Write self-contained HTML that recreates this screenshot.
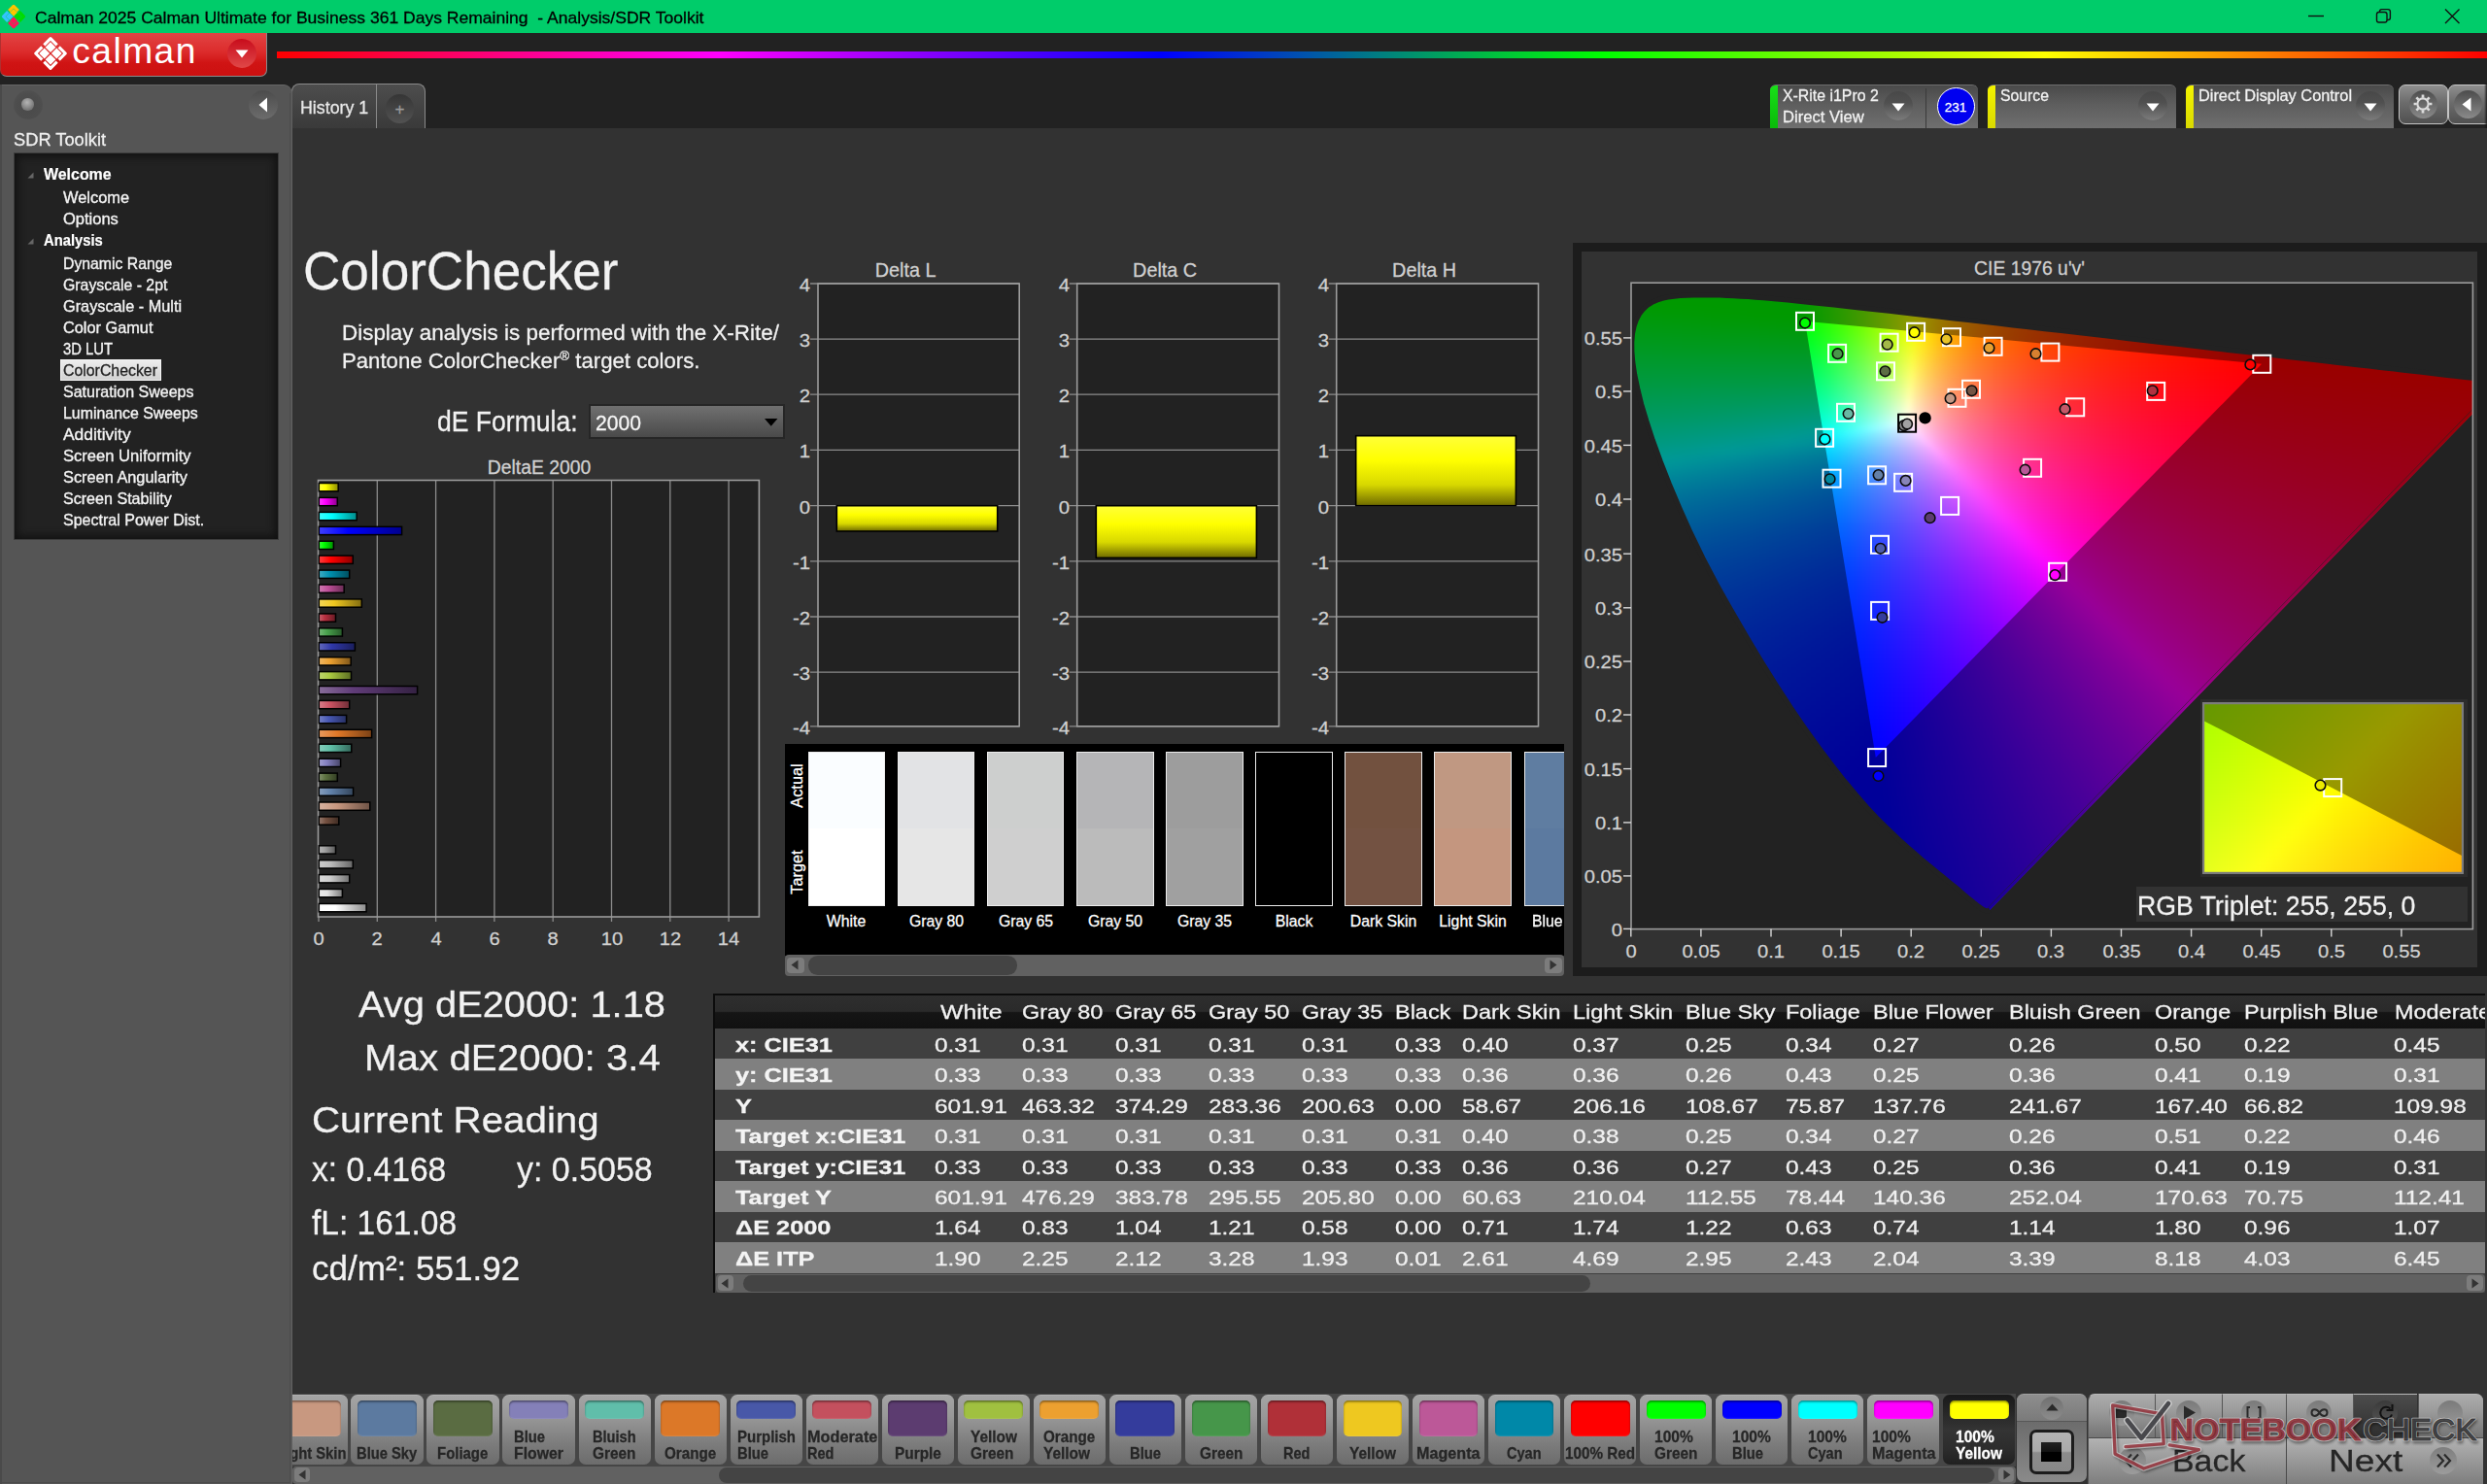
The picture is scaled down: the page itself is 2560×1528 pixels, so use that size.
<!DOCTYPE html>
<html lang="en"><head><meta charset="utf-8"><title>Calman 2025 - Analysis/SDR Toolkit</title>
<style>
html,body{margin:0;padding:0;background:#323232;}
body{width:2560px;height:1528px;position:relative;overflow:hidden;font-family:"Liberation Sans",sans-serif;}
div{position:absolute;box-sizing:border-box;}
.t{white-space:nowrap;-webkit-text-stroke:0.28px;}
.t sup{font-size:0.6em;vertical-align:0.62em;line-height:0;}
svg{position:absolute;overflow:visible;}
</style></head>
<body>
<!-- title bar -->
<div style="left:0.0px;top:0.0px;width:2560.0px;height:34.0px;background:#00cc6a;"></div>
<svg style="left:0px;top:2.95px" width="28" height="28" viewBox="-20.3 -20.3 40.6 40.6">
<g fill="none" stroke-width="4.6" stroke-linejoin="round" stroke-linecap="butt">
<path d="M-6.9 -8.4 L0 -15.3 L6.9 -8.4" stroke="#ffc400"/>
<path d="M-6.9 8.4 L0 15.3 L6.9 8.4" stroke="#ff1458"/>
<path d="M-8.4 -6.9 L-15.3 0 L-8.4 6.9" stroke="#33c4ff"/>
<path d="M8.4 -6.9 L15.3 0 L8.4 6.9" stroke="#00dc00"/>
</g>
<path d="M0 -11.7 L5.6 -6.1 L0 -0.5 L-5.6 -6.1 Z" fill="#ffc400"/>
<path d="M0 11.7 L5.6 6.1 L0 0.5 L-5.6 6.1 Z" fill="#ff1458"/>
<path d="M-11.7 0 L-6.1 -5.6 L-0.5 0 L-6.1 5.6 Z" fill="#33c4ff"/>
<path d="M11.7 0 L6.1 -5.6 L0.5 0 L6.1 5.6 Z" fill="#00dc00"/>
</svg>
<div class="t" style="left:35.5px;top:10.0px;font-size:17.0px;line-height:17.0px;color:#000;transform:scaleX(1.0311);transform-origin:left center;white-space:pre;">Calman 2025 Calman Ultimate for Business 361 Days Remaining  - Analysis/SDR Toolkit</div>
<svg style="left:2360px;top:0" width="200" height="34" viewBox="0 0 200 34">
<g fill="none" stroke="#111" stroke-width="1.4">
<path d="M16 16.5 H32"/>
<rect x="86.5" y="12.5" width="10.5" height="10.5" rx="2.2"/>
<path d="M89.5 12.3 V11.8 a2.2 2.2 0 0 1 2.2-2.2 h6.3 a2.4 2.4 0 0 1 2.4 2.4 v6.3 a2.2 2.2 0 0 1 -2.2 2.2 h-1"/>
<path d="M157 9.5 L171.5 24 M171.5 9.5 L157 24"/>
</g></svg>
<!-- top bar -->
<div style="left:0.0px;top:34.0px;width:2560.0px;height:97.7px;background:#222;"></div>
<div style="left:0.0px;top:34.0px;width:274.5px;height:44.8px;background:linear-gradient(#e24444 0%,#dc2b2b 45%,#d01414 70%,#cc1010 100%);border:1.5px solid #8a8a8a;border-top:none;border-left:1px solid #b03030;border-radius:0 0 7px 7px;"></div>
<svg style="left:31.5px;top:35.4px" width="40" height="40" viewBox="-20 -20 40 40">
<path d="M0 -15.3 L15.3 0 L0 15.3 L-15.3 0 Z" fill="none" stroke="#fff" stroke-width="3.1" stroke-linejoin="round" stroke-dasharray="9.4 2.84 9.4 0" />
<g fill="#fff">
<path d="M0 -11.7 L5.4 -6.3 L0 -0.9 L-5.4 -6.3 Z"/>
<path d="M0 11.7 L5.4 6.3 L0 0.9 L-5.4 6.3 Z"/>
<path d="M-11.7 0 L-6.3 -5.4 L-0.9 0 L-6.3 5.4 Z"/>
<path d="M11.7 0 L6.3 -5.4 L0.9 0 L6.3 5.4 Z"/>
</g></svg>
<div class="t" style="left:74.3px;top:34.3px;font-size:37.2px;line-height:37.2px;color:#fff;letter-spacing:1.45px;-webkit-text-stroke:0;">calman</div>
<div style="left:234.0px;top:40.0px;width:30.0px;height:30.0px;border-radius:50%;background:linear-gradient(#c80c1c,#e04848);"></div>
<svg style="left:242px;top:51px" width="14" height="9"><path d="M0.5 0.5 H13.5 L7 8.5 Z" fill="#fff"/></svg>
<div style="left:285.0px;top:52.5px;width:2275.0px;height:7.5px;background:linear-gradient(90deg,#ff0000 0%,#ff00ff 20%,#0000ff 40%,#00ff00 60%,#ffff00 80%,#ff0000 100%);"></div>
<!-- tabs -->
<div style="left:299.8px;top:86.3px;width:138.2px;height:45.4px;background:linear-gradient(#4d4d4d,#3a3a3a);border:1.2px solid #8a8a8a;border-bottom:none;border-radius:8px 8px 0 0;"></div>
<div style="left:387.2px;top:87.0px;width:1.2px;height:45.0px;background:#8a8a8a;"></div>
<div class="t" style="left:309.0px;top:102.3px;font-size:18.6px;line-height:18.6px;color:#e8e8e8;transform:scaleX(0.958);transform-origin:left center;">History 1</div>
<div style="left:396.5px;top:97.0px;width:29.5px;height:29.5px;border-radius:50%;background:linear-gradient(#353535,#525252);"></div>
<div class="t" style="left:411.5px;top:103.6px;font-size:17px;line-height:17px;color:#9a9a9a;transform:translateX(-50%) scaleX(1.0);transform-origin:center;">+</div>
<!-- device buttons -->
<div style="left:1821.5px;top:86.5px;width:214.5px;height:45.2px;background:linear-gradient(#4a4a4a 0%,#5e5e5e 45%,#6f6f6f 100%);border-radius:6px 6px 0 0;border-top:1px solid #6e6e6e;overflow:hidden;"><div style="left:0.0px;top:0.0px;width:8.5px;height:46.0px;background:linear-gradient(#18e018,#08b808);"></div></div>
<div class="t" style="left:1835.0px;top:90.1px;font-size:16.4px;line-height:16.4px;color:#f2f2f2;transform:scaleX(0.9678);transform-origin:left center;">X-Rite i1Pro 2</div>
<div class="t" style="left:1835.0px;top:112.4px;font-size:16.4px;line-height:16.4px;color:#f2f2f2;transform:scaleX(1.0141);transform-origin:left center;">Direct View</div>
<div style="left:1938.5px;top:94.0px;width:30.0px;height:30.0px;border-radius:50%;background:linear-gradient(#484848 0%,#505050 40%,#7c7c7c 100%);"></div>
<svg style="left:1946.5px;top:106px" width="14" height="9"><path d="M0.5 0.5 H13.5 L7 8.5 Z" fill="#fff"/></svg>
<div style="left:1982.0px;top:91.0px;width:1.2px;height:41.0px;background:#3a3a3a;"></div>
<div style="left:1993.5px;top:89.5px;width:39.0px;height:39.0px;border-radius:50%;background:#0000f0;border:1.5px solid #fff;"></div>
<div class="t" style="left:2013.0px;top:103.6px;font-size:13.5px;line-height:13.5px;color:#fff;transform:translateX(-50%) scaleX(1.0);transform-origin:center;">231</div>
<div style="left:2045.5px;top:86.5px;width:194.5px;height:45.2px;background:linear-gradient(#4a4a4a 0%,#5e5e5e 45%,#6f6f6f 100%);border-radius:6px 6px 0 0;border-top:1px solid #6e6e6e;overflow:hidden;"><div style="left:0.0px;top:0.0px;width:8.5px;height:46.0px;background:linear-gradient(#f4f400,#d8d800);"></div></div>
<div class="t" style="left:2059.0px;top:90.1px;font-size:16.4px;line-height:16.4px;color:#f2f2f2;transform:scaleX(0.9622);transform-origin:left center;">Source</div>
<div style="left:2200.5px;top:94.0px;width:30.0px;height:30.0px;border-radius:50%;background:linear-gradient(#484848 0%,#505050 40%,#7c7c7c 100%);"></div>
<svg style="left:2208.5px;top:106px" width="14" height="9"><path d="M0.5 0.5 H13.5 L7 8.5 Z" fill="#fff"/></svg>
<div style="left:2249.5px;top:86.5px;width:214.5px;height:45.2px;background:linear-gradient(#4a4a4a 0%,#5e5e5e 45%,#6f6f6f 100%);border-radius:6px 6px 0 0;border-top:1px solid #6e6e6e;overflow:hidden;"><div style="left:0.0px;top:0.0px;width:8.5px;height:46.0px;background:linear-gradient(#f4f400,#d8d800);"></div></div>
<div class="t" style="left:2263.0px;top:90.1px;font-size:16.4px;line-height:16.4px;color:#f2f2f2;transform:scaleX(0.997);transform-origin:left center;">Direct Display Control</div>
<div style="left:2425.0px;top:94.0px;width:30.0px;height:30.0px;border-radius:50%;background:linear-gradient(#484848 0%,#505050 40%,#7c7c7c 100%);"></div>
<svg style="left:2433px;top:106px" width="14" height="9"><path d="M0.5 0.5 H13.5 L7 8.5 Z" fill="#fff"/></svg>
<div style="left:2468.5px;top:86.5px;width:51.0px;height:41.5px;background:linear-gradient(#8e8e8e 0%,#6c6c6c 45%,#505050 100%);border:1.5px solid #c4c4c4;border-radius:7px;"></div>
<div style="left:2479.5px;top:92.5px;width:29.0px;height:29.0px;border-radius:50%;background:linear-gradient(#4c4c4c,#8a8a8a);"></div>
<svg style="left:2483px;top:96px" width="22" height="22" viewBox="-11 -11 22 22">
<g fill="none" stroke="#dcdcdc">
<circle r="5.6" stroke-width="2.1"/>
<g stroke-width="2.7" stroke-linecap="butt">
<path d="M0 -9.4 V-6.2 M0 9.4 V6.2 M-9.4 0 H-6.2 M9.4 0 H6.2"/>
<path d="M-6.65 -6.65 L-4.4 -4.4 M6.65 6.65 L4.4 4.4 M-6.65 6.65 L-4.4 4.4 M6.65 -6.65 L4.4 -4.4"/>
</g></g></svg>
<div style="left:2520.0px;top:86.5px;width:46.0px;height:41.5px;background:linear-gradient(#8e8e8e 0%,#6c6c6c 45%,#505050 100%);border:1.5px solid #c4c4c4;border-radius:7px;"></div>
<div style="left:2525.5px;top:92.5px;width:29.0px;height:29.0px;border-radius:50%;background:linear-gradient(#4c4c4c,#8a8a8a);"></div>
<svg style="left:2534px;top:100px" width="10" height="15"><path d="M9.5 0.5 V14.5 L0.5 7.5 Z" fill="#fff"/></svg>
<div style="left:2556.5px;top:86.0px;width:3.5px;height:46.0px;background:linear-gradient(90deg,rgba(20,20,20,0),rgba(20,20,20,0.85));"></div>
<!-- sidebar -->
<div style="left:0.0px;top:87.0px;width:301.0px;height:1445.0px;background:#555;border-top:1px solid #666;border-right:1.5px solid #5f5f5f;border-radius:0 9px 0 0;"></div>
<div style="left:0.0px;top:87.0px;width:1.5px;height:1445.0px;background:#4a4a4a;"></div>
<div style="left:298.2px;top:96.0px;width:1.0px;height:1430.0px;background:#4c4c4c;"></div>
<div style="left:1.5px;top:1525.5px;width:297.5px;height:1.0px;background:#4c4c4c;"></div>
<div style="left:13.5px;top:92.5px;width:30.0px;height:30.0px;border-radius:50%;background:radial-gradient(circle at 50% 55%,#4a4a4a 0%,#4d4d4d 55%,#555 100%);"></div>
<div style="left:22.0px;top:101.0px;width:12.5px;height:12.5px;border-radius:50%;background:radial-gradient(circle at 45% 35%,#b4b4b4 0%,#8c8c8c 45%,#5c5c5c 100%);"></div>
<div style="left:255.5px;top:92.5px;width:30.0px;height:30.0px;border-radius:50%;background:linear-gradient(#4c4c4c,#6c6c6c);"></div>
<svg style="left:265.5px;top:99.5px" width="10" height="16"><path d="M9 0.5 V15.5 L0.5 8 Z" fill="#fff"/></svg>
<div class="t" style="left:13.5px;top:134.6px;font-size:18.8px;line-height:18.8px;color:#f0f0f0;transform:scaleX(0.9727);transform-origin:left center;-webkit-text-stroke:0.3px #f0f0f0;">SDR Toolkit</div>
<div style="left:14.0px;top:157.0px;width:272.5px;height:399.0px;background:#222;box-shadow:inset 0 0 9px 3px #111;border:1px solid #3c3c3c;"></div>
<div class="t" style="left:45.0px;top:171.3px;font-size:16.2px;line-height:16.2px;color:#fff;font-weight:bold;transform:scaleX(0.9841);transform-origin:left center;-webkit-text-stroke:0.2px #fff;">Welcome</div>
<svg style="left:28px;top:177.1px" width="7" height="7"><path d="M6.5 0.5 V6.5 H0.5 Z" fill="#666"/></svg>
<div class="t" style="left:64.5px;top:195.2px;font-size:16.4px;line-height:16.4px;color:#f4f4f4;transform:scaleX(1.0022);transform-origin:left center;-webkit-text-stroke:0.35px #f4f4f4;">Welcome</div>
<div class="t" style="left:64.5px;top:217.3px;font-size:16.4px;line-height:16.4px;color:#f4f4f4;transform:scaleX(1.0067);transform-origin:left center;-webkit-text-stroke:0.35px #f4f4f4;">Options</div>
<div class="t" style="left:45.0px;top:239.4px;font-size:16.2px;line-height:16.2px;color:#fff;font-weight:bold;transform:scaleX(0.9124);transform-origin:left center;-webkit-text-stroke:0.2px #fff;">Analysis</div>
<svg style="left:28px;top:245.2px" width="7" height="7"><path d="M6.5 0.5 V6.5 H0.5 Z" fill="#666"/></svg>
<div class="t" style="left:64.5px;top:263.3px;font-size:16.4px;line-height:16.4px;color:#f4f4f4;transform:scaleX(0.9633);transform-origin:left center;-webkit-text-stroke:0.35px #f4f4f4;">Dynamic Range</div>
<div class="t" style="left:64.5px;top:285.3px;font-size:16.4px;line-height:16.4px;color:#f4f4f4;transform:scaleX(0.9658);transform-origin:left center;-webkit-text-stroke:0.35px #f4f4f4;">Grayscale - 2pt</div>
<div class="t" style="left:64.5px;top:307.3px;font-size:16.4px;line-height:16.4px;color:#f4f4f4;transform:scaleX(0.9933);transform-origin:left center;-webkit-text-stroke:0.35px #f4f4f4;">Grayscale - Multi</div>
<div class="t" style="left:64.5px;top:329.3px;font-size:16.4px;line-height:16.4px;color:#f4f4f4;transform:scaleX(0.995);transform-origin:left center;-webkit-text-stroke:0.35px #f4f4f4;">Color Gamut</div>
<div class="t" style="left:64.5px;top:351.2px;font-size:16.4px;line-height:16.4px;color:#f4f4f4;transform:scaleX(0.9026);transform-origin:left center;-webkit-text-stroke:0.35px #f4f4f4;">3D LUT</div>
<div style="left:61.5px;top:369.5px;width:104.0px;height:22.0px;background:linear-gradient(#ededed,#d2d2d2);border:1px solid #f4f4f4;"></div>
<div class="t" style="left:64.5px;top:373.2px;font-size:16.4px;line-height:16.4px;color:#222;transform:scaleX(0.9675);transform-origin:left center;-webkit-text-stroke:0.3px #222;">ColorChecker</div>
<div class="t" style="left:64.5px;top:395.2px;font-size:16.4px;line-height:16.4px;color:#f4f4f4;transform:scaleX(0.9777);transform-origin:left center;-webkit-text-stroke:0.35px #f4f4f4;">Saturation Sweeps</div>
<div class="t" style="left:64.5px;top:417.2px;font-size:16.4px;line-height:16.4px;color:#f4f4f4;transform:scaleX(0.9697);transform-origin:left center;-webkit-text-stroke:0.35px #f4f4f4;">Luminance Sweeps</div>
<div class="t" style="left:64.5px;top:439.1px;font-size:16.4px;line-height:16.4px;color:#f4f4f4;transform:scaleX(1.0621);transform-origin:left center;-webkit-text-stroke:0.35px #f4f4f4;">Additivity</div>
<div class="t" style="left:64.5px;top:461.1px;font-size:16.4px;line-height:16.4px;color:#f4f4f4;transform:scaleX(1.0105);transform-origin:left center;-webkit-text-stroke:0.35px #f4f4f4;">Screen Uniformity</div>
<div class="t" style="left:64.5px;top:482.8px;font-size:16.4px;line-height:16.4px;color:#f4f4f4;transform:scaleX(0.9965);transform-origin:left center;-webkit-text-stroke:0.35px #f4f4f4;">Screen Angularity</div>
<div class="t" style="left:64.5px;top:504.7px;font-size:16.4px;line-height:16.4px;color:#f4f4f4;transform:scaleX(0.9812);transform-origin:left center;-webkit-text-stroke:0.35px #f4f4f4;">Screen Stability</div>
<div class="t" style="left:64.5px;top:526.7px;font-size:16.4px;line-height:16.4px;color:#f4f4f4;transform:scaleX(0.978);transform-origin:left center;-webkit-text-stroke:0.35px #f4f4f4;">Spectral Power Dist.</div>
<!-- heading -->
<div class="t" style="left:311.5px;top:250.6px;font-size:56px;line-height:56px;color:#f2f2f2;transform:scaleX(0.9478);transform-origin:left center;">ColorChecker</div>
<div class="t" style="left:351.5px;top:330.9px;font-size:22.8px;line-height:22.8px;color:#f2f2f2;transform:scaleX(0.9837);transform-origin:left center;">Display analysis is performed with the X-Rite/</div>
<div class="t" style="left:351.5px;top:360.2px;font-size:22.8px;line-height:22.8px;color:#f2f2f2;transform:scaleX(0.9726);transform-origin:left center;">Pantone ColorChecker<sup>®</sup> target colors.</div>
<div class="t" style="left:450.0px;top:419.8px;font-size:28.9px;line-height:28.9px;color:#f2f2f2;transform:scaleX(0.9193);transform-origin:left center;">dE Formula:</div>
<div style="left:605.5px;top:416.0px;width:202.5px;height:35.5px;background:linear-gradient(#707070,#4a4a4a);border:2px solid #262626;"></div>
<div class="t" style="left:613.0px;top:425.2px;font-size:22.6px;line-height:22.6px;color:#f6f6f6;transform:scaleX(0.9348);transform-origin:left center;">2000</div>
<svg style="left:787px;top:431px" width="14" height="8"><path d="M0 0 H13.4 L6.7 7.8 Z" fill="#000"/></svg>
<!-- DeltaE 2000 chart -->
<div class="t" style="left:555.0px;top:471.7px;font-size:19.5px;line-height:19.5px;color:#d0d0d0;transform:translateX(-50%) scaleX(0.9932);transform-origin:center;">DeltaE 2000</div>
<svg style="left:0;top:0" width="2560" height="1528" viewBox="0 0 2560 1528">
<defs>
<linearGradient id="bg0" x1="0" x2="1" y1="0" y2="0"><stop offset="0" stop-color="#ffff3f"/><stop offset="0.35" stop-color="#ffff00"/><stop offset="1" stop-color="#8c8c00"/></linearGradient>
<linearGradient id="bg1" x1="0" x2="1" y1="0" y2="0"><stop offset="0" stop-color="#ff3fff"/><stop offset="0.35" stop-color="#ff00ff"/><stop offset="1" stop-color="#8c008c"/></linearGradient>
<linearGradient id="bg2" x1="0" x2="1" y1="0" y2="0"><stop offset="0" stop-color="#3fffff"/><stop offset="0.35" stop-color="#00ffff"/><stop offset="1" stop-color="#008c8c"/></linearGradient>
<linearGradient id="bg3" x1="0" x2="1" y1="0" y2="0"><stop offset="0" stop-color="#3f3fff"/><stop offset="0.35" stop-color="#0000ff"/><stop offset="1" stop-color="#00008c"/></linearGradient>
<linearGradient id="bg4" x1="0" x2="1" y1="0" y2="0"><stop offset="0" stop-color="#3fff3f"/><stop offset="0.35" stop-color="#00ff00"/><stop offset="1" stop-color="#008c00"/></linearGradient>
<linearGradient id="bg5" x1="0" x2="1" y1="0" y2="0"><stop offset="0" stop-color="#ff3f3f"/><stop offset="0.35" stop-color="#ff0000"/><stop offset="1" stop-color="#8c0000"/></linearGradient>
<linearGradient id="bg6" x1="0" x2="1" y1="0" y2="0"><stop offset="0" stop-color="#3fabc3"/><stop offset="0.35" stop-color="#0090b0"/><stop offset="1" stop-color="#004f60"/></linearGradient>
<linearGradient id="bg7" x1="0" x2="1" y1="0" y2="0"><stop offset="0" stop-color="#cf7bb3"/><stop offset="0.35" stop-color="#c0509a"/><stop offset="1" stop-color="#692c54"/></linearGradient>
<linearGradient id="bg8" x1="0" x2="1" y1="0" y2="0"><stop offset="0" stop-color="#f3d557"/><stop offset="0.35" stop-color="#f0c820"/><stop offset="1" stop-color="#846e11"/></linearGradient>
<linearGradient id="bg9" x1="0" x2="1" y1="0" y2="0"><stop offset="0" stop-color="#c9636f"/><stop offset="0.35" stop-color="#b83040"/><stop offset="1" stop-color="#651a23"/></linearGradient>
<linearGradient id="bg10" x1="0" x2="1" y1="0" y2="0"><stop offset="0" stop-color="#75b778"/><stop offset="0.35" stop-color="#48a04c"/><stop offset="1" stop-color="#275829"/></linearGradient>
<linearGradient id="bg11" x1="0" x2="1" y1="0" y2="0"><stop offset="0" stop-color="#6369bd"/><stop offset="0.35" stop-color="#3038a8"/><stop offset="1" stop-color="#1a1e5c"/></linearGradient>
<linearGradient id="bg12" x1="0" x2="1" y1="0" y2="0"><stop offset="0" stop-color="#f0b763"/><stop offset="0.35" stop-color="#eca030"/><stop offset="1" stop-color="#81581a"/></linearGradient>
<linearGradient id="bg13" x1="0" x2="1" y1="0" y2="0"><stop offset="0" stop-color="#bdd56f"/><stop offset="0.35" stop-color="#a8c840"/><stop offset="1" stop-color="#5c6e23"/></linearGradient>
<linearGradient id="bg14" x1="0" x2="1" y1="0" y2="0"><stop offset="0" stop-color="#876c99"/><stop offset="0.35" stop-color="#603c78"/><stop offset="1" stop-color="#342142"/></linearGradient>
<linearGradient id="bg15" x1="0" x2="1" y1="0" y2="0"><stop offset="0" stop-color="#d87e8a"/><stop offset="0.35" stop-color="#cc5464"/><stop offset="1" stop-color="#702e37"/></linearGradient>
<linearGradient id="bg16" x1="0" x2="1" y1="0" y2="0"><stop offset="0" stop-color="#7581c6"/><stop offset="0.35" stop-color="#4858b4"/><stop offset="1" stop-color="#273063"/></linearGradient>
<linearGradient id="bg17" x1="0" x2="1" y1="0" y2="0"><stop offset="0" stop-color="#e7995d"/><stop offset="0.35" stop-color="#e07828"/><stop offset="1" stop-color="#7b4216"/></linearGradient>
<linearGradient id="bg18" x1="0" x2="1" y1="0" y2="0"><stop offset="0" stop-color="#87cfbd"/><stop offset="0.35" stop-color="#60c0a8"/><stop offset="1" stop-color="#34695c"/></linearGradient>
<linearGradient id="bg19" x1="0" x2="1" y1="0" y2="0"><stop offset="0" stop-color="#a29fcf"/><stop offset="0.35" stop-color="#8480c0"/><stop offset="1" stop-color="#484669"/></linearGradient>
<linearGradient id="bg20" x1="0" x2="1" y1="0" y2="0"><stop offset="0" stop-color="#84936f"/><stop offset="0.35" stop-color="#5c7040"/><stop offset="1" stop-color="#323d23"/></linearGradient>
<linearGradient id="bg21" x1="0" x2="1" y1="0" y2="0"><stop offset="0" stop-color="#879fbd"/><stop offset="0.35" stop-color="#6080a8"/><stop offset="1" stop-color="#34465c"/></linearGradient>
<linearGradient id="bg22" x1="0" x2="1" y1="0" y2="0"><stop offset="0" stop-color="#d5b19f"/><stop offset="0.35" stop-color="#c89880"/><stop offset="1" stop-color="#6e5346"/></linearGradient>
<linearGradient id="bg23" x1="0" x2="1" y1="0" y2="0"><stop offset="0" stop-color="#967b6f"/><stop offset="0.35" stop-color="#745040"/><stop offset="1" stop-color="#3f2c23"/></linearGradient>
<linearGradient id="bg24" x1="0" x2="1" y1="0" y2="0"><stop offset="0" stop-color="#3f3f3f"/><stop offset="0.35" stop-color="#000000"/><stop offset="1" stop-color="#000000"/></linearGradient>
<linearGradient id="bg25" x1="0" x2="1" y1="0" y2="0"><stop offset="0" stop-color="#b7b7b7"/><stop offset="0.35" stop-color="#a0a0a0"/><stop offset="1" stop-color="#585858"/></linearGradient>
<linearGradient id="bg26" x1="0" x2="1" y1="0" y2="0"><stop offset="0" stop-color="#cbcbcb"/><stop offset="0.35" stop-color="#bababa"/><stop offset="1" stop-color="#666666"/></linearGradient>
<linearGradient id="bg27" x1="0" x2="1" y1="0" y2="0"><stop offset="0" stop-color="#dadada"/><stop offset="0.35" stop-color="#cecece"/><stop offset="1" stop-color="#717171"/></linearGradient>
<linearGradient id="bg28" x1="0" x2="1" y1="0" y2="0"><stop offset="0" stop-color="#eaeaea"/><stop offset="0.35" stop-color="#e4e4e4"/><stop offset="1" stop-color="#7d7d7d"/></linearGradient>
<linearGradient id="bg29" x1="0" x2="1" y1="0" y2="0"><stop offset="0" stop-color="#ffffff"/><stop offset="0.35" stop-color="#ffffff"/><stop offset="1" stop-color="#8c8c8c"/></linearGradient>
</defs>
<rect x="327.5" y="494.5" width="453.9" height="449.5" fill="#222"/>
<g stroke="#8c8c8c" stroke-width="1.3"><path d="M388.3 495 V949"/><path d="M448.6 495 V949"/><path d="M508.9 495 V949"/><path d="M569.2 495 V949"/><path d="M629.5 495 V949"/><path d="M689.8 495 V949"/><path d="M750.1 495 V949"/><path d="M328.0 944 V949"/></g>
<rect x="327.5" y="494.5" width="453.9" height="449.5" fill="none" stroke="#9c9c9c" stroke-width="1.6"/>
<rect x="328.3" y="497.5" width="19.9" height="8.3" fill="url(#bg0)" stroke="#000" stroke-width="1.5"/>
<rect x="328.3" y="512.4" width="19.0" height="8.3" fill="url(#bg1)" stroke="#000" stroke-width="1.5"/>
<rect x="328.3" y="527.4" width="38.9" height="8.3" fill="url(#bg2)" stroke="#000" stroke-width="1.5"/>
<rect x="328.3" y="542.3" width="85.3" height="8.3" fill="url(#bg3)" stroke="#000" stroke-width="1.5"/>
<rect x="328.3" y="557.2" width="15.1" height="8.3" fill="url(#bg4)" stroke="#000" stroke-width="1.5"/>
<rect x="328.3" y="572.1" width="35.0" height="8.3" fill="url(#bg5)" stroke="#000" stroke-width="1.5"/>
<rect x="328.3" y="587.1" width="31.4" height="8.3" fill="url(#bg6)" stroke="#000" stroke-width="1.5"/>
<rect x="328.3" y="602.0" width="25.9" height="8.3" fill="url(#bg7)" stroke="#000" stroke-width="1.5"/>
<rect x="328.3" y="616.9" width="44.0" height="8.3" fill="url(#bg8)" stroke="#000" stroke-width="1.5"/>
<rect x="328.3" y="631.9" width="17.2" height="8.3" fill="url(#bg9)" stroke="#000" stroke-width="1.5"/>
<rect x="328.3" y="646.8" width="24.1" height="8.3" fill="url(#bg10)" stroke="#000" stroke-width="1.5"/>
<rect x="328.3" y="661.7" width="37.1" height="8.3" fill="url(#bg11)" stroke="#000" stroke-width="1.5"/>
<rect x="328.3" y="676.7" width="32.9" height="8.3" fill="url(#bg12)" stroke="#000" stroke-width="1.5"/>
<rect x="328.3" y="691.6" width="33.2" height="8.3" fill="url(#bg13)" stroke="#000" stroke-width="1.5"/>
<rect x="328.3" y="706.5" width="101.3" height="8.3" fill="url(#bg14)" stroke="#000" stroke-width="1.5"/>
<rect x="328.3" y="721.4" width="31.4" height="8.3" fill="url(#bg15)" stroke="#000" stroke-width="1.5"/>
<rect x="328.3" y="736.4" width="28.3" height="8.3" fill="url(#bg16)" stroke="#000" stroke-width="1.5"/>
<rect x="328.3" y="751.3" width="54.3" height="8.3" fill="url(#bg17)" stroke="#000" stroke-width="1.5"/>
<rect x="328.3" y="766.2" width="33.5" height="8.3" fill="url(#bg18)" stroke="#000" stroke-width="1.5"/>
<rect x="328.3" y="781.2" width="22.3" height="8.3" fill="url(#bg19)" stroke="#000" stroke-width="1.5"/>
<rect x="328.3" y="796.1" width="19.0" height="8.3" fill="url(#bg20)" stroke="#000" stroke-width="1.5"/>
<rect x="328.3" y="811.0" width="35.3" height="8.3" fill="url(#bg21)" stroke="#000" stroke-width="1.5"/>
<rect x="328.3" y="826.0" width="52.5" height="8.3" fill="url(#bg22)" stroke="#000" stroke-width="1.5"/>
<rect x="328.3" y="840.9" width="20.5" height="8.3" fill="url(#bg23)" stroke="#000" stroke-width="1.5"/>
<rect x="328.3" y="870.8" width="17.2" height="8.3" fill="url(#bg25)" stroke="#000" stroke-width="1.5"/>
<rect x="328.3" y="885.7" width="35.0" height="8.3" fill="url(#bg26)" stroke="#000" stroke-width="1.5"/>
<rect x="328.3" y="900.6" width="31.4" height="8.3" fill="url(#bg27)" stroke="#000" stroke-width="1.5"/>
<rect x="328.3" y="915.5" width="24.1" height="8.3" fill="url(#bg28)" stroke="#000" stroke-width="1.5"/>
<rect x="328.3" y="930.5" width="48.8" height="8.3" fill="url(#bg29)" stroke="#000" stroke-width="1.5"/>
</svg>
<div class="t" style="left:328.0px;top:957.2px;font-size:19.2px;line-height:19.2px;color:#d0d0d0;transform:translateX(-50%) scaleX(1.05);transform-origin:center;">0</div>
<div class="t" style="left:388.3px;top:957.2px;font-size:19.2px;line-height:19.2px;color:#d0d0d0;transform:translateX(-50%) scaleX(1.05);transform-origin:center;">2</div>
<div class="t" style="left:448.6px;top:957.2px;font-size:19.2px;line-height:19.2px;color:#d0d0d0;transform:translateX(-50%) scaleX(1.05);transform-origin:center;">4</div>
<div class="t" style="left:508.9px;top:957.2px;font-size:19.2px;line-height:19.2px;color:#d0d0d0;transform:translateX(-50%) scaleX(1.05);transform-origin:center;">6</div>
<div class="t" style="left:569.2px;top:957.2px;font-size:19.2px;line-height:19.2px;color:#d0d0d0;transform:translateX(-50%) scaleX(1.05);transform-origin:center;">8</div>
<div class="t" style="left:629.5px;top:957.2px;font-size:19.2px;line-height:19.2px;color:#d0d0d0;transform:translateX(-50%) scaleX(1.05);transform-origin:center;">10</div>
<div class="t" style="left:689.8px;top:957.2px;font-size:19.2px;line-height:19.2px;color:#d0d0d0;transform:translateX(-50%) scaleX(1.05);transform-origin:center;">12</div>
<div class="t" style="left:750.1px;top:957.2px;font-size:19.2px;line-height:19.2px;color:#d0d0d0;transform:translateX(-50%) scaleX(1.05);transform-origin:center;">14</div>
<!-- readings -->
<div class="t" style="left:368.8px;top:1015.7px;font-size:37px;line-height:37px;color:#f2f2f2;transform:scaleX(1.0766);transform-origin:left center;">Avg dE2000: 1.18</div>
<div class="t" style="left:375.0px;top:1071.1px;font-size:37px;line-height:37px;color:#f2f2f2;transform:scaleX(1.0903);transform-origin:left center;">Max dE2000: 3.4</div>
<div class="t" style="left:321.0px;top:1135.2px;font-size:37.8px;line-height:37.8px;color:#f2f2f2;transform:scaleX(1.0661);transform-origin:left center;">Current Reading</div>
<div class="t" style="left:321.0px;top:1186.5px;font-size:34.8px;line-height:34.8px;color:#f2f2f2;transform:scaleX(0.9659);transform-origin:left center;">x: 0.4168</div>
<div class="t" style="left:532.4px;top:1186.5px;font-size:34.8px;line-height:34.8px;color:#f2f2f2;transform:scaleX(0.9757);transform-origin:left center;">y: 0.5058</div>
<div class="t" style="left:321.0px;top:1242.1px;font-size:34.8px;line-height:34.8px;color:#f2f2f2;transform:scaleX(0.9632);transform-origin:left center;">fL: 161.08</div>
<div class="t" style="left:321.0px;top:1288.5px;font-size:34.8px;line-height:34.8px;color:#f2f2f2;transform:scaleX(1.0071);transform-origin:left center;">cd/m²: 551.92</div>
<!-- delta charts -->
<svg style="left:0;top:0" width="2560" height="1528" viewBox="0 0 2560 1528">
<defs><linearGradient id="yg" x1="0" x2="0" y1="0" y2="1"><stop offset="0" stop-color="#ffff38"/><stop offset="0.35" stop-color="#ffff00"/><stop offset="0.7" stop-color="#d8d800"/><stop offset="1" stop-color="#6e6a00"/></linearGradient></defs>
<rect x="842.0" y="292.0" width="207.2" height="455.8" fill="#222"/>
<g stroke="#8c8c8c" stroke-width="1.3"><path d="M834.0 747.8 H1049.2"/><path d="M834.0 692.2 H1049.2"/><path d="M834.0 635.0 H1049.2"/><path d="M834.0 577.9 H1049.2"/><path d="M834.0 520.7 H1049.2"/><path d="M834.0 463.4 H1049.2"/><path d="M834.0 406.2 H1049.2"/><path d="M834.0 349.2 H1049.2"/><path d="M834.0 292.0 H1049.2"/></g>
<rect x="842.0" y="292.0" width="207.2" height="455.8" fill="none" stroke="#9c9c9c" stroke-width="1.6"/>
<rect x="861.3" y="520.7" width="165.4" height="26.3" fill="url(#yg)" stroke="#000" stroke-width="1.6"/>
<rect x="1108.7" y="292.0" width="207.8" height="455.8" fill="#222"/>
<g stroke="#8c8c8c" stroke-width="1.3"><path d="M1100.7 747.8 H1316.5"/><path d="M1100.7 692.2 H1316.5"/><path d="M1100.7 635.0 H1316.5"/><path d="M1100.7 577.9 H1316.5"/><path d="M1100.7 520.7 H1316.5"/><path d="M1100.7 463.4 H1316.5"/><path d="M1100.7 406.2 H1316.5"/><path d="M1100.7 349.2 H1316.5"/><path d="M1100.7 292.0 H1316.5"/></g>
<rect x="1108.7" y="292.0" width="207.8" height="455.8" fill="none" stroke="#9c9c9c" stroke-width="1.6"/>
<rect x="1128.3" y="520.7" width="165.1" height="53.7" fill="url(#yg)" stroke="#000" stroke-width="1.6"/>
<rect x="1375.7" y="292.0" width="207.8" height="455.8" fill="#222"/>
<g stroke="#8c8c8c" stroke-width="1.3"><path d="M1367.7 747.8 H1583.5"/><path d="M1367.7 692.2 H1583.5"/><path d="M1367.7 635.0 H1583.5"/><path d="M1367.7 577.9 H1583.5"/><path d="M1367.7 520.7 H1583.5"/><path d="M1367.7 463.4 H1583.5"/><path d="M1367.7 406.2 H1583.5"/><path d="M1367.7 349.2 H1583.5"/><path d="M1367.7 292.0 H1583.5"/></g>
<rect x="1375.7" y="292.0" width="207.8" height="455.8" fill="none" stroke="#9c9c9c" stroke-width="1.6"/>
<rect x="1395.7" y="448.7" width="164.7" height="72.0" fill="url(#yg)" stroke="#000" stroke-width="1.6"/>
</svg>
<div class="t" style="left:932.1px;top:269.2px;font-size:19.8px;line-height:19.8px;color:#d0d0d0;transform:translateX(-50%) scaleX(1.0);transform-origin:center;">Delta L</div>
<div class="t" style="left:833.8px;top:739.7px;font-size:19.2px;line-height:19.2px;color:#d0d0d0;transform:translateX(-100%) scaleX(1.06);transform-origin:right center;">-4</div>
<div class="t" style="left:833.8px;top:684.1px;font-size:19.2px;line-height:19.2px;color:#d0d0d0;transform:translateX(-100%) scaleX(1.06);transform-origin:right center;">-3</div>
<div class="t" style="left:833.8px;top:626.9px;font-size:19.2px;line-height:19.2px;color:#d0d0d0;transform:translateX(-100%) scaleX(1.06);transform-origin:right center;">-2</div>
<div class="t" style="left:833.8px;top:569.8px;font-size:19.2px;line-height:19.2px;color:#d0d0d0;transform:translateX(-100%) scaleX(1.06);transform-origin:right center;">-1</div>
<div class="t" style="left:833.8px;top:512.6px;font-size:19.2px;line-height:19.2px;color:#d0d0d0;transform:translateX(-100%) scaleX(1.06);transform-origin:right center;">0</div>
<div class="t" style="left:833.8px;top:455.3px;font-size:19.2px;line-height:19.2px;color:#d0d0d0;transform:translateX(-100%) scaleX(1.06);transform-origin:right center;">1</div>
<div class="t" style="left:833.8px;top:398.1px;font-size:19.2px;line-height:19.2px;color:#d0d0d0;transform:translateX(-100%) scaleX(1.06);transform-origin:right center;">2</div>
<div class="t" style="left:833.8px;top:341.1px;font-size:19.2px;line-height:19.2px;color:#d0d0d0;transform:translateX(-100%) scaleX(1.06);transform-origin:right center;">3</div>
<div class="t" style="left:833.8px;top:283.9px;font-size:19.2px;line-height:19.2px;color:#d0d0d0;transform:translateX(-100%) scaleX(1.06);transform-origin:right center;">4</div>
<div class="t" style="left:1199.1px;top:269.2px;font-size:19.8px;line-height:19.8px;color:#d0d0d0;transform:translateX(-50%) scaleX(1.0);transform-origin:center;">Delta C</div>
<div class="t" style="left:1100.5px;top:739.7px;font-size:19.2px;line-height:19.2px;color:#d0d0d0;transform:translateX(-100%) scaleX(1.06);transform-origin:right center;">-4</div>
<div class="t" style="left:1100.5px;top:684.1px;font-size:19.2px;line-height:19.2px;color:#d0d0d0;transform:translateX(-100%) scaleX(1.06);transform-origin:right center;">-3</div>
<div class="t" style="left:1100.5px;top:626.9px;font-size:19.2px;line-height:19.2px;color:#d0d0d0;transform:translateX(-100%) scaleX(1.06);transform-origin:right center;">-2</div>
<div class="t" style="left:1100.5px;top:569.8px;font-size:19.2px;line-height:19.2px;color:#d0d0d0;transform:translateX(-100%) scaleX(1.06);transform-origin:right center;">-1</div>
<div class="t" style="left:1100.5px;top:512.6px;font-size:19.2px;line-height:19.2px;color:#d0d0d0;transform:translateX(-100%) scaleX(1.06);transform-origin:right center;">0</div>
<div class="t" style="left:1100.5px;top:455.3px;font-size:19.2px;line-height:19.2px;color:#d0d0d0;transform:translateX(-100%) scaleX(1.06);transform-origin:right center;">1</div>
<div class="t" style="left:1100.5px;top:398.1px;font-size:19.2px;line-height:19.2px;color:#d0d0d0;transform:translateX(-100%) scaleX(1.06);transform-origin:right center;">2</div>
<div class="t" style="left:1100.5px;top:341.1px;font-size:19.2px;line-height:19.2px;color:#d0d0d0;transform:translateX(-100%) scaleX(1.06);transform-origin:right center;">3</div>
<div class="t" style="left:1100.5px;top:283.9px;font-size:19.2px;line-height:19.2px;color:#d0d0d0;transform:translateX(-100%) scaleX(1.06);transform-origin:right center;">4</div>
<div class="t" style="left:1466.1px;top:269.2px;font-size:19.8px;line-height:19.8px;color:#d0d0d0;transform:translateX(-50%) scaleX(1.0);transform-origin:center;">Delta H</div>
<div class="t" style="left:1367.5px;top:739.7px;font-size:19.2px;line-height:19.2px;color:#d0d0d0;transform:translateX(-100%) scaleX(1.06);transform-origin:right center;">-4</div>
<div class="t" style="left:1367.5px;top:684.1px;font-size:19.2px;line-height:19.2px;color:#d0d0d0;transform:translateX(-100%) scaleX(1.06);transform-origin:right center;">-3</div>
<div class="t" style="left:1367.5px;top:626.9px;font-size:19.2px;line-height:19.2px;color:#d0d0d0;transform:translateX(-100%) scaleX(1.06);transform-origin:right center;">-2</div>
<div class="t" style="left:1367.5px;top:569.8px;font-size:19.2px;line-height:19.2px;color:#d0d0d0;transform:translateX(-100%) scaleX(1.06);transform-origin:right center;">-1</div>
<div class="t" style="left:1367.5px;top:512.6px;font-size:19.2px;line-height:19.2px;color:#d0d0d0;transform:translateX(-100%) scaleX(1.06);transform-origin:right center;">0</div>
<div class="t" style="left:1367.5px;top:455.3px;font-size:19.2px;line-height:19.2px;color:#d0d0d0;transform:translateX(-100%) scaleX(1.06);transform-origin:right center;">1</div>
<div class="t" style="left:1367.5px;top:398.1px;font-size:19.2px;line-height:19.2px;color:#d0d0d0;transform:translateX(-100%) scaleX(1.06);transform-origin:right center;">2</div>
<div class="t" style="left:1367.5px;top:341.1px;font-size:19.2px;line-height:19.2px;color:#d0d0d0;transform:translateX(-100%) scaleX(1.06);transform-origin:right center;">3</div>
<div class="t" style="left:1367.5px;top:283.9px;font-size:19.2px;line-height:19.2px;color:#d0d0d0;transform:translateX(-100%) scaleX(1.06);transform-origin:right center;">4</div>
<!-- swatch strip -->
<div style="left:808.0px;top:765.5px;width:801.5px;height:218.0px;background:#000;"></div>
<div style="left:831.7px;top:773.7px;width:79.5px;height:159.0px;background:linear-gradient(#fafdff 0%,#fafdff 50%,#ffffff 50%,#ffffff 100%);border:1.5px solid #ececec;"></div>
<div class="t" style="left:871.4px;top:939.8px;font-size:16.3px;line-height:16.3px;color:#fff;transform:translateX(-50%) scaleX(0.97);transform-origin:center;">White</div>
<div style="left:923.8px;top:773.7px;width:79.5px;height:159.0px;background:linear-gradient(#e2e3e5 0%,#e2e3e5 50%,#e6e6e6 50%,#e6e6e6 100%);border:1.5px solid #ececec;"></div>
<div class="t" style="left:963.5px;top:939.8px;font-size:16.3px;line-height:16.3px;color:#fff;transform:translateX(-50%) scaleX(0.97);transform-origin:center;">Gray 80</div>
<div style="left:1015.9px;top:773.7px;width:79.5px;height:159.0px;background:linear-gradient(#cdcfce 0%,#cdcfce 50%,#cfcfcf 50%,#cfcfcf 100%);border:1.5px solid #ececec;"></div>
<div class="t" style="left:1055.6px;top:939.8px;font-size:16.3px;line-height:16.3px;color:#fff;transform:translateX(-50%) scaleX(0.97);transform-origin:center;">Gray 65</div>
<div style="left:1108.0px;top:773.7px;width:79.5px;height:159.0px;background:linear-gradient(#b5b5b7 0%,#b5b5b7 50%,#bbbbbb 50%,#bbbbbb 100%);border:1.5px solid #ececec;"></div>
<div class="t" style="left:1147.7px;top:939.8px;font-size:16.3px;line-height:16.3px;color:#fff;transform:translateX(-50%) scaleX(0.97);transform-origin:center;">Gray 50</div>
<div style="left:1200.1px;top:773.7px;width:79.5px;height:159.0px;background:linear-gradient(#9d9d9d 0%,#9d9d9d 50%,#a0a0a0 50%,#a0a0a0 100%);border:1.5px solid #ececec;"></div>
<div class="t" style="left:1239.8px;top:939.8px;font-size:16.3px;line-height:16.3px;color:#fff;transform:translateX(-50%) scaleX(0.97);transform-origin:center;">Gray 35</div>
<div style="left:1292.2px;top:773.7px;width:79.5px;height:159.0px;background:linear-gradient(#000000 0%,#000000 50%,#000000 50%,#000000 100%);border:1.5px solid #ececec;"></div>
<div class="t" style="left:1331.9px;top:939.8px;font-size:16.3px;line-height:16.3px;color:#fff;transform:translateX(-50%) scaleX(0.97);transform-origin:center;">Black</div>
<div style="left:1384.3px;top:773.7px;width:79.5px;height:159.0px;background:linear-gradient(#72513f 0%,#72513f 50%,#735242 50%,#735242 100%);border:1.5px solid #ececec;"></div>
<div class="t" style="left:1424.0px;top:939.8px;font-size:16.3px;line-height:16.3px;color:#fff;transform:translateX(-50%) scaleX(0.97);transform-origin:center;">Dark Skin</div>
<div style="left:1476.4px;top:773.7px;width:79.5px;height:159.0px;background:linear-gradient(#c09882 0%,#c09882 50%,#c4967f 50%,#c4967f 100%);border:1.5px solid #ececec;"></div>
<div class="t" style="left:1516.1px;top:939.8px;font-size:16.3px;line-height:16.3px;color:#fff;transform:translateX(-50%) scaleX(0.97);transform-origin:center;">Light Skin</div>
<div style="left:1568.5px;top:773.7px;width:41.0px;height:159.0px;background:linear-gradient(#5f7da1 0%,#5f7da1 50%,#5c7aa0 50%,#5c7aa0 100%);border:1.5px solid #ececec;border-right:none;"></div>
<div style="left:1558.5px;top:935.0px;width:51.0px;height:26.0px;overflow:hidden;"><div class="t" style="left:18.5px;top:4.6px;font-size:16.3px;line-height:16.3px;color:#fff;transform:scaleX(0.97);transform-origin:left center;">Blue Sky</div></div>
<div class="t" style="left:820.4px;top:809px;font-size:16.3px;line-height:16px;color:#fff;transform:translate(-50%,-50%) rotate(-90deg);">Actual</div>
<div class="t" style="left:820.4px;top:898px;font-size:16.3px;line-height:16px;color:#fff;transform:translate(-50%,-50%) rotate(-90deg);">Target</div>
<div style="left:808.0px;top:983.0px;width:801.5px;height:21.5px;background:#616161;border-radius:4px;"></div>
<div style="left:832.0px;top:984.0px;width:215.0px;height:19.5px;background:#444;border-radius:9.8px;"></div>
<div style="left:810.0px;top:985.5px;width:17.5px;height:16.5px;background:#7c7c7c;border-radius:4px;"></div>
<svg style="left:814.2px;top:988.2px" width="9" height="11"><path d="M7.5 0.5 V10.5 L0.5 5.5 Z" fill="#333"/></svg>
<div style="left:1590.0px;top:985.5px;width:17.5px;height:16.5px;background:#7c7c7c;border-radius:4px;"></div>
<svg style="left:1595.2px;top:988.2px" width="9" height="11"><path d="M0.5 0.5 V10.5 L7.5 5.5 Z" fill="#333"/></svg>
<!-- CIE chart panel -->
<div style="left:1618.5px;top:249.5px;width:945.0px;height:755.5px;background:#1c1c1c;"></div>
<div style="left:1628.0px;top:258.5px;width:921.5px;height:737.0px;background:#323232;"></div>
<svg style="left:1679.0px;top:291.2px;overflow:hidden" width="866.4" height="665.4" viewBox="1679.0 291.2 866.4 665.4">
<defs><clipPath id="locc"><path d="M2048.3 937.3 L2047.9 937.5 L2047.3 937.8 L2046.7 938.0 L2046.2 938.1 L2045.7 938.1 L2045.0 938.0 L2044.0 937.8 L2042.8 937.4 L2041.6 936.9 L2040.5 936.3 L2039.3 935.4 L2037.9 934.5 L2036.4 933.3 L2034.7 932.1 L2032.8 930.6 L2030.7 928.8 L2028.2 926.8 L2025.6 924.7 L2022.7 922.3 L2019.7 919.6 L2016.4 916.8 L2012.8 913.8 L2009.0 910.7 L2004.7 907.2 L2000.0 903.3 L1994.9 899.2 L1989.5 894.7 L1983.7 889.9 L1977.6 884.9 L1971.1 879.3 L1964.1 873.2 L1956.6 866.5 L1948.6 858.9 L1940.2 850.9 L1931.3 842.0 L1921.5 831.4 L1910.4 818.7 L1898.3 804.2 L1885.6 788.0 L1872.0 770.0 L1857.8 750.1 L1843.1 728.7 L1828.0 705.4 L1812.5 680.5 L1797.1 654.9 L1781.9 628.6 L1766.8 601.7 L1752.9 575.1 L1740.2 548.9 L1728.6 523.0 L1718.2 498.4 L1709.2 475.4 L1701.3 453.7 L1694.8 433.8 L1689.5 416.1 L1685.6 400.1 L1682.6 385.8 L1680.7 373.2 L1679.8 362.2 L1679.7 352.4 L1680.4 343.7 L1682.0 336.1 L1684.3 329.4 L1687.3 323.7 L1691.1 318.9 L1695.3 314.9 L1700.1 311.7 L1705.4 309.3 L1711.0 307.4 L1716.9 306.1 L1723.1 305.3 L1729.6 304.7 L1736.2 304.3 L1743.0 304.1 L1749.9 304.0 L1756.7 304.0 L1763.5 304.1 L1770.5 304.2 L1777.5 304.5 L1784.6 304.8 L1792.0 305.3 L1799.5 305.7 L1807.2 306.3 L1815.1 306.9 L1823.3 307.6 L1831.6 308.4 L1840.3 309.2 L1849.2 310.1 L1858.4 311.0 L1867.9 312.0 L1877.8 313.0 L1888.0 314.1 L1898.6 315.3 L1909.5 316.5 L1920.8 317.8 L1932.5 319.1 L1944.6 320.4 L1957.1 321.8 L1970.0 323.3 L1983.4 324.8 L1997.1 326.4 L2011.3 328.0 L2025.9 329.7 L2040.9 331.4 L2056.3 333.2 L2072.1 335.0 L2088.3 336.9 L2104.8 338.8 L2121.6 340.7 L2138.8 342.7 L2156.1 344.7 L2173.7 346.7 L2191.3 348.8 L2208.9 350.8 L2226.1 352.8 L2243.1 354.7 L2260.0 356.7 L2276.8 358.6 L2293.5 360.5 L2309.7 362.4 L2325.3 364.2 L2340.3 365.9 L2354.8 367.5 L2368.7 369.1 L2382.0 370.7 L2394.6 372.1 L2406.6 373.5 L2417.9 374.8 L2428.5 376.0 L2438.6 377.2 L2448.0 378.3 L2456.9 379.3 L2464.7 380.2 L2472.0 381.0 L2480.9 382.0 L2493.0 383.4 L2506.8 385.0 L2519.2 386.5 L2528.9 387.6 L2537.2 388.5 L2544.4 389.3 L2550.2 390.0 L2554.9 390.5 L2559.3 391.1 L2564.1 391.6 L2568.7 392.1 L2572.4 392.6 L2574.8 392.8 L2576.4 393.0 L2577.4 393.1 Z"/></clipPath><filter id="cblur" color-interpolation-filters="sRGB" x="-5%" y="-5%" width="110%" height="110%"><feGaussianBlur stdDeviation="5.5"/></filter></defs>
<rect x="1679.0" y="291.2" width="866.4" height="665.4" fill="#222"/>
<g clip-path="url(#locc)"><g filter="url(#cblur)" shape-rendering="crispEdges" fill="none" stroke-width="11">
<path d="M1691 296h161" stroke="#00ff00"/>
<path d="M1851 296h11" stroke="#06ff00"/>
<path d="M1861 296h11" stroke="#16ff00"/>
<path d="M1871 296h11" stroke="#27ff00"/>
<path d="M1681 306h171" stroke="#00ff00"/>
<path d="M1851 306h11" stroke="#03ff00"/>
<path d="M1861 306h11" stroke="#14ff00"/>
<path d="M1871 306h11" stroke="#25ff00"/>
<path d="M1881 306h11" stroke="#37ff00"/>
<path d="M1891 306h11" stroke="#4aff00"/>
<path d="M1901 306h11" stroke="#5eff00"/>
<path d="M1911 306h11" stroke="#72ff00"/>
<path d="M1921 306h11" stroke="#87ff00"/>
<path d="M1931 306h11" stroke="#9eff00"/>
<path d="M1941 306h11" stroke="#b5ff00"/>
<path d="M1951 306h11" stroke="#cdff00"/>
<path d="M1961 306h11" stroke="#e6ff00"/>
<path d="M1671 316h11" stroke="#00ff03"/>
<path d="M1681 316h11" stroke="#00ff02"/>
<path d="M1691 316h11" stroke="#00ff01"/>
<path d="M1701 316h151" stroke="#00ff00"/>
<path d="M1851 316h11" stroke="#01ff00"/>
<path d="M1861 316h11" stroke="#12ff00"/>
<path d="M1871 316h11" stroke="#23ff00"/>
<path d="M1881 316h11" stroke="#36ff00"/>
<path d="M1891 316h11" stroke="#49ff00"/>
<path d="M1901 316h11" stroke="#5dff00"/>
<path d="M1911 316h11" stroke="#72ff00"/>
<path d="M1921 316h11" stroke="#87ff00"/>
<path d="M1931 316h11" stroke="#9eff00"/>
<path d="M1941 316h11" stroke="#b6ff00"/>
<path d="M1951 316h11" stroke="#ceff00"/>
<path d="M1961 316h11" stroke="#e8ff00"/>
<path d="M1971 316h11" stroke="#fffa00"/>
<path d="M1981 316h11" stroke="#ffe200"/>
<path d="M1991 316h11" stroke="#ffcc00"/>
<path d="M2001 316h11" stroke="#ffba00"/>
<path d="M2011 316h11" stroke="#ffaa00"/>
<path d="M2021 316h11" stroke="#ff9b00"/>
<path d="M2031 316h11" stroke="#ff8f00"/>
<path d="M2041 316h11" stroke="#ff8300"/>
<path d="M2051 316h11" stroke="#ff7900"/>
<path d="M1671 326h21" stroke="#00ff0e"/>
<path d="M1691 326h11" stroke="#00ff0d"/>
<path d="M1701 326h11" stroke="#00ff0c"/>
<path d="M1711 326h11" stroke="#00ff0b"/>
<path d="M1721 326h11" stroke="#00ff0a"/>
<path d="M1731 326h11" stroke="#00ff09"/>
<path d="M1741 326h11" stroke="#00ff08"/>
<path d="M1751 326h11" stroke="#00ff06"/>
<path d="M1761 326h11" stroke="#00ff05"/>
<path d="M1771 326h11" stroke="#00ff04"/>
<path d="M1781 326h11" stroke="#00ff03"/>
<path d="M1791 326h11" stroke="#00ff02"/>
<path d="M1801 326h61" stroke="#00ff00"/>
<path d="M1861 326h11" stroke="#0fff00"/>
<path d="M1871 326h11" stroke="#21ff00"/>
<path d="M1881 326h11" stroke="#34ff00"/>
<path d="M1891 326h11" stroke="#47ff00"/>
<path d="M1901 326h11" stroke="#5cff00"/>
<path d="M1911 326h11" stroke="#71ff00"/>
<path d="M1921 326h11" stroke="#87ff00"/>
<path d="M1931 326h11" stroke="#9eff00"/>
<path d="M1941 326h11" stroke="#b6ff00"/>
<path d="M1951 326h11" stroke="#d0ff00"/>
<path d="M1961 326h11" stroke="#eaff00"/>
<path d="M1971 326h11" stroke="#fff800"/>
<path d="M1981 326h11" stroke="#ffdf00"/>
<path d="M1991 326h11" stroke="#ffca00"/>
<path d="M2001 326h11" stroke="#ffb700"/>
<path d="M2011 326h11" stroke="#ffa700"/>
<path d="M2021 326h11" stroke="#ff9900"/>
<path d="M2031 326h11" stroke="#ff8c00"/>
<path d="M2041 326h11" stroke="#ff8100"/>
<path d="M2051 326h11" stroke="#ff7600"/>
<path d="M2061 326h11" stroke="#ff6d00"/>
<path d="M2071 326h11" stroke="#ff6500"/>
<path d="M2081 326h11" stroke="#ff5d00"/>
<path d="M2091 326h11" stroke="#ff5600"/>
<path d="M2101 326h11" stroke="#ff5000"/>
<path d="M2111 326h11" stroke="#ff4a00"/>
<path d="M2121 326h11" stroke="#ff4400"/>
<path d="M2131 326h11" stroke="#ff3f00"/>
<path d="M1671 336h11" stroke="#00ff1b"/>
<path d="M1681 336h11" stroke="#00ff1a"/>
<path d="M1691 336h11" stroke="#00ff19"/>
<path d="M1701 336h11" stroke="#00ff18"/>
<path d="M1711 336h21" stroke="#00ff17"/>
<path d="M1731 336h11" stroke="#00ff16"/>
<path d="M1741 336h11" stroke="#00ff15"/>
<path d="M1751 336h11" stroke="#00ff14"/>
<path d="M1761 336h11" stroke="#00ff13"/>
<path d="M1771 336h11" stroke="#00ff12"/>
<path d="M1781 336h11" stroke="#00ff11"/>
<path d="M1791 336h11" stroke="#00ff10"/>
<path d="M1801 336h11" stroke="#00ff0f"/>
<path d="M1811 336h11" stroke="#00ff0e"/>
<path d="M1821 336h11" stroke="#00ff0d"/>
<path d="M1831 336h11" stroke="#00ff0b"/>
<path d="M1841 336h11" stroke="#00ff0a"/>
<path d="M1851 336h11" stroke="#00ff09"/>
<path d="M1861 336h11" stroke="#0dff07"/>
<path d="M1871 336h11" stroke="#1fff06"/>
<path d="M1881 336h11" stroke="#32ff05"/>
<path d="M1891 336h11" stroke="#46ff03"/>
<path d="M1901 336h11" stroke="#5aff01"/>
<path d="M1911 336h11" stroke="#70ff00"/>
<path d="M1921 336h11" stroke="#87ff00"/>
<path d="M1931 336h11" stroke="#9eff00"/>
<path d="M1941 336h11" stroke="#b7ff00"/>
<path d="M1951 336h11" stroke="#d1ff00"/>
<path d="M1961 336h11" stroke="#edff00"/>
<path d="M1971 336h11" stroke="#fff500"/>
<path d="M1981 336h11" stroke="#ffdc00"/>
<path d="M1991 336h11" stroke="#ffc700"/>
<path d="M2001 336h11" stroke="#ffb400"/>
<path d="M2011 336h11" stroke="#ffa400"/>
<path d="M2021 336h11" stroke="#ff9600"/>
<path d="M2031 336h11" stroke="#ff8900"/>
<path d="M2041 336h11" stroke="#ff7e00"/>
<path d="M2051 336h11" stroke="#ff7400"/>
<path d="M2061 336h11" stroke="#ff6b00"/>
<path d="M2071 336h11" stroke="#ff6200"/>
<path d="M2081 336h11" stroke="#ff5b00"/>
<path d="M2091 336h11" stroke="#ff5400"/>
<path d="M2101 336h11" stroke="#ff4d00"/>
<path d="M2111 336h11" stroke="#ff4800"/>
<path d="M2121 336h11" stroke="#ff4200"/>
<path d="M2131 336h11" stroke="#ff3d00"/>
<path d="M2141 336h11" stroke="#ff3800"/>
<path d="M2151 336h11" stroke="#ff3400"/>
<path d="M2161 336h11" stroke="#ff3000"/>
<path d="M2171 336h11" stroke="#ff2c00"/>
<path d="M2181 336h11" stroke="#ff2900"/>
<path d="M2191 336h11" stroke="#ff2500"/>
<path d="M2201 336h11" stroke="#ff2200"/>
<path d="M2211 336h11" stroke="#ff1f00"/>
<path d="M2221 336h11" stroke="#ff1c00"/>
<path d="M1671 346h11" stroke="#00ff27"/>
<path d="M1681 346h21" stroke="#00ff26"/>
<path d="M1701 346h21" stroke="#00ff25"/>
<path d="M1721 346h11" stroke="#00ff24"/>
<path d="M1731 346h21" stroke="#00ff23"/>
<path d="M1751 346h11" stroke="#00ff22"/>
<path d="M1761 346h21" stroke="#00ff21"/>
<path d="M1781 346h11" stroke="#00ff20"/>
<path d="M1791 346h11" stroke="#00ff1f"/>
<path d="M1801 346h11" stroke="#00ff1e"/>
<path d="M1811 346h11" stroke="#00ff1d"/>
<path d="M1821 346h11" stroke="#00ff1c"/>
<path d="M1831 346h11" stroke="#00ff1b"/>
<path d="M1841 346h11" stroke="#00ff1a"/>
<path d="M1851 346h11" stroke="#00ff19"/>
<path d="M1861 346h11" stroke="#0aff18"/>
<path d="M1871 346h11" stroke="#1dff17"/>
<path d="M1881 346h11" stroke="#30ff16"/>
<path d="M1891 346h11" stroke="#44ff15"/>
<path d="M1901 346h11" stroke="#59ff14"/>
<path d="M1911 346h11" stroke="#6fff12"/>
<path d="M1921 346h11" stroke="#87ff11"/>
<path d="M1931 346h11" stroke="#9fff10"/>
<path d="M1941 346h11" stroke="#b8ff0e"/>
<path d="M1951 346h11" stroke="#d3ff0d"/>
<path d="M1961 346h11" stroke="#efff0b"/>
<path d="M1971 346h11" stroke="#fff209"/>
<path d="M1981 346h11" stroke="#ffd906"/>
<path d="M1991 346h11" stroke="#ffc404"/>
<path d="M2001 346h11" stroke="#ffb102"/>
<path d="M2011 346h11" stroke="#ffa101"/>
<path d="M2021 346h11" stroke="#ff9300"/>
<path d="M2031 346h11" stroke="#ff8600"/>
<path d="M2041 346h11" stroke="#ff7b00"/>
<path d="M2051 346h11" stroke="#ff7100"/>
<path d="M2061 346h11" stroke="#ff6800"/>
<path d="M2071 346h11" stroke="#ff6000"/>
<path d="M2081 346h11" stroke="#ff5800"/>
<path d="M2091 346h11" stroke="#ff5100"/>
<path d="M2101 346h11" stroke="#ff4b00"/>
<path d="M2111 346h11" stroke="#ff4500"/>
<path d="M2121 346h11" stroke="#ff4000"/>
<path d="M2131 346h11" stroke="#ff3b00"/>
<path d="M2141 346h11" stroke="#ff3600"/>
<path d="M2151 346h11" stroke="#ff3200"/>
<path d="M2161 346h11" stroke="#ff2e00"/>
<path d="M2171 346h11" stroke="#ff2a00"/>
<path d="M2181 346h11" stroke="#ff2700"/>
<path d="M2191 346h11" stroke="#ff2300"/>
<path d="M2201 346h11" stroke="#ff2000"/>
<path d="M2211 346h11" stroke="#ff1d00"/>
<path d="M2221 346h11" stroke="#ff1a00"/>
<path d="M2231 346h11" stroke="#ff1800"/>
<path d="M2241 346h11" stroke="#ff1500"/>
<path d="M2251 346h11" stroke="#ff1300"/>
<path d="M2261 346h11" stroke="#ff1000"/>
<path d="M2271 346h11" stroke="#ff0e00"/>
<path d="M2281 346h11" stroke="#ff0c00"/>
<path d="M2291 346h11" stroke="#ff0a00"/>
<path d="M2301 346h11" stroke="#ff0800"/>
<path d="M2311 346h11" stroke="#ff0700"/>
<path d="M1671 356h21" stroke="#00ff34"/>
<path d="M1691 356h21" stroke="#00ff33"/>
<path d="M1711 356h21" stroke="#00ff32"/>
<path d="M1731 356h21" stroke="#00ff31"/>
<path d="M1751 356h21" stroke="#00ff30"/>
<path d="M1771 356h21" stroke="#00ff2f"/>
<path d="M1791 356h21" stroke="#00ff2e"/>
<path d="M1811 356h21" stroke="#00ff2d"/>
<path d="M1831 356h11" stroke="#00ff2c"/>
<path d="M1841 356h21" stroke="#00ff2b"/>
<path d="M1861 356h11" stroke="#07ff2a"/>
<path d="M1871 356h11" stroke="#1aff29"/>
<path d="M1881 356h11" stroke="#2eff28"/>
<path d="M1891 356h11" stroke="#42ff28"/>
<path d="M1901 356h11" stroke="#58ff27"/>
<path d="M1911 356h11" stroke="#6fff26"/>
<path d="M1921 356h11" stroke="#86ff25"/>
<path d="M1931 356h11" stroke="#9fff24"/>
<path d="M1941 356h11" stroke="#b9ff23"/>
<path d="M1951 356h11" stroke="#d4ff22"/>
<path d="M1961 356h11" stroke="#f1ff21"/>
<path d="M1971 356h11" stroke="#ffef1e"/>
<path d="M1981 356h11" stroke="#ffd619"/>
<path d="M1991 356h11" stroke="#ffc116"/>
<path d="M2001 356h11" stroke="#ffae13"/>
<path d="M2011 356h11" stroke="#ff9e10"/>
<path d="M2021 356h11" stroke="#ff900e"/>
<path d="M2031 356h11" stroke="#ff830c"/>
<path d="M2041 356h11" stroke="#ff780a"/>
<path d="M2051 356h11" stroke="#ff6e08"/>
<path d="M2061 356h11" stroke="#ff6507"/>
<path d="M2071 356h11" stroke="#ff5d05"/>
<path d="M2081 356h11" stroke="#ff5604"/>
<path d="M2091 356h11" stroke="#ff4f03"/>
<path d="M2101 356h11" stroke="#ff4902"/>
<path d="M2111 356h11" stroke="#ff4301"/>
<path d="M2121 356h11" stroke="#ff3d00"/>
<path d="M2131 356h11" stroke="#ff3900"/>
<path d="M2141 356h11" stroke="#ff3400"/>
<path d="M2151 356h11" stroke="#ff3000"/>
<path d="M2161 356h11" stroke="#ff2c00"/>
<path d="M2171 356h11" stroke="#ff2800"/>
<path d="M2181 356h11" stroke="#ff2400"/>
<path d="M2191 356h11" stroke="#ff2100"/>
<path d="M2201 356h11" stroke="#ff1e00"/>
<path d="M2211 356h11" stroke="#ff1b00"/>
<path d="M2221 356h11" stroke="#ff1800"/>
<path d="M2231 356h11" stroke="#ff1600"/>
<path d="M2241 356h11" stroke="#ff1300"/>
<path d="M2251 356h11" stroke="#ff1100"/>
<path d="M2261 356h11" stroke="#ff0f00"/>
<path d="M2271 356h11" stroke="#ff0d00"/>
<path d="M2281 356h11" stroke="#ff0b00"/>
<path d="M2291 356h11" stroke="#ff0900"/>
<path d="M2301 356h11" stroke="#ff0700"/>
<path d="M2311 356h11" stroke="#ff0500"/>
<path d="M2321 356h11" stroke="#ff0300"/>
<path d="M2331 356h11" stroke="#ff0200"/>
<path d="M2341 356h61" stroke="#ff0000"/>
<path d="M1671 366h41" stroke="#00ff41"/>
<path d="M1711 366h41" stroke="#00ff40"/>
<path d="M1751 366h41" stroke="#00ff3f"/>
<path d="M1791 366h41" stroke="#00ff3e"/>
<path d="M1831 366h31" stroke="#00ff3d"/>
<path d="M1861 366h11" stroke="#04ff3c"/>
<path d="M1871 366h11" stroke="#18ff3c"/>
<path d="M1881 366h11" stroke="#2cff3c"/>
<path d="M1891 366h11" stroke="#41ff3b"/>
<path d="M1901 366h11" stroke="#57ff3b"/>
<path d="M1911 366h11" stroke="#6eff3a"/>
<path d="M1921 366h11" stroke="#86ff3a"/>
<path d="M1931 366h11" stroke="#9fff39"/>
<path d="M1941 366h11" stroke="#baff39"/>
<path d="M1951 366h11" stroke="#d6ff38"/>
<path d="M1961 366h11" stroke="#f4ff38"/>
<path d="M1971 366h11" stroke="#ffec33"/>
<path d="M1981 366h11" stroke="#ffd32d"/>
<path d="M1991 366h11" stroke="#ffbe28"/>
<path d="M2001 366h11" stroke="#ffab24"/>
<path d="M2011 366h11" stroke="#ff9b20"/>
<path d="M2021 366h11" stroke="#ff8d1d"/>
<path d="M2031 366h11" stroke="#ff801a"/>
<path d="M2041 366h11" stroke="#ff7517"/>
<path d="M2051 366h11" stroke="#ff6b15"/>
<path d="M2061 366h11" stroke="#ff6213"/>
<path d="M2071 366h11" stroke="#ff5a11"/>
<path d="M2081 366h11" stroke="#ff530f"/>
<path d="M2091 366h11" stroke="#ff4c0d"/>
<path d="M2101 366h11" stroke="#ff460c"/>
<path d="M2111 366h11" stroke="#ff400a"/>
<path d="M2121 366h11" stroke="#ff3b09"/>
<path d="M2131 366h11" stroke="#ff3608"/>
<path d="M2141 366h11" stroke="#ff3207"/>
<path d="M2151 366h11" stroke="#ff2d06"/>
<path d="M2161 366h11" stroke="#ff2a05"/>
<path d="M2171 366h11" stroke="#ff2604"/>
<path d="M2181 366h11" stroke="#ff2203"/>
<path d="M2191 366h11" stroke="#ff1f03"/>
<path d="M2201 366h11" stroke="#ff1c02"/>
<path d="M2211 366h11" stroke="#ff1901"/>
<path d="M2221 366h11" stroke="#ff1601"/>
<path d="M2231 366h11" stroke="#ff1400"/>
<path d="M2241 366h11" stroke="#ff1100"/>
<path d="M2251 366h11" stroke="#ff0f00"/>
<path d="M2261 366h11" stroke="#ff0d00"/>
<path d="M2271 366h11" stroke="#ff0b00"/>
<path d="M2281 366h11" stroke="#ff0900"/>
<path d="M2291 366h11" stroke="#ff0700"/>
<path d="M2301 366h11" stroke="#ff0500"/>
<path d="M2311 366h11" stroke="#ff0300"/>
<path d="M2321 366h11" stroke="#ff0200"/>
<path d="M2331 366h161" stroke="#ff0000"/>
<path d="M1671 376h191" stroke="#00ff4f"/>
<path d="M1861 376h11" stroke="#01ff4f"/>
<path d="M1871 376h11" stroke="#15ff50"/>
<path d="M1881 376h11" stroke="#29ff50"/>
<path d="M1891 376h11" stroke="#3fff50"/>
<path d="M1901 376h11" stroke="#55ff50"/>
<path d="M1911 376h11" stroke="#6dff50"/>
<path d="M1921 376h11" stroke="#86ff50"/>
<path d="M1931 376h11" stroke="#a0ff50"/>
<path d="M1941 376h11" stroke="#bbff50"/>
<path d="M1951 376h11" stroke="#d8ff50"/>
<path d="M1961 376h11" stroke="#f6ff50"/>
<path d="M1971 376h11" stroke="#ffe949"/>
<path d="M1981 376h11" stroke="#ffd042"/>
<path d="M1991 376h11" stroke="#ffba3b"/>
<path d="M2001 376h11" stroke="#ffa835"/>
<path d="M2011 376h11" stroke="#ff9830"/>
<path d="M2021 376h11" stroke="#ff8a2c"/>
<path d="M2031 376h11" stroke="#ff7d28"/>
<path d="M2041 376h11" stroke="#ff7224"/>
<path d="M2051 376h11" stroke="#ff6921"/>
<path d="M2061 376h11" stroke="#ff601f"/>
<path d="M2071 376h11" stroke="#ff581c"/>
<path d="M2081 376h11" stroke="#ff501a"/>
<path d="M2091 376h11" stroke="#ff4a18"/>
<path d="M2101 376h11" stroke="#ff4416"/>
<path d="M2111 376h11" stroke="#ff3e14"/>
<path d="M2121 376h11" stroke="#ff3912"/>
<path d="M2131 376h11" stroke="#ff3411"/>
<path d="M2141 376h11" stroke="#ff2f0f"/>
<path d="M2151 376h11" stroke="#ff2b0e"/>
<path d="M2161 376h11" stroke="#ff270d"/>
<path d="M2171 376h11" stroke="#ff240c"/>
<path d="M2181 376h11" stroke="#ff200b"/>
<path d="M2191 376h11" stroke="#ff1d0a"/>
<path d="M2201 376h11" stroke="#ff1a09"/>
<path d="M2211 376h11" stroke="#ff1708"/>
<path d="M2221 376h11" stroke="#ff1507"/>
<path d="M2231 376h11" stroke="#ff1206"/>
<path d="M2241 376h11" stroke="#ff1006"/>
<path d="M2251 376h11" stroke="#ff0d05"/>
<path d="M2261 376h11" stroke="#ff0b04"/>
<path d="M2271 376h11" stroke="#ff0904"/>
<path d="M2281 376h11" stroke="#ff0703"/>
<path d="M2291 376h11" stroke="#ff0502"/>
<path d="M2301 376h11" stroke="#ff0302"/>
<path d="M2311 376h11" stroke="#ff0201"/>
<path d="M2321 376h11" stroke="#ff0001"/>
<path d="M2331 376h241" stroke="#ff0000"/>
<path d="M1671 386h31" stroke="#00ff5d"/>
<path d="M1701 386h41" stroke="#00ff5e"/>
<path d="M1741 386h31" stroke="#00ff5f"/>
<path d="M1771 386h31" stroke="#00ff60"/>
<path d="M1801 386h21" stroke="#00ff61"/>
<path d="M1821 386h31" stroke="#00ff62"/>
<path d="M1851 386h21" stroke="#00ff63"/>
<path d="M1871 386h11" stroke="#12ff64"/>
<path d="M1881 386h11" stroke="#27ff64"/>
<path d="M1891 386h11" stroke="#3dff65"/>
<path d="M1901 386h11" stroke="#54ff66"/>
<path d="M1911 386h11" stroke="#6cff66"/>
<path d="M1921 386h11" stroke="#85ff67"/>
<path d="M1931 386h11" stroke="#a0ff68"/>
<path d="M1941 386h11" stroke="#bcff68"/>
<path d="M1951 386h11" stroke="#daff69"/>
<path d="M1961 386h11" stroke="#f9ff6a"/>
<path d="M1971 386h11" stroke="#ffe660"/>
<path d="M1981 386h11" stroke="#ffcd56"/>
<path d="M1991 386h11" stroke="#ffb74e"/>
<path d="M2001 386h11" stroke="#ffa547"/>
<path d="M2011 386h11" stroke="#ff9540"/>
<path d="M2021 386h11" stroke="#ff873b"/>
<path d="M2031 386h11" stroke="#ff7a36"/>
<path d="M2041 386h11" stroke="#ff6f32"/>
<path d="M2051 386h11" stroke="#ff662e"/>
<path d="M2061 386h11" stroke="#ff5d2b"/>
<path d="M2071 386h11" stroke="#ff5528"/>
<path d="M2081 386h11" stroke="#ff4e25"/>
<path d="M2091 386h11" stroke="#ff4722"/>
<path d="M2101 386h11" stroke="#ff4120"/>
<path d="M2111 386h11" stroke="#ff3b1e"/>
<path d="M2121 386h11" stroke="#ff361c"/>
<path d="M2131 386h11" stroke="#ff321a"/>
<path d="M2141 386h11" stroke="#ff2d18"/>
<path d="M2151 386h11" stroke="#ff2916"/>
<path d="M2161 386h11" stroke="#ff2515"/>
<path d="M2171 386h11" stroke="#ff2214"/>
<path d="M2181 386h11" stroke="#ff1e12"/>
<path d="M2191 386h11" stroke="#ff1b11"/>
<path d="M2201 386h11" stroke="#ff1810"/>
<path d="M2211 386h11" stroke="#ff150f"/>
<path d="M2221 386h11" stroke="#ff130e"/>
<path d="M2231 386h11" stroke="#ff100d"/>
<path d="M2241 386h11" stroke="#ff0e0c"/>
<path d="M2251 386h11" stroke="#ff0c0b"/>
<path d="M2261 386h11" stroke="#ff090a"/>
<path d="M2271 386h11" stroke="#ff0709"/>
<path d="M2281 386h11" stroke="#ff0509"/>
<path d="M2291 386h11" stroke="#ff0408"/>
<path d="M2301 386h11" stroke="#ff0207"/>
<path d="M2311 386h11" stroke="#ff0007"/>
<path d="M2321 386h11" stroke="#ff0006"/>
<path d="M2331 386h21" stroke="#ff0005"/>
<path d="M2351 386h21" stroke="#ff0004"/>
<path d="M2371 386h21" stroke="#ff0003"/>
<path d="M2391 386h21" stroke="#ff0002"/>
<path d="M2411 386h21" stroke="#ff0001"/>
<path d="M2431 386h141" stroke="#ff0000"/>
<path d="M1671 396h11" stroke="#00ff6b"/>
<path d="M1681 396h21" stroke="#00ff6c"/>
<path d="M1701 396h21" stroke="#00ff6d"/>
<path d="M1721 396h21" stroke="#00ff6e"/>
<path d="M1741 396h11" stroke="#00ff6f"/>
<path d="M1751 396h21" stroke="#00ff70"/>
<path d="M1771 396h11" stroke="#00ff71"/>
<path d="M1781 396h21" stroke="#00ff72"/>
<path d="M1801 396h11" stroke="#00ff73"/>
<path d="M1811 396h11" stroke="#00ff74"/>
<path d="M1821 396h11" stroke="#00ff75"/>
<path d="M1831 396h21" stroke="#00ff76"/>
<path d="M1851 396h11" stroke="#00ff77"/>
<path d="M1861 396h11" stroke="#00ff78"/>
<path d="M1871 396h11" stroke="#0fff79"/>
<path d="M1881 396h11" stroke="#24ff7a"/>
<path d="M1891 396h11" stroke="#3bff7b"/>
<path d="M1901 396h11" stroke="#52ff7d"/>
<path d="M1911 396h11" stroke="#6bff7e"/>
<path d="M1921 396h11" stroke="#85ff7f"/>
<path d="M1931 396h11" stroke="#a0ff80"/>
<path d="M1941 396h11" stroke="#bdff82"/>
<path d="M1951 396h11" stroke="#dcff83"/>
<path d="M1961 396h11" stroke="#fcff85"/>
<path d="M1971 396h11" stroke="#ffe378"/>
<path d="M1981 396h11" stroke="#ffc96c"/>
<path d="M1991 396h11" stroke="#ffb462"/>
<path d="M2001 396h11" stroke="#ffa159"/>
<path d="M2011 396h11" stroke="#ff9151"/>
<path d="M2021 396h11" stroke="#ff844b"/>
<path d="M2031 396h11" stroke="#ff7745"/>
<path d="M2041 396h11" stroke="#ff6c40"/>
<path d="M2051 396h11" stroke="#ff633b"/>
<path d="M2061 396h11" stroke="#ff5a37"/>
<path d="M2071 396h11" stroke="#ff5233"/>
<path d="M2081 396h11" stroke="#ff4b30"/>
<path d="M2091 396h11" stroke="#ff442d"/>
<path d="M2101 396h11" stroke="#ff3e2a"/>
<path d="M2111 396h11" stroke="#ff3927"/>
<path d="M2121 396h11" stroke="#ff3425"/>
<path d="M2131 396h11" stroke="#ff2f23"/>
<path d="M2141 396h11" stroke="#ff2b21"/>
<path d="M2151 396h11" stroke="#ff271f"/>
<path d="M2161 396h11" stroke="#ff231d"/>
<path d="M2171 396h11" stroke="#ff1f1b"/>
<path d="M2181 396h11" stroke="#ff1c1a"/>
<path d="M2191 396h11" stroke="#ff1918"/>
<path d="M2201 396h11" stroke="#ff1617"/>
<path d="M2211 396h11" stroke="#ff1316"/>
<path d="M2221 396h11" stroke="#ff1114"/>
<path d="M2231 396h11" stroke="#ff0e13"/>
<path d="M2241 396h11" stroke="#ff0c12"/>
<path d="M2251 396h11" stroke="#ff0a11"/>
<path d="M2261 396h11" stroke="#ff0810"/>
<path d="M2271 396h11" stroke="#ff060f"/>
<path d="M2281 396h11" stroke="#ff040e"/>
<path d="M2291 396h11" stroke="#ff020d"/>
<path d="M2301 396h11" stroke="#ff000d"/>
<path d="M2311 396h11" stroke="#ff000c"/>
<path d="M2321 396h11" stroke="#ff000b"/>
<path d="M2331 396h21" stroke="#ff000a"/>
<path d="M2351 396h11" stroke="#ff0009"/>
<path d="M2361 396h21" stroke="#ff0008"/>
<path d="M2381 396h21" stroke="#ff0007"/>
<path d="M2401 396h21" stroke="#ff0006"/>
<path d="M2421 396h21" stroke="#ff0005"/>
<path d="M2441 396h21" stroke="#ff0004"/>
<path d="M2461 396h21" stroke="#ff0003"/>
<path d="M2481 396h31" stroke="#ff0002"/>
<path d="M2511 396h31" stroke="#ff0001"/>
<path d="M2541 396h31" stroke="#ff0000"/>
<path d="M1671 406h11" stroke="#00ff7a"/>
<path d="M1681 406h11" stroke="#00ff7b"/>
<path d="M1691 406h21" stroke="#00ff7c"/>
<path d="M1711 406h11" stroke="#00ff7d"/>
<path d="M1721 406h11" stroke="#00ff7e"/>
<path d="M1731 406h11" stroke="#00ff7f"/>
<path d="M1741 406h11" stroke="#00ff80"/>
<path d="M1751 406h11" stroke="#00ff81"/>
<path d="M1761 406h11" stroke="#00ff82"/>
<path d="M1771 406h11" stroke="#00ff83"/>
<path d="M1781 406h11" stroke="#00ff84"/>
<path d="M1791 406h11" stroke="#00ff85"/>
<path d="M1801 406h11" stroke="#00ff86"/>
<path d="M1811 406h11" stroke="#00ff87"/>
<path d="M1821 406h11" stroke="#00ff89"/>
<path d="M1831 406h11" stroke="#00ff8a"/>
<path d="M1841 406h11" stroke="#00ff8b"/>
<path d="M1851 406h11" stroke="#00ff8d"/>
<path d="M1861 406h11" stroke="#00ff8e"/>
<path d="M1871 406h11" stroke="#0cff90"/>
<path d="M1881 406h11" stroke="#22ff91"/>
<path d="M1891 406h11" stroke="#39ff93"/>
<path d="M1901 406h11" stroke="#51ff95"/>
<path d="M1911 406h11" stroke="#6aff97"/>
<path d="M1921 406h11" stroke="#85ff99"/>
<path d="M1931 406h11" stroke="#a1ff9b"/>
<path d="M1941 406h11" stroke="#bfff9d"/>
<path d="M1951 406h11" stroke="#deff9f"/>
<path d="M1961 406h11" stroke="#ffffa1"/>
<path d="M1971 406h11" stroke="#ffe090"/>
<path d="M1981 406h11" stroke="#ffc682"/>
<path d="M1991 406h11" stroke="#ffb076"/>
<path d="M2001 406h11" stroke="#ff9e6b"/>
<path d="M2011 406h11" stroke="#ff8e62"/>
<path d="M2021 406h11" stroke="#ff805b"/>
<path d="M2031 406h11" stroke="#ff7454"/>
<path d="M2041 406h11" stroke="#ff694e"/>
<path d="M2051 406h11" stroke="#ff6048"/>
<path d="M2061 406h11" stroke="#ff5744"/>
<path d="M2071 406h11" stroke="#ff4f3f"/>
<path d="M2081 406h11" stroke="#ff483b"/>
<path d="M2091 406h11" stroke="#ff4238"/>
<path d="M2101 406h11" stroke="#ff3c34"/>
<path d="M2111 406h11" stroke="#ff3631"/>
<path d="M2121 406h11" stroke="#ff312f"/>
<path d="M2131 406h11" stroke="#ff2d2c"/>
<path d="M2141 406h11" stroke="#ff282a"/>
<path d="M2151 406h11" stroke="#ff2427"/>
<path d="M2161 406h11" stroke="#ff2125"/>
<path d="M2171 406h11" stroke="#ff1d23"/>
<path d="M2181 406h11" stroke="#ff1a22"/>
<path d="M2191 406h11" stroke="#ff1720"/>
<path d="M2201 406h11" stroke="#ff141e"/>
<path d="M2211 406h11" stroke="#ff111d"/>
<path d="M2221 406h11" stroke="#ff0f1b"/>
<path d="M2231 406h11" stroke="#ff0c1a"/>
<path d="M2241 406h11" stroke="#ff0a19"/>
<path d="M2251 406h11" stroke="#ff0817"/>
<path d="M2261 406h11" stroke="#ff0616"/>
<path d="M2271 406h11" stroke="#ff0415"/>
<path d="M2281 406h11" stroke="#ff0214"/>
<path d="M2291 406h11" stroke="#ff0013"/>
<path d="M2301 406h11" stroke="#ff0012"/>
<path d="M2311 406h11" stroke="#ff0011"/>
<path d="M2321 406h21" stroke="#ff0010"/>
<path d="M2341 406h11" stroke="#ff000f"/>
<path d="M2351 406h11" stroke="#ff000e"/>
<path d="M2361 406h21" stroke="#ff000d"/>
<path d="M2381 406h11" stroke="#ff000c"/>
<path d="M2391 406h21" stroke="#ff000b"/>
<path d="M2411 406h11" stroke="#ff000a"/>
<path d="M2421 406h21" stroke="#ff0009"/>
<path d="M2441 406h21" stroke="#ff0008"/>
<path d="M2461 406h21" stroke="#ff0007"/>
<path d="M2481 406h21" stroke="#ff0006"/>
<path d="M2501 406h31" stroke="#ff0005"/>
<path d="M2531 406h21" stroke="#ff0004"/>
<path d="M2551 406h21" stroke="#ff0003"/>
<path d="M1671 416h11" stroke="#00ff8a"/>
<path d="M1681 416h11" stroke="#00ff8b"/>
<path d="M1691 416h11" stroke="#00ff8c"/>
<path d="M1701 416h11" stroke="#00ff8d"/>
<path d="M1711 416h11" stroke="#00ff8e"/>
<path d="M1721 416h11" stroke="#00ff8f"/>
<path d="M1731 416h11" stroke="#00ff90"/>
<path d="M1741 416h11" stroke="#00ff91"/>
<path d="M1751 416h11" stroke="#00ff93"/>
<path d="M1761 416h11" stroke="#00ff94"/>
<path d="M1771 416h11" stroke="#00ff95"/>
<path d="M1781 416h11" stroke="#00ff97"/>
<path d="M1791 416h11" stroke="#00ff98"/>
<path d="M1801 416h11" stroke="#00ff9a"/>
<path d="M1811 416h11" stroke="#00ff9c"/>
<path d="M1821 416h11" stroke="#00ff9d"/>
<path d="M1831 416h11" stroke="#00ff9f"/>
<path d="M1841 416h11" stroke="#00ffa1"/>
<path d="M1851 416h11" stroke="#00ffa3"/>
<path d="M1861 416h11" stroke="#00ffa5"/>
<path d="M1871 416h11" stroke="#09ffa7"/>
<path d="M1881 416h11" stroke="#1fffa9"/>
<path d="M1891 416h11" stroke="#37ffac"/>
<path d="M1901 416h11" stroke="#4fffae"/>
<path d="M1911 416h11" stroke="#69ffb1"/>
<path d="M1921 416h11" stroke="#84ffb3"/>
<path d="M1931 416h11" stroke="#a1ffb6"/>
<path d="M1941 416h11" stroke="#c0ffb9"/>
<path d="M1951 416h11" stroke="#e0ffbd"/>
<path d="M1961 416h11" stroke="#fffbbd"/>
<path d="M1971 416h11" stroke="#ffdca9"/>
<path d="M1981 416h11" stroke="#ffc298"/>
<path d="M1991 416h11" stroke="#ffad8a"/>
<path d="M2001 416h11" stroke="#ff9b7e"/>
<path d="M2011 416h11" stroke="#ff8b74"/>
<path d="M2021 416h11" stroke="#ff7d6b"/>
<path d="M2031 416h11" stroke="#ff7163"/>
<path d="M2041 416h11" stroke="#ff665c"/>
<path d="M2051 416h11" stroke="#ff5d56"/>
<path d="M2061 416h11" stroke="#ff5450"/>
<path d="M2071 416h11" stroke="#ff4c4b"/>
<path d="M2081 416h11" stroke="#ff4547"/>
<path d="M2091 416h11" stroke="#ff3f43"/>
<path d="M2101 416h11" stroke="#ff393f"/>
<path d="M2111 416h11" stroke="#ff343b"/>
<path d="M2121 416h11" stroke="#ff2f38"/>
<path d="M2131 416h11" stroke="#ff2a35"/>
<path d="M2141 416h11" stroke="#ff2632"/>
<path d="M2151 416h11" stroke="#ff2230"/>
<path d="M2161 416h11" stroke="#ff1e2e"/>
<path d="M2171 416h11" stroke="#ff1b2b"/>
<path d="M2181 416h11" stroke="#ff1829"/>
<path d="M2191 416h11" stroke="#ff1527"/>
<path d="M2201 416h11" stroke="#ff1225"/>
<path d="M2211 416h11" stroke="#ff0f24"/>
<path d="M2221 416h11" stroke="#ff0d22"/>
<path d="M2231 416h11" stroke="#ff0a21"/>
<path d="M2241 416h11" stroke="#ff081f"/>
<path d="M2251 416h11" stroke="#ff061e"/>
<path d="M2261 416h11" stroke="#ff041c"/>
<path d="M2271 416h11" stroke="#ff021b"/>
<path d="M2281 416h11" stroke="#ff001a"/>
<path d="M2291 416h11" stroke="#ff0019"/>
<path d="M2301 416h11" stroke="#ff0018"/>
<path d="M2311 416h11" stroke="#ff0017"/>
<path d="M2321 416h11" stroke="#ff0016"/>
<path d="M2331 416h11" stroke="#ff0015"/>
<path d="M2341 416h11" stroke="#ff0014"/>
<path d="M2351 416h11" stroke="#ff0013"/>
<path d="M2361 416h11" stroke="#ff0012"/>
<path d="M2371 416h21" stroke="#ff0011"/>
<path d="M2391 416h11" stroke="#ff0010"/>
<path d="M2401 416h11" stroke="#ff000f"/>
<path d="M2411 416h21" stroke="#ff000e"/>
<path d="M2431 416h21" stroke="#ff000d"/>
<path d="M2451 416h11" stroke="#ff000c"/>
<path d="M2461 416h21" stroke="#ff000b"/>
<path d="M2481 416h21" stroke="#ff000a"/>
<path d="M2501 416h21" stroke="#ff0009"/>
<path d="M2521 416h21" stroke="#ff0008"/>
<path d="M2541 416h31" stroke="#ff0007"/>
<path d="M1671 426h11" stroke="#00ff99"/>
<path d="M1681 426h11" stroke="#00ff9b"/>
<path d="M1691 426h11" stroke="#00ff9c"/>
<path d="M1701 426h11" stroke="#00ff9d"/>
<path d="M1711 426h11" stroke="#00ff9f"/>
<path d="M1721 426h11" stroke="#00ffa0"/>
<path d="M1731 426h11" stroke="#00ffa2"/>
<path d="M1741 426h11" stroke="#00ffa4"/>
<path d="M1751 426h11" stroke="#00ffa5"/>
<path d="M1761 426h11" stroke="#00ffa7"/>
<path d="M1771 426h11" stroke="#00ffa9"/>
<path d="M1781 426h11" stroke="#00ffab"/>
<path d="M1791 426h11" stroke="#00ffad"/>
<path d="M1801 426h11" stroke="#00ffaf"/>
<path d="M1811 426h11" stroke="#00ffb1"/>
<path d="M1821 426h11" stroke="#00ffb3"/>
<path d="M1831 426h11" stroke="#00ffb5"/>
<path d="M1841 426h11" stroke="#00ffb8"/>
<path d="M1851 426h11" stroke="#00ffba"/>
<path d="M1861 426h11" stroke="#00ffbd"/>
<path d="M1871 426h11" stroke="#06ffc0"/>
<path d="M1881 426h11" stroke="#1cffc2"/>
<path d="M1891 426h11" stroke="#34ffc6"/>
<path d="M1901 426h11" stroke="#4dffc9"/>
<path d="M1911 426h11" stroke="#68ffcc"/>
<path d="M1921 426h11" stroke="#84ffd0"/>
<path d="M1931 426h11" stroke="#a2ffd4"/>
<path d="M1941 426h11" stroke="#c1ffd8"/>
<path d="M1951 426h11" stroke="#e3ffdc"/>
<path d="M1961 426h11" stroke="#fff8da"/>
<path d="M1971 426h11" stroke="#ffd9c3"/>
<path d="M1981 426h11" stroke="#ffbfb0"/>
<path d="M1991 426h11" stroke="#ffa9a0"/>
<path d="M2001 426h11" stroke="#ff9792"/>
<path d="M2011 426h11" stroke="#ff8786"/>
<path d="M2021 426h11" stroke="#ff7a7c"/>
<path d="M2031 426h11" stroke="#ff6e73"/>
<path d="M2041 426h11" stroke="#ff636b"/>
<path d="M2051 426h11" stroke="#ff5964"/>
<path d="M2061 426h11" stroke="#ff515d"/>
<path d="M2071 426h11" stroke="#ff4958"/>
<path d="M2081 426h11" stroke="#ff4253"/>
<path d="M2091 426h11" stroke="#ff3c4e"/>
<path d="M2101 426h11" stroke="#ff364a"/>
<path d="M2111 426h11" stroke="#ff3146"/>
<path d="M2121 426h11" stroke="#ff2c42"/>
<path d="M2131 426h11" stroke="#ff283f"/>
<path d="M2141 426h11" stroke="#ff243b"/>
<path d="M2151 426h11" stroke="#ff2039"/>
<path d="M2161 426h11" stroke="#ff1c36"/>
<path d="M2171 426h11" stroke="#ff1933"/>
<path d="M2181 426h11" stroke="#ff1631"/>
<path d="M2191 426h11" stroke="#ff132f"/>
<path d="M2201 426h11" stroke="#ff102d"/>
<path d="M2211 426h11" stroke="#ff0d2b"/>
<path d="M2221 426h11" stroke="#ff0b29"/>
<path d="M2231 426h11" stroke="#ff0927"/>
<path d="M2241 426h11" stroke="#ff0626"/>
<path d="M2251 426h11" stroke="#ff0424"/>
<path d="M2261 426h11" stroke="#ff0223"/>
<path d="M2271 426h11" stroke="#ff0021"/>
<path d="M2281 426h11" stroke="#ff0020"/>
<path d="M2291 426h11" stroke="#ff001e"/>
<path d="M2301 426h11" stroke="#ff001d"/>
<path d="M2311 426h11" stroke="#ff001c"/>
<path d="M2321 426h11" stroke="#ff001b"/>
<path d="M2331 426h11" stroke="#ff001a"/>
<path d="M2341 426h11" stroke="#ff0019"/>
<path d="M2351 426h11" stroke="#ff0018"/>
<path d="M2361 426h11" stroke="#ff0017"/>
<path d="M2371 426h11" stroke="#ff0016"/>
<path d="M2381 426h11" stroke="#ff0015"/>
<path d="M2391 426h21" stroke="#ff0014"/>
<path d="M2411 426h11" stroke="#ff0013"/>
<path d="M2421 426h11" stroke="#ff0012"/>
<path d="M2431 426h21" stroke="#ff0011"/>
<path d="M2451 426h11" stroke="#ff0010"/>
<path d="M2461 426h21" stroke="#ff000f"/>
<path d="M2481 426h21" stroke="#ff000e"/>
<path d="M2501 426h11" stroke="#ff000d"/>
<path d="M2511 426h21" stroke="#ff000c"/>
<path d="M2531 426h21" stroke="#ff000b"/>
<path d="M2551 426h21" stroke="#ff000a"/>
<path d="M1681 436h11" stroke="#00ffab"/>
<path d="M1691 436h11" stroke="#00ffad"/>
<path d="M1701 436h11" stroke="#00ffaf"/>
<path d="M1711 436h11" stroke="#00ffb1"/>
<path d="M1721 436h11" stroke="#00ffb2"/>
<path d="M1731 436h11" stroke="#00ffb4"/>
<path d="M1741 436h11" stroke="#00ffb6"/>
<path d="M1751 436h11" stroke="#00ffb8"/>
<path d="M1761 436h11" stroke="#00ffbb"/>
<path d="M1771 436h11" stroke="#00ffbd"/>
<path d="M1781 436h11" stroke="#00ffbf"/>
<path d="M1791 436h11" stroke="#00ffc2"/>
<path d="M1801 436h11" stroke="#00ffc4"/>
<path d="M1811 436h11" stroke="#00ffc7"/>
<path d="M1821 436h11" stroke="#00ffc9"/>
<path d="M1831 436h11" stroke="#00ffcc"/>
<path d="M1841 436h11" stroke="#00ffcf"/>
<path d="M1851 436h11" stroke="#00ffd2"/>
<path d="M1861 436h11" stroke="#00ffd6"/>
<path d="M1871 436h11" stroke="#02ffd9"/>
<path d="M1881 436h11" stroke="#19ffdd"/>
<path d="M1891 436h11" stroke="#32ffe1"/>
<path d="M1901 436h11" stroke="#4bffe5"/>
<path d="M1911 436h11" stroke="#67ffe9"/>
<path d="M1921 436h11" stroke="#84ffee"/>
<path d="M1931 436h11" stroke="#a2fff3"/>
<path d="M1941 436h11" stroke="#c3fff8"/>
<path d="M1951 436h11" stroke="#e5fffd"/>
<path d="M1961 436h11" stroke="#fff5f8"/>
<path d="M1971 436h11" stroke="#ffd5de"/>
<path d="M1981 436h11" stroke="#ffbbc8"/>
<path d="M1991 436h11" stroke="#ffa6b5"/>
<path d="M2001 436h11" stroke="#ff93a6"/>
<path d="M2011 436h11" stroke="#ff8498"/>
<path d="M2021 436h11" stroke="#ff768d"/>
<path d="M2031 436h11" stroke="#ff6a83"/>
<path d="M2041 436h11" stroke="#ff607a"/>
<path d="M2051 436h11" stroke="#ff5672"/>
<path d="M2061 436h11" stroke="#ff4e6b"/>
<path d="M2071 436h11" stroke="#ff4664"/>
<path d="M2081 436h11" stroke="#ff405e"/>
<path d="M2091 436h11" stroke="#ff3959"/>
<path d="M2101 436h11" stroke="#ff3454"/>
<path d="M2111 436h11" stroke="#ff2e50"/>
<path d="M2121 436h11" stroke="#ff2a4c"/>
<path d="M2131 436h11" stroke="#ff2548"/>
<path d="M2141 436h11" stroke="#ff2145"/>
<path d="M2151 436h11" stroke="#ff1d41"/>
<path d="M2161 436h11" stroke="#ff1a3e"/>
<path d="M2171 436h11" stroke="#ff173c"/>
<path d="M2181 436h11" stroke="#ff1339"/>
<path d="M2191 436h11" stroke="#ff1136"/>
<path d="M2201 436h11" stroke="#ff0e34"/>
<path d="M2211 436h11" stroke="#ff0b32"/>
<path d="M2221 436h11" stroke="#ff0930"/>
<path d="M2231 436h11" stroke="#ff072e"/>
<path d="M2241 436h11" stroke="#ff042c"/>
<path d="M2251 436h11" stroke="#ff022a"/>
<path d="M2261 436h11" stroke="#ff0029"/>
<path d="M2271 436h11" stroke="#ff0027"/>
<path d="M2281 436h11" stroke="#ff0026"/>
<path d="M2291 436h11" stroke="#ff0024"/>
<path d="M2301 436h11" stroke="#ff0023"/>
<path d="M2311 436h11" stroke="#ff0022"/>
<path d="M2321 436h11" stroke="#ff0020"/>
<path d="M2331 436h11" stroke="#ff001f"/>
<path d="M2341 436h11" stroke="#ff001e"/>
<path d="M2351 436h11" stroke="#ff001d"/>
<path d="M2361 436h11" stroke="#ff001c"/>
<path d="M2371 436h11" stroke="#ff001b"/>
<path d="M2381 436h11" stroke="#ff001a"/>
<path d="M2391 436h11" stroke="#ff0019"/>
<path d="M2401 436h11" stroke="#ff0018"/>
<path d="M2411 436h11" stroke="#ff0017"/>
<path d="M2421 436h21" stroke="#ff0016"/>
<path d="M2441 436h11" stroke="#ff0015"/>
<path d="M2451 436h11" stroke="#ff0014"/>
<path d="M2461 436h21" stroke="#ff0013"/>
<path d="M2481 436h11" stroke="#ff0012"/>
<path d="M2491 436h21" stroke="#ff0011"/>
<path d="M2511 436h21" stroke="#ff0010"/>
<path d="M2531 436h11" stroke="#ff000f"/>
<path d="M2541 436h21" stroke="#ff000e"/>
<path d="M1681 446h11" stroke="#00ffbd"/>
<path d="M1691 446h11" stroke="#00ffbf"/>
<path d="M1701 446h11" stroke="#00ffc1"/>
<path d="M1711 446h11" stroke="#00ffc3"/>
<path d="M1721 446h11" stroke="#00ffc5"/>
<path d="M1731 446h11" stroke="#00ffc8"/>
<path d="M1741 446h11" stroke="#00ffca"/>
<path d="M1751 446h11" stroke="#00ffcc"/>
<path d="M1761 446h11" stroke="#00ffcf"/>
<path d="M1771 446h11" stroke="#00ffd2"/>
<path d="M1781 446h11" stroke="#00ffd4"/>
<path d="M1791 446h11" stroke="#00ffd7"/>
<path d="M1801 446h11" stroke="#00ffda"/>
<path d="M1811 446h11" stroke="#00ffde"/>
<path d="M1821 446h11" stroke="#00ffe1"/>
<path d="M1831 446h11" stroke="#00ffe5"/>
<path d="M1841 446h11" stroke="#00ffe8"/>
<path d="M1851 446h11" stroke="#00ffec"/>
<path d="M1861 446h11" stroke="#00fff0"/>
<path d="M1871 446h11" stroke="#00fff4"/>
<path d="M1881 446h11" stroke="#16fff9"/>
<path d="M1891 446h11" stroke="#2ffffe"/>
<path d="M1901 446h11" stroke="#48fbff"/>
<path d="M1911 446h11" stroke="#62f6ff"/>
<path d="M1921 446h11" stroke="#7cf1ff"/>
<path d="M1931 446h11" stroke="#96ecff"/>
<path d="M1941 446h11" stroke="#b1e7ff"/>
<path d="M1951 446h11" stroke="#cde1ff"/>
<path d="M1961 446h11" stroke="#e9dcff"/>
<path d="M1971 446h11" stroke="#ffd1f9"/>
<path d="M1981 446h11" stroke="#ffb7e0"/>
<path d="M1991 446h11" stroke="#ffa2cc"/>
<path d="M2001 446h11" stroke="#ff90ba"/>
<path d="M2011 446h11" stroke="#ff80ab"/>
<path d="M2021 446h11" stroke="#ff729e"/>
<path d="M2031 446h11" stroke="#ff6793"/>
<path d="M2041 446h11" stroke="#ff5c89"/>
<path d="M2051 446h11" stroke="#ff5380"/>
<path d="M2061 446h11" stroke="#ff4b78"/>
<path d="M2071 446h11" stroke="#ff4371"/>
<path d="M2081 446h11" stroke="#ff3d6b"/>
<path d="M2091 446h11" stroke="#ff3665"/>
<path d="M2101 446h11" stroke="#ff315f"/>
<path d="M2111 446h11" stroke="#ff2c5a"/>
<path d="M2121 446h11" stroke="#ff2756"/>
<path d="M2131 446h11" stroke="#ff2352"/>
<path d="M2141 446h11" stroke="#ff1f4e"/>
<path d="M2151 446h11" stroke="#ff1b4a"/>
<path d="M2161 446h11" stroke="#ff1747"/>
<path d="M2171 446h11" stroke="#ff1444"/>
<path d="M2181 446h11" stroke="#ff1141"/>
<path d="M2191 446h11" stroke="#ff0e3e"/>
<path d="M2201 446h11" stroke="#ff0c3c"/>
<path d="M2211 446h11" stroke="#ff0939"/>
<path d="M2221 446h11" stroke="#ff0737"/>
<path d="M2231 446h11" stroke="#ff0535"/>
<path d="M2241 446h11" stroke="#ff0233"/>
<path d="M2251 446h11" stroke="#ff0031"/>
<path d="M2261 446h11" stroke="#ff002f"/>
<path d="M2271 446h11" stroke="#ff002d"/>
<path d="M2281 446h11" stroke="#ff002c"/>
<path d="M2291 446h11" stroke="#ff002a"/>
<path d="M2301 446h11" stroke="#ff0029"/>
<path d="M2311 446h11" stroke="#ff0027"/>
<path d="M2321 446h11" stroke="#ff0026"/>
<path d="M2331 446h11" stroke="#ff0024"/>
<path d="M2341 446h11" stroke="#ff0023"/>
<path d="M2351 446h11" stroke="#ff0022"/>
<path d="M2361 446h11" stroke="#ff0021"/>
<path d="M2371 446h11" stroke="#ff0020"/>
<path d="M2381 446h11" stroke="#ff001f"/>
<path d="M2391 446h11" stroke="#ff001e"/>
<path d="M2401 446h11" stroke="#ff001d"/>
<path d="M2411 446h11" stroke="#ff001c"/>
<path d="M2421 446h11" stroke="#ff001b"/>
<path d="M2431 446h11" stroke="#ff001a"/>
<path d="M2441 446h11" stroke="#ff0019"/>
<path d="M2451 446h21" stroke="#ff0018"/>
<path d="M2471 446h11" stroke="#ff0017"/>
<path d="M2481 446h11" stroke="#ff0016"/>
<path d="M2491 446h21" stroke="#ff0015"/>
<path d="M2511 446h11" stroke="#ff0014"/>
<path d="M2521 446h21" stroke="#ff0013"/>
<path d="M2541 446h11" stroke="#ff0012"/>
<path d="M1681 456h11" stroke="#00ffcf"/>
<path d="M1691 456h11" stroke="#00ffd1"/>
<path d="M1701 456h11" stroke="#00ffd3"/>
<path d="M1711 456h11" stroke="#00ffd6"/>
<path d="M1721 456h11" stroke="#00ffd9"/>
<path d="M1731 456h11" stroke="#00ffdb"/>
<path d="M1741 456h11" stroke="#00ffde"/>
<path d="M1751 456h11" stroke="#00ffe1"/>
<path d="M1761 456h11" stroke="#00ffe4"/>
<path d="M1771 456h11" stroke="#00ffe7"/>
<path d="M1781 456h11" stroke="#00ffeb"/>
<path d="M1791 456h11" stroke="#00ffee"/>
<path d="M1801 456h11" stroke="#00fff2"/>
<path d="M1811 456h11" stroke="#00fff6"/>
<path d="M1821 456h11" stroke="#00fffa"/>
<path d="M1831 456h11" stroke="#00fffe"/>
<path d="M1841 456h11" stroke="#00fcff"/>
<path d="M1851 456h11" stroke="#00f7ff"/>
<path d="M1861 456h11" stroke="#00f3ff"/>
<path d="M1871 456h11" stroke="#00eeff"/>
<path d="M1881 456h11" stroke="#11eaff"/>
<path d="M1891 456h11" stroke="#28e5ff"/>
<path d="M1901 456h11" stroke="#3fe0ff"/>
<path d="M1911 456h11" stroke="#56dbff"/>
<path d="M1921 456h11" stroke="#6ed6ff"/>
<path d="M1931 456h11" stroke="#86d1ff"/>
<path d="M1941 456h11" stroke="#9eccff"/>
<path d="M1951 456h11" stroke="#b7c7ff"/>
<path d="M1961 456h11" stroke="#d1c2ff"/>
<path d="M1971 456h11" stroke="#eabdff"/>
<path d="M1981 456h11" stroke="#ffb3fa"/>
<path d="M1991 456h11" stroke="#ff9ee3"/>
<path d="M2001 456h11" stroke="#ff8ccf"/>
<path d="M2011 456h11" stroke="#ff7cbe"/>
<path d="M2021 456h11" stroke="#ff6fb0"/>
<path d="M2031 456h11" stroke="#ff63a3"/>
<path d="M2041 456h11" stroke="#ff5998"/>
<path d="M2051 456h11" stroke="#ff508f"/>
<path d="M2061 456h11" stroke="#ff4886"/>
<path d="M2071 456h11" stroke="#ff407e"/>
<path d="M2081 456h11" stroke="#ff3a77"/>
<path d="M2091 456h11" stroke="#ff3470"/>
<path d="M2101 456h11" stroke="#ff2e6a"/>
<path d="M2111 456h11" stroke="#ff2965"/>
<path d="M2121 456h11" stroke="#ff2460"/>
<path d="M2131 456h11" stroke="#ff205b"/>
<path d="M2141 456h11" stroke="#ff1c57"/>
<path d="M2151 456h11" stroke="#ff1953"/>
<path d="M2161 456h11" stroke="#ff1550"/>
<path d="M2171 456h11" stroke="#ff124c"/>
<path d="M2181 456h11" stroke="#ff0f49"/>
<path d="M2191 456h11" stroke="#ff0c46"/>
<path d="M2201 456h11" stroke="#ff0a43"/>
<path d="M2211 456h11" stroke="#ff0741"/>
<path d="M2221 456h11" stroke="#ff053e"/>
<path d="M2231 456h11" stroke="#ff033c"/>
<path d="M2241 456h11" stroke="#ff0039"/>
<path d="M2251 456h11" stroke="#ff0037"/>
<path d="M2261 456h11" stroke="#ff0035"/>
<path d="M2271 456h11" stroke="#ff0033"/>
<path d="M2281 456h11" stroke="#ff0032"/>
<path d="M2291 456h11" stroke="#ff0030"/>
<path d="M2301 456h11" stroke="#ff002e"/>
<path d="M2311 456h11" stroke="#ff002d"/>
<path d="M2321 456h11" stroke="#ff002b"/>
<path d="M2331 456h11" stroke="#ff002a"/>
<path d="M2341 456h11" stroke="#ff0028"/>
<path d="M2351 456h11" stroke="#ff0027"/>
<path d="M2361 456h11" stroke="#ff0026"/>
<path d="M2371 456h11" stroke="#ff0025"/>
<path d="M2381 456h11" stroke="#ff0023"/>
<path d="M2391 456h11" stroke="#ff0022"/>
<path d="M2401 456h11" stroke="#ff0021"/>
<path d="M2411 456h11" stroke="#ff0020"/>
<path d="M2421 456h11" stroke="#ff001f"/>
<path d="M2431 456h11" stroke="#ff001e"/>
<path d="M2441 456h11" stroke="#ff001d"/>
<path d="M2451 456h21" stroke="#ff001c"/>
<path d="M2471 456h11" stroke="#ff001b"/>
<path d="M2481 456h11" stroke="#ff001a"/>
<path d="M2491 456h11" stroke="#ff0019"/>
<path d="M2501 456h21" stroke="#ff0018"/>
<path d="M2521 456h11" stroke="#ff0017"/>
<path d="M2531 456h11" stroke="#ff0016"/>
<path d="M1691 466h11" stroke="#00ffe4"/>
<path d="M1701 466h11" stroke="#00ffe7"/>
<path d="M1711 466h11" stroke="#00ffea"/>
<path d="M1721 466h11" stroke="#00ffed"/>
<path d="M1731 466h11" stroke="#00fff0"/>
<path d="M1741 466h11" stroke="#00fff3"/>
<path d="M1751 466h11" stroke="#00fff7"/>
<path d="M1761 466h11" stroke="#00fffa"/>
<path d="M1771 466h11" stroke="#00fffe"/>
<path d="M1781 466h11" stroke="#00fcff"/>
<path d="M1791 466h11" stroke="#00f8ff"/>
<path d="M1801 466h11" stroke="#00f4ff"/>
<path d="M1811 466h11" stroke="#00f0ff"/>
<path d="M1821 466h11" stroke="#00ecff"/>
<path d="M1831 466h11" stroke="#00e8ff"/>
<path d="M1841 466h11" stroke="#00e4ff"/>
<path d="M1851 466h11" stroke="#00dfff"/>
<path d="M1861 466h11" stroke="#00dbff"/>
<path d="M1871 466h11" stroke="#00d7ff"/>
<path d="M1881 466h11" stroke="#0dd2ff"/>
<path d="M1891 466h11" stroke="#21ceff"/>
<path d="M1901 466h11" stroke="#37c9ff"/>
<path d="M1911 466h11" stroke="#4cc4ff"/>
<path d="M1921 466h11" stroke="#62c0ff"/>
<path d="M1931 466h11" stroke="#78bbff"/>
<path d="M1941 466h11" stroke="#8eb6ff"/>
<path d="M1951 466h11" stroke="#a5b1ff"/>
<path d="M1961 466h11" stroke="#bcacff"/>
<path d="M1971 466h11" stroke="#d4a7ff"/>
<path d="M1981 466h11" stroke="#eca2ff"/>
<path d="M1991 466h11" stroke="#ff9afa"/>
<path d="M2001 466h11" stroke="#ff88e5"/>
<path d="M2011 466h11" stroke="#ff78d2"/>
<path d="M2021 466h11" stroke="#ff6bc2"/>
<path d="M2031 466h11" stroke="#ff60b4"/>
<path d="M2041 466h11" stroke="#ff55a8"/>
<path d="M2051 466h11" stroke="#ff4c9d"/>
<path d="M2061 466h11" stroke="#ff4494"/>
<path d="M2071 466h11" stroke="#ff3d8b"/>
<path d="M2081 466h11" stroke="#ff3783"/>
<path d="M2091 466h11" stroke="#ff317c"/>
<path d="M2101 466h11" stroke="#ff2b76"/>
<path d="M2111 466h11" stroke="#ff2670"/>
<path d="M2121 466h11" stroke="#ff226a"/>
<path d="M2131 466h11" stroke="#ff1e65"/>
<path d="M2141 466h11" stroke="#ff1a61"/>
<path d="M2151 466h11" stroke="#ff165c"/>
<path d="M2161 466h11" stroke="#ff1358"/>
<path d="M2171 466h11" stroke="#ff1055"/>
<path d="M2181 466h11" stroke="#ff0d51"/>
<path d="M2191 466h11" stroke="#ff0a4e"/>
<path d="M2201 466h11" stroke="#ff074b"/>
<path d="M2211 466h11" stroke="#ff0548"/>
<path d="M2221 466h11" stroke="#ff0345"/>
<path d="M2231 466h11" stroke="#ff0143"/>
<path d="M2241 466h11" stroke="#ff0040"/>
<path d="M2251 466h11" stroke="#ff003e"/>
<path d="M2261 466h11" stroke="#ff003c"/>
<path d="M2271 466h11" stroke="#ff003a"/>
<path d="M2281 466h11" stroke="#ff0038"/>
<path d="M2291 466h11" stroke="#ff0036"/>
<path d="M2301 466h11" stroke="#ff0034"/>
<path d="M2311 466h11" stroke="#ff0032"/>
<path d="M2321 466h11" stroke="#ff0031"/>
<path d="M2331 466h11" stroke="#ff002f"/>
<path d="M2341 466h11" stroke="#ff002e"/>
<path d="M2351 466h11" stroke="#ff002c"/>
<path d="M2361 466h11" stroke="#ff002b"/>
<path d="M2371 466h11" stroke="#ff002a"/>
<path d="M2381 466h11" stroke="#ff0028"/>
<path d="M2391 466h11" stroke="#ff0027"/>
<path d="M2401 466h11" stroke="#ff0026"/>
<path d="M2411 466h11" stroke="#ff0025"/>
<path d="M2421 466h11" stroke="#ff0024"/>
<path d="M2431 466h11" stroke="#ff0023"/>
<path d="M2441 466h11" stroke="#ff0022"/>
<path d="M2451 466h11" stroke="#ff0021"/>
<path d="M2461 466h11" stroke="#ff0020"/>
<path d="M2471 466h11" stroke="#ff001f"/>
<path d="M2481 466h11" stroke="#ff001e"/>
<path d="M2491 466h11" stroke="#ff001d"/>
<path d="M2501 466h11" stroke="#ff001c"/>
<path d="M2511 466h21" stroke="#ff001b"/>
<path d="M1691 476h11" stroke="#00fff8"/>
<path d="M1701 476h11" stroke="#00fffb"/>
<path d="M1711 476h11" stroke="#00fffe"/>
<path d="M1721 476h11" stroke="#00fcff"/>
<path d="M1731 476h11" stroke="#00f9ff"/>
<path d="M1741 476h11" stroke="#00f5ff"/>
<path d="M1751 476h11" stroke="#00f1ff"/>
<path d="M1761 476h11" stroke="#00eeff"/>
<path d="M1771 476h11" stroke="#00eaff"/>
<path d="M1781 476h11" stroke="#00e6ff"/>
<path d="M1791 476h11" stroke="#00e3ff"/>
<path d="M1801 476h11" stroke="#00dfff"/>
<path d="M1811 476h11" stroke="#00dbff"/>
<path d="M1821 476h11" stroke="#00d7ff"/>
<path d="M1831 476h11" stroke="#00d3ff"/>
<path d="M1841 476h11" stroke="#00cfff"/>
<path d="M1851 476h11" stroke="#00cbff"/>
<path d="M1861 476h11" stroke="#00c7ff"/>
<path d="M1871 476h11" stroke="#00c2ff"/>
<path d="M1881 476h11" stroke="#09beff"/>
<path d="M1891 476h11" stroke="#1cbaff"/>
<path d="M1901 476h11" stroke="#30b5ff"/>
<path d="M1911 476h11" stroke="#43b1ff"/>
<path d="M1921 476h11" stroke="#58acff"/>
<path d="M1931 476h11" stroke="#6ca8ff"/>
<path d="M1941 476h11" stroke="#81a3ff"/>
<path d="M1951 476h11" stroke="#969fff"/>
<path d="M1961 476h11" stroke="#ab9aff"/>
<path d="M1971 476h11" stroke="#c195ff"/>
<path d="M1981 476h11" stroke="#d790ff"/>
<path d="M1991 476h11" stroke="#ed8bff"/>
<path d="M2001 476h11" stroke="#ff84fb"/>
<path d="M2011 476h11" stroke="#ff75e6"/>
<path d="M2021 476h11" stroke="#ff67d5"/>
<path d="M2031 476h11" stroke="#ff5cc6"/>
<path d="M2041 476h11" stroke="#ff52b8"/>
<path d="M2051 476h11" stroke="#ff49ac"/>
<path d="M2061 476h11" stroke="#ff41a2"/>
<path d="M2071 476h11" stroke="#ff3a98"/>
<path d="M2081 476h11" stroke="#ff3390"/>
<path d="M2091 476h11" stroke="#ff2e88"/>
<path d="M2101 476h11" stroke="#ff2881"/>
<path d="M2111 476h11" stroke="#ff237b"/>
<path d="M2121 476h11" stroke="#ff1f75"/>
<path d="M2131 476h11" stroke="#ff1b6f"/>
<path d="M2141 476h11" stroke="#ff176a"/>
<path d="M2151 476h11" stroke="#ff1466"/>
<path d="M2161 476h11" stroke="#ff1061"/>
<path d="M2171 476h11" stroke="#ff0d5d"/>
<path d="M2181 476h11" stroke="#ff0a59"/>
<path d="M2191 476h11" stroke="#ff0856"/>
<path d="M2201 476h11" stroke="#ff0552"/>
<path d="M2211 476h11" stroke="#ff034f"/>
<path d="M2221 476h11" stroke="#ff014c"/>
<path d="M2231 476h11" stroke="#ff004a"/>
<path d="M2241 476h11" stroke="#ff0047"/>
<path d="M2251 476h11" stroke="#ff0044"/>
<path d="M2261 476h11" stroke="#ff0042"/>
<path d="M2271 476h11" stroke="#ff0040"/>
<path d="M2281 476h11" stroke="#ff003e"/>
<path d="M2291 476h11" stroke="#ff003c"/>
<path d="M2301 476h11" stroke="#ff003a"/>
<path d="M2311 476h11" stroke="#ff0038"/>
<path d="M2321 476h11" stroke="#ff0036"/>
<path d="M2331 476h11" stroke="#ff0035"/>
<path d="M2341 476h11" stroke="#ff0033"/>
<path d="M2351 476h11" stroke="#ff0031"/>
<path d="M2361 476h11" stroke="#ff0030"/>
<path d="M2371 476h11" stroke="#ff002e"/>
<path d="M2381 476h11" stroke="#ff002d"/>
<path d="M2391 476h11" stroke="#ff002c"/>
<path d="M2401 476h11" stroke="#ff002b"/>
<path d="M2411 476h11" stroke="#ff0029"/>
<path d="M2421 476h11" stroke="#ff0028"/>
<path d="M2431 476h11" stroke="#ff0027"/>
<path d="M2441 476h11" stroke="#ff0026"/>
<path d="M2451 476h11" stroke="#ff0025"/>
<path d="M2461 476h11" stroke="#ff0024"/>
<path d="M2471 476h11" stroke="#ff0023"/>
<path d="M2481 476h11" stroke="#ff0022"/>
<path d="M2491 476h11" stroke="#ff0021"/>
<path d="M2501 476h11" stroke="#ff0020"/>
<path d="M2511 476h11" stroke="#ff001f"/>
<path d="M1691 486h11" stroke="#00f3ff"/>
<path d="M1701 486h11" stroke="#00efff"/>
<path d="M1711 486h11" stroke="#00ecff"/>
<path d="M1721 486h11" stroke="#00e9ff"/>
<path d="M1731 486h11" stroke="#00e5ff"/>
<path d="M1741 486h11" stroke="#00e2ff"/>
<path d="M1751 486h11" stroke="#00deff"/>
<path d="M1761 486h11" stroke="#00dbff"/>
<path d="M1771 486h11" stroke="#00d7ff"/>
<path d="M1781 486h11" stroke="#00d3ff"/>
<path d="M1791 486h11" stroke="#00d0ff"/>
<path d="M1801 486h11" stroke="#00ccff"/>
<path d="M1811 486h11" stroke="#00c8ff"/>
<path d="M1821 486h11" stroke="#00c4ff"/>
<path d="M1831 486h11" stroke="#00c1ff"/>
<path d="M1841 486h11" stroke="#00bdff"/>
<path d="M1851 486h11" stroke="#00b9ff"/>
<path d="M1861 486h11" stroke="#00b5ff"/>
<path d="M1871 486h11" stroke="#00b1ff"/>
<path d="M1881 486h11" stroke="#05adff"/>
<path d="M1891 486h11" stroke="#17a8ff"/>
<path d="M1901 486h11" stroke="#29a4ff"/>
<path d="M1911 486h11" stroke="#3ca0ff"/>
<path d="M1921 486h11" stroke="#4f9cff"/>
<path d="M1931 486h11" stroke="#6297ff"/>
<path d="M1941 486h11" stroke="#7593ff"/>
<path d="M1951 486h11" stroke="#898eff"/>
<path d="M1961 486h11" stroke="#9c8aff"/>
<path d="M1971 486h11" stroke="#b085ff"/>
<path d="M1981 486h11" stroke="#c581ff"/>
<path d="M1991 486h11" stroke="#d97cff"/>
<path d="M2001 486h11" stroke="#ee77ff"/>
<path d="M2011 486h11" stroke="#ff71fb"/>
<path d="M2021 486h11" stroke="#ff63e8"/>
<path d="M2031 486h11" stroke="#ff58d7"/>
<path d="M2041 486h11" stroke="#ff4ec9"/>
<path d="M2051 486h11" stroke="#ff45bc"/>
<path d="M2061 486h11" stroke="#ff3eb0"/>
<path d="M2071 486h11" stroke="#ff37a6"/>
<path d="M2081 486h11" stroke="#ff309d"/>
<path d="M2091 486h11" stroke="#ff2b94"/>
<path d="M2101 486h11" stroke="#ff258d"/>
<path d="M2111 486h11" stroke="#ff2186"/>
<path d="M2121 486h11" stroke="#ff1c7f"/>
<path d="M2131 486h11" stroke="#ff1879"/>
<path d="M2141 486h11" stroke="#ff1474"/>
<path d="M2151 486h11" stroke="#ff116f"/>
<path d="M2161 486h11" stroke="#ff0e6a"/>
<path d="M2171 486h11" stroke="#ff0b66"/>
<path d="M2181 486h11" stroke="#ff0862"/>
<path d="M2191 486h11" stroke="#ff055e"/>
<path d="M2201 486h11" stroke="#ff035a"/>
<path d="M2211 486h11" stroke="#ff0157"/>
<path d="M2221 486h11" stroke="#ff0054"/>
<path d="M2231 486h11" stroke="#ff0051"/>
<path d="M2241 486h11" stroke="#ff004e"/>
<path d="M2251 486h11" stroke="#ff004b"/>
<path d="M2261 486h11" stroke="#ff0049"/>
<path d="M2271 486h11" stroke="#ff0046"/>
<path d="M2281 486h11" stroke="#ff0044"/>
<path d="M2291 486h11" stroke="#ff0042"/>
<path d="M2301 486h11" stroke="#ff0040"/>
<path d="M2311 486h11" stroke="#ff003e"/>
<path d="M2321 486h11" stroke="#ff003c"/>
<path d="M2331 486h11" stroke="#ff003a"/>
<path d="M2341 486h11" stroke="#ff0038"/>
<path d="M2351 486h11" stroke="#ff0037"/>
<path d="M2361 486h11" stroke="#ff0035"/>
<path d="M2371 486h11" stroke="#ff0033"/>
<path d="M2381 486h11" stroke="#ff0032"/>
<path d="M2391 486h11" stroke="#ff0031"/>
<path d="M2401 486h11" stroke="#ff002f"/>
<path d="M2411 486h11" stroke="#ff002e"/>
<path d="M2421 486h11" stroke="#ff002d"/>
<path d="M2431 486h11" stroke="#ff002b"/>
<path d="M2441 486h11" stroke="#ff002a"/>
<path d="M2451 486h11" stroke="#ff0029"/>
<path d="M2461 486h11" stroke="#ff0028"/>
<path d="M2471 486h11" stroke="#ff0027"/>
<path d="M2481 486h11" stroke="#ff0026"/>
<path d="M2491 486h11" stroke="#ff0025"/>
<path d="M2501 486h11" stroke="#ff0024"/>
<path d="M1701 496h11" stroke="#00deff"/>
<path d="M1711 496h11" stroke="#00daff"/>
<path d="M1721 496h11" stroke="#00d7ff"/>
<path d="M1731 496h11" stroke="#00d4ff"/>
<path d="M1741 496h11" stroke="#00d0ff"/>
<path d="M1751 496h11" stroke="#00cdff"/>
<path d="M1761 496h11" stroke="#00caff"/>
<path d="M1771 496h11" stroke="#00c6ff"/>
<path d="M1781 496h11" stroke="#00c3ff"/>
<path d="M1791 496h11" stroke="#00bfff"/>
<path d="M1801 496h11" stroke="#00bbff"/>
<path d="M1811 496h11" stroke="#00b8ff"/>
<path d="M1821 496h11" stroke="#00b4ff"/>
<path d="M1831 496h11" stroke="#00b0ff"/>
<path d="M1841 496h11" stroke="#00adff"/>
<path d="M1851 496h11" stroke="#00a9ff"/>
<path d="M1861 496h11" stroke="#00a5ff"/>
<path d="M1871 496h11" stroke="#00a1ff"/>
<path d="M1881 496h11" stroke="#029dff"/>
<path d="M1891 496h11" stroke="#1399ff"/>
<path d="M1901 496h11" stroke="#2495ff"/>
<path d="M1911 496h11" stroke="#3591ff"/>
<path d="M1921 496h11" stroke="#478dff"/>
<path d="M1931 496h11" stroke="#5989ff"/>
<path d="M1941 496h11" stroke="#6b85ff"/>
<path d="M1951 496h11" stroke="#7d80ff"/>
<path d="M1961 496h11" stroke="#8f7cff"/>
<path d="M1971 496h11" stroke="#a278ff"/>
<path d="M1981 496h11" stroke="#b573ff"/>
<path d="M1991 496h11" stroke="#c86fff"/>
<path d="M2001 496h11" stroke="#db6aff"/>
<path d="M2011 496h11" stroke="#ef66ff"/>
<path d="M2021 496h11" stroke="#ff60fb"/>
<path d="M2031 496h11" stroke="#ff54e9"/>
<path d="M2041 496h11" stroke="#ff4bd9"/>
<path d="M2051 496h11" stroke="#ff42cb"/>
<path d="M2061 496h11" stroke="#ff3abf"/>
<path d="M2071 496h11" stroke="#ff33b4"/>
<path d="M2081 496h11" stroke="#ff2daa"/>
<path d="M2091 496h11" stroke="#ff27a1"/>
<path d="M2101 496h11" stroke="#ff2298"/>
<path d="M2111 496h11" stroke="#ff1e91"/>
<path d="M2121 496h11" stroke="#ff198a"/>
<path d="M2131 496h11" stroke="#ff1584"/>
<path d="M2141 496h11" stroke="#ff127e"/>
<path d="M2151 496h11" stroke="#ff0e78"/>
<path d="M2161 496h11" stroke="#ff0b73"/>
<path d="M2171 496h11" stroke="#ff086e"/>
<path d="M2181 496h11" stroke="#ff066a"/>
<path d="M2191 496h11" stroke="#ff0366"/>
<path d="M2201 496h11" stroke="#ff0162"/>
<path d="M2211 496h11" stroke="#ff005e"/>
<path d="M2221 496h11" stroke="#ff005b"/>
<path d="M2231 496h11" stroke="#ff0058"/>
<path d="M2241 496h11" stroke="#ff0055"/>
<path d="M2251 496h11" stroke="#ff0052"/>
<path d="M2261 496h11" stroke="#ff004f"/>
<path d="M2271 496h11" stroke="#ff004d"/>
<path d="M2281 496h11" stroke="#ff004a"/>
<path d="M2291 496h11" stroke="#ff0048"/>
<path d="M2301 496h11" stroke="#ff0046"/>
<path d="M2311 496h11" stroke="#ff0043"/>
<path d="M2321 496h11" stroke="#ff0041"/>
<path d="M2331 496h11" stroke="#ff003f"/>
<path d="M2341 496h11" stroke="#ff003e"/>
<path d="M2351 496h11" stroke="#ff003c"/>
<path d="M2361 496h11" stroke="#ff003a"/>
<path d="M2371 496h11" stroke="#ff0038"/>
<path d="M2381 496h11" stroke="#ff0037"/>
<path d="M2391 496h11" stroke="#ff0035"/>
<path d="M2401 496h11" stroke="#ff0034"/>
<path d="M2411 496h11" stroke="#ff0033"/>
<path d="M2421 496h11" stroke="#ff0031"/>
<path d="M2431 496h11" stroke="#ff0030"/>
<path d="M2441 496h11" stroke="#ff002f"/>
<path d="M2451 496h11" stroke="#ff002d"/>
<path d="M2461 496h11" stroke="#ff002c"/>
<path d="M2471 496h11" stroke="#ff002b"/>
<path d="M2481 496h11" stroke="#ff002a"/>
<path d="M2491 496h11" stroke="#ff0029"/>
<path d="M1701 506h11" stroke="#00ceff"/>
<path d="M1711 506h11" stroke="#00cbff"/>
<path d="M1721 506h11" stroke="#00c8ff"/>
<path d="M1731 506h11" stroke="#00c4ff"/>
<path d="M1741 506h11" stroke="#00c1ff"/>
<path d="M1751 506h11" stroke="#00beff"/>
<path d="M1761 506h11" stroke="#00baff"/>
<path d="M1771 506h11" stroke="#00b7ff"/>
<path d="M1781 506h11" stroke="#00b4ff"/>
<path d="M1791 506h11" stroke="#00b0ff"/>
<path d="M1801 506h11" stroke="#00adff"/>
<path d="M1811 506h11" stroke="#00a9ff"/>
<path d="M1821 506h11" stroke="#00a6ff"/>
<path d="M1831 506h11" stroke="#00a2ff"/>
<path d="M1841 506h11" stroke="#009eff"/>
<path d="M1851 506h11" stroke="#009bff"/>
<path d="M1861 506h11" stroke="#0097ff"/>
<path d="M1871 506h11" stroke="#0093ff"/>
<path d="M1881 506h11" stroke="#0090ff"/>
<path d="M1891 506h11" stroke="#0f8cff"/>
<path d="M1901 506h11" stroke="#1f88ff"/>
<path d="M1911 506h11" stroke="#3084ff"/>
<path d="M1921 506h11" stroke="#4080ff"/>
<path d="M1931 506h11" stroke="#517cff"/>
<path d="M1941 506h11" stroke="#6278ff"/>
<path d="M1951 506h11" stroke="#7374ff"/>
<path d="M1961 506h11" stroke="#8470ff"/>
<path d="M1971 506h11" stroke="#956cff"/>
<path d="M1981 506h11" stroke="#a767ff"/>
<path d="M1991 506h11" stroke="#b963ff"/>
<path d="M2001 506h11" stroke="#cb5fff"/>
<path d="M2011 506h11" stroke="#dd5aff"/>
<path d="M2021 506h11" stroke="#f056ff"/>
<path d="M2031 506h11" stroke="#ff50fc"/>
<path d="M2041 506h11" stroke="#ff47eb"/>
<path d="M2051 506h11" stroke="#ff3edb"/>
<path d="M2061 506h11" stroke="#ff37ce"/>
<path d="M2071 506h11" stroke="#ff30c2"/>
<path d="M2081 506h11" stroke="#ff2ab7"/>
<path d="M2091 506h11" stroke="#ff24ad"/>
<path d="M2101 506h11" stroke="#ff1fa4"/>
<path d="M2111 506h11" stroke="#ff1b9c"/>
<path d="M2121 506h11" stroke="#ff1795"/>
<path d="M2131 506h11" stroke="#ff138e"/>
<path d="M2141 506h11" stroke="#ff0f88"/>
<path d="M2151 506h11" stroke="#ff0c82"/>
<path d="M2161 506h11" stroke="#ff097c"/>
<path d="M2171 506h11" stroke="#ff0677"/>
<path d="M2181 506h11" stroke="#ff0373"/>
<path d="M2191 506h11" stroke="#ff016e"/>
<path d="M2201 506h11" stroke="#ff006a"/>
<path d="M2211 506h11" stroke="#ff0066"/>
<path d="M2221 506h11" stroke="#ff0062"/>
<path d="M2231 506h11" stroke="#ff005f"/>
<path d="M2241 506h11" stroke="#ff005c"/>
<path d="M2251 506h11" stroke="#ff0059"/>
<path d="M2261 506h11" stroke="#ff0056"/>
<path d="M2271 506h11" stroke="#ff0053"/>
<path d="M2281 506h11" stroke="#ff0050"/>
<path d="M2291 506h11" stroke="#ff004e"/>
<path d="M2301 506h11" stroke="#ff004b"/>
<path d="M2311 506h11" stroke="#ff0049"/>
<path d="M2321 506h11" stroke="#ff0047"/>
<path d="M2331 506h11" stroke="#ff0045"/>
<path d="M2341 506h11" stroke="#ff0043"/>
<path d="M2351 506h11" stroke="#ff0041"/>
<path d="M2361 506h11" stroke="#ff003f"/>
<path d="M2371 506h11" stroke="#ff003d"/>
<path d="M2381 506h11" stroke="#ff003c"/>
<path d="M2391 506h11" stroke="#ff003a"/>
<path d="M2401 506h11" stroke="#ff0039"/>
<path d="M2411 506h11" stroke="#ff0037"/>
<path d="M2421 506h11" stroke="#ff0036"/>
<path d="M2431 506h11" stroke="#ff0034"/>
<path d="M2441 506h11" stroke="#ff0033"/>
<path d="M2451 506h11" stroke="#ff0032"/>
<path d="M2461 506h11" stroke="#ff0030"/>
<path d="M2471 506h11" stroke="#ff002f"/>
<path d="M2481 506h11" stroke="#ff002e"/>
<path d="M1711 516h11" stroke="#00bdff"/>
<path d="M1721 516h11" stroke="#00b9ff"/>
<path d="M1731 516h11" stroke="#00b6ff"/>
<path d="M1741 516h11" stroke="#00b3ff"/>
<path d="M1751 516h11" stroke="#00b0ff"/>
<path d="M1761 516h11" stroke="#00adff"/>
<path d="M1771 516h11" stroke="#00aaff"/>
<path d="M1781 516h11" stroke="#00a6ff"/>
<path d="M1791 516h11" stroke="#00a3ff"/>
<path d="M1801 516h11" stroke="#00a0ff"/>
<path d="M1811 516h11" stroke="#009cff"/>
<path d="M1821 516h11" stroke="#0099ff"/>
<path d="M1831 516h11" stroke="#0095ff"/>
<path d="M1841 516h11" stroke="#0092ff"/>
<path d="M1851 516h11" stroke="#008eff"/>
<path d="M1861 516h11" stroke="#008bff"/>
<path d="M1871 516h11" stroke="#0087ff"/>
<path d="M1881 516h11" stroke="#0083ff"/>
<path d="M1891 516h11" stroke="#0c80ff"/>
<path d="M1901 516h11" stroke="#1b7cff"/>
<path d="M1911 516h11" stroke="#2b78ff"/>
<path d="M1921 516h11" stroke="#3a75ff"/>
<path d="M1931 516h11" stroke="#4a71ff"/>
<path d="M1941 516h11" stroke="#5a6dff"/>
<path d="M1951 516h11" stroke="#6a69ff"/>
<path d="M1961 516h11" stroke="#7a65ff"/>
<path d="M1971 516h11" stroke="#8a61ff"/>
<path d="M1981 516h11" stroke="#9b5dff"/>
<path d="M1991 516h11" stroke="#ac59ff"/>
<path d="M2001 516h11" stroke="#bd55ff"/>
<path d="M2011 516h11" stroke="#ce51ff"/>
<path d="M2021 516h11" stroke="#df4cff"/>
<path d="M2031 516h11" stroke="#f048ff"/>
<path d="M2041 516h11" stroke="#ff43fc"/>
<path d="M2051 516h11" stroke="#ff3bec"/>
<path d="M2061 516h11" stroke="#ff33dd"/>
<path d="M2071 516h11" stroke="#ff2dd0"/>
<path d="M2081 516h11" stroke="#ff27c5"/>
<path d="M2091 516h11" stroke="#ff21ba"/>
<path d="M2101 516h11" stroke="#ff1cb0"/>
<path d="M2111 516h11" stroke="#ff18a8"/>
<path d="M2121 516h11" stroke="#ff14a0"/>
<path d="M2131 516h11" stroke="#ff1098"/>
<path d="M2141 516h11" stroke="#ff0c92"/>
<path d="M2151 516h11" stroke="#ff098b"/>
<path d="M2161 516h11" stroke="#ff0686"/>
<path d="M2171 516h11" stroke="#ff0380"/>
<path d="M2181 516h11" stroke="#ff017b"/>
<path d="M2191 516h11" stroke="#ff0076"/>
<path d="M2201 516h11" stroke="#ff0072"/>
<path d="M2211 516h11" stroke="#ff006e"/>
<path d="M2221 516h11" stroke="#ff006a"/>
<path d="M2231 516h11" stroke="#ff0066"/>
<path d="M2241 516h11" stroke="#ff0063"/>
<path d="M2251 516h11" stroke="#ff005f"/>
<path d="M2261 516h11" stroke="#ff005c"/>
<path d="M2271 516h11" stroke="#ff0059"/>
<path d="M2281 516h11" stroke="#ff0057"/>
<path d="M2291 516h11" stroke="#ff0054"/>
<path d="M2301 516h11" stroke="#ff0051"/>
<path d="M2311 516h11" stroke="#ff004f"/>
<path d="M2321 516h11" stroke="#ff004d"/>
<path d="M2331 516h11" stroke="#ff004a"/>
<path d="M2341 516h11" stroke="#ff0048"/>
<path d="M2351 516h11" stroke="#ff0046"/>
<path d="M2361 516h11" stroke="#ff0044"/>
<path d="M2371 516h11" stroke="#ff0043"/>
<path d="M2381 516h11" stroke="#ff0041"/>
<path d="M2391 516h11" stroke="#ff003f"/>
<path d="M2401 516h11" stroke="#ff003d"/>
<path d="M2411 516h11" stroke="#ff003c"/>
<path d="M2421 516h11" stroke="#ff003a"/>
<path d="M2431 516h11" stroke="#ff0039"/>
<path d="M2441 516h11" stroke="#ff0037"/>
<path d="M2451 516h11" stroke="#ff0036"/>
<path d="M2461 516h11" stroke="#ff0035"/>
<path d="M2471 516h11" stroke="#ff0033"/>
<path d="M1711 526h11" stroke="#00b0ff"/>
<path d="M1721 526h11" stroke="#00adff"/>
<path d="M1731 526h11" stroke="#00aaff"/>
<path d="M1741 526h11" stroke="#00a7ff"/>
<path d="M1751 526h11" stroke="#00a4ff"/>
<path d="M1761 526h11" stroke="#00a0ff"/>
<path d="M1771 526h11" stroke="#009dff"/>
<path d="M1781 526h11" stroke="#009aff"/>
<path d="M1791 526h11" stroke="#0097ff"/>
<path d="M1801 526h11" stroke="#0094ff"/>
<path d="M1811 526h11" stroke="#0090ff"/>
<path d="M1821 526h11" stroke="#008dff"/>
<path d="M1831 526h11" stroke="#008aff"/>
<path d="M1841 526h11" stroke="#0086ff"/>
<path d="M1851 526h11" stroke="#0083ff"/>
<path d="M1861 526h11" stroke="#0080ff"/>
<path d="M1871 526h11" stroke="#007cff"/>
<path d="M1881 526h11" stroke="#0079ff"/>
<path d="M1891 526h11" stroke="#0975ff"/>
<path d="M1901 526h11" stroke="#1772ff"/>
<path d="M1911 526h11" stroke="#266eff"/>
<path d="M1921 526h11" stroke="#356aff"/>
<path d="M1931 526h11" stroke="#4467ff"/>
<path d="M1941 526h11" stroke="#5363ff"/>
<path d="M1951 526h11" stroke="#625fff"/>
<path d="M1961 526h11" stroke="#715bff"/>
<path d="M1971 526h11" stroke="#8057ff"/>
<path d="M1981 526h11" stroke="#9054ff"/>
<path d="M1991 526h11" stroke="#a050ff"/>
<path d="M2001 526h11" stroke="#b04cff"/>
<path d="M2011 526h11" stroke="#c048ff"/>
<path d="M2021 526h11" stroke="#d044ff"/>
<path d="M2031 526h11" stroke="#e040ff"/>
<path d="M2041 526h11" stroke="#f13cff"/>
<path d="M2051 526h11" stroke="#ff37fc"/>
<path d="M2061 526h11" stroke="#ff30ed"/>
<path d="M2071 526h11" stroke="#ff29df"/>
<path d="M2081 526h11" stroke="#ff23d2"/>
<path d="M2091 526h11" stroke="#ff1ec7"/>
<path d="M2101 526h11" stroke="#ff19bd"/>
<path d="M2111 526h11" stroke="#ff15b3"/>
<path d="M2121 526h11" stroke="#ff11ab"/>
<path d="M2131 526h11" stroke="#ff0da3"/>
<path d="M2141 526h11" stroke="#ff0a9c"/>
<path d="M2151 526h11" stroke="#ff0795"/>
<path d="M2161 526h11" stroke="#ff048f"/>
<path d="M2171 526h11" stroke="#ff0189"/>
<path d="M2181 526h11" stroke="#ff0084"/>
<path d="M2191 526h11" stroke="#ff007f"/>
<path d="M2201 526h11" stroke="#ff007a"/>
<path d="M2211 526h11" stroke="#ff0076"/>
<path d="M2221 526h11" stroke="#ff0071"/>
<path d="M2231 526h11" stroke="#ff006e"/>
<path d="M2241 526h11" stroke="#ff006a"/>
<path d="M2251 526h11" stroke="#ff0066"/>
<path d="M2261 526h11" stroke="#ff0063"/>
<path d="M2271 526h11" stroke="#ff0060"/>
<path d="M2281 526h11" stroke="#ff005d"/>
<path d="M2291 526h11" stroke="#ff005a"/>
<path d="M2301 526h11" stroke="#ff0057"/>
<path d="M2311 526h11" stroke="#ff0055"/>
<path d="M2321 526h11" stroke="#ff0052"/>
<path d="M2331 526h11" stroke="#ff0050"/>
<path d="M2341 526h11" stroke="#ff004e"/>
<path d="M2351 526h11" stroke="#ff004c"/>
<path d="M2361 526h11" stroke="#ff004a"/>
<path d="M2371 526h11" stroke="#ff0048"/>
<path d="M2381 526h11" stroke="#ff0046"/>
<path d="M2391 526h11" stroke="#ff0044"/>
<path d="M2401 526h11" stroke="#ff0042"/>
<path d="M2411 526h11" stroke="#ff0041"/>
<path d="M2421 526h11" stroke="#ff003f"/>
<path d="M2431 526h11" stroke="#ff003d"/>
<path d="M2441 526h11" stroke="#ff003c"/>
<path d="M2451 526h11" stroke="#ff003a"/>
<path d="M2461 526h11" stroke="#ff0039"/>
<path d="M1711 536h11" stroke="#00a4ff"/>
<path d="M1721 536h11" stroke="#00a1ff"/>
<path d="M1731 536h11" stroke="#009eff"/>
<path d="M1741 536h11" stroke="#009bff"/>
<path d="M1751 536h11" stroke="#0098ff"/>
<path d="M1761 536h11" stroke="#0095ff"/>
<path d="M1771 536h11" stroke="#0092ff"/>
<path d="M1781 536h11" stroke="#008fff"/>
<path d="M1791 536h11" stroke="#008cff"/>
<path d="M1801 536h11" stroke="#0089ff"/>
<path d="M1811 536h11" stroke="#0086ff"/>
<path d="M1821 536h11" stroke="#0083ff"/>
<path d="M1831 536h11" stroke="#007fff"/>
<path d="M1841 536h11" stroke="#007cff"/>
<path d="M1851 536h11" stroke="#0079ff"/>
<path d="M1861 536h11" stroke="#0076ff"/>
<path d="M1871 536h11" stroke="#0072ff"/>
<path d="M1881 536h11" stroke="#006fff"/>
<path d="M1891 536h11" stroke="#066bff"/>
<path d="M1901 536h11" stroke="#1468ff"/>
<path d="M1911 536h11" stroke="#2265ff"/>
<path d="M1921 536h11" stroke="#3061ff"/>
<path d="M1931 536h11" stroke="#3e5dff"/>
<path d="M1941 536h11" stroke="#4c5aff"/>
<path d="M1951 536h11" stroke="#5a56ff"/>
<path d="M1961 536h11" stroke="#6953ff"/>
<path d="M1971 536h11" stroke="#774fff"/>
<path d="M1981 536h11" stroke="#864bff"/>
<path d="M1991 536h11" stroke="#9548ff"/>
<path d="M2001 536h11" stroke="#a444ff"/>
<path d="M2011 536h11" stroke="#b340ff"/>
<path d="M2021 536h11" stroke="#c33cff"/>
<path d="M2031 536h11" stroke="#d238ff"/>
<path d="M2041 536h11" stroke="#e234ff"/>
<path d="M2051 536h11" stroke="#f230ff"/>
<path d="M2061 536h11" stroke="#ff2cfc"/>
<path d="M2071 536h11" stroke="#ff25ee"/>
<path d="M2081 536h11" stroke="#ff20e0"/>
<path d="M2091 536h11" stroke="#ff1bd4"/>
<path d="M2101 536h11" stroke="#ff16c9"/>
<path d="M2111 536h11" stroke="#ff12bf"/>
<path d="M2121 536h11" stroke="#ff0eb6"/>
<path d="M2131 536h11" stroke="#ff0aae"/>
<path d="M2141 536h11" stroke="#ff07a6"/>
<path d="M2151 536h11" stroke="#ff049f"/>
<path d="M2161 536h11" stroke="#ff0198"/>
<path d="M2171 536h11" stroke="#ff0092"/>
<path d="M2181 536h11" stroke="#ff008d"/>
<path d="M2191 536h11" stroke="#ff0087"/>
<path d="M2201 536h11" stroke="#ff0082"/>
<path d="M2211 536h11" stroke="#ff007e"/>
<path d="M2221 536h11" stroke="#ff0079"/>
<path d="M2231 536h11" stroke="#ff0075"/>
<path d="M2241 536h11" stroke="#ff0071"/>
<path d="M2251 536h11" stroke="#ff006d"/>
<path d="M2261 536h11" stroke="#ff006a"/>
<path d="M2271 536h11" stroke="#ff0067"/>
<path d="M2281 536h11" stroke="#ff0063"/>
<path d="M2291 536h11" stroke="#ff0060"/>
<path d="M2301 536h11" stroke="#ff005d"/>
<path d="M2311 536h11" stroke="#ff005b"/>
<path d="M2321 536h11" stroke="#ff0058"/>
<path d="M2331 536h11" stroke="#ff0056"/>
<path d="M2341 536h11" stroke="#ff0053"/>
<path d="M2351 536h11" stroke="#ff0051"/>
<path d="M2361 536h11" stroke="#ff004f"/>
<path d="M2371 536h11" stroke="#ff004d"/>
<path d="M2381 536h11" stroke="#ff004b"/>
<path d="M2391 536h11" stroke="#ff0049"/>
<path d="M2401 536h11" stroke="#ff0047"/>
<path d="M2411 536h11" stroke="#ff0045"/>
<path d="M2421 536h11" stroke="#ff0044"/>
<path d="M2431 536h11" stroke="#ff0042"/>
<path d="M2441 536h11" stroke="#ff0040"/>
<path d="M2451 536h11" stroke="#ff003f"/>
<path d="M1721 546h11" stroke="#0097ff"/>
<path d="M1731 546h11" stroke="#0094ff"/>
<path d="M1741 546h11" stroke="#0091ff"/>
<path d="M1751 546h11" stroke="#008eff"/>
<path d="M1761 546h11" stroke="#008bff"/>
<path d="M1771 546h11" stroke="#0088ff"/>
<path d="M1781 546h11" stroke="#0085ff"/>
<path d="M1791 546h11" stroke="#0082ff"/>
<path d="M1801 546h11" stroke="#007fff"/>
<path d="M1811 546h11" stroke="#007cff"/>
<path d="M1821 546h11" stroke="#0079ff"/>
<path d="M1831 546h11" stroke="#0076ff"/>
<path d="M1841 546h11" stroke="#0073ff"/>
<path d="M1851 546h11" stroke="#0070ff"/>
<path d="M1861 546h11" stroke="#006cff"/>
<path d="M1871 546h11" stroke="#0069ff"/>
<path d="M1881 546h11" stroke="#0066ff"/>
<path d="M1891 546h11" stroke="#0463ff"/>
<path d="M1901 546h11" stroke="#115fff"/>
<path d="M1911 546h11" stroke="#1e5cff"/>
<path d="M1921 546h11" stroke="#2b59ff"/>
<path d="M1931 546h11" stroke="#3955ff"/>
<path d="M1941 546h11" stroke="#4652ff"/>
<path d="M1951 546h11" stroke="#544eff"/>
<path d="M1961 546h11" stroke="#624bff"/>
<path d="M1971 546h11" stroke="#6f47ff"/>
<path d="M1981 546h11" stroke="#7d44ff"/>
<path d="M1991 546h11" stroke="#8c40ff"/>
<path d="M2001 546h11" stroke="#9a3dff"/>
<path d="M2011 546h11" stroke="#a839ff"/>
<path d="M2021 546h11" stroke="#b735ff"/>
<path d="M2031 546h11" stroke="#c531ff"/>
<path d="M2041 546h11" stroke="#d42eff"/>
<path d="M2051 546h11" stroke="#e32aff"/>
<path d="M2061 546h11" stroke="#f226ff"/>
<path d="M2071 546h11" stroke="#ff22fd"/>
<path d="M2081 546h11" stroke="#ff1cee"/>
<path d="M2091 546h11" stroke="#ff17e2"/>
<path d="M2101 546h11" stroke="#ff13d6"/>
<path d="M2111 546h11" stroke="#ff0fcb"/>
<path d="M2121 546h11" stroke="#ff0bc2"/>
<path d="M2131 546h11" stroke="#ff07b9"/>
<path d="M2141 546h11" stroke="#ff04b1"/>
<path d="M2151 546h11" stroke="#ff01a9"/>
<path d="M2161 546h11" stroke="#ff00a2"/>
<path d="M2171 546h11" stroke="#ff009c"/>
<path d="M2181 546h11" stroke="#ff0095"/>
<path d="M2191 546h11" stroke="#ff0090"/>
<path d="M2201 546h11" stroke="#ff008b"/>
<path d="M2211 546h11" stroke="#ff0086"/>
<path d="M2221 546h11" stroke="#ff0081"/>
<path d="M2231 546h11" stroke="#ff007c"/>
<path d="M2241 546h11" stroke="#ff0078"/>
<path d="M2251 546h11" stroke="#ff0074"/>
<path d="M2261 546h11" stroke="#ff0071"/>
<path d="M2271 546h11" stroke="#ff006d"/>
<path d="M2281 546h11" stroke="#ff006a"/>
<path d="M2291 546h11" stroke="#ff0067"/>
<path d="M2301 546h11" stroke="#ff0064"/>
<path d="M2311 546h11" stroke="#ff0061"/>
<path d="M2321 546h11" stroke="#ff005e"/>
<path d="M2331 546h11" stroke="#ff005b"/>
<path d="M2341 546h11" stroke="#ff0059"/>
<path d="M2351 546h11" stroke="#ff0056"/>
<path d="M2361 546h11" stroke="#ff0054"/>
<path d="M2371 546h11" stroke="#ff0052"/>
<path d="M2381 546h11" stroke="#ff0050"/>
<path d="M2391 546h11" stroke="#ff004e"/>
<path d="M2401 546h11" stroke="#ff004c"/>
<path d="M2411 546h11" stroke="#ff004a"/>
<path d="M2421 546h11" stroke="#ff0048"/>
<path d="M2431 546h11" stroke="#ff0046"/>
<path d="M2441 546h11" stroke="#ff0045"/>
<path d="M1721 556h11" stroke="#008dff"/>
<path d="M1731 556h11" stroke="#008aff"/>
<path d="M1741 556h11" stroke="#0088ff"/>
<path d="M1751 556h11" stroke="#0085ff"/>
<path d="M1761 556h11" stroke="#0082ff"/>
<path d="M1771 556h11" stroke="#007fff"/>
<path d="M1781 556h11" stroke="#007cff"/>
<path d="M1791 556h11" stroke="#0079ff"/>
<path d="M1801 556h11" stroke="#0076ff"/>
<path d="M1811 556h11" stroke="#0073ff"/>
<path d="M1821 556h11" stroke="#0070ff"/>
<path d="M1831 556h11" stroke="#006dff"/>
<path d="M1841 556h11" stroke="#006aff"/>
<path d="M1851 556h11" stroke="#0067ff"/>
<path d="M1861 556h11" stroke="#0064ff"/>
<path d="M1871 556h11" stroke="#0061ff"/>
<path d="M1881 556h11" stroke="#005eff"/>
<path d="M1891 556h11" stroke="#025bff"/>
<path d="M1901 556h11" stroke="#0e58ff"/>
<path d="M1911 556h11" stroke="#1b54ff"/>
<path d="M1921 556h11" stroke="#2751ff"/>
<path d="M1931 556h11" stroke="#344eff"/>
<path d="M1941 556h11" stroke="#414aff"/>
<path d="M1951 556h11" stroke="#4e47ff"/>
<path d="M1961 556h11" stroke="#5b44ff"/>
<path d="M1971 556h11" stroke="#6840ff"/>
<path d="M1981 556h11" stroke="#753dff"/>
<path d="M1991 556h11" stroke="#833aff"/>
<path d="M2001 556h11" stroke="#9036ff"/>
<path d="M2011 556h11" stroke="#9e33ff"/>
<path d="M2021 556h11" stroke="#ac2fff"/>
<path d="M2031 556h11" stroke="#ba2bff"/>
<path d="M2041 556h11" stroke="#c828ff"/>
<path d="M2051 556h11" stroke="#d624ff"/>
<path d="M2061 556h11" stroke="#e420ff"/>
<path d="M2071 556h11" stroke="#f31dff"/>
<path d="M2081 556h11" stroke="#ff19fd"/>
<path d="M2091 556h11" stroke="#ff14ef"/>
<path d="M2101 556h11" stroke="#ff0fe3"/>
<path d="M2111 556h11" stroke="#ff0bd8"/>
<path d="M2121 556h11" stroke="#ff08cd"/>
<path d="M2131 556h11" stroke="#ff04c4"/>
<path d="M2141 556h11" stroke="#ff01bb"/>
<path d="M2151 556h11" stroke="#ff00b3"/>
<path d="M2161 556h11" stroke="#ff00ac"/>
<path d="M2171 556h11" stroke="#ff00a5"/>
<path d="M2181 556h11" stroke="#ff009e"/>
<path d="M2191 556h11" stroke="#ff0098"/>
<path d="M2201 556h11" stroke="#ff0093"/>
<path d="M2211 556h11" stroke="#ff008e"/>
<path d="M2221 556h11" stroke="#ff0089"/>
<path d="M2231 556h11" stroke="#ff0084"/>
<path d="M2241 556h11" stroke="#ff0080"/>
<path d="M2251 556h11" stroke="#ff007b"/>
<path d="M2261 556h11" stroke="#ff0078"/>
<path d="M2271 556h11" stroke="#ff0074"/>
<path d="M2281 556h11" stroke="#ff0070"/>
<path d="M2291 556h11" stroke="#ff006d"/>
<path d="M2301 556h11" stroke="#ff006a"/>
<path d="M2311 556h11" stroke="#ff0067"/>
<path d="M2321 556h11" stroke="#ff0064"/>
<path d="M2331 556h11" stroke="#ff0061"/>
<path d="M2341 556h11" stroke="#ff005e"/>
<path d="M2351 556h11" stroke="#ff005c"/>
<path d="M2361 556h11" stroke="#ff0059"/>
<path d="M2371 556h11" stroke="#ff0057"/>
<path d="M2381 556h11" stroke="#ff0055"/>
<path d="M2391 556h11" stroke="#ff0053"/>
<path d="M2401 556h11" stroke="#ff0051"/>
<path d="M2411 556h11" stroke="#ff004f"/>
<path d="M2421 556h11" stroke="#ff004d"/>
<path d="M2431 556h11" stroke="#ff004b"/>
<path d="M1731 566h11" stroke="#0082ff"/>
<path d="M1741 566h11" stroke="#007fff"/>
<path d="M1751 566h11" stroke="#007cff"/>
<path d="M1761 566h11" stroke="#0079ff"/>
<path d="M1771 566h11" stroke="#0077ff"/>
<path d="M1781 566h11" stroke="#0074ff"/>
<path d="M1791 566h11" stroke="#0071ff"/>
<path d="M1801 566h11" stroke="#006eff"/>
<path d="M1811 566h11" stroke="#006bff"/>
<path d="M1821 566h11" stroke="#0068ff"/>
<path d="M1831 566h11" stroke="#0065ff"/>
<path d="M1841 566h11" stroke="#0063ff"/>
<path d="M1851 566h11" stroke="#0060ff"/>
<path d="M1861 566h11" stroke="#005dff"/>
<path d="M1871 566h11" stroke="#005aff"/>
<path d="M1881 566h11" stroke="#0057ff"/>
<path d="M1891 566h11" stroke="#0053ff"/>
<path d="M1901 566h11" stroke="#0c50ff"/>
<path d="M1911 566h11" stroke="#184dff"/>
<path d="M1921 566h11" stroke="#244aff"/>
<path d="M1931 566h11" stroke="#3047ff"/>
<path d="M1941 566h11" stroke="#3c44ff"/>
<path d="M1951 566h11" stroke="#4941ff"/>
<path d="M1961 566h11" stroke="#553dff"/>
<path d="M1971 566h11" stroke="#623aff"/>
<path d="M1981 566h11" stroke="#6e37ff"/>
<path d="M1991 566h11" stroke="#7b33ff"/>
<path d="M2001 566h11" stroke="#8830ff"/>
<path d="M2011 566h11" stroke="#952dff"/>
<path d="M2021 566h11" stroke="#a229ff"/>
<path d="M2031 566h11" stroke="#af26ff"/>
<path d="M2041 566h11" stroke="#bd22ff"/>
<path d="M2051 566h11" stroke="#ca1fff"/>
<path d="M2061 566h11" stroke="#d81bff"/>
<path d="M2071 566h11" stroke="#e518ff"/>
<path d="M2081 566h11" stroke="#f314ff"/>
<path d="M2091 566h11" stroke="#ff10fd"/>
<path d="M2101 566h11" stroke="#ff0cf0"/>
<path d="M2111 566h11" stroke="#ff08e4"/>
<path d="M2121 566h11" stroke="#ff05d9"/>
<path d="M2131 566h11" stroke="#ff01cf"/>
<path d="M2141 566h11" stroke="#ff00c6"/>
<path d="M2151 566h11" stroke="#ff00bd"/>
<path d="M2161 566h11" stroke="#ff00b6"/>
<path d="M2171 566h11" stroke="#ff00ae"/>
<path d="M2181 566h11" stroke="#ff00a8"/>
<path d="M2191 566h11" stroke="#ff00a1"/>
<path d="M2201 566h11" stroke="#ff009b"/>
<path d="M2211 566h11" stroke="#ff0096"/>
<path d="M2221 566h11" stroke="#ff0091"/>
<path d="M2231 566h11" stroke="#ff008c"/>
<path d="M2241 566h11" stroke="#ff0087"/>
<path d="M2251 566h11" stroke="#ff0083"/>
<path d="M2261 566h11" stroke="#ff007e"/>
<path d="M2271 566h11" stroke="#ff007b"/>
<path d="M2281 566h11" stroke="#ff0077"/>
<path d="M2291 566h11" stroke="#ff0073"/>
<path d="M2301 566h11" stroke="#ff0070"/>
<path d="M2311 566h11" stroke="#ff006d"/>
<path d="M2321 566h11" stroke="#ff006a"/>
<path d="M2331 566h11" stroke="#ff0067"/>
<path d="M2341 566h11" stroke="#ff0064"/>
<path d="M2351 566h11" stroke="#ff0061"/>
<path d="M2361 566h11" stroke="#ff005f"/>
<path d="M2371 566h11" stroke="#ff005c"/>
<path d="M2381 566h11" stroke="#ff005a"/>
<path d="M2391 566h11" stroke="#ff0058"/>
<path d="M2401 566h11" stroke="#ff0056"/>
<path d="M2411 566h11" stroke="#ff0054"/>
<path d="M2421 566h11" stroke="#ff0052"/>
<path d="M1731 576h11" stroke="#007aff"/>
<path d="M1741 576h11" stroke="#0077ff"/>
<path d="M1751 576h11" stroke="#0074ff"/>
<path d="M1761 576h11" stroke="#0072ff"/>
<path d="M1771 576h11" stroke="#006fff"/>
<path d="M1781 576h11" stroke="#006cff"/>
<path d="M1791 576h11" stroke="#0069ff"/>
<path d="M1801 576h11" stroke="#0067ff"/>
<path d="M1811 576h11" stroke="#0064ff"/>
<path d="M1821 576h11" stroke="#0061ff"/>
<path d="M1831 576h11" stroke="#005eff"/>
<path d="M1841 576h11" stroke="#005bff"/>
<path d="M1851 576h11" stroke="#0059ff"/>
<path d="M1861 576h11" stroke="#0056ff"/>
<path d="M1871 576h11" stroke="#0053ff"/>
<path d="M1881 576h11" stroke="#0050ff"/>
<path d="M1891 576h11" stroke="#004dff"/>
<path d="M1901 576h11" stroke="#094aff"/>
<path d="M1911 576h11" stroke="#1547ff"/>
<path d="M1921 576h11" stroke="#2044ff"/>
<path d="M1931 576h11" stroke="#2c41ff"/>
<path d="M1941 576h11" stroke="#383eff"/>
<path d="M1951 576h11" stroke="#443bff"/>
<path d="M1961 576h11" stroke="#4f37ff"/>
<path d="M1971 576h11" stroke="#5c34ff"/>
<path d="M1981 576h11" stroke="#6831ff"/>
<path d="M1991 576h11" stroke="#742eff"/>
<path d="M2001 576h11" stroke="#802bff"/>
<path d="M2011 576h11" stroke="#8d27ff"/>
<path d="M2021 576h11" stroke="#9924ff"/>
<path d="M2031 576h11" stroke="#a621ff"/>
<path d="M2041 576h11" stroke="#b21dff"/>
<path d="M2051 576h11" stroke="#bf1aff"/>
<path d="M2061 576h11" stroke="#cc17ff"/>
<path d="M2071 576h11" stroke="#d913ff"/>
<path d="M2081 576h11" stroke="#e610ff"/>
<path d="M2091 576h11" stroke="#f40cff"/>
<path d="M2101 576h11" stroke="#ff09fd"/>
<path d="M2111 576h11" stroke="#ff05f0"/>
<path d="M2121 576h11" stroke="#ff02e5"/>
<path d="M2131 576h11" stroke="#ff00da"/>
<path d="M2141 576h11" stroke="#ff00d1"/>
<path d="M2151 576h11" stroke="#ff00c8"/>
<path d="M2161 576h11" stroke="#ff00c0"/>
<path d="M2171 576h11" stroke="#ff00b8"/>
<path d="M2181 576h11" stroke="#ff00b1"/>
<path d="M2191 576h11" stroke="#ff00aa"/>
<path d="M2201 576h11" stroke="#ff00a4"/>
<path d="M2211 576h11" stroke="#ff009e"/>
<path d="M2221 576h11" stroke="#ff0098"/>
<path d="M2231 576h11" stroke="#ff0093"/>
<path d="M2241 576h11" stroke="#ff008e"/>
<path d="M2251 576h11" stroke="#ff008a"/>
<path d="M2261 576h11" stroke="#ff0085"/>
<path d="M2271 576h11" stroke="#ff0081"/>
<path d="M2281 576h11" stroke="#ff007d"/>
<path d="M2291 576h11" stroke="#ff007a"/>
<path d="M2301 576h11" stroke="#ff0076"/>
<path d="M2311 576h11" stroke="#ff0073"/>
<path d="M2321 576h11" stroke="#ff0070"/>
<path d="M2331 576h11" stroke="#ff006d"/>
<path d="M2341 576h11" stroke="#ff006a"/>
<path d="M2351 576h11" stroke="#ff0067"/>
<path d="M2361 576h11" stroke="#ff0064"/>
<path d="M2371 576h11" stroke="#ff0062"/>
<path d="M2381 576h11" stroke="#ff005f"/>
<path d="M2391 576h11" stroke="#ff005d"/>
<path d="M2401 576h11" stroke="#ff005b"/>
<path d="M2411 576h11" stroke="#ff0058"/>
<path d="M1741 586h11" stroke="#0070ff"/>
<path d="M1751 586h11" stroke="#006dff"/>
<path d="M1761 586h11" stroke="#006aff"/>
<path d="M1771 586h11" stroke="#0068ff"/>
<path d="M1781 586h11" stroke="#0065ff"/>
<path d="M1791 586h11" stroke="#0062ff"/>
<path d="M1801 586h11" stroke="#0060ff"/>
<path d="M1811 586h11" stroke="#005dff"/>
<path d="M1821 586h11" stroke="#005aff"/>
<path d="M1831 586h11" stroke="#0058ff"/>
<path d="M1841 586h11" stroke="#0055ff"/>
<path d="M1851 586h11" stroke="#0052ff"/>
<path d="M1861 586h11" stroke="#004fff"/>
<path d="M1871 586h11" stroke="#004cff"/>
<path d="M1881 586h11" stroke="#004aff"/>
<path d="M1891 586h11" stroke="#0047ff"/>
<path d="M1901 586h11" stroke="#0744ff"/>
<path d="M1911 586h11" stroke="#1241ff"/>
<path d="M1921 586h11" stroke="#1d3eff"/>
<path d="M1931 586h11" stroke="#283bff"/>
<path d="M1941 586h11" stroke="#3438ff"/>
<path d="M1951 586h11" stroke="#3f35ff"/>
<path d="M1961 586h11" stroke="#4a32ff"/>
<path d="M1971 586h11" stroke="#562fff"/>
<path d="M1981 586h11" stroke="#622cff"/>
<path d="M1991 586h11" stroke="#6d29ff"/>
<path d="M2001 586h11" stroke="#7926ff"/>
<path d="M2011 586h11" stroke="#8523ff"/>
<path d="M2021 586h11" stroke="#911fff"/>
<path d="M2031 586h11" stroke="#9d1cff"/>
<path d="M2041 586h11" stroke="#a919ff"/>
<path d="M2051 586h11" stroke="#b516ff"/>
<path d="M2061 586h11" stroke="#c212ff"/>
<path d="M2071 586h11" stroke="#ce0fff"/>
<path d="M2081 586h11" stroke="#db0cff"/>
<path d="M2091 586h11" stroke="#e709ff"/>
<path d="M2101 586h11" stroke="#f405ff"/>
<path d="M2111 586h11" stroke="#ff02fd"/>
<path d="M2121 586h11" stroke="#ff00f1"/>
<path d="M2131 586h11" stroke="#ff00e6"/>
<path d="M2141 586h11" stroke="#ff00dc"/>
<path d="M2151 586h11" stroke="#ff00d2"/>
<path d="M2161 586h11" stroke="#ff00ca"/>
<path d="M2171 586h11" stroke="#ff00c2"/>
<path d="M2181 586h11" stroke="#ff00ba"/>
<path d="M2191 586h11" stroke="#ff00b3"/>
<path d="M2201 586h11" stroke="#ff00ac"/>
<path d="M2211 586h11" stroke="#ff00a6"/>
<path d="M2221 586h11" stroke="#ff00a0"/>
<path d="M2231 586h11" stroke="#ff009b"/>
<path d="M2241 586h11" stroke="#ff0096"/>
<path d="M2251 586h11" stroke="#ff0091"/>
<path d="M2261 586h11" stroke="#ff008d"/>
<path d="M2271 586h11" stroke="#ff0088"/>
<path d="M2281 586h11" stroke="#ff0084"/>
<path d="M2291 586h11" stroke="#ff0080"/>
<path d="M2301 586h11" stroke="#ff007d"/>
<path d="M2311 586h11" stroke="#ff0079"/>
<path d="M2321 586h11" stroke="#ff0076"/>
<path d="M2331 586h11" stroke="#ff0072"/>
<path d="M2341 586h11" stroke="#ff006f"/>
<path d="M2351 586h11" stroke="#ff006c"/>
<path d="M2361 586h11" stroke="#ff006a"/>
<path d="M2371 586h11" stroke="#ff0067"/>
<path d="M2381 586h11" stroke="#ff0064"/>
<path d="M2391 586h11" stroke="#ff0062"/>
<path d="M2401 586h11" stroke="#ff0060"/>
<path d="M1741 596h11" stroke="#0069ff"/>
<path d="M1751 596h11" stroke="#0066ff"/>
<path d="M1761 596h11" stroke="#0064ff"/>
<path d="M1771 596h11" stroke="#0061ff"/>
<path d="M1781 596h11" stroke="#005fff"/>
<path d="M1791 596h11" stroke="#005cff"/>
<path d="M1801 596h11" stroke="#0059ff"/>
<path d="M1811 596h11" stroke="#0057ff"/>
<path d="M1821 596h11" stroke="#0054ff"/>
<path d="M1831 596h11" stroke="#0051ff"/>
<path d="M1841 596h11" stroke="#004fff"/>
<path d="M1851 596h11" stroke="#004cff"/>
<path d="M1861 596h11" stroke="#0049ff"/>
<path d="M1871 596h11" stroke="#0047ff"/>
<path d="M1881 596h11" stroke="#0044ff"/>
<path d="M1891 596h11" stroke="#0041ff"/>
<path d="M1901 596h11" stroke="#053eff"/>
<path d="M1911 596h11" stroke="#103bff"/>
<path d="M1921 596h11" stroke="#1a39ff"/>
<path d="M1931 596h11" stroke="#2536ff"/>
<path d="M1941 596h11" stroke="#3033ff"/>
<path d="M1951 596h11" stroke="#3b30ff"/>
<path d="M1961 596h11" stroke="#462dff"/>
<path d="M1971 596h11" stroke="#512aff"/>
<path d="M1981 596h11" stroke="#5c27ff"/>
<path d="M1991 596h11" stroke="#6724ff"/>
<path d="M2001 596h11" stroke="#7221ff"/>
<path d="M2011 596h11" stroke="#7e1eff"/>
<path d="M2021 596h11" stroke="#891bff"/>
<path d="M2031 596h11" stroke="#9518ff"/>
<path d="M2041 596h11" stroke="#a015ff"/>
<path d="M2051 596h11" stroke="#ac12ff"/>
<path d="M2061 596h11" stroke="#b80fff"/>
<path d="M2071 596h11" stroke="#c40bff"/>
<path d="M2081 596h11" stroke="#d008ff"/>
<path d="M2091 596h11" stroke="#dc05ff"/>
<path d="M2101 596h11" stroke="#e802ff"/>
<path d="M2111 596h11" stroke="#f400ff"/>
<path d="M2121 596h11" stroke="#ff00fd"/>
<path d="M2131 596h11" stroke="#ff00f2"/>
<path d="M2141 596h11" stroke="#ff00e7"/>
<path d="M2151 596h11" stroke="#ff00dd"/>
<path d="M2161 596h11" stroke="#ff00d4"/>
<path d="M2171 596h11" stroke="#ff00cb"/>
<path d="M2181 596h11" stroke="#ff00c3"/>
<path d="M2191 596h11" stroke="#ff00bc"/>
<path d="M2201 596h11" stroke="#ff00b5"/>
<path d="M2211 596h11" stroke="#ff00af"/>
<path d="M2221 596h11" stroke="#ff00a9"/>
<path d="M2231 596h11" stroke="#ff00a3"/>
<path d="M2241 596h11" stroke="#ff009e"/>
<path d="M2251 596h11" stroke="#ff0098"/>
<path d="M2261 596h11" stroke="#ff0094"/>
<path d="M2271 596h11" stroke="#ff008f"/>
<path d="M2281 596h11" stroke="#ff008b"/>
<path d="M2291 596h11" stroke="#ff0087"/>
<path d="M2301 596h11" stroke="#ff0083"/>
<path d="M2311 596h11" stroke="#ff007f"/>
<path d="M2321 596h11" stroke="#ff007c"/>
<path d="M2331 596h11" stroke="#ff0078"/>
<path d="M2341 596h11" stroke="#ff0075"/>
<path d="M2351 596h11" stroke="#ff0072"/>
<path d="M2361 596h11" stroke="#ff006f"/>
<path d="M2371 596h11" stroke="#ff006c"/>
<path d="M2381 596h11" stroke="#ff006a"/>
<path d="M2391 596h11" stroke="#ff0067"/>
<path d="M1751 606h11" stroke="#0060ff"/>
<path d="M1761 606h11" stroke="#005dff"/>
<path d="M1771 606h11" stroke="#005bff"/>
<path d="M1781 606h11" stroke="#0058ff"/>
<path d="M1791 606h11" stroke="#0056ff"/>
<path d="M1801 606h11" stroke="#0053ff"/>
<path d="M1811 606h11" stroke="#0051ff"/>
<path d="M1821 606h11" stroke="#004eff"/>
<path d="M1831 606h11" stroke="#004cff"/>
<path d="M1841 606h11" stroke="#0049ff"/>
<path d="M1851 606h11" stroke="#0046ff"/>
<path d="M1861 606h11" stroke="#0044ff"/>
<path d="M1871 606h11" stroke="#0041ff"/>
<path d="M1881 606h11" stroke="#003eff"/>
<path d="M1891 606h11" stroke="#003cff"/>
<path d="M1901 606h11" stroke="#0339ff"/>
<path d="M1911 606h11" stroke="#0e36ff"/>
<path d="M1921 606h11" stroke="#1834ff"/>
<path d="M1931 606h11" stroke="#2231ff"/>
<path d="M1941 606h11" stroke="#2d2eff"/>
<path d="M1951 606h11" stroke="#372bff"/>
<path d="M1961 606h11" stroke="#4128ff"/>
<path d="M1971 606h11" stroke="#4c26ff"/>
<path d="M1981 606h11" stroke="#5723ff"/>
<path d="M1991 606h11" stroke="#6220ff"/>
<path d="M2001 606h11" stroke="#6c1dff"/>
<path d="M2011 606h11" stroke="#771aff"/>
<path d="M2021 606h11" stroke="#8217ff"/>
<path d="M2031 606h11" stroke="#8d14ff"/>
<path d="M2041 606h11" stroke="#9811ff"/>
<path d="M2051 606h11" stroke="#a40eff"/>
<path d="M2061 606h11" stroke="#af0bff"/>
<path d="M2071 606h11" stroke="#ba08ff"/>
<path d="M2081 606h11" stroke="#c605ff"/>
<path d="M2091 606h11" stroke="#d102ff"/>
<path d="M2101 606h11" stroke="#dd00ff"/>
<path d="M2111 606h11" stroke="#e900ff"/>
<path d="M2121 606h11" stroke="#f500ff"/>
<path d="M2131 606h11" stroke="#ff00fe"/>
<path d="M2141 606h11" stroke="#ff00f2"/>
<path d="M2151 606h11" stroke="#ff00e8"/>
<path d="M2161 606h11" stroke="#ff00de"/>
<path d="M2171 606h11" stroke="#ff00d5"/>
<path d="M2181 606h11" stroke="#ff00cd"/>
<path d="M2191 606h11" stroke="#ff00c5"/>
<path d="M2201 606h11" stroke="#ff00be"/>
<path d="M2211 606h11" stroke="#ff00b7"/>
<path d="M2221 606h11" stroke="#ff00b1"/>
<path d="M2231 606h11" stroke="#ff00ab"/>
<path d="M2241 606h11" stroke="#ff00a5"/>
<path d="M2251 606h11" stroke="#ff00a0"/>
<path d="M2261 606h11" stroke="#ff009b"/>
<path d="M2271 606h11" stroke="#ff0096"/>
<path d="M2281 606h11" stroke="#ff0092"/>
<path d="M2291 606h11" stroke="#ff008d"/>
<path d="M2301 606h11" stroke="#ff0089"/>
<path d="M2311 606h11" stroke="#ff0085"/>
<path d="M2321 606h11" stroke="#ff0082"/>
<path d="M2331 606h11" stroke="#ff007e"/>
<path d="M2341 606h11" stroke="#ff007b"/>
<path d="M2351 606h11" stroke="#ff0078"/>
<path d="M2361 606h11" stroke="#ff0075"/>
<path d="M2371 606h11" stroke="#ff0072"/>
<path d="M2381 606h11" stroke="#ff006f"/>
<path d="M1751 616h11" stroke="#005aff"/>
<path d="M1761 616h11" stroke="#0058ff"/>
<path d="M1771 616h11" stroke="#0055ff"/>
<path d="M1781 616h11" stroke="#0053ff"/>
<path d="M1791 616h11" stroke="#0050ff"/>
<path d="M1801 616h11" stroke="#004eff"/>
<path d="M1811 616h11" stroke="#004bff"/>
<path d="M1821 616h11" stroke="#0049ff"/>
<path d="M1831 616h11" stroke="#0046ff"/>
<path d="M1841 616h11" stroke="#0044ff"/>
<path d="M1851 616h11" stroke="#0041ff"/>
<path d="M1861 616h11" stroke="#003fff"/>
<path d="M1871 616h11" stroke="#003cff"/>
<path d="M1881 616h11" stroke="#003aff"/>
<path d="M1891 616h11" stroke="#0037ff"/>
<path d="M1901 616h11" stroke="#0234ff"/>
<path d="M1911 616h11" stroke="#0c32ff"/>
<path d="M1921 616h11" stroke="#152fff"/>
<path d="M1931 616h11" stroke="#1f2cff"/>
<path d="M1941 616h11" stroke="#292aff"/>
<path d="M1951 616h11" stroke="#3327ff"/>
<path d="M1961 616h11" stroke="#3d24ff"/>
<path d="M1971 616h11" stroke="#4821ff"/>
<path d="M1981 616h11" stroke="#521fff"/>
<path d="M1991 616h11" stroke="#5c1cff"/>
<path d="M2001 616h11" stroke="#6719ff"/>
<path d="M2011 616h11" stroke="#7116ff"/>
<path d="M2021 616h11" stroke="#7c13ff"/>
<path d="M2031 616h11" stroke="#8610ff"/>
<path d="M2041 616h11" stroke="#910dff"/>
<path d="M2051 616h11" stroke="#9c0bff"/>
<path d="M2061 616h11" stroke="#a708ff"/>
<path d="M2071 616h11" stroke="#b205ff"/>
<path d="M2081 616h11" stroke="#bd02ff"/>
<path d="M2091 616h11" stroke="#c800ff"/>
<path d="M2101 616h11" stroke="#d300ff"/>
<path d="M2111 616h11" stroke="#de00ff"/>
<path d="M2121 616h11" stroke="#e900ff"/>
<path d="M2131 616h11" stroke="#f500ff"/>
<path d="M2141 616h11" stroke="#ff00fe"/>
<path d="M2151 616h11" stroke="#ff00f3"/>
<path d="M2161 616h11" stroke="#ff00e9"/>
<path d="M2171 616h11" stroke="#ff00df"/>
<path d="M2181 616h11" stroke="#ff00d6"/>
<path d="M2191 616h11" stroke="#ff00ce"/>
<path d="M2201 616h11" stroke="#ff00c7"/>
<path d="M2211 616h11" stroke="#ff00c0"/>
<path d="M2221 616h11" stroke="#ff00b9"/>
<path d="M2231 616h11" stroke="#ff00b3"/>
<path d="M2241 616h11" stroke="#ff00ad"/>
<path d="M2251 616h11" stroke="#ff00a7"/>
<path d="M2261 616h11" stroke="#ff00a2"/>
<path d="M2271 616h11" stroke="#ff009d"/>
<path d="M2281 616h11" stroke="#ff0098"/>
<path d="M2291 616h11" stroke="#ff0094"/>
<path d="M2301 616h11" stroke="#ff0090"/>
<path d="M2311 616h11" stroke="#ff008c"/>
<path d="M2321 616h11" stroke="#ff0088"/>
<path d="M2331 616h11" stroke="#ff0084"/>
<path d="M2341 616h11" stroke="#ff0081"/>
<path d="M2351 616h11" stroke="#ff007d"/>
<path d="M2361 616h11" stroke="#ff007a"/>
<path d="M2371 616h11" stroke="#ff0077"/>
<path d="M1761 626h11" stroke="#0052ff"/>
<path d="M1771 626h11" stroke="#0050ff"/>
<path d="M1781 626h11" stroke="#004dff"/>
<path d="M1791 626h11" stroke="#004bff"/>
<path d="M1801 626h11" stroke="#0049ff"/>
<path d="M1811 626h11" stroke="#0046ff"/>
<path d="M1821 626h11" stroke="#0044ff"/>
<path d="M1831 626h11" stroke="#0041ff"/>
<path d="M1841 626h11" stroke="#003fff"/>
<path d="M1851 626h11" stroke="#003cff"/>
<path d="M1861 626h11" stroke="#003aff"/>
<path d="M1871 626h11" stroke="#0037ff"/>
<path d="M1881 626h11" stroke="#0035ff"/>
<path d="M1891 626h11" stroke="#0032ff"/>
<path d="M1901 626h11" stroke="#0030ff"/>
<path d="M1911 626h11" stroke="#0a2dff"/>
<path d="M1921 626h11" stroke="#132bff"/>
<path d="M1931 626h11" stroke="#1d28ff"/>
<path d="M1941 626h11" stroke="#2625ff"/>
<path d="M1951 626h11" stroke="#3023ff"/>
<path d="M1961 626h11" stroke="#3a20ff"/>
<path d="M1971 626h11" stroke="#441dff"/>
<path d="M1981 626h11" stroke="#4d1bff"/>
<path d="M1991 626h11" stroke="#5718ff"/>
<path d="M2001 626h11" stroke="#6115ff"/>
<path d="M2011 626h11" stroke="#6c13ff"/>
<path d="M2021 626h11" stroke="#7610ff"/>
<path d="M2031 626h11" stroke="#800dff"/>
<path d="M2041 626h11" stroke="#8a0aff"/>
<path d="M2051 626h11" stroke="#9507ff"/>
<path d="M2061 626h11" stroke="#9f05ff"/>
<path d="M2071 626h11" stroke="#aa02ff"/>
<path d="M2081 626h11" stroke="#b400ff"/>
<path d="M2091 626h11" stroke="#bf00ff"/>
<path d="M2101 626h11" stroke="#ca00ff"/>
<path d="M2111 626h11" stroke="#d400ff"/>
<path d="M2121 626h11" stroke="#df00ff"/>
<path d="M2131 626h11" stroke="#ea00ff"/>
<path d="M2141 626h11" stroke="#f500ff"/>
<path d="M2151 626h11" stroke="#ff00fe"/>
<path d="M2161 626h11" stroke="#ff00f3"/>
<path d="M2171 626h11" stroke="#ff00e9"/>
<path d="M2181 626h11" stroke="#ff00e0"/>
<path d="M2191 626h11" stroke="#ff00d8"/>
<path d="M2201 626h11" stroke="#ff00d0"/>
<path d="M2211 626h11" stroke="#ff00c8"/>
<path d="M2221 626h11" stroke="#ff00c1"/>
<path d="M2231 626h11" stroke="#ff00bb"/>
<path d="M2241 626h11" stroke="#ff00b5"/>
<path d="M2251 626h11" stroke="#ff00af"/>
<path d="M2261 626h11" stroke="#ff00a9"/>
<path d="M2271 626h11" stroke="#ff00a4"/>
<path d="M2281 626h11" stroke="#ff009f"/>
<path d="M2291 626h11" stroke="#ff009b"/>
<path d="M2301 626h11" stroke="#ff0096"/>
<path d="M2311 626h11" stroke="#ff0092"/>
<path d="M2321 626h11" stroke="#ff008e"/>
<path d="M2331 626h11" stroke="#ff008a"/>
<path d="M2341 626h11" stroke="#ff0087"/>
<path d="M2351 626h11" stroke="#ff0083"/>
<path d="M2361 626h11" stroke="#ff0080"/>
<path d="M1771 636h11" stroke="#004bff"/>
<path d="M1781 636h11" stroke="#0048ff"/>
<path d="M1791 636h11" stroke="#0046ff"/>
<path d="M1801 636h11" stroke="#0044ff"/>
<path d="M1811 636h11" stroke="#0041ff"/>
<path d="M1821 636h11" stroke="#003fff"/>
<path d="M1831 636h11" stroke="#003dff"/>
<path d="M1841 636h11" stroke="#003aff"/>
<path d="M1851 636h11" stroke="#0038ff"/>
<path d="M1861 636h11" stroke="#0036ff"/>
<path d="M1871 636h11" stroke="#0033ff"/>
<path d="M1881 636h11" stroke="#0031ff"/>
<path d="M1891 636h11" stroke="#002eff"/>
<path d="M1901 636h11" stroke="#002cff"/>
<path d="M1911 636h11" stroke="#0829ff"/>
<path d="M1921 636h11" stroke="#1127ff"/>
<path d="M1931 636h11" stroke="#1a24ff"/>
<path d="M1941 636h11" stroke="#2422ff"/>
<path d="M1951 636h11" stroke="#2d1fff"/>
<path d="M1961 636h11" stroke="#361cff"/>
<path d="M1971 636h11" stroke="#401aff"/>
<path d="M1981 636h11" stroke="#4917ff"/>
<path d="M1991 636h11" stroke="#5315ff"/>
<path d="M2001 636h11" stroke="#5d12ff"/>
<path d="M2011 636h11" stroke="#660fff"/>
<path d="M2021 636h11" stroke="#700dff"/>
<path d="M2031 636h11" stroke="#7a0aff"/>
<path d="M2041 636h11" stroke="#8407ff"/>
<path d="M2051 636h11" stroke="#8e04ff"/>
<path d="M2061 636h11" stroke="#9802ff"/>
<path d="M2071 636h11" stroke="#a200ff"/>
<path d="M2081 636h11" stroke="#ac00ff"/>
<path d="M2091 636h11" stroke="#b600ff"/>
<path d="M2101 636h11" stroke="#c100ff"/>
<path d="M2111 636h11" stroke="#cb00ff"/>
<path d="M2121 636h11" stroke="#d600ff"/>
<path d="M2131 636h11" stroke="#e000ff"/>
<path d="M2141 636h11" stroke="#eb00ff"/>
<path d="M2151 636h11" stroke="#f500ff"/>
<path d="M2161 636h11" stroke="#ff00fe"/>
<path d="M2171 636h11" stroke="#ff00f4"/>
<path d="M2181 636h11" stroke="#ff00ea"/>
<path d="M2191 636h11" stroke="#ff00e1"/>
<path d="M2201 636h11" stroke="#ff00d9"/>
<path d="M2211 636h11" stroke="#ff00d1"/>
<path d="M2221 636h11" stroke="#ff00ca"/>
<path d="M2231 636h11" stroke="#ff00c3"/>
<path d="M2241 636h11" stroke="#ff00bd"/>
<path d="M2251 636h11" stroke="#ff00b7"/>
<path d="M2261 636h11" stroke="#ff00b1"/>
<path d="M2271 636h11" stroke="#ff00ab"/>
<path d="M2281 636h11" stroke="#ff00a6"/>
<path d="M2291 636h11" stroke="#ff00a1"/>
<path d="M2301 636h11" stroke="#ff009d"/>
<path d="M2311 636h11" stroke="#ff0098"/>
<path d="M2321 636h11" stroke="#ff0094"/>
<path d="M2331 636h11" stroke="#ff0090"/>
<path d="M2341 636h11" stroke="#ff008d"/>
<path d="M2351 636h11" stroke="#ff0089"/>
<path d="M1771 646h11" stroke="#0046ff"/>
<path d="M1781 646h11" stroke="#0044ff"/>
<path d="M1791 646h11" stroke="#0042ff"/>
<path d="M1801 646h11" stroke="#003fff"/>
<path d="M1811 646h11" stroke="#003dff"/>
<path d="M1821 646h11" stroke="#003bff"/>
<path d="M1831 646h11" stroke="#0038ff"/>
<path d="M1841 646h11" stroke="#0036ff"/>
<path d="M1851 646h11" stroke="#0034ff"/>
<path d="M1861 646h11" stroke="#0031ff"/>
<path d="M1871 646h11" stroke="#002fff"/>
<path d="M1881 646h11" stroke="#002dff"/>
<path d="M1891 646h11" stroke="#002aff"/>
<path d="M1901 646h11" stroke="#0028ff"/>
<path d="M1911 646h11" stroke="#0625ff"/>
<path d="M1921 646h11" stroke="#0f23ff"/>
<path d="M1931 646h11" stroke="#1820ff"/>
<path d="M1941 646h11" stroke="#211eff"/>
<path d="M1951 646h11" stroke="#2a1bff"/>
<path d="M1961 646h11" stroke="#3319ff"/>
<path d="M1971 646h11" stroke="#3c16ff"/>
<path d="M1981 646h11" stroke="#4514ff"/>
<path d="M1991 646h11" stroke="#4f11ff"/>
<path d="M2001 646h11" stroke="#580fff"/>
<path d="M2011 646h11" stroke="#610cff"/>
<path d="M2021 646h11" stroke="#6b0aff"/>
<path d="M2031 646h11" stroke="#7407ff"/>
<path d="M2041 646h11" stroke="#7e04ff"/>
<path d="M2051 646h11" stroke="#8802ff"/>
<path d="M2061 646h11" stroke="#9100ff"/>
<path d="M2071 646h11" stroke="#9b00ff"/>
<path d="M2081 646h11" stroke="#a500ff"/>
<path d="M2091 646h11" stroke="#af00ff"/>
<path d="M2101 646h11" stroke="#b900ff"/>
<path d="M2111 646h11" stroke="#c300ff"/>
<path d="M2121 646h11" stroke="#cd00ff"/>
<path d="M2131 646h11" stroke="#d700ff"/>
<path d="M2141 646h11" stroke="#e100ff"/>
<path d="M2151 646h11" stroke="#eb00ff"/>
<path d="M2161 646h11" stroke="#f600ff"/>
<path d="M2171 646h11" stroke="#ff00fe"/>
<path d="M2181 646h11" stroke="#ff00f4"/>
<path d="M2191 646h11" stroke="#ff00eb"/>
<path d="M2201 646h11" stroke="#ff00e2"/>
<path d="M2211 646h11" stroke="#ff00da"/>
<path d="M2221 646h11" stroke="#ff00d2"/>
<path d="M2231 646h11" stroke="#ff00cb"/>
<path d="M2241 646h11" stroke="#ff00c5"/>
<path d="M2251 646h11" stroke="#ff00be"/>
<path d="M2261 646h11" stroke="#ff00b8"/>
<path d="M2271 646h11" stroke="#ff00b3"/>
<path d="M2281 646h11" stroke="#ff00ad"/>
<path d="M2291 646h11" stroke="#ff00a8"/>
<path d="M2301 646h11" stroke="#ff00a3"/>
<path d="M2311 646h11" stroke="#ff009f"/>
<path d="M2321 646h11" stroke="#ff009b"/>
<path d="M2331 646h11" stroke="#ff0096"/>
<path d="M2341 646h11" stroke="#ff0092"/>
<path d="M1781 656h11" stroke="#003fff"/>
<path d="M1791 656h11" stroke="#003dff"/>
<path d="M1801 656h11" stroke="#003bff"/>
<path d="M1811 656h11" stroke="#0039ff"/>
<path d="M1821 656h11" stroke="#0037ff"/>
<path d="M1831 656h11" stroke="#0034ff"/>
<path d="M1841 656h11" stroke="#0032ff"/>
<path d="M1851 656h11" stroke="#0030ff"/>
<path d="M1861 656h11" stroke="#002dff"/>
<path d="M1871 656h11" stroke="#002bff"/>
<path d="M1881 656h11" stroke="#0029ff"/>
<path d="M1891 656h11" stroke="#0026ff"/>
<path d="M1901 656h11" stroke="#0024ff"/>
<path d="M1911 656h11" stroke="#0522ff"/>
<path d="M1921 656h11" stroke="#0d1fff"/>
<path d="M1931 656h11" stroke="#161dff"/>
<path d="M1941 656h11" stroke="#1e1bff"/>
<path d="M1951 656h11" stroke="#2718ff"/>
<path d="M1961 656h11" stroke="#3016ff"/>
<path d="M1971 656h11" stroke="#3913ff"/>
<path d="M1981 656h11" stroke="#4211ff"/>
<path d="M1991 656h11" stroke="#4b0eff"/>
<path d="M2001 656h11" stroke="#540cff"/>
<path d="M2011 656h11" stroke="#5d09ff"/>
<path d="M2021 656h11" stroke="#6607ff"/>
<path d="M2031 656h11" stroke="#6f04ff"/>
<path d="M2041 656h11" stroke="#7802ff"/>
<path d="M2051 656h11" stroke="#8200ff"/>
<path d="M2061 656h11" stroke="#8b00ff"/>
<path d="M2071 656h11" stroke="#9500ff"/>
<path d="M2081 656h11" stroke="#9e00ff"/>
<path d="M2091 656h11" stroke="#a800ff"/>
<path d="M2101 656h11" stroke="#b100ff"/>
<path d="M2111 656h11" stroke="#bb00ff"/>
<path d="M2121 656h11" stroke="#c400ff"/>
<path d="M2131 656h11" stroke="#ce00ff"/>
<path d="M2141 656h11" stroke="#d800ff"/>
<path d="M2151 656h11" stroke="#e200ff"/>
<path d="M2161 656h11" stroke="#ec00ff"/>
<path d="M2171 656h11" stroke="#f600ff"/>
<path d="M2181 656h11" stroke="#ff00fe"/>
<path d="M2191 656h11" stroke="#ff00f4"/>
<path d="M2201 656h11" stroke="#ff00eb"/>
<path d="M2211 656h11" stroke="#ff00e3"/>
<path d="M2221 656h11" stroke="#ff00db"/>
<path d="M2231 656h11" stroke="#ff00d4"/>
<path d="M2241 656h11" stroke="#ff00cd"/>
<path d="M2251 656h11" stroke="#ff00c6"/>
<path d="M2261 656h11" stroke="#ff00c0"/>
<path d="M2271 656h11" stroke="#ff00ba"/>
<path d="M2281 656h11" stroke="#ff00b4"/>
<path d="M2291 656h11" stroke="#ff00af"/>
<path d="M2301 656h11" stroke="#ff00aa"/>
<path d="M2311 656h11" stroke="#ff00a5"/>
<path d="M2321 656h11" stroke="#ff00a1"/>
<path d="M2331 656h11" stroke="#ff009d"/>
<path d="M1781 666h11" stroke="#003bff"/>
<path d="M1791 666h11" stroke="#0039ff"/>
<path d="M1801 666h11" stroke="#0037ff"/>
<path d="M1811 666h11" stroke="#0035ff"/>
<path d="M1821 666h11" stroke="#0033ff"/>
<path d="M1831 666h11" stroke="#0030ff"/>
<path d="M1841 666h11" stroke="#002eff"/>
<path d="M1851 666h11" stroke="#002cff"/>
<path d="M1861 666h11" stroke="#002aff"/>
<path d="M1871 666h11" stroke="#0028ff"/>
<path d="M1881 666h11" stroke="#0025ff"/>
<path d="M1891 666h11" stroke="#0023ff"/>
<path d="M1901 666h11" stroke="#0021ff"/>
<path d="M1911 666h11" stroke="#031eff"/>
<path d="M1921 666h11" stroke="#0b1cff"/>
<path d="M1931 666h11" stroke="#141aff"/>
<path d="M1941 666h11" stroke="#1c17ff"/>
<path d="M1951 666h11" stroke="#2515ff"/>
<path d="M1961 666h11" stroke="#2d13ff"/>
<path d="M1971 666h11" stroke="#3610ff"/>
<path d="M1981 666h11" stroke="#3e0eff"/>
<path d="M1991 666h11" stroke="#470bff"/>
<path d="M2001 666h11" stroke="#5009ff"/>
<path d="M2011 666h11" stroke="#5907ff"/>
<path d="M2021 666h11" stroke="#6104ff"/>
<path d="M2031 666h11" stroke="#6a02ff"/>
<path d="M2041 666h11" stroke="#7300ff"/>
<path d="M2051 666h11" stroke="#7c00ff"/>
<path d="M2061 666h11" stroke="#8500ff"/>
<path d="M2071 666h11" stroke="#8e00ff"/>
<path d="M2081 666h11" stroke="#9800ff"/>
<path d="M2091 666h11" stroke="#a100ff"/>
<path d="M2101 666h11" stroke="#aa00ff"/>
<path d="M2111 666h11" stroke="#b300ff"/>
<path d="M2121 666h11" stroke="#bd00ff"/>
<path d="M2131 666h11" stroke="#c600ff"/>
<path d="M2141 666h11" stroke="#d000ff"/>
<path d="M2151 666h11" stroke="#d900ff"/>
<path d="M2161 666h11" stroke="#e300ff"/>
<path d="M2171 666h11" stroke="#ec00ff"/>
<path d="M2181 666h11" stroke="#f600ff"/>
<path d="M2191 666h11" stroke="#ff00fe"/>
<path d="M2201 666h11" stroke="#ff00f5"/>
<path d="M2211 666h11" stroke="#ff00ec"/>
<path d="M2221 666h11" stroke="#ff00e4"/>
<path d="M2231 666h11" stroke="#ff00dc"/>
<path d="M2241 666h11" stroke="#ff00d5"/>
<path d="M2251 666h11" stroke="#ff00ce"/>
<path d="M2261 666h11" stroke="#ff00c7"/>
<path d="M2271 666h11" stroke="#ff00c1"/>
<path d="M2281 666h11" stroke="#ff00bc"/>
<path d="M2291 666h11" stroke="#ff00b6"/>
<path d="M2301 666h11" stroke="#ff00b1"/>
<path d="M2311 666h11" stroke="#ff00ac"/>
<path d="M2321 666h11" stroke="#ff00a7"/>
<path d="M1791 676h11" stroke="#0035ff"/>
<path d="M1801 676h11" stroke="#0033ff"/>
<path d="M1811 676h11" stroke="#0031ff"/>
<path d="M1821 676h11" stroke="#002fff"/>
<path d="M1831 676h11" stroke="#002dff"/>
<path d="M1841 676h11" stroke="#002bff"/>
<path d="M1851 676h11" stroke="#0028ff"/>
<path d="M1861 676h11" stroke="#0026ff"/>
<path d="M1871 676h11" stroke="#0024ff"/>
<path d="M1881 676h11" stroke="#0022ff"/>
<path d="M1891 676h11" stroke="#0020ff"/>
<path d="M1901 676h11" stroke="#001dff"/>
<path d="M1911 676h11" stroke="#021bff"/>
<path d="M1921 676h11" stroke="#0a19ff"/>
<path d="M1931 676h11" stroke="#1217ff"/>
<path d="M1941 676h11" stroke="#1a14ff"/>
<path d="M1951 676h11" stroke="#2212ff"/>
<path d="M1961 676h11" stroke="#2b10ff"/>
<path d="M1971 676h11" stroke="#330dff"/>
<path d="M1981 676h11" stroke="#3b0bff"/>
<path d="M1991 676h11" stroke="#4409ff"/>
<path d="M2001 676h11" stroke="#4c06ff"/>
<path d="M2011 676h11" stroke="#5504ff"/>
<path d="M2021 676h11" stroke="#5d02ff"/>
<path d="M2031 676h11" stroke="#6600ff"/>
<path d="M2041 676h11" stroke="#6e00ff"/>
<path d="M2051 676h11" stroke="#7700ff"/>
<path d="M2061 676h11" stroke="#8000ff"/>
<path d="M2071 676h11" stroke="#8900ff"/>
<path d="M2081 676h11" stroke="#9100ff"/>
<path d="M2091 676h11" stroke="#9a00ff"/>
<path d="M2101 676h11" stroke="#a300ff"/>
<path d="M2111 676h11" stroke="#ac00ff"/>
<path d="M2121 676h11" stroke="#b500ff"/>
<path d="M2131 676h11" stroke="#bf00ff"/>
<path d="M2141 676h11" stroke="#c800ff"/>
<path d="M2151 676h11" stroke="#d100ff"/>
<path d="M2161 676h11" stroke="#da00ff"/>
<path d="M2171 676h11" stroke="#e400ff"/>
<path d="M2181 676h11" stroke="#ed00ff"/>
<path d="M2191 676h11" stroke="#f600ff"/>
<path d="M2201 676h11" stroke="#ff00fe"/>
<path d="M2211 676h11" stroke="#ff00f5"/>
<path d="M2221 676h11" stroke="#ff00ec"/>
<path d="M2231 676h11" stroke="#ff00e4"/>
<path d="M2241 676h11" stroke="#ff00dd"/>
<path d="M2251 676h11" stroke="#ff00d6"/>
<path d="M2261 676h11" stroke="#ff00cf"/>
<path d="M2271 676h11" stroke="#ff00c9"/>
<path d="M2281 676h11" stroke="#ff00c3"/>
<path d="M2291 676h11" stroke="#ff00bd"/>
<path d="M2301 676h11" stroke="#ff00b8"/>
<path d="M2311 676h11" stroke="#ff00b3"/>
<path d="M1801 686h11" stroke="#0030ff"/>
<path d="M1811 686h11" stroke="#002eff"/>
<path d="M1821 686h11" stroke="#002bff"/>
<path d="M1831 686h11" stroke="#0029ff"/>
<path d="M1841 686h11" stroke="#0027ff"/>
<path d="M1851 686h11" stroke="#0025ff"/>
<path d="M1861 686h11" stroke="#0023ff"/>
<path d="M1871 686h11" stroke="#0021ff"/>
<path d="M1881 686h11" stroke="#001fff"/>
<path d="M1891 686h11" stroke="#001dff"/>
<path d="M1901 686h11" stroke="#001aff"/>
<path d="M1911 686h11" stroke="#0018ff"/>
<path d="M1921 686h11" stroke="#0816ff"/>
<path d="M1931 686h11" stroke="#1014ff"/>
<path d="M1941 686h11" stroke="#1812ff"/>
<path d="M1951 686h11" stroke="#200fff"/>
<path d="M1961 686h11" stroke="#280dff"/>
<path d="M1971 686h11" stroke="#300bff"/>
<path d="M1981 686h11" stroke="#3809ff"/>
<path d="M1991 686h11" stroke="#4006ff"/>
<path d="M2001 686h11" stroke="#4904ff"/>
<path d="M2011 686h11" stroke="#5102ff"/>
<path d="M2021 686h11" stroke="#5900ff"/>
<path d="M2031 686h11" stroke="#6100ff"/>
<path d="M2041 686h11" stroke="#6a00ff"/>
<path d="M2051 686h11" stroke="#7200ff"/>
<path d="M2061 686h11" stroke="#7b00ff"/>
<path d="M2071 686h11" stroke="#8300ff"/>
<path d="M2081 686h11" stroke="#8c00ff"/>
<path d="M2091 686h11" stroke="#9400ff"/>
<path d="M2101 686h11" stroke="#9d00ff"/>
<path d="M2111 686h11" stroke="#a600ff"/>
<path d="M2121 686h11" stroke="#af00ff"/>
<path d="M2131 686h11" stroke="#b700ff"/>
<path d="M2141 686h11" stroke="#c000ff"/>
<path d="M2151 686h11" stroke="#c900ff"/>
<path d="M2161 686h11" stroke="#d200ff"/>
<path d="M2171 686h11" stroke="#db00ff"/>
<path d="M2181 686h11" stroke="#e400ff"/>
<path d="M2191 686h11" stroke="#ed00ff"/>
<path d="M2201 686h11" stroke="#f700ff"/>
<path d="M2211 686h11" stroke="#ff00fe"/>
<path d="M2221 686h11" stroke="#ff00f5"/>
<path d="M2231 686h11" stroke="#ff00ed"/>
<path d="M2241 686h11" stroke="#ff00e5"/>
<path d="M2251 686h11" stroke="#ff00de"/>
<path d="M2261 686h11" stroke="#ff00d7"/>
<path d="M2271 686h11" stroke="#ff00d0"/>
<path d="M2281 686h11" stroke="#ff00ca"/>
<path d="M2291 686h11" stroke="#ff00c4"/>
<path d="M2301 686h11" stroke="#ff00be"/>
<path d="M2311 686h11" stroke="#ff00b9"/>
<path d="M1801 696h11" stroke="#002cff"/>
<path d="M1811 696h11" stroke="#002aff"/>
<path d="M1821 696h11" stroke="#0028ff"/>
<path d="M1831 696h11" stroke="#0026ff"/>
<path d="M1841 696h11" stroke="#0024ff"/>
<path d="M1851 696h11" stroke="#0022ff"/>
<path d="M1861 696h11" stroke="#0020ff"/>
<path d="M1871 696h11" stroke="#001eff"/>
<path d="M1881 696h11" stroke="#001cff"/>
<path d="M1891 696h11" stroke="#001aff"/>
<path d="M1901 696h11" stroke="#0018ff"/>
<path d="M1911 696h11" stroke="#0015ff"/>
<path d="M1921 696h11" stroke="#0713ff"/>
<path d="M1931 696h11" stroke="#0e11ff"/>
<path d="M1941 696h11" stroke="#160fff"/>
<path d="M1951 696h11" stroke="#1e0dff"/>
<path d="M1961 696h11" stroke="#260bff"/>
<path d="M1971 696h11" stroke="#2d08ff"/>
<path d="M1981 696h11" stroke="#3506ff"/>
<path d="M1991 696h11" stroke="#3d04ff"/>
<path d="M2001 696h11" stroke="#4502ff"/>
<path d="M2011 696h11" stroke="#4d00ff"/>
<path d="M2021 696h11" stroke="#5500ff"/>
<path d="M2031 696h11" stroke="#5d00ff"/>
<path d="M2041 696h11" stroke="#6500ff"/>
<path d="M2051 696h11" stroke="#6e00ff"/>
<path d="M2061 696h11" stroke="#7600ff"/>
<path d="M2071 696h11" stroke="#7e00ff"/>
<path d="M2081 696h11" stroke="#8600ff"/>
<path d="M2091 696h11" stroke="#8f00ff"/>
<path d="M2101 696h11" stroke="#9700ff"/>
<path d="M2111 696h11" stroke="#a000ff"/>
<path d="M2121 696h11" stroke="#a800ff"/>
<path d="M2131 696h11" stroke="#b100ff"/>
<path d="M2141 696h11" stroke="#b900ff"/>
<path d="M2151 696h11" stroke="#c200ff"/>
<path d="M2161 696h11" stroke="#cb00ff"/>
<path d="M2171 696h11" stroke="#d300ff"/>
<path d="M2181 696h11" stroke="#dc00ff"/>
<path d="M2191 696h11" stroke="#e500ff"/>
<path d="M2201 696h11" stroke="#ee00ff"/>
<path d="M2211 696h11" stroke="#f700ff"/>
<path d="M2221 696h11" stroke="#ff00fe"/>
<path d="M2231 696h11" stroke="#ff00f6"/>
<path d="M2241 696h11" stroke="#ff00ed"/>
<path d="M2251 696h11" stroke="#ff00e6"/>
<path d="M2261 696h11" stroke="#ff00df"/>
<path d="M2271 696h11" stroke="#ff00d8"/>
<path d="M2281 696h11" stroke="#ff00d1"/>
<path d="M2291 696h11" stroke="#ff00cb"/>
<path d="M2301 696h11" stroke="#ff00c5"/>
<path d="M1811 706h11" stroke="#0027ff"/>
<path d="M1821 706h11" stroke="#0025ff"/>
<path d="M1831 706h11" stroke="#0023ff"/>
<path d="M1841 706h11" stroke="#0021ff"/>
<path d="M1851 706h11" stroke="#001fff"/>
<path d="M1861 706h11" stroke="#001dff"/>
<path d="M1871 706h11" stroke="#001bff"/>
<path d="M1881 706h11" stroke="#0019ff"/>
<path d="M1891 706h11" stroke="#0017ff"/>
<path d="M1901 706h11" stroke="#0015ff"/>
<path d="M1911 706h11" stroke="#0013ff"/>
<path d="M1921 706h11" stroke="#0511ff"/>
<path d="M1931 706h11" stroke="#0d0eff"/>
<path d="M1941 706h11" stroke="#140cff"/>
<path d="M1951 706h11" stroke="#1c0aff"/>
<path d="M1961 706h11" stroke="#2308ff"/>
<path d="M1971 706h11" stroke="#2b06ff"/>
<path d="M1981 706h11" stroke="#3304ff"/>
<path d="M1991 706h11" stroke="#3a02ff"/>
<path d="M2001 706h11" stroke="#4200ff"/>
<path d="M2011 706h11" stroke="#4a00ff"/>
<path d="M2021 706h11" stroke="#5200ff"/>
<path d="M2031 706h11" stroke="#5a00ff"/>
<path d="M2041 706h11" stroke="#6100ff"/>
<path d="M2051 706h11" stroke="#6900ff"/>
<path d="M2061 706h11" stroke="#7100ff"/>
<path d="M2071 706h11" stroke="#7900ff"/>
<path d="M2081 706h11" stroke="#8100ff"/>
<path d="M2091 706h11" stroke="#8a00ff"/>
<path d="M2101 706h11" stroke="#9200ff"/>
<path d="M2111 706h11" stroke="#9a00ff"/>
<path d="M2121 706h11" stroke="#a200ff"/>
<path d="M2131 706h11" stroke="#aa00ff"/>
<path d="M2141 706h11" stroke="#b300ff"/>
<path d="M2151 706h11" stroke="#bb00ff"/>
<path d="M2161 706h11" stroke="#c300ff"/>
<path d="M2171 706h11" stroke="#cc00ff"/>
<path d="M2181 706h11" stroke="#d400ff"/>
<path d="M2191 706h11" stroke="#dd00ff"/>
<path d="M2201 706h11" stroke="#e600ff"/>
<path d="M2211 706h11" stroke="#ee00ff"/>
<path d="M2221 706h11" stroke="#f700ff"/>
<path d="M2231 706h11" stroke="#ff00fe"/>
<path d="M2241 706h11" stroke="#ff00f6"/>
<path d="M2251 706h11" stroke="#ff00ee"/>
<path d="M2261 706h11" stroke="#ff00e6"/>
<path d="M2271 706h11" stroke="#ff00df"/>
<path d="M2281 706h11" stroke="#ff00d9"/>
<path d="M2291 706h11" stroke="#ff00d2"/>
<path d="M1811 716h11" stroke="#0024ff"/>
<path d="M1821 716h11" stroke="#0022ff"/>
<path d="M1831 716h11" stroke="#0020ff"/>
<path d="M1841 716h11" stroke="#001eff"/>
<path d="M1851 716h11" stroke="#001cff"/>
<path d="M1861 716h11" stroke="#001aff"/>
<path d="M1871 716h11" stroke="#0018ff"/>
<path d="M1881 716h11" stroke="#0016ff"/>
<path d="M1891 716h11" stroke="#0014ff"/>
<path d="M1901 716h11" stroke="#0012ff"/>
<path d="M1911 716h11" stroke="#0010ff"/>
<path d="M1921 716h11" stroke="#040eff"/>
<path d="M1931 716h11" stroke="#0b0cff"/>
<path d="M1941 716h11" stroke="#130aff"/>
<path d="M1951 716h11" stroke="#1a08ff"/>
<path d="M1961 716h11" stroke="#2106ff"/>
<path d="M1971 716h11" stroke="#2904ff"/>
<path d="M1981 716h11" stroke="#3002ff"/>
<path d="M1991 716h11" stroke="#3800ff"/>
<path d="M2001 716h11" stroke="#3f00ff"/>
<path d="M2011 716h11" stroke="#4700ff"/>
<path d="M2021 716h11" stroke="#4e00ff"/>
<path d="M2031 716h11" stroke="#5600ff"/>
<path d="M2041 716h11" stroke="#5e00ff"/>
<path d="M2051 716h11" stroke="#6500ff"/>
<path d="M2061 716h11" stroke="#6d00ff"/>
<path d="M2071 716h11" stroke="#7500ff"/>
<path d="M2081 716h11" stroke="#7d00ff"/>
<path d="M2091 716h11" stroke="#8400ff"/>
<path d="M2101 716h11" stroke="#8c00ff"/>
<path d="M2111 716h11" stroke="#9400ff"/>
<path d="M2121 716h11" stroke="#9c00ff"/>
<path d="M2131 716h11" stroke="#a400ff"/>
<path d="M2141 716h11" stroke="#ac00ff"/>
<path d="M2151 716h11" stroke="#b500ff"/>
<path d="M2161 716h11" stroke="#bd00ff"/>
<path d="M2171 716h11" stroke="#c500ff"/>
<path d="M2181 716h11" stroke="#cd00ff"/>
<path d="M2191 716h11" stroke="#d500ff"/>
<path d="M2201 716h11" stroke="#de00ff"/>
<path d="M2211 716h11" stroke="#e600ff"/>
<path d="M2221 716h11" stroke="#ef00ff"/>
<path d="M2231 716h11" stroke="#f700ff"/>
<path d="M2241 716h11" stroke="#ff00fe"/>
<path d="M2251 716h11" stroke="#ff00f6"/>
<path d="M2261 716h11" stroke="#ff00ee"/>
<path d="M2271 716h11" stroke="#ff00e7"/>
<path d="M2281 716h11" stroke="#ff00e0"/>
<path d="M1821 726h11" stroke="#001fff"/>
<path d="M1831 726h11" stroke="#001dff"/>
<path d="M1841 726h11" stroke="#001bff"/>
<path d="M1851 726h11" stroke="#001aff"/>
<path d="M1861 726h11" stroke="#0018ff"/>
<path d="M1871 726h11" stroke="#0016ff"/>
<path d="M1881 726h11" stroke="#0014ff"/>
<path d="M1891 726h11" stroke="#0012ff"/>
<path d="M1901 726h11" stroke="#0010ff"/>
<path d="M1911 726h11" stroke="#000eff"/>
<path d="M1921 726h11" stroke="#030cff"/>
<path d="M1931 726h11" stroke="#0a0aff"/>
<path d="M1941 726h11" stroke="#1108ff"/>
<path d="M1951 726h11" stroke="#1806ff"/>
<path d="M1961 726h11" stroke="#1f04ff"/>
<path d="M1971 726h11" stroke="#2602ff"/>
<path d="M1981 726h11" stroke="#2e00ff"/>
<path d="M1991 726h11" stroke="#3500ff"/>
<path d="M2001 726h11" stroke="#3c00ff"/>
<path d="M2011 726h11" stroke="#4400ff"/>
<path d="M2021 726h11" stroke="#4b00ff"/>
<path d="M2031 726h11" stroke="#5200ff"/>
<path d="M2041 726h11" stroke="#5a00ff"/>
<path d="M2051 726h11" stroke="#6100ff"/>
<path d="M2061 726h11" stroke="#6900ff"/>
<path d="M2071 726h11" stroke="#7000ff"/>
<path d="M2081 726h11" stroke="#7800ff"/>
<path d="M2091 726h11" stroke="#8000ff"/>
<path d="M2101 726h11" stroke="#8700ff"/>
<path d="M2111 726h11" stroke="#8f00ff"/>
<path d="M2121 726h11" stroke="#9700ff"/>
<path d="M2131 726h11" stroke="#9f00ff"/>
<path d="M2141 726h11" stroke="#a700ff"/>
<path d="M2151 726h11" stroke="#ae00ff"/>
<path d="M2161 726h11" stroke="#b600ff"/>
<path d="M2171 726h11" stroke="#be00ff"/>
<path d="M2181 726h11" stroke="#c600ff"/>
<path d="M2191 726h11" stroke="#ce00ff"/>
<path d="M2201 726h11" stroke="#d600ff"/>
<path d="M2211 726h11" stroke="#df00ff"/>
<path d="M2221 726h11" stroke="#e700ff"/>
<path d="M2231 726h11" stroke="#ef00ff"/>
<path d="M2241 726h11" stroke="#f700ff"/>
<path d="M2251 726h11" stroke="#ff00fe"/>
<path d="M2261 726h11" stroke="#ff00f6"/>
<path d="M2271 726h11" stroke="#ff00ef"/>
<path d="M1831 736h11" stroke="#001bff"/>
<path d="M1841 736h11" stroke="#0019ff"/>
<path d="M1851 736h11" stroke="#0017ff"/>
<path d="M1861 736h11" stroke="#0015ff"/>
<path d="M1871 736h11" stroke="#0013ff"/>
<path d="M1881 736h11" stroke="#0011ff"/>
<path d="M1891 736h11" stroke="#000fff"/>
<path d="M1901 736h11" stroke="#000dff"/>
<path d="M1911 736h11" stroke="#000bff"/>
<path d="M1921 736h11" stroke="#020aff"/>
<path d="M1931 736h11" stroke="#0808ff"/>
<path d="M1941 736h11" stroke="#0f06ff"/>
<path d="M1951 736h11" stroke="#1604ff"/>
<path d="M1961 736h11" stroke="#1d02ff"/>
<path d="M1971 736h11" stroke="#2400ff"/>
<path d="M1981 736h11" stroke="#2b00ff"/>
<path d="M1991 736h11" stroke="#3200ff"/>
<path d="M2001 736h11" stroke="#3a00ff"/>
<path d="M2011 736h11" stroke="#4100ff"/>
<path d="M2021 736h11" stroke="#4800ff"/>
<path d="M2031 736h11" stroke="#4f00ff"/>
<path d="M2041 736h11" stroke="#5600ff"/>
<path d="M2051 736h11" stroke="#5e00ff"/>
<path d="M2061 736h11" stroke="#6500ff"/>
<path d="M2071 736h11" stroke="#6c00ff"/>
<path d="M2081 736h11" stroke="#7400ff"/>
<path d="M2091 736h11" stroke="#7b00ff"/>
<path d="M2101 736h11" stroke="#8300ff"/>
<path d="M2111 736h11" stroke="#8a00ff"/>
<path d="M2121 736h11" stroke="#9200ff"/>
<path d="M2131 736h11" stroke="#9900ff"/>
<path d="M2141 736h11" stroke="#a100ff"/>
<path d="M2151 736h11" stroke="#a900ff"/>
<path d="M2161 736h11" stroke="#b000ff"/>
<path d="M2171 736h11" stroke="#b800ff"/>
<path d="M2181 736h11" stroke="#c000ff"/>
<path d="M2191 736h11" stroke="#c800ff"/>
<path d="M2201 736h11" stroke="#d000ff"/>
<path d="M2211 736h11" stroke="#d700ff"/>
<path d="M2221 736h11" stroke="#df00ff"/>
<path d="M2231 736h11" stroke="#e700ff"/>
<path d="M2241 736h11" stroke="#ef00ff"/>
<path d="M2251 736h11" stroke="#f700ff"/>
<path d="M2261 736h11" stroke="#ff00ff"/>
<path d="M1831 746h11" stroke="#0018ff"/>
<path d="M1841 746h11" stroke="#0016ff"/>
<path d="M1851 746h11" stroke="#0015ff"/>
<path d="M1861 746h11" stroke="#0013ff"/>
<path d="M1871 746h11" stroke="#0011ff"/>
<path d="M1881 746h11" stroke="#000fff"/>
<path d="M1891 746h11" stroke="#000dff"/>
<path d="M1901 746h11" stroke="#000bff"/>
<path d="M1911 746h11" stroke="#0009ff"/>
<path d="M1921 746h11" stroke="#0007ff"/>
<path d="M1931 746h11" stroke="#0705ff"/>
<path d="M1941 746h11" stroke="#0e04ff"/>
<path d="M1951 746h11" stroke="#1502ff"/>
<path d="M1961 746h11" stroke="#1c00ff"/>
<path d="M1971 746h11" stroke="#2200ff"/>
<path d="M1981 746h11" stroke="#2900ff"/>
<path d="M1991 746h11" stroke="#3000ff"/>
<path d="M2001 746h11" stroke="#3700ff"/>
<path d="M2011 746h11" stroke="#3e00ff"/>
<path d="M2021 746h11" stroke="#4500ff"/>
<path d="M2031 746h11" stroke="#4c00ff"/>
<path d="M2041 746h11" stroke="#5300ff"/>
<path d="M2051 746h11" stroke="#5a00ff"/>
<path d="M2061 746h11" stroke="#6100ff"/>
<path d="M2071 746h11" stroke="#6900ff"/>
<path d="M2081 746h11" stroke="#7000ff"/>
<path d="M2091 746h11" stroke="#7700ff"/>
<path d="M2101 746h11" stroke="#7e00ff"/>
<path d="M2111 746h11" stroke="#8600ff"/>
<path d="M2121 746h11" stroke="#8d00ff"/>
<path d="M2131 746h11" stroke="#9400ff"/>
<path d="M2141 746h11" stroke="#9c00ff"/>
<path d="M2151 746h11" stroke="#a300ff"/>
<path d="M2161 746h11" stroke="#ab00ff"/>
<path d="M2171 746h11" stroke="#b200ff"/>
<path d="M2181 746h11" stroke="#ba00ff"/>
<path d="M2191 746h11" stroke="#c100ff"/>
<path d="M2201 746h11" stroke="#c900ff"/>
<path d="M2211 746h11" stroke="#d100ff"/>
<path d="M2221 746h11" stroke="#d800ff"/>
<path d="M2231 746h11" stroke="#e000ff"/>
<path d="M2241 746h11" stroke="#e800ff"/>
<path d="M2251 746h11" stroke="#f000ff"/>
<path d="M1841 756h11" stroke="#0014ff"/>
<path d="M1851 756h11" stroke="#0012ff"/>
<path d="M1861 756h11" stroke="#0010ff"/>
<path d="M1871 756h11" stroke="#000fff"/>
<path d="M1881 756h11" stroke="#000dff"/>
<path d="M1891 756h11" stroke="#000bff"/>
<path d="M1901 756h11" stroke="#0009ff"/>
<path d="M1911 756h11" stroke="#0007ff"/>
<path d="M1921 756h11" stroke="#0005ff"/>
<path d="M1931 756h11" stroke="#0603ff"/>
<path d="M1941 756h11" stroke="#0d02ff"/>
<path d="M1951 756h11" stroke="#1300ff"/>
<path d="M1961 756h11" stroke="#1a00ff"/>
<path d="M1971 756h11" stroke="#2000ff"/>
<path d="M1981 756h11" stroke="#2700ff"/>
<path d="M1991 756h11" stroke="#2e00ff"/>
<path d="M2001 756h11" stroke="#3500ff"/>
<path d="M2011 756h11" stroke="#3b00ff"/>
<path d="M2021 756h11" stroke="#4200ff"/>
<path d="M2031 756h11" stroke="#4900ff"/>
<path d="M2041 756h11" stroke="#5000ff"/>
<path d="M2051 756h11" stroke="#5700ff"/>
<path d="M2061 756h11" stroke="#5e00ff"/>
<path d="M2071 756h11" stroke="#6500ff"/>
<path d="M2081 756h11" stroke="#6c00ff"/>
<path d="M2091 756h11" stroke="#7300ff"/>
<path d="M2101 756h11" stroke="#7a00ff"/>
<path d="M2111 756h11" stroke="#8100ff"/>
<path d="M2121 756h11" stroke="#8800ff"/>
<path d="M2131 756h11" stroke="#8f00ff"/>
<path d="M2141 756h11" stroke="#9700ff"/>
<path d="M2151 756h11" stroke="#9e00ff"/>
<path d="M2161 756h11" stroke="#a500ff"/>
<path d="M2171 756h11" stroke="#ad00ff"/>
<path d="M2181 756h11" stroke="#b400ff"/>
<path d="M2191 756h11" stroke="#bb00ff"/>
<path d="M2201 756h11" stroke="#c300ff"/>
<path d="M2211 756h11" stroke="#ca00ff"/>
<path d="M2221 756h11" stroke="#d200ff"/>
<path d="M2231 756h11" stroke="#d900ff"/>
<path d="M2241 756h11" stroke="#e100ff"/>
<path d="M1851 766h11" stroke="#0010ff"/>
<path d="M1861 766h11" stroke="#000eff"/>
<path d="M1871 766h11" stroke="#000dff"/>
<path d="M1881 766h11" stroke="#000bff"/>
<path d="M1891 766h11" stroke="#0009ff"/>
<path d="M1901 766h11" stroke="#0007ff"/>
<path d="M1911 766h11" stroke="#0005ff"/>
<path d="M1921 766h11" stroke="#0003ff"/>
<path d="M1931 766h11" stroke="#0502ff"/>
<path d="M1941 766h11" stroke="#0b00ff"/>
<path d="M1951 766h11" stroke="#1200ff"/>
<path d="M1961 766h11" stroke="#1800ff"/>
<path d="M1971 766h11" stroke="#1f00ff"/>
<path d="M1981 766h11" stroke="#2500ff"/>
<path d="M1991 766h11" stroke="#2c00ff"/>
<path d="M2001 766h11" stroke="#3200ff"/>
<path d="M2011 766h11" stroke="#3900ff"/>
<path d="M2021 766h11" stroke="#4000ff"/>
<path d="M2031 766h11" stroke="#4600ff"/>
<path d="M2041 766h11" stroke="#4d00ff"/>
<path d="M2051 766h11" stroke="#5400ff"/>
<path d="M2061 766h11" stroke="#5b00ff"/>
<path d="M2071 766h11" stroke="#6100ff"/>
<path d="M2081 766h11" stroke="#6800ff"/>
<path d="M2091 766h11" stroke="#6f00ff"/>
<path d="M2101 766h11" stroke="#7600ff"/>
<path d="M2111 766h11" stroke="#7d00ff"/>
<path d="M2121 766h11" stroke="#8400ff"/>
<path d="M2131 766h11" stroke="#8b00ff"/>
<path d="M2141 766h11" stroke="#9200ff"/>
<path d="M2151 766h11" stroke="#9900ff"/>
<path d="M2161 766h11" stroke="#a000ff"/>
<path d="M2171 766h11" stroke="#a700ff"/>
<path d="M2181 766h11" stroke="#ae00ff"/>
<path d="M2191 766h11" stroke="#b600ff"/>
<path d="M2201 766h11" stroke="#bd00ff"/>
<path d="M2211 766h11" stroke="#c400ff"/>
<path d="M2221 766h11" stroke="#cb00ff"/>
<path d="M2231 766h11" stroke="#d300ff"/>
<path d="M1851 776h11" stroke="#000eff"/>
<path d="M1861 776h11" stroke="#000cff"/>
<path d="M1871 776h11" stroke="#000aff"/>
<path d="M1881 776h11" stroke="#0009ff"/>
<path d="M1891 776h11" stroke="#0007ff"/>
<path d="M1901 776h11" stroke="#0005ff"/>
<path d="M1911 776h11" stroke="#0003ff"/>
<path d="M1921 776h11" stroke="#0002ff"/>
<path d="M1931 776h11" stroke="#0400ff"/>
<path d="M1941 776h11" stroke="#0a00ff"/>
<path d="M1951 776h11" stroke="#1000ff"/>
<path d="M1961 776h11" stroke="#1700ff"/>
<path d="M1971 776h11" stroke="#1d00ff"/>
<path d="M1981 776h11" stroke="#2300ff"/>
<path d="M1991 776h11" stroke="#2a00ff"/>
<path d="M2001 776h11" stroke="#3000ff"/>
<path d="M2011 776h11" stroke="#3700ff"/>
<path d="M2021 776h11" stroke="#3d00ff"/>
<path d="M2031 776h11" stroke="#4400ff"/>
<path d="M2041 776h11" stroke="#4a00ff"/>
<path d="M2051 776h11" stroke="#5100ff"/>
<path d="M2061 776h11" stroke="#5700ff"/>
<path d="M2071 776h11" stroke="#5e00ff"/>
<path d="M2081 776h11" stroke="#6500ff"/>
<path d="M2091 776h11" stroke="#6b00ff"/>
<path d="M2101 776h11" stroke="#7200ff"/>
<path d="M2111 776h11" stroke="#7900ff"/>
<path d="M2121 776h11" stroke="#8000ff"/>
<path d="M2131 776h11" stroke="#8700ff"/>
<path d="M2141 776h11" stroke="#8d00ff"/>
<path d="M2151 776h11" stroke="#9400ff"/>
<path d="M2161 776h11" stroke="#9b00ff"/>
<path d="M2171 776h11" stroke="#a200ff"/>
<path d="M2181 776h11" stroke="#a900ff"/>
<path d="M2191 776h11" stroke="#b000ff"/>
<path d="M2201 776h11" stroke="#b700ff"/>
<path d="M2211 776h11" stroke="#be00ff"/>
<path d="M2221 776h11" stroke="#c500ff"/>
<path d="M1861 786h11" stroke="#000aff"/>
<path d="M1871 786h11" stroke="#0009ff"/>
<path d="M1881 786h11" stroke="#0007ff"/>
<path d="M1891 786h11" stroke="#0005ff"/>
<path d="M1901 786h11" stroke="#0003ff"/>
<path d="M1911 786h11" stroke="#0002ff"/>
<path d="M1921 786h11" stroke="#0000ff"/>
<path d="M1931 786h11" stroke="#0300ff"/>
<path d="M1941 786h11" stroke="#0900ff"/>
<path d="M1951 786h11" stroke="#0f00ff"/>
<path d="M1961 786h11" stroke="#1500ff"/>
<path d="M1971 786h11" stroke="#1b00ff"/>
<path d="M1981 786h11" stroke="#2200ff"/>
<path d="M1991 786h11" stroke="#2800ff"/>
<path d="M2001 786h11" stroke="#2e00ff"/>
<path d="M2011 786h11" stroke="#3400ff"/>
<path d="M2021 786h11" stroke="#3b00ff"/>
<path d="M2031 786h11" stroke="#4100ff"/>
<path d="M2041 786h11" stroke="#4700ff"/>
<path d="M2051 786h11" stroke="#4e00ff"/>
<path d="M2061 786h11" stroke="#5400ff"/>
<path d="M2071 786h11" stroke="#5b00ff"/>
<path d="M2081 786h11" stroke="#6100ff"/>
<path d="M2091 786h11" stroke="#6800ff"/>
<path d="M2101 786h11" stroke="#6e00ff"/>
<path d="M2111 786h11" stroke="#7500ff"/>
<path d="M2121 786h11" stroke="#7c00ff"/>
<path d="M2131 786h11" stroke="#8200ff"/>
<path d="M2141 786h11" stroke="#8900ff"/>
<path d="M2151 786h11" stroke="#9000ff"/>
<path d="M2161 786h11" stroke="#9600ff"/>
<path d="M2171 786h11" stroke="#9d00ff"/>
<path d="M2181 786h11" stroke="#a400ff"/>
<path d="M2191 786h11" stroke="#ab00ff"/>
<path d="M2201 786h11" stroke="#b200ff"/>
<path d="M2211 786h11" stroke="#b900ff"/>
<path d="M1871 796h11" stroke="#0007ff"/>
<path d="M1881 796h11" stroke="#0005ff"/>
<path d="M1891 796h11" stroke="#0003ff"/>
<path d="M1901 796h11" stroke="#0002ff"/>
<path d="M1911 796h21" stroke="#0000ff"/>
<path d="M1931 796h11" stroke="#0200ff"/>
<path d="M1941 796h11" stroke="#0800ff"/>
<path d="M1951 796h11" stroke="#0e00ff"/>
<path d="M1961 796h11" stroke="#1400ff"/>
<path d="M1971 796h11" stroke="#1a00ff"/>
<path d="M1981 796h11" stroke="#2000ff"/>
<path d="M1991 796h11" stroke="#2600ff"/>
<path d="M2001 796h11" stroke="#2c00ff"/>
<path d="M2011 796h11" stroke="#3200ff"/>
<path d="M2021 796h11" stroke="#3800ff"/>
<path d="M2031 796h11" stroke="#3f00ff"/>
<path d="M2041 796h11" stroke="#4500ff"/>
<path d="M2051 796h11" stroke="#4b00ff"/>
<path d="M2061 796h11" stroke="#5100ff"/>
<path d="M2071 796h11" stroke="#5800ff"/>
<path d="M2081 796h11" stroke="#5e00ff"/>
<path d="M2091 796h11" stroke="#6500ff"/>
<path d="M2101 796h11" stroke="#6b00ff"/>
<path d="M2111 796h11" stroke="#7100ff"/>
<path d="M2121 796h11" stroke="#7800ff"/>
<path d="M2131 796h11" stroke="#7e00ff"/>
<path d="M2141 796h11" stroke="#8500ff"/>
<path d="M2151 796h11" stroke="#8b00ff"/>
<path d="M2161 796h11" stroke="#9200ff"/>
<path d="M2171 796h11" stroke="#9900ff"/>
<path d="M2181 796h11" stroke="#9f00ff"/>
<path d="M2191 796h11" stroke="#a600ff"/>
<path d="M2201 796h11" stroke="#ad00ff"/>
<path d="M1881 806h11" stroke="#0003ff"/>
<path d="M1891 806h11" stroke="#0002ff"/>
<path d="M1901 806h31" stroke="#0000ff"/>
<path d="M1931 806h11" stroke="#0100ff"/>
<path d="M1941 806h11" stroke="#0600ff"/>
<path d="M1951 806h11" stroke="#0c00ff"/>
<path d="M1961 806h11" stroke="#1200ff"/>
<path d="M1971 806h11" stroke="#1800ff"/>
<path d="M1981 806h11" stroke="#1e00ff"/>
<path d="M1991 806h11" stroke="#2400ff"/>
<path d="M2001 806h11" stroke="#2a00ff"/>
<path d="M2011 806h11" stroke="#3000ff"/>
<path d="M2021 806h11" stroke="#3600ff"/>
<path d="M2031 806h11" stroke="#3c00ff"/>
<path d="M2041 806h11" stroke="#4200ff"/>
<path d="M2051 806h11" stroke="#4900ff"/>
<path d="M2061 806h11" stroke="#4f00ff"/>
<path d="M2071 806h11" stroke="#5500ff"/>
<path d="M2081 806h11" stroke="#5b00ff"/>
<path d="M2091 806h11" stroke="#6100ff"/>
<path d="M2101 806h11" stroke="#6800ff"/>
<path d="M2111 806h11" stroke="#6e00ff"/>
<path d="M2121 806h11" stroke="#7400ff"/>
<path d="M2131 806h11" stroke="#7b00ff"/>
<path d="M2141 806h11" stroke="#8100ff"/>
<path d="M2151 806h11" stroke="#8700ff"/>
<path d="M2161 806h11" stroke="#8e00ff"/>
<path d="M2171 806h11" stroke="#9400ff"/>
<path d="M2181 806h11" stroke="#9b00ff"/>
<path d="M2191 806h11" stroke="#a100ff"/>
<path d="M1891 816h51" stroke="#0000ff"/>
<path d="M1941 816h11" stroke="#0500ff"/>
<path d="M1951 816h11" stroke="#0b00ff"/>
<path d="M1961 816h11" stroke="#1100ff"/>
<path d="M1971 816h11" stroke="#1700ff"/>
<path d="M1981 816h11" stroke="#1d00ff"/>
<path d="M1991 816h11" stroke="#2200ff"/>
<path d="M2001 816h11" stroke="#2800ff"/>
<path d="M2011 816h11" stroke="#2e00ff"/>
<path d="M2021 816h11" stroke="#3400ff"/>
<path d="M2031 816h11" stroke="#3a00ff"/>
<path d="M2041 816h11" stroke="#4000ff"/>
<path d="M2051 816h11" stroke="#4600ff"/>
<path d="M2061 816h11" stroke="#4c00ff"/>
<path d="M2071 816h11" stroke="#5200ff"/>
<path d="M2081 816h11" stroke="#5800ff"/>
<path d="M2091 816h11" stroke="#5e00ff"/>
<path d="M2101 816h11" stroke="#6400ff"/>
<path d="M2111 816h11" stroke="#6b00ff"/>
<path d="M2121 816h11" stroke="#7100ff"/>
<path d="M2131 816h11" stroke="#7700ff"/>
<path d="M2141 816h11" stroke="#7d00ff"/>
<path d="M2151 816h11" stroke="#8300ff"/>
<path d="M2161 816h11" stroke="#8a00ff"/>
<path d="M2171 816h11" stroke="#9000ff"/>
<path d="M2181 816h11" stroke="#9600ff"/>
<path d="M1891 826h51" stroke="#0000ff"/>
<path d="M1941 826h11" stroke="#0400ff"/>
<path d="M1951 826h11" stroke="#0a00ff"/>
<path d="M1961 826h11" stroke="#1000ff"/>
<path d="M1971 826h11" stroke="#1500ff"/>
<path d="M1981 826h11" stroke="#1b00ff"/>
<path d="M1991 826h11" stroke="#2100ff"/>
<path d="M2001 826h11" stroke="#2700ff"/>
<path d="M2011 826h11" stroke="#2c00ff"/>
<path d="M2021 826h11" stroke="#3200ff"/>
<path d="M2031 826h11" stroke="#3800ff"/>
<path d="M2041 826h11" stroke="#3e00ff"/>
<path d="M2051 826h11" stroke="#4400ff"/>
<path d="M2061 826h11" stroke="#4a00ff"/>
<path d="M2071 826h11" stroke="#4f00ff"/>
<path d="M2081 826h11" stroke="#5500ff"/>
<path d="M2091 826h11" stroke="#5b00ff"/>
<path d="M2101 826h11" stroke="#6100ff"/>
<path d="M2111 826h11" stroke="#6700ff"/>
<path d="M2121 826h11" stroke="#6d00ff"/>
<path d="M2131 826h11" stroke="#7300ff"/>
<path d="M2141 826h11" stroke="#7a00ff"/>
<path d="M2151 826h11" stroke="#8000ff"/>
<path d="M2161 826h11" stroke="#8600ff"/>
<path d="M2171 826h11" stroke="#8c00ff"/>
<path d="M1901 836h41" stroke="#0000ff"/>
<path d="M1941 836h11" stroke="#0300ff"/>
<path d="M1951 836h11" stroke="#0900ff"/>
<path d="M1961 836h11" stroke="#0e00ff"/>
<path d="M1971 836h11" stroke="#1400ff"/>
<path d="M1981 836h11" stroke="#1a00ff"/>
<path d="M1991 836h11" stroke="#1f00ff"/>
<path d="M2001 836h11" stroke="#2500ff"/>
<path d="M2011 836h11" stroke="#2b00ff"/>
<path d="M2021 836h11" stroke="#3000ff"/>
<path d="M2031 836h11" stroke="#3600ff"/>
<path d="M2041 836h11" stroke="#3c00ff"/>
<path d="M2051 836h11" stroke="#4100ff"/>
<path d="M2061 836h11" stroke="#4700ff"/>
<path d="M2071 836h11" stroke="#4d00ff"/>
<path d="M2081 836h11" stroke="#5300ff"/>
<path d="M2091 836h11" stroke="#5900ff"/>
<path d="M2101 836h11" stroke="#5e00ff"/>
<path d="M2111 836h11" stroke="#6400ff"/>
<path d="M2121 836h11" stroke="#6a00ff"/>
<path d="M2131 836h11" stroke="#7000ff"/>
<path d="M2141 836h11" stroke="#7600ff"/>
<path d="M2151 836h11" stroke="#7c00ff"/>
<path d="M2161 836h11" stroke="#8200ff"/>
<path d="M1911 846h31" stroke="#0000ff"/>
<path d="M1941 846h11" stroke="#0200ff"/>
<path d="M1951 846h11" stroke="#0800ff"/>
<path d="M1961 846h11" stroke="#0d00ff"/>
<path d="M1971 846h11" stroke="#1300ff"/>
<path d="M1981 846h11" stroke="#1800ff"/>
<path d="M1991 846h11" stroke="#1e00ff"/>
<path d="M2001 846h11" stroke="#2300ff"/>
<path d="M2011 846h11" stroke="#2900ff"/>
<path d="M2021 846h11" stroke="#2e00ff"/>
<path d="M2031 846h11" stroke="#3400ff"/>
<path d="M2041 846h11" stroke="#3a00ff"/>
<path d="M2051 846h11" stroke="#3f00ff"/>
<path d="M2061 846h11" stroke="#4500ff"/>
<path d="M2071 846h11" stroke="#4a00ff"/>
<path d="M2081 846h11" stroke="#5000ff"/>
<path d="M2091 846h11" stroke="#5600ff"/>
<path d="M2101 846h11" stroke="#5c00ff"/>
<path d="M2111 846h11" stroke="#6100ff"/>
<path d="M2121 846h11" stroke="#6700ff"/>
<path d="M2131 846h11" stroke="#6d00ff"/>
<path d="M2141 846h11" stroke="#7300ff"/>
<path d="M2151 846h11" stroke="#7900ff"/>
<path d="M1921 856h21" stroke="#0000ff"/>
<path d="M1941 856h11" stroke="#0200ff"/>
<path d="M1951 856h11" stroke="#0700ff"/>
<path d="M1961 856h11" stroke="#0c00ff"/>
<path d="M1971 856h11" stroke="#1200ff"/>
<path d="M1981 856h11" stroke="#1700ff"/>
<path d="M1991 856h11" stroke="#1c00ff"/>
<path d="M2001 856h11" stroke="#2200ff"/>
<path d="M2011 856h11" stroke="#2700ff"/>
<path d="M2021 856h11" stroke="#2d00ff"/>
<path d="M2031 856h11" stroke="#3200ff"/>
<path d="M2041 856h11" stroke="#3800ff"/>
<path d="M2051 856h11" stroke="#3d00ff"/>
<path d="M2061 856h11" stroke="#4300ff"/>
<path d="M2071 856h11" stroke="#4800ff"/>
<path d="M2081 856h11" stroke="#4e00ff"/>
<path d="M2091 856h11" stroke="#5300ff"/>
<path d="M2101 856h11" stroke="#5900ff"/>
<path d="M2111 856h11" stroke="#5f00ff"/>
<path d="M2121 856h11" stroke="#6400ff"/>
<path d="M2131 856h11" stroke="#6a00ff"/>
<path d="M2141 856h11" stroke="#7000ff"/>
<path d="M1931 866h11" stroke="#0000ff"/>
<path d="M1941 866h11" stroke="#0100ff"/>
<path d="M1951 866h11" stroke="#0600ff"/>
<path d="M1961 866h11" stroke="#0b00ff"/>
<path d="M1971 866h11" stroke="#1000ff"/>
<path d="M1981 866h11" stroke="#1600ff"/>
<path d="M1991 866h11" stroke="#1b00ff"/>
<path d="M2001 866h11" stroke="#2000ff"/>
<path d="M2011 866h11" stroke="#2600ff"/>
<path d="M2021 866h11" stroke="#2b00ff"/>
<path d="M2031 866h11" stroke="#3000ff"/>
<path d="M2041 866h11" stroke="#3600ff"/>
<path d="M2051 866h11" stroke="#3b00ff"/>
<path d="M2061 866h11" stroke="#4000ff"/>
<path d="M2071 866h11" stroke="#4600ff"/>
<path d="M2081 866h11" stroke="#4b00ff"/>
<path d="M2091 866h11" stroke="#5100ff"/>
<path d="M2101 866h11" stroke="#5600ff"/>
<path d="M2111 866h11" stroke="#5c00ff"/>
<path d="M2121 866h11" stroke="#6100ff"/>
<path d="M2131 866h11" stroke="#6700ff"/>
<path d="M1941 876h11" stroke="#0000ff"/>
<path d="M1951 876h11" stroke="#0500ff"/>
<path d="M1961 876h11" stroke="#0a00ff"/>
<path d="M1971 876h11" stroke="#0f00ff"/>
<path d="M1981 876h11" stroke="#1400ff"/>
<path d="M1991 876h11" stroke="#1a00ff"/>
<path d="M2001 876h11" stroke="#1f00ff"/>
<path d="M2011 876h11" stroke="#2400ff"/>
<path d="M2021 876h11" stroke="#2900ff"/>
<path d="M2031 876h11" stroke="#2e00ff"/>
<path d="M2041 876h11" stroke="#3400ff"/>
<path d="M2051 876h11" stroke="#3900ff"/>
<path d="M2061 876h11" stroke="#3e00ff"/>
<path d="M2071 876h11" stroke="#4400ff"/>
<path d="M2081 876h11" stroke="#4900ff"/>
<path d="M2091 876h11" stroke="#4e00ff"/>
<path d="M2101 876h11" stroke="#5400ff"/>
<path d="M2111 876h11" stroke="#5900ff"/>
<path d="M2121 876h11" stroke="#5f00ff"/>
<path d="M1951 886h11" stroke="#0400ff"/>
<path d="M1961 886h11" stroke="#0900ff"/>
<path d="M1971 886h11" stroke="#0e00ff"/>
<path d="M1981 886h11" stroke="#1300ff"/>
<path d="M1991 886h11" stroke="#1800ff"/>
<path d="M2001 886h11" stroke="#1d00ff"/>
<path d="M2011 886h11" stroke="#2200ff"/>
<path d="M2021 886h11" stroke="#2800ff"/>
<path d="M2031 886h11" stroke="#2d00ff"/>
<path d="M2041 886h11" stroke="#3200ff"/>
<path d="M2051 886h11" stroke="#3700ff"/>
<path d="M2061 886h11" stroke="#3c00ff"/>
<path d="M2071 886h11" stroke="#4200ff"/>
<path d="M2081 886h11" stroke="#4700ff"/>
<path d="M2091 886h11" stroke="#4c00ff"/>
<path d="M2101 886h11" stroke="#5100ff"/>
<path d="M2111 886h11" stroke="#5700ff"/>
<path d="M1961 896h11" stroke="#0800ff"/>
<path d="M1971 896h11" stroke="#0d00ff"/>
<path d="M1981 896h11" stroke="#1200ff"/>
<path d="M1991 896h11" stroke="#1700ff"/>
<path d="M2001 896h11" stroke="#1c00ff"/>
<path d="M2011 896h11" stroke="#2100ff"/>
<path d="M2021 896h11" stroke="#2600ff"/>
<path d="M2031 896h11" stroke="#2b00ff"/>
<path d="M2041 896h11" stroke="#3000ff"/>
<path d="M2051 896h11" stroke="#3500ff"/>
<path d="M2061 896h11" stroke="#3a00ff"/>
<path d="M2071 896h11" stroke="#4000ff"/>
<path d="M2081 896h11" stroke="#4500ff"/>
<path d="M2091 896h11" stroke="#4a00ff"/>
<path d="M2101 896h11" stroke="#4f00ff"/>
<path d="M1981 906h11" stroke="#1100ff"/>
<path d="M1991 906h11" stroke="#1600ff"/>
<path d="M2001 906h11" stroke="#1b00ff"/>
<path d="M2011 906h11" stroke="#2000ff"/>
<path d="M2021 906h11" stroke="#2500ff"/>
<path d="M2031 906h11" stroke="#2a00ff"/>
<path d="M2041 906h11" stroke="#2f00ff"/>
<path d="M2051 906h11" stroke="#3400ff"/>
<path d="M2061 906h11" stroke="#3900ff"/>
<path d="M2071 906h11" stroke="#3e00ff"/>
<path d="M2081 906h11" stroke="#4300ff"/>
<path d="M2091 906h11" stroke="#4800ff"/>
<path d="M1991 916h11" stroke="#1500ff"/>
<path d="M2001 916h11" stroke="#1900ff"/>
<path d="M2011 916h11" stroke="#1e00ff"/>
<path d="M2021 916h11" stroke="#2300ff"/>
<path d="M2031 916h11" stroke="#2800ff"/>
<path d="M2041 916h11" stroke="#2d00ff"/>
<path d="M2051 916h11" stroke="#3200ff"/>
<path d="M2061 916h11" stroke="#3700ff"/>
<path d="M2071 916h11" stroke="#3c00ff"/>
<path d="M2081 916h11" stroke="#4100ff"/>
<path d="M2001 926h11" stroke="#1800ff"/>
<path d="M2011 926h11" stroke="#1d00ff"/>
<path d="M2021 926h11" stroke="#2200ff"/>
<path d="M2031 926h11" stroke="#2700ff"/>
<path d="M2041 926h11" stroke="#2b00ff"/>
<path d="M2051 926h11" stroke="#3000ff"/>
<path d="M2061 926h11" stroke="#3500ff"/>
<path d="M2071 926h11" stroke="#3a00ff"/>
<path d="M2011 936h11" stroke="#1c00ff"/>
<path d="M2021 936h11" stroke="#2000ff"/>
<path d="M2031 936h11" stroke="#2500ff"/>
<path d="M2041 936h11" stroke="#2a00ff"/>
<path d="M2051 936h11" stroke="#2f00ff"/>
<path d="M2061 936h11" stroke="#3300ff"/>
<path d="M2021 946h11" stroke="#1f00ff"/>
<path d="M2031 946h11" stroke="#2400ff"/>
<path d="M2041 946h11" stroke="#2800ff"/>
<path d="M2051 946h11" stroke="#2d00ff"/>
</g>
<defs><radialGradient id="wpg" gradientUnits="userSpaceOnUse" cx="1963.1" cy="435.6" r="76"><stop offset="0" stop-color="#fff"/><stop offset="0.6" stop-color="#fff"/><stop offset="1" stop-color="#000"/></radialGradient><mask id="wpm" maskUnits="userSpaceOnUse" x="1877.1" y="349.6" width="172" height="172"><circle cx="1963.1" cy="435.6" r="76" fill="url(#wpg)"/></mask><filter id="fblur" color-interpolation-filters="sRGB" x="-5%" y="-5%" width="110%" height="110%"><feGaussianBlur stdDeviation="2"/></filter></defs>
<g mask="url(#wpm)"><g filter="url(#fblur)" shape-rendering="crispEdges" fill="none" stroke-width="4.6">
<path d="M1939.1 357.6h4.6" stroke="#acff26"/>
<path d="M1943.1 357.6h4.6" stroke="#b7ff26"/>
<path d="M1947.1 357.6h4.6" stroke="#c2ff26"/>
<path d="M1951.1 357.6h4.6" stroke="#cdff25"/>
<path d="M1955.1 357.6h4.6" stroke="#d8ff25"/>
<path d="M1959.1 357.6h4.6" stroke="#e3ff24"/>
<path d="M1963.1 357.6h4.6" stroke="#efff24"/>
<path d="M1967.1 357.6h4.6" stroke="#fbff24"/>
<path d="M1971.1 357.6h4.6" stroke="#fff722"/>
<path d="M1975.1 357.6h4.6" stroke="#ffec20"/>
<path d="M1979.1 357.6h4.6" stroke="#ffe21e"/>
<path d="M1983.1 357.6h4.6" stroke="#ffd81c"/>
<path d="M1927.1 361.6h4.6" stroke="#8eff30"/>
<path d="M1931.1 361.6h4.6" stroke="#98ff30"/>
<path d="M1935.1 361.6h4.6" stroke="#a2ff2f"/>
<path d="M1939.1 361.6h4.6" stroke="#adff2f"/>
<path d="M1943.1 361.6h4.6" stroke="#b7ff2f"/>
<path d="M1947.1 361.6h4.6" stroke="#c2ff2e"/>
<path d="M1951.1 361.6h4.6" stroke="#cdff2e"/>
<path d="M1955.1 361.6h4.6" stroke="#d8ff2e"/>
<path d="M1959.1 361.6h4.6" stroke="#e4ff2d"/>
<path d="M1963.1 361.6h4.6" stroke="#f0ff2d"/>
<path d="M1967.1 361.6h4.6" stroke="#fcff2d"/>
<path d="M1971.1 361.6h4.6" stroke="#fff62b"/>
<path d="M1975.1 361.6h4.6" stroke="#ffeb29"/>
<path d="M1979.1 361.6h4.6" stroke="#ffe026"/>
<path d="M1983.1 361.6h4.6" stroke="#ffd724"/>
<path d="M1987.1 361.6h4.6" stroke="#ffcd23"/>
<path d="M1991.1 361.6h4.6" stroke="#ffc521"/>
<path d="M1995.1 361.6h4.6" stroke="#ffbd1f"/>
<path d="M1919.1 365.6h4.6" stroke="#7aff39"/>
<path d="M1923.1 365.6h4.6" stroke="#84ff39"/>
<path d="M1927.1 365.6h4.6" stroke="#8eff38"/>
<path d="M1931.1 365.6h4.6" stroke="#98ff38"/>
<path d="M1935.1 365.6h4.6" stroke="#a2ff38"/>
<path d="M1939.1 365.6h4.6" stroke="#adff38"/>
<path d="M1943.1 365.6h4.6" stroke="#b8ff38"/>
<path d="M1947.1 365.6h4.6" stroke="#c3ff37"/>
<path d="M1951.1 365.6h4.6" stroke="#ceff37"/>
<path d="M1955.1 365.6h4.6" stroke="#d9ff37"/>
<path d="M1959.1 365.6h4.6" stroke="#e5ff37"/>
<path d="M1963.1 365.6h4.6" stroke="#f1ff36"/>
<path d="M1967.1 365.6h4.6" stroke="#fdff36"/>
<path d="M1971.1 365.6h4.6" stroke="#fff534"/>
<path d="M1975.1 365.6h4.6" stroke="#ffea31"/>
<path d="M1979.1 365.6h4.6" stroke="#ffdf2f"/>
<path d="M1983.1 365.6h4.6" stroke="#ffd52c"/>
<path d="M1987.1 365.6h4.6" stroke="#ffcc2a"/>
<path d="M1991.1 365.6h4.6" stroke="#ffc428"/>
<path d="M1995.1 365.6h4.6" stroke="#ffbc26"/>
<path d="M1999.1 365.6h4.6" stroke="#ffb425"/>
<path d="M2003.1 365.6h4.6" stroke="#ffad23"/>
<path d="M1915.1 369.6h4.6" stroke="#70ff41"/>
<path d="M1919.1 369.6h4.6" stroke="#7aff41"/>
<path d="M1923.1 369.6h4.6" stroke="#84ff41"/>
<path d="M1927.1 369.6h4.6" stroke="#8eff41"/>
<path d="M1931.1 369.6h4.6" stroke="#98ff41"/>
<path d="M1935.1 369.6h4.6" stroke="#a2ff41"/>
<path d="M1939.1 369.6h4.6" stroke="#adff41"/>
<path d="M1943.1 369.6h4.6" stroke="#b8ff41"/>
<path d="M1947.1 369.6h4.6" stroke="#c3ff40"/>
<path d="M1951.1 369.6h4.6" stroke="#ceff40"/>
<path d="M1955.1 369.6h4.6" stroke="#daff40"/>
<path d="M1959.1 369.6h4.6" stroke="#e6ff40"/>
<path d="M1963.1 369.6h4.6" stroke="#f2ff40"/>
<path d="M1967.1 369.6h4.6" stroke="#feff40"/>
<path d="M1971.1 369.6h4.6" stroke="#fff43d"/>
<path d="M1975.1 369.6h4.6" stroke="#ffe83a"/>
<path d="M1979.1 369.6h4.6" stroke="#ffde37"/>
<path d="M1983.1 369.6h4.6" stroke="#ffd435"/>
<path d="M1987.1 369.6h4.6" stroke="#ffcb32"/>
<path d="M1991.1 369.6h4.6" stroke="#ffc230"/>
<path d="M1995.1 369.6h4.6" stroke="#ffba2e"/>
<path d="M1999.1 369.6h4.6" stroke="#ffb32c"/>
<path d="M2003.1 369.6h4.6" stroke="#ffac2a"/>
<path d="M2007.1 369.6h4.6" stroke="#ffa528"/>
<path d="M1911.1 373.6h4.6" stroke="#66ff4a"/>
<path d="M1915.1 373.6h4.6" stroke="#70ff4a"/>
<path d="M1919.1 373.6h4.6" stroke="#7aff4a"/>
<path d="M1923.1 373.6h4.6" stroke="#83ff4a"/>
<path d="M1927.1 373.6h4.6" stroke="#8eff4a"/>
<path d="M1931.1 373.6h4.6" stroke="#98ff4a"/>
<path d="M1935.1 373.6h4.6" stroke="#a3ff4a"/>
<path d="M1939.1 373.6h4.6" stroke="#adff4a"/>
<path d="M1943.1 373.6h4.6" stroke="#b8ff4a"/>
<path d="M1947.1 373.6h4.6" stroke="#c4ff4a"/>
<path d="M1951.1 373.6h4.6" stroke="#cfff4a"/>
<path d="M1955.1 373.6h4.6" stroke="#dbff4a"/>
<path d="M1959.1 373.6h4.6" stroke="#e7ff4a"/>
<path d="M1963.1 373.6h4.6" stroke="#f3ff4a"/>
<path d="M1967.1 373.6h4.6" stroke="#ffff49"/>
<path d="M1971.1 373.6h4.6" stroke="#fff246"/>
<path d="M1975.1 373.6h4.6" stroke="#ffe743"/>
<path d="M1979.1 373.6h4.6" stroke="#ffdd40"/>
<path d="M1983.1 373.6h4.6" stroke="#ffd33d"/>
<path d="M1987.1 373.6h4.6" stroke="#ffca3a"/>
<path d="M1991.1 373.6h4.6" stroke="#ffc138"/>
<path d="M1995.1 373.6h4.6" stroke="#ffb935"/>
<path d="M1999.1 373.6h4.6" stroke="#ffb133"/>
<path d="M2003.1 373.6h4.6" stroke="#ffaa31"/>
<path d="M2007.1 373.6h4.6" stroke="#ffa42f"/>
<path d="M2011.1 373.6h4.6" stroke="#ff9d2d"/>
<path d="M1907.1 377.6h4.6" stroke="#5cff53"/>
<path d="M1911.1 377.6h4.6" stroke="#66ff53"/>
<path d="M1915.1 377.6h4.6" stroke="#6fff53"/>
<path d="M1919.1 377.6h4.6" stroke="#79ff53"/>
<path d="M1923.1 377.6h4.6" stroke="#83ff53"/>
<path d="M1927.1 377.6h4.6" stroke="#8eff53"/>
<path d="M1931.1 377.6h4.6" stroke="#98ff53"/>
<path d="M1935.1 377.6h4.6" stroke="#a3ff53"/>
<path d="M1939.1 377.6h4.6" stroke="#aeff53"/>
<path d="M1943.1 377.6h4.6" stroke="#b9ff53"/>
<path d="M1947.1 377.6h4.6" stroke="#c4ff53"/>
<path d="M1951.1 377.6h4.6" stroke="#d0ff53"/>
<path d="M1955.1 377.6h4.6" stroke="#dbff53"/>
<path d="M1959.1 377.6h4.6" stroke="#e8ff53"/>
<path d="M1963.1 377.6h4.6" stroke="#f4ff54"/>
<path d="M1967.1 377.6h4.6" stroke="#fffd53"/>
<path d="M1971.1 377.6h4.6" stroke="#fff14f"/>
<path d="M1975.1 377.6h4.6" stroke="#ffe64c"/>
<path d="M1979.1 377.6h4.6" stroke="#ffdb48"/>
<path d="M1983.1 377.6h4.6" stroke="#ffd245"/>
<path d="M1987.1 377.6h4.6" stroke="#ffc842"/>
<path d="M1991.1 377.6h4.6" stroke="#ffc03f"/>
<path d="M1995.1 377.6h4.6" stroke="#ffb83d"/>
<path d="M1999.1 377.6h4.6" stroke="#ffb03a"/>
<path d="M2003.1 377.6h4.6" stroke="#ffa938"/>
<path d="M2007.1 377.6h4.6" stroke="#ffa236"/>
<path d="M2011.1 377.6h4.6" stroke="#ff9c34"/>
<path d="M2015.1 377.6h4.6" stroke="#ff9632"/>
<path d="M1903.1 381.6h4.6" stroke="#52ff5b"/>
<path d="M1907.1 381.6h4.6" stroke="#5cff5b"/>
<path d="M1911.1 381.6h4.6" stroke="#65ff5c"/>
<path d="M1915.1 381.6h4.6" stroke="#6fff5c"/>
<path d="M1919.1 381.6h4.6" stroke="#79ff5c"/>
<path d="M1923.1 381.6h4.6" stroke="#83ff5c"/>
<path d="M1927.1 381.6h4.6" stroke="#8eff5c"/>
<path d="M1931.1 381.6h4.6" stroke="#98ff5c"/>
<path d="M1935.1 381.6h4.6" stroke="#a3ff5c"/>
<path d="M1939.1 381.6h4.6" stroke="#aeff5d"/>
<path d="M1943.1 381.6h4.6" stroke="#b9ff5d"/>
<path d="M1947.1 381.6h4.6" stroke="#c5ff5d"/>
<path d="M1951.1 381.6h4.6" stroke="#d0ff5d"/>
<path d="M1955.1 381.6h4.6" stroke="#dcff5d"/>
<path d="M1959.1 381.6h4.6" stroke="#e9ff5d"/>
<path d="M1963.1 381.6h4.6" stroke="#f5ff5e"/>
<path d="M1967.1 381.6h4.6" stroke="#fffc5d"/>
<path d="M1971.1 381.6h4.6" stroke="#fff059"/>
<path d="M1975.1 381.6h4.6" stroke="#ffe555"/>
<path d="M1979.1 381.6h4.6" stroke="#ffda51"/>
<path d="M1983.1 381.6h4.6" stroke="#ffd04d"/>
<path d="M1987.1 381.6h4.6" stroke="#ffc74a"/>
<path d="M1991.1 381.6h4.6" stroke="#ffbf47"/>
<path d="M1995.1 381.6h4.6" stroke="#ffb644"/>
<path d="M1999.1 381.6h4.6" stroke="#ffaf42"/>
<path d="M2003.1 381.6h4.6" stroke="#ffa83f"/>
<path d="M2007.1 381.6h4.6" stroke="#ffa13d"/>
<path d="M2011.1 381.6h4.6" stroke="#ff9b3a"/>
<path d="M2015.1 381.6h4.6" stroke="#ff9538"/>
<path d="M2019.1 381.6h4.6" stroke="#ff8f36"/>
<path d="M1899.1 385.6h4.6" stroke="#49ff64"/>
<path d="M1903.1 385.6h4.6" stroke="#52ff64"/>
<path d="M1907.1 385.6h4.6" stroke="#5bff64"/>
<path d="M1911.1 385.6h4.6" stroke="#65ff65"/>
<path d="M1915.1 385.6h4.6" stroke="#6fff65"/>
<path d="M1919.1 385.6h4.6" stroke="#79ff65"/>
<path d="M1923.1 385.6h4.6" stroke="#83ff65"/>
<path d="M1927.1 385.6h4.6" stroke="#8dff66"/>
<path d="M1931.1 385.6h4.6" stroke="#98ff66"/>
<path d="M1935.1 385.6h4.6" stroke="#a3ff66"/>
<path d="M1939.1 385.6h4.6" stroke="#aeff66"/>
<path d="M1943.1 385.6h4.6" stroke="#baff67"/>
<path d="M1947.1 385.6h4.6" stroke="#c5ff67"/>
<path d="M1951.1 385.6h4.6" stroke="#d1ff67"/>
<path d="M1955.1 385.6h4.6" stroke="#ddff67"/>
<path d="M1959.1 385.6h4.6" stroke="#e9ff68"/>
<path d="M1963.1 385.6h4.6" stroke="#f6ff68"/>
<path d="M1967.1 385.6h4.6" stroke="#fffb67"/>
<path d="M1971.1 385.6h4.6" stroke="#ffef62"/>
<path d="M1975.1 385.6h4.6" stroke="#ffe35e"/>
<path d="M1979.1 385.6h4.6" stroke="#ffd95a"/>
<path d="M1983.1 385.6h4.6" stroke="#ffcf56"/>
<path d="M1987.1 385.6h4.6" stroke="#ffc652"/>
<path d="M1991.1 385.6h4.6" stroke="#ffbd4f"/>
<path d="M1995.1 385.6h4.6" stroke="#ffb54c"/>
<path d="M1999.1 385.6h4.6" stroke="#ffae49"/>
<path d="M2003.1 385.6h4.6" stroke="#ffa646"/>
<path d="M2007.1 385.6h4.6" stroke="#ffa044"/>
<path d="M2011.1 385.6h4.6" stroke="#ff9941"/>
<path d="M2015.1 385.6h4.6" stroke="#ff933f"/>
<path d="M2019.1 385.6h4.6" stroke="#ff8e3d"/>
<path d="M2023.1 385.6h4.6" stroke="#ff883a"/>
<path d="M1895.1 389.6h4.6" stroke="#3fff6c"/>
<path d="M1899.1 389.6h4.6" stroke="#48ff6d"/>
<path d="M1903.1 389.6h4.6" stroke="#51ff6d"/>
<path d="M1907.1 389.6h4.6" stroke="#5bff6d"/>
<path d="M1911.1 389.6h4.6" stroke="#65ff6e"/>
<path d="M1915.1 389.6h4.6" stroke="#6eff6e"/>
<path d="M1919.1 389.6h4.6" stroke="#79ff6e"/>
<path d="M1923.1 389.6h4.6" stroke="#83ff6f"/>
<path d="M1927.1 389.6h4.6" stroke="#8dff6f"/>
<path d="M1931.1 389.6h4.6" stroke="#98ff6f"/>
<path d="M1935.1 389.6h4.6" stroke="#a3ff70"/>
<path d="M1939.1 389.6h4.6" stroke="#aeff70"/>
<path d="M1943.1 389.6h4.6" stroke="#baff71"/>
<path d="M1947.1 389.6h4.6" stroke="#c6ff71"/>
<path d="M1951.1 389.6h4.6" stroke="#d2ff71"/>
<path d="M1955.1 389.6h4.6" stroke="#deff72"/>
<path d="M1959.1 389.6h4.6" stroke="#eaff72"/>
<path d="M1963.1 389.6h4.6" stroke="#f7ff73"/>
<path d="M1967.1 389.6h4.6" stroke="#fffa71"/>
<path d="M1971.1 389.6h4.6" stroke="#ffed6c"/>
<path d="M1975.1 389.6h4.6" stroke="#ffe267"/>
<path d="M1979.1 389.6h4.6" stroke="#ffd862"/>
<path d="M1983.1 389.6h4.6" stroke="#ffce5e"/>
<path d="M1987.1 389.6h4.6" stroke="#ffc55b"/>
<path d="M1991.1 389.6h4.6" stroke="#ffbc57"/>
<path d="M1995.1 389.6h4.6" stroke="#ffb454"/>
<path d="M1999.1 389.6h4.6" stroke="#ffac50"/>
<path d="M2003.1 389.6h4.6" stroke="#ffa54d"/>
<path d="M2007.1 389.6h4.6" stroke="#ff9e4b"/>
<path d="M2011.1 389.6h4.6" stroke="#ff9848"/>
<path d="M2015.1 389.6h4.6" stroke="#ff9245"/>
<path d="M2019.1 389.6h4.6" stroke="#ff8c43"/>
<path d="M2023.1 389.6h4.6" stroke="#ff8741"/>
<path d="M2027.1 389.6h4.6" stroke="#ff823f"/>
<path d="M1891.1 393.6h4.6" stroke="#35ff75"/>
<path d="M1895.1 393.6h4.6" stroke="#3eff76"/>
<path d="M1899.1 393.6h4.6" stroke="#47ff76"/>
<path d="M1903.1 393.6h4.6" stroke="#51ff76"/>
<path d="M1907.1 393.6h4.6" stroke="#5aff77"/>
<path d="M1911.1 393.6h4.6" stroke="#64ff77"/>
<path d="M1915.1 393.6h4.6" stroke="#6eff78"/>
<path d="M1919.1 393.6h4.6" stroke="#78ff78"/>
<path d="M1923.1 393.6h4.6" stroke="#83ff78"/>
<path d="M1927.1 393.6h4.6" stroke="#8dff79"/>
<path d="M1931.1 393.6h4.6" stroke="#98ff79"/>
<path d="M1935.1 393.6h4.6" stroke="#a3ff7a"/>
<path d="M1939.1 393.6h4.6" stroke="#afff7a"/>
<path d="M1943.1 393.6h4.6" stroke="#baff7b"/>
<path d="M1947.1 393.6h4.6" stroke="#c6ff7b"/>
<path d="M1951.1 393.6h4.6" stroke="#d2ff7c"/>
<path d="M1955.1 393.6h4.6" stroke="#dfff7c"/>
<path d="M1959.1 393.6h4.6" stroke="#ebff7d"/>
<path d="M1963.1 393.6h4.6" stroke="#f8ff7d"/>
<path d="M1967.1 393.6h4.6" stroke="#fff87b"/>
<path d="M1971.1 393.6h4.6" stroke="#ffec75"/>
<path d="M1975.1 393.6h4.6" stroke="#ffe170"/>
<path d="M1979.1 393.6h4.6" stroke="#ffd66b"/>
<path d="M1983.1 393.6h4.6" stroke="#ffcc67"/>
<path d="M1987.1 393.6h4.6" stroke="#ffc363"/>
<path d="M1991.1 393.6h4.6" stroke="#ffbb5f"/>
<path d="M1995.1 393.6h4.6" stroke="#ffb35b"/>
<path d="M1999.1 393.6h4.6" stroke="#ffab58"/>
<path d="M2003.1 393.6h4.6" stroke="#ffa455"/>
<path d="M2007.1 393.6h4.6" stroke="#ff9d52"/>
<path d="M2011.1 393.6h4.6" stroke="#ff974f"/>
<path d="M2015.1 393.6h4.6" stroke="#ff914c"/>
<path d="M2019.1 393.6h4.6" stroke="#ff8b4a"/>
<path d="M2023.1 393.6h4.6" stroke="#ff8647"/>
<path d="M2027.1 393.6h4.6" stroke="#ff8045"/>
<path d="M2031.1 393.6h4.6" stroke="#ff7b43"/>
<path d="M1891.1 397.6h4.6" stroke="#34ff7e"/>
<path d="M1895.1 397.6h4.6" stroke="#3dff7f"/>
<path d="M1899.1 397.6h4.6" stroke="#46ff7f"/>
<path d="M1903.1 397.6h4.6" stroke="#50ff80"/>
<path d="M1907.1 397.6h4.6" stroke="#5aff80"/>
<path d="M1911.1 397.6h4.6" stroke="#64ff81"/>
<path d="M1915.1 397.6h4.6" stroke="#6eff81"/>
<path d="M1919.1 397.6h4.6" stroke="#78ff82"/>
<path d="M1923.1 397.6h4.6" stroke="#83ff82"/>
<path d="M1927.1 397.6h4.6" stroke="#8dff83"/>
<path d="M1931.1 397.6h4.6" stroke="#98ff83"/>
<path d="M1935.1 397.6h4.6" stroke="#a4ff84"/>
<path d="M1939.1 397.6h4.6" stroke="#afff85"/>
<path d="M1943.1 397.6h4.6" stroke="#bbff85"/>
<path d="M1947.1 397.6h4.6" stroke="#c7ff86"/>
<path d="M1951.1 397.6h4.6" stroke="#d3ff87"/>
<path d="M1955.1 397.6h4.6" stroke="#e0ff87"/>
<path d="M1959.1 397.6h4.6" stroke="#ecff88"/>
<path d="M1963.1 397.6h4.6" stroke="#faff89"/>
<path d="M1967.1 397.6h4.6" stroke="#fff785"/>
<path d="M1971.1 397.6h4.6" stroke="#ffeb7f"/>
<path d="M1975.1 397.6h4.6" stroke="#ffdf7a"/>
<path d="M1979.1 397.6h4.6" stroke="#ffd574"/>
<path d="M1983.1 397.6h4.6" stroke="#ffcb70"/>
<path d="M1987.1 397.6h4.6" stroke="#ffc26b"/>
<path d="M1991.1 397.6h4.6" stroke="#ffb967"/>
<path d="M1995.1 397.6h4.6" stroke="#ffb163"/>
<path d="M1999.1 397.6h4.6" stroke="#ffaa60"/>
<path d="M2003.1 397.6h4.6" stroke="#ffa25c"/>
<path d="M2007.1 397.6h4.6" stroke="#ff9c59"/>
<path d="M2011.1 397.6h4.6" stroke="#ff9556"/>
<path d="M2015.1 397.6h4.6" stroke="#ff8f53"/>
<path d="M2019.1 397.6h4.6" stroke="#ff8a50"/>
<path d="M2023.1 397.6h4.6" stroke="#ff844d"/>
<path d="M2027.1 397.6h4.6" stroke="#ff7f4b"/>
<path d="M2031.1 397.6h4.6" stroke="#ff7a49"/>
<path d="M1887.1 401.6h4.6" stroke="#2aff87"/>
<path d="M1891.1 401.6h4.6" stroke="#33ff87"/>
<path d="M1895.1 401.6h4.6" stroke="#3cff88"/>
<path d="M1899.1 401.6h4.6" stroke="#46ff89"/>
<path d="M1903.1 401.6h4.6" stroke="#4fff89"/>
<path d="M1907.1 401.6h4.6" stroke="#59ff8a"/>
<path d="M1911.1 401.6h4.6" stroke="#63ff8a"/>
<path d="M1915.1 401.6h4.6" stroke="#6dff8b"/>
<path d="M1919.1 401.6h4.6" stroke="#78ff8c"/>
<path d="M1923.1 401.6h4.6" stroke="#82ff8c"/>
<path d="M1927.1 401.6h4.6" stroke="#8dff8d"/>
<path d="M1931.1 401.6h4.6" stroke="#98ff8e"/>
<path d="M1935.1 401.6h4.6" stroke="#a4ff8e"/>
<path d="M1939.1 401.6h4.6" stroke="#afff8f"/>
<path d="M1943.1 401.6h4.6" stroke="#bbff90"/>
<path d="M1947.1 401.6h4.6" stroke="#c7ff91"/>
<path d="M1951.1 401.6h4.6" stroke="#d4ff92"/>
<path d="M1955.1 401.6h4.6" stroke="#e0ff92"/>
<path d="M1959.1 401.6h4.6" stroke="#edff93"/>
<path d="M1963.1 401.6h4.6" stroke="#fbff94"/>
<path d="M1967.1 401.6h4.6" stroke="#fff68f"/>
<path d="M1971.1 401.6h4.6" stroke="#ffea89"/>
<path d="M1975.1 401.6h4.6" stroke="#ffde83"/>
<path d="M1979.1 401.6h4.6" stroke="#ffd47e"/>
<path d="M1983.1 401.6h4.6" stroke="#ffca79"/>
<path d="M1987.1 401.6h4.6" stroke="#ffc074"/>
<path d="M1991.1 401.6h4.6" stroke="#ffb86f"/>
<path d="M1995.1 401.6h4.6" stroke="#ffb06b"/>
<path d="M1999.1 401.6h4.6" stroke="#ffa867"/>
<path d="M2003.1 401.6h4.6" stroke="#ffa164"/>
<path d="M2007.1 401.6h4.6" stroke="#ff9a60"/>
<path d="M2011.1 401.6h4.6" stroke="#ff945d"/>
<path d="M2015.1 401.6h4.6" stroke="#ff8e5a"/>
<path d="M2019.1 401.6h4.6" stroke="#ff8857"/>
<path d="M2023.1 401.6h4.6" stroke="#ff8354"/>
<path d="M2027.1 401.6h4.6" stroke="#ff7e51"/>
<path d="M2031.1 401.6h4.6" stroke="#ff794f"/>
<path d="M2035.1 401.6h4.6" stroke="#ff744c"/>
<path d="M1887.1 405.6h4.6" stroke="#29ff90"/>
<path d="M1891.1 405.6h4.6" stroke="#32ff91"/>
<path d="M1895.1 405.6h4.6" stroke="#3bff92"/>
<path d="M1899.1 405.6h4.6" stroke="#45ff92"/>
<path d="M1903.1 405.6h4.6" stroke="#4fff93"/>
<path d="M1907.1 405.6h4.6" stroke="#59ff94"/>
<path d="M1911.1 405.6h4.6" stroke="#63ff94"/>
<path d="M1915.1 405.6h4.6" stroke="#6dff95"/>
<path d="M1919.1 405.6h4.6" stroke="#78ff96"/>
<path d="M1923.1 405.6h4.6" stroke="#82ff97"/>
<path d="M1927.1 405.6h4.6" stroke="#8dff98"/>
<path d="M1931.1 405.6h4.6" stroke="#98ff98"/>
<path d="M1935.1 405.6h4.6" stroke="#a4ff99"/>
<path d="M1939.1 405.6h4.6" stroke="#b0ff9a"/>
<path d="M1943.1 405.6h4.6" stroke="#bcff9b"/>
<path d="M1947.1 405.6h4.6" stroke="#c8ff9c"/>
<path d="M1951.1 405.6h4.6" stroke="#d5ff9d"/>
<path d="M1955.1 405.6h4.6" stroke="#e1ff9e"/>
<path d="M1959.1 405.6h4.6" stroke="#efff9f"/>
<path d="M1963.1 405.6h4.6" stroke="#fcffa0"/>
<path d="M1967.1 405.6h4.6" stroke="#fff59a"/>
<path d="M1971.1 405.6h4.6" stroke="#ffe893"/>
<path d="M1975.1 405.6h4.6" stroke="#ffdd8d"/>
<path d="M1979.1 405.6h4.6" stroke="#ffd287"/>
<path d="M1983.1 405.6h4.6" stroke="#ffc881"/>
<path d="M1987.1 405.6h4.6" stroke="#ffbf7c"/>
<path d="M1991.1 405.6h4.6" stroke="#ffb778"/>
<path d="M1995.1 405.6h4.6" stroke="#ffae73"/>
<path d="M1999.1 405.6h4.6" stroke="#ffa76f"/>
<path d="M2003.1 405.6h4.6" stroke="#ffa06b"/>
<path d="M2007.1 405.6h4.6" stroke="#ff9967"/>
<path d="M2011.1 405.6h4.6" stroke="#ff9364"/>
<path d="M2015.1 405.6h4.6" stroke="#ff8d60"/>
<path d="M2019.1 405.6h4.6" stroke="#ff875d"/>
<path d="M2023.1 405.6h4.6" stroke="#ff825a"/>
<path d="M2027.1 405.6h4.6" stroke="#ff7d58"/>
<path d="M2031.1 405.6h4.6" stroke="#ff7855"/>
<path d="M2035.1 405.6h4.6" stroke="#ff7352"/>
<path d="M1887.1 409.6h4.6" stroke="#28ff9a"/>
<path d="M1891.1 409.6h4.6" stroke="#31ff9a"/>
<path d="M1895.1 409.6h4.6" stroke="#3bff9b"/>
<path d="M1899.1 409.6h4.6" stroke="#44ff9c"/>
<path d="M1903.1 409.6h4.6" stroke="#4eff9d"/>
<path d="M1907.1 409.6h4.6" stroke="#58ff9e"/>
<path d="M1911.1 409.6h4.6" stroke="#62ff9f"/>
<path d="M1915.1 409.6h4.6" stroke="#6dff9f"/>
<path d="M1919.1 409.6h4.6" stroke="#77ffa0"/>
<path d="M1923.1 409.6h4.6" stroke="#82ffa1"/>
<path d="M1927.1 409.6h4.6" stroke="#8dffa2"/>
<path d="M1931.1 409.6h4.6" stroke="#99ffa3"/>
<path d="M1935.1 409.6h4.6" stroke="#a4ffa4"/>
<path d="M1939.1 409.6h4.6" stroke="#b0ffa5"/>
<path d="M1943.1 409.6h4.6" stroke="#bcffa6"/>
<path d="M1947.1 409.6h4.6" stroke="#c9ffa7"/>
<path d="M1951.1 409.6h4.6" stroke="#d5ffa8"/>
<path d="M1955.1 409.6h4.6" stroke="#e2ffa9"/>
<path d="M1959.1 409.6h4.6" stroke="#f0ffaa"/>
<path d="M1963.1 409.6h4.6" stroke="#fdffab"/>
<path d="M1967.1 409.6h4.6" stroke="#fff3a5"/>
<path d="M1971.1 409.6h4.6" stroke="#ffe79d"/>
<path d="M1975.1 409.6h4.6" stroke="#ffdb97"/>
<path d="M1979.1 409.6h4.6" stroke="#ffd190"/>
<path d="M1983.1 409.6h4.6" stroke="#ffc78b"/>
<path d="M1987.1 409.6h4.6" stroke="#ffbe85"/>
<path d="M1991.1 409.6h4.6" stroke="#ffb580"/>
<path d="M1995.1 409.6h4.6" stroke="#ffad7b"/>
<path d="M1999.1 409.6h4.6" stroke="#ffa577"/>
<path d="M2003.1 409.6h4.6" stroke="#ff9e73"/>
<path d="M2007.1 409.6h4.6" stroke="#ff986f"/>
<path d="M2011.1 409.6h4.6" stroke="#ff916b"/>
<path d="M2015.1 409.6h4.6" stroke="#ff8b67"/>
<path d="M2019.1 409.6h4.6" stroke="#ff8664"/>
<path d="M2023.1 409.6h4.6" stroke="#ff8061"/>
<path d="M2027.1 409.6h4.6" stroke="#ff7b5e"/>
<path d="M2031.1 409.6h4.6" stroke="#ff765b"/>
<path d="M2035.1 409.6h4.6" stroke="#ff7258"/>
<path d="M1883.1 413.6h4.6" stroke="#1effa3"/>
<path d="M1887.1 413.6h4.6" stroke="#27ffa3"/>
<path d="M1891.1 413.6h4.6" stroke="#30ffa4"/>
<path d="M1895.1 413.6h4.6" stroke="#3affa5"/>
<path d="M1899.1 413.6h4.6" stroke="#43ffa6"/>
<path d="M1903.1 413.6h4.6" stroke="#4dffa7"/>
<path d="M1907.1 413.6h4.6" stroke="#57ffa8"/>
<path d="M1911.1 413.6h4.6" stroke="#62ffa9"/>
<path d="M1915.1 413.6h4.6" stroke="#6cffaa"/>
<path d="M1919.1 413.6h4.6" stroke="#77ffab"/>
<path d="M1923.1 413.6h4.6" stroke="#82ffac"/>
<path d="M1927.1 413.6h4.6" stroke="#8dffad"/>
<path d="M1931.1 413.6h4.6" stroke="#99ffae"/>
<path d="M1935.1 413.6h4.6" stroke="#a4ffaf"/>
<path d="M1939.1 413.6h4.6" stroke="#b0ffb0"/>
<path d="M1943.1 413.6h4.6" stroke="#bdffb1"/>
<path d="M1947.1 413.6h4.6" stroke="#c9ffb3"/>
<path d="M1951.1 413.6h4.6" stroke="#d6ffb4"/>
<path d="M1955.1 413.6h4.6" stroke="#e3ffb5"/>
<path d="M1959.1 413.6h4.6" stroke="#f1ffb6"/>
<path d="M1963.1 413.6h4.6" stroke="#ffffb8"/>
<path d="M1967.1 413.6h4.6" stroke="#fff2af"/>
<path d="M1971.1 413.6h4.6" stroke="#ffe6a8"/>
<path d="M1975.1 413.6h4.6" stroke="#ffdaa1"/>
<path d="M1979.1 413.6h4.6" stroke="#ffcf9a"/>
<path d="M1983.1 413.6h4.6" stroke="#ffc694"/>
<path d="M1987.1 413.6h4.6" stroke="#ffbc8e"/>
<path d="M1991.1 413.6h4.6" stroke="#ffb489"/>
<path d="M1995.1 413.6h4.6" stroke="#ffac83"/>
<path d="M1999.1 413.6h4.6" stroke="#ffa47f"/>
<path d="M2003.1 413.6h4.6" stroke="#ff9d7a"/>
<path d="M2007.1 413.6h4.6" stroke="#ff9676"/>
<path d="M2011.1 413.6h4.6" stroke="#ff9072"/>
<path d="M2015.1 413.6h4.6" stroke="#ff8a6e"/>
<path d="M2019.1 413.6h4.6" stroke="#ff846b"/>
<path d="M2023.1 413.6h4.6" stroke="#ff7f67"/>
<path d="M2027.1 413.6h4.6" stroke="#ff7a64"/>
<path d="M2031.1 413.6h4.6" stroke="#ff7561"/>
<path d="M2035.1 413.6h4.6" stroke="#ff705e"/>
<path d="M2039.1 413.6h4.6" stroke="#ff6c5c"/>
<path d="M1883.1 417.6h4.6" stroke="#1dffac"/>
<path d="M1887.1 417.6h4.6" stroke="#26ffad"/>
<path d="M1891.1 417.6h4.6" stroke="#2fffae"/>
<path d="M1895.1 417.6h4.6" stroke="#39ffaf"/>
<path d="M1899.1 417.6h4.6" stroke="#43ffb0"/>
<path d="M1903.1 417.6h4.6" stroke="#4dffb1"/>
<path d="M1907.1 417.6h4.6" stroke="#57ffb2"/>
<path d="M1911.1 417.6h4.6" stroke="#61ffb4"/>
<path d="M1915.1 417.6h4.6" stroke="#6cffb5"/>
<path d="M1919.1 417.6h4.6" stroke="#77ffb6"/>
<path d="M1923.1 417.6h4.6" stroke="#82ffb7"/>
<path d="M1927.1 417.6h4.6" stroke="#8dffb8"/>
<path d="M1931.1 417.6h4.6" stroke="#99ffb9"/>
<path d="M1935.1 417.6h4.6" stroke="#a5ffbb"/>
<path d="M1939.1 417.6h4.6" stroke="#b1ffbc"/>
<path d="M1943.1 417.6h4.6" stroke="#bdffbd"/>
<path d="M1947.1 417.6h4.6" stroke="#caffbe"/>
<path d="M1951.1 417.6h4.6" stroke="#d7ffc0"/>
<path d="M1955.1 417.6h4.6" stroke="#e4ffc1"/>
<path d="M1959.1 417.6h4.6" stroke="#f2ffc3"/>
<path d="M1963.1 417.6h4.6" stroke="#fffec3"/>
<path d="M1967.1 417.6h4.6" stroke="#fff1ba"/>
<path d="M1971.1 417.6h4.6" stroke="#ffe4b2"/>
<path d="M1975.1 417.6h4.6" stroke="#ffd9ab"/>
<path d="M1979.1 417.6h4.6" stroke="#ffcea3"/>
<path d="M1983.1 417.6h4.6" stroke="#ffc49d"/>
<path d="M1987.1 417.6h4.6" stroke="#ffbb97"/>
<path d="M1991.1 417.6h4.6" stroke="#ffb291"/>
<path d="M1995.1 417.6h4.6" stroke="#ffaa8c"/>
<path d="M1999.1 417.6h4.6" stroke="#ffa387"/>
<path d="M2003.1 417.6h4.6" stroke="#ff9c82"/>
<path d="M2007.1 417.6h4.6" stroke="#ff957e"/>
<path d="M2011.1 417.6h4.6" stroke="#ff8f79"/>
<path d="M2015.1 417.6h4.6" stroke="#ff8975"/>
<path d="M2019.1 417.6h4.6" stroke="#ff8372"/>
<path d="M2023.1 417.6h4.6" stroke="#ff7e6e"/>
<path d="M2027.1 417.6h4.6" stroke="#ff796b"/>
<path d="M2031.1 417.6h4.6" stroke="#ff7468"/>
<path d="M2035.1 417.6h4.6" stroke="#ff6f64"/>
<path d="M2039.1 417.6h4.6" stroke="#ff6b62"/>
<path d="M1883.1 421.6h4.6" stroke="#1cffb6"/>
<path d="M1887.1 421.6h4.6" stroke="#25ffb7"/>
<path d="M1891.1 421.6h4.6" stroke="#2effb9"/>
<path d="M1895.1 421.6h4.6" stroke="#38ffba"/>
<path d="M1899.1 421.6h4.6" stroke="#42ffbb"/>
<path d="M1903.1 421.6h4.6" stroke="#4cffbc"/>
<path d="M1907.1 421.6h4.6" stroke="#56ffbd"/>
<path d="M1911.1 421.6h4.6" stroke="#61ffbe"/>
<path d="M1915.1 421.6h4.6" stroke="#6bffc0"/>
<path d="M1919.1 421.6h4.6" stroke="#76ffc1"/>
<path d="M1923.1 421.6h4.6" stroke="#82ffc2"/>
<path d="M1927.1 421.6h4.6" stroke="#8dffc3"/>
<path d="M1931.1 421.6h4.6" stroke="#99ffc5"/>
<path d="M1935.1 421.6h4.6" stroke="#a5ffc6"/>
<path d="M1939.1 421.6h4.6" stroke="#b1ffc8"/>
<path d="M1943.1 421.6h4.6" stroke="#beffc9"/>
<path d="M1947.1 421.6h4.6" stroke="#cbffcb"/>
<path d="M1951.1 421.6h4.6" stroke="#d8ffcc"/>
<path d="M1955.1 421.6h4.6" stroke="#e5ffce"/>
<path d="M1959.1 421.6h4.6" stroke="#f3ffcf"/>
<path d="M1963.1 421.6h4.6" stroke="#fffdcf"/>
<path d="M1967.1 421.6h4.6" stroke="#ffefc6"/>
<path d="M1971.1 421.6h4.6" stroke="#ffe3bd"/>
<path d="M1975.1 421.6h4.6" stroke="#ffd7b5"/>
<path d="M1979.1 421.6h4.6" stroke="#ffcdad"/>
<path d="M1983.1 421.6h4.6" stroke="#ffc3a6"/>
<path d="M1987.1 421.6h4.6" stroke="#ffb9a0"/>
<path d="M1991.1 421.6h4.6" stroke="#ffb19a"/>
<path d="M1995.1 421.6h4.6" stroke="#ffa994"/>
<path d="M1999.1 421.6h4.6" stroke="#ffa18f"/>
<path d="M2003.1 421.6h4.6" stroke="#ff9a8a"/>
<path d="M2007.1 421.6h4.6" stroke="#ff9385"/>
<path d="M2011.1 421.6h4.6" stroke="#ff8d81"/>
<path d="M2015.1 421.6h4.6" stroke="#ff877d"/>
<path d="M2019.1 421.6h4.6" stroke="#ff8279"/>
<path d="M2023.1 421.6h4.6" stroke="#ff7c75"/>
<path d="M2027.1 421.6h4.6" stroke="#ff7771"/>
<path d="M2031.1 421.6h4.6" stroke="#ff726e"/>
<path d="M2035.1 421.6h4.6" stroke="#ff6e6b"/>
<path d="M2039.1 421.6h4.6" stroke="#ff6968"/>
<path d="M1883.1 425.6h4.6" stroke="#1affc1"/>
<path d="M1887.1 425.6h4.6" stroke="#24ffc2"/>
<path d="M1891.1 425.6h4.6" stroke="#2dffc3"/>
<path d="M1895.1 425.6h4.6" stroke="#37ffc4"/>
<path d="M1899.1 425.6h4.6" stroke="#41ffc5"/>
<path d="M1903.1 425.6h4.6" stroke="#4bffc7"/>
<path d="M1907.1 425.6h4.6" stroke="#56ffc8"/>
<path d="M1911.1 425.6h4.6" stroke="#60ffc9"/>
<path d="M1915.1 425.6h4.6" stroke="#6bffcb"/>
<path d="M1919.1 425.6h4.6" stroke="#76ffcc"/>
<path d="M1923.1 425.6h4.6" stroke="#81ffce"/>
<path d="M1927.1 425.6h4.6" stroke="#8dffcf"/>
<path d="M1931.1 425.6h4.6" stroke="#99ffd1"/>
<path d="M1935.1 425.6h4.6" stroke="#a5ffd2"/>
<path d="M1939.1 425.6h4.6" stroke="#b1ffd4"/>
<path d="M1943.1 425.6h4.6" stroke="#beffd5"/>
<path d="M1947.1 425.6h4.6" stroke="#cbffd7"/>
<path d="M1951.1 425.6h4.6" stroke="#d9ffd9"/>
<path d="M1955.1 425.6h4.6" stroke="#e6ffda"/>
<path d="M1959.1 425.6h4.6" stroke="#f4ffdc"/>
<path d="M1963.1 425.6h4.6" stroke="#fffbdb"/>
<path d="M1967.1 425.6h4.6" stroke="#ffeed1"/>
<path d="M1971.1 425.6h4.6" stroke="#ffe1c8"/>
<path d="M1975.1 425.6h4.6" stroke="#ffd6bf"/>
<path d="M1979.1 425.6h4.6" stroke="#ffcbb7"/>
<path d="M1983.1 425.6h4.6" stroke="#ffc1b0"/>
<path d="M1987.1 425.6h4.6" stroke="#ffb8a9"/>
<path d="M1991.1 425.6h4.6" stroke="#ffafa3"/>
<path d="M1995.1 425.6h4.6" stroke="#ffa79d"/>
<path d="M1999.1 425.6h4.6" stroke="#ffa097"/>
<path d="M2003.1 425.6h4.6" stroke="#ff9992"/>
<path d="M2007.1 425.6h4.6" stroke="#ff928d"/>
<path d="M2011.1 425.6h4.6" stroke="#ff8c88"/>
<path d="M2015.1 425.6h4.6" stroke="#ff8684"/>
<path d="M2019.1 425.6h4.6" stroke="#ff8080"/>
<path d="M2023.1 425.6h4.6" stroke="#ff7b7c"/>
<path d="M2027.1 425.6h4.6" stroke="#ff7678"/>
<path d="M2031.1 425.6h4.6" stroke="#ff7174"/>
<path d="M2035.1 425.6h4.6" stroke="#ff6c71"/>
<path d="M2039.1 425.6h4.6" stroke="#ff686e"/>
<path d="M1883.1 429.6h4.6" stroke="#19ffcb"/>
<path d="M1887.1 429.6h4.6" stroke="#23ffcc"/>
<path d="M1891.1 429.6h4.6" stroke="#2cffce"/>
<path d="M1895.1 429.6h4.6" stroke="#36ffcf"/>
<path d="M1899.1 429.6h4.6" stroke="#40ffd0"/>
<path d="M1903.1 429.6h4.6" stroke="#4affd2"/>
<path d="M1907.1 429.6h4.6" stroke="#55ffd3"/>
<path d="M1911.1 429.6h4.6" stroke="#60ffd5"/>
<path d="M1915.1 429.6h4.6" stroke="#6bffd6"/>
<path d="M1919.1 429.6h4.6" stroke="#76ffd8"/>
<path d="M1923.1 429.6h4.6" stroke="#81ffd9"/>
<path d="M1927.1 429.6h4.6" stroke="#8dffdb"/>
<path d="M1931.1 429.6h4.6" stroke="#99ffdd"/>
<path d="M1935.1 429.6h4.6" stroke="#a5ffde"/>
<path d="M1939.1 429.6h4.6" stroke="#b2ffe0"/>
<path d="M1943.1 429.6h4.6" stroke="#bfffe2"/>
<path d="M1947.1 429.6h4.6" stroke="#ccffe4"/>
<path d="M1951.1 429.6h4.6" stroke="#d9ffe6"/>
<path d="M1955.1 429.6h4.6" stroke="#e7ffe7"/>
<path d="M1959.1 429.6h4.6" stroke="#f5ffe9"/>
<path d="M1963.1 429.6h4.6" stroke="#fffae7"/>
<path d="M1967.1 429.6h4.6" stroke="#ffecdc"/>
<path d="M1971.1 429.6h4.6" stroke="#ffe0d2"/>
<path d="M1975.1 429.6h4.6" stroke="#ffd4c9"/>
<path d="M1979.1 429.6h4.6" stroke="#ffcac1"/>
<path d="M1983.1 429.6h4.6" stroke="#ffc0b9"/>
<path d="M1987.1 429.6h4.6" stroke="#ffb7b2"/>
<path d="M1991.1 429.6h4.6" stroke="#ffaeab"/>
<path d="M1995.1 429.6h4.6" stroke="#ffa6a5"/>
<path d="M1999.1 429.6h4.6" stroke="#ff9e9f"/>
<path d="M2003.1 429.6h4.6" stroke="#ff979a"/>
<path d="M2007.1 429.6h4.6" stroke="#ff9194"/>
<path d="M2011.1 429.6h4.6" stroke="#ff8a90"/>
<path d="M2015.1 429.6h4.6" stroke="#ff848b"/>
<path d="M2019.1 429.6h4.6" stroke="#ff7f87"/>
<path d="M2023.1 429.6h4.6" stroke="#ff7a82"/>
<path d="M2027.1 429.6h4.6" stroke="#ff747e"/>
<path d="M2031.1 429.6h4.6" stroke="#ff707b"/>
<path d="M2035.1 429.6h4.6" stroke="#ff6b77"/>
<path d="M2039.1 429.6h4.6" stroke="#ff6774"/>
<path d="M1883.1 433.6h4.6" stroke="#18ffd6"/>
<path d="M1887.1 433.6h4.6" stroke="#21ffd7"/>
<path d="M1891.1 433.6h4.6" stroke="#2bffd8"/>
<path d="M1895.1 433.6h4.6" stroke="#35ffda"/>
<path d="M1899.1 433.6h4.6" stroke="#3fffdb"/>
<path d="M1903.1 433.6h4.6" stroke="#4affdd"/>
<path d="M1907.1 433.6h4.6" stroke="#54ffdf"/>
<path d="M1911.1 433.6h4.6" stroke="#5fffe0"/>
<path d="M1915.1 433.6h4.6" stroke="#6affe2"/>
<path d="M1919.1 433.6h4.6" stroke="#75ffe4"/>
<path d="M1923.1 433.6h4.6" stroke="#81ffe5"/>
<path d="M1927.1 433.6h4.6" stroke="#8dffe7"/>
<path d="M1931.1 433.6h4.6" stroke="#99ffe9"/>
<path d="M1935.1 433.6h4.6" stroke="#a5ffeb"/>
<path d="M1939.1 433.6h4.6" stroke="#b2ffed"/>
<path d="M1943.1 433.6h4.6" stroke="#bfffef"/>
<path d="M1947.1 433.6h4.6" stroke="#cdfff1"/>
<path d="M1951.1 433.6h4.6" stroke="#dafff3"/>
<path d="M1955.1 433.6h4.6" stroke="#e8fff5"/>
<path d="M1959.1 433.6h4.6" stroke="#f7fff7"/>
<path d="M1963.1 433.6h4.6" stroke="#fff9f3"/>
<path d="M1967.1 433.6h4.6" stroke="#ffebe8"/>
<path d="M1971.1 433.6h4.6" stroke="#ffdedd"/>
<path d="M1975.1 433.6h4.6" stroke="#ffd3d4"/>
<path d="M1979.1 433.6h4.6" stroke="#ffc8cb"/>
<path d="M1983.1 433.6h4.6" stroke="#ffbec3"/>
<path d="M1987.1 433.6h4.6" stroke="#ffb5bb"/>
<path d="M1991.1 433.6h4.6" stroke="#ffacb4"/>
<path d="M1995.1 433.6h4.6" stroke="#ffa4ae"/>
<path d="M1999.1 433.6h4.6" stroke="#ff9da8"/>
<path d="M2003.1 433.6h4.6" stroke="#ff96a2"/>
<path d="M2007.1 433.6h4.6" stroke="#ff8f9c"/>
<path d="M2011.1 433.6h4.6" stroke="#ff8997"/>
<path d="M2015.1 433.6h4.6" stroke="#ff8392"/>
<path d="M2019.1 433.6h4.6" stroke="#ff7d8e"/>
<path d="M2023.1 433.6h4.6" stroke="#ff7889"/>
<path d="M2027.1 433.6h4.6" stroke="#ff7385"/>
<path d="M2031.1 433.6h4.6" stroke="#ff6e81"/>
<path d="M2035.1 433.6h4.6" stroke="#ff6a7d"/>
<path d="M2039.1 433.6h4.6" stroke="#ff657a"/>
<path d="M1883.1 437.6h4.6" stroke="#17ffe0"/>
<path d="M1887.1 437.6h4.6" stroke="#20ffe2"/>
<path d="M1891.1 437.6h4.6" stroke="#2affe3"/>
<path d="M1895.1 437.6h4.6" stroke="#34ffe5"/>
<path d="M1899.1 437.6h4.6" stroke="#3effe7"/>
<path d="M1903.1 437.6h4.6" stroke="#49ffe8"/>
<path d="M1907.1 437.6h4.6" stroke="#54ffea"/>
<path d="M1911.1 437.6h4.6" stroke="#5effec"/>
<path d="M1915.1 437.6h4.6" stroke="#6affee"/>
<path d="M1919.1 437.6h4.6" stroke="#75fff0"/>
<path d="M1923.1 437.6h4.6" stroke="#81fff2"/>
<path d="M1927.1 437.6h4.6" stroke="#8dfff4"/>
<path d="M1931.1 437.6h4.6" stroke="#99fff6"/>
<path d="M1935.1 437.6h4.6" stroke="#a6fff8"/>
<path d="M1939.1 437.6h4.6" stroke="#b3fffa"/>
<path d="M1943.1 437.6h4.6" stroke="#c0fffc"/>
<path d="M1947.1 437.6h4.6" stroke="#cdfffe"/>
<path d="M1951.1 437.6h4.6" stroke="#dafeff"/>
<path d="M1955.1 437.6h4.6" stroke="#e6fbff"/>
<path d="M1959.1 437.6h4.6" stroke="#f2f9ff"/>
<path d="M1963.1 437.6h4.6" stroke="#fff7ff"/>
<path d="M1967.1 437.6h4.6" stroke="#ffeaf3"/>
<path d="M1971.1 437.6h4.6" stroke="#ffdde9"/>
<path d="M1975.1 437.6h4.6" stroke="#ffd1df"/>
<path d="M1979.1 437.6h4.6" stroke="#ffc7d5"/>
<path d="M1983.1 437.6h4.6" stroke="#ffbdcd"/>
<path d="M1987.1 437.6h4.6" stroke="#ffb4c5"/>
<path d="M1991.1 437.6h4.6" stroke="#ffabbd"/>
<path d="M1995.1 437.6h4.6" stroke="#ffa3b6"/>
<path d="M1999.1 437.6h4.6" stroke="#ff9bb0"/>
<path d="M2003.1 437.6h4.6" stroke="#ff94aa"/>
<path d="M2007.1 437.6h4.6" stroke="#ff8ea4"/>
<path d="M2011.1 437.6h4.6" stroke="#ff879f"/>
<path d="M2015.1 437.6h4.6" stroke="#ff829a"/>
<path d="M2019.1 437.6h4.6" stroke="#ff7c95"/>
<path d="M2023.1 437.6h4.6" stroke="#ff7790"/>
<path d="M2027.1 437.6h4.6" stroke="#ff728c"/>
<path d="M2031.1 437.6h4.6" stroke="#ff6d88"/>
<path d="M2035.1 437.6h4.6" stroke="#ff6884"/>
<path d="M2039.1 437.6h4.6" stroke="#ff6480"/>
<path d="M1883.1 441.6h4.6" stroke="#15ffeb"/>
<path d="M1887.1 441.6h4.6" stroke="#1fffed"/>
<path d="M1891.1 441.6h4.6" stroke="#29ffef"/>
<path d="M1895.1 441.6h4.6" stroke="#33fff1"/>
<path d="M1899.1 441.6h4.6" stroke="#3dfff2"/>
<path d="M1903.1 441.6h4.6" stroke="#48fff4"/>
<path d="M1907.1 441.6h4.6" stroke="#53fff6"/>
<path d="M1911.1 441.6h4.6" stroke="#5efff8"/>
<path d="M1915.1 441.6h4.6" stroke="#69fffa"/>
<path d="M1919.1 441.6h4.6" stroke="#75fffc"/>
<path d="M1923.1 441.6h4.6" stroke="#81fffe"/>
<path d="M1927.1 441.6h4.6" stroke="#8cfeff"/>
<path d="M1931.1 441.6h4.6" stroke="#97fcff"/>
<path d="M1935.1 441.6h4.6" stroke="#a2f9ff"/>
<path d="M1939.1 441.6h4.6" stroke="#aef7ff"/>
<path d="M1943.1 441.6h4.6" stroke="#b9f5ff"/>
<path d="M1947.1 441.6h4.6" stroke="#c4f3ff"/>
<path d="M1951.1 441.6h4.6" stroke="#d0f1ff"/>
<path d="M1955.1 441.6h4.6" stroke="#dbeeff"/>
<path d="M1959.1 441.6h4.6" stroke="#e7ecff"/>
<path d="M1963.1 441.6h4.6" stroke="#f3eaff"/>
<path d="M1967.1 441.6h4.6" stroke="#ffe8ff"/>
<path d="M1971.1 441.6h4.6" stroke="#ffdbf4"/>
<path d="M1975.1 441.6h4.6" stroke="#ffd0e9"/>
<path d="M1979.1 441.6h4.6" stroke="#ffc5e0"/>
<path d="M1983.1 441.6h4.6" stroke="#ffbbd7"/>
<path d="M1987.1 441.6h4.6" stroke="#ffb2ce"/>
<path d="M1991.1 441.6h4.6" stroke="#ffa9c7"/>
<path d="M1995.1 441.6h4.6" stroke="#ffa1bf"/>
<path d="M1999.1 441.6h4.6" stroke="#ff9ab8"/>
<path d="M2003.1 441.6h4.6" stroke="#ff93b2"/>
<path d="M2007.1 441.6h4.6" stroke="#ff8cac"/>
<path d="M2011.1 441.6h4.6" stroke="#ff86a6"/>
<path d="M2015.1 441.6h4.6" stroke="#ff80a1"/>
<path d="M2019.1 441.6h4.6" stroke="#ff7b9c"/>
<path d="M2023.1 441.6h4.6" stroke="#ff7597"/>
<path d="M2027.1 441.6h4.6" stroke="#ff7093"/>
<path d="M2031.1 441.6h4.6" stroke="#ff6c8e"/>
<path d="M2035.1 441.6h4.6" stroke="#ff678a"/>
<path d="M2039.1 441.6h4.6" stroke="#ff6386"/>
<path d="M1883.1 445.6h4.6" stroke="#14fff7"/>
<path d="M1887.1 445.6h4.6" stroke="#1efff8"/>
<path d="M1891.1 445.6h4.6" stroke="#28fffa"/>
<path d="M1895.1 445.6h4.6" stroke="#32fffc"/>
<path d="M1899.1 445.6h4.6" stroke="#3dfffe"/>
<path d="M1903.1 445.6h4.6" stroke="#47feff"/>
<path d="M1907.1 445.6h4.6" stroke="#51fcff"/>
<path d="M1911.1 445.6h4.6" stroke="#5bfaff"/>
<path d="M1915.1 445.6h4.6" stroke="#66f8ff"/>
<path d="M1919.1 445.6h4.6" stroke="#70f6ff"/>
<path d="M1923.1 445.6h4.6" stroke="#7bf4ff"/>
<path d="M1927.1 445.6h4.6" stroke="#85f1ff"/>
<path d="M1931.1 445.6h4.6" stroke="#90efff"/>
<path d="M1935.1 445.6h4.6" stroke="#9bedff"/>
<path d="M1939.1 445.6h4.6" stroke="#a5ebff"/>
<path d="M1943.1 445.6h4.6" stroke="#b0e9ff"/>
<path d="M1947.1 445.6h4.6" stroke="#bbe7ff"/>
<path d="M1951.1 445.6h4.6" stroke="#c6e5ff"/>
<path d="M1955.1 445.6h4.6" stroke="#d1e2ff"/>
<path d="M1959.1 445.6h4.6" stroke="#dde0ff"/>
<path d="M1963.1 445.6h4.6" stroke="#e8deff"/>
<path d="M1967.1 445.6h4.6" stroke="#f3dcff"/>
<path d="M1971.1 445.6h4.6" stroke="#ffdaff"/>
<path d="M1975.1 445.6h4.6" stroke="#ffcef4"/>
<path d="M1979.1 445.6h4.6" stroke="#ffc4ea"/>
<path d="M1983.1 445.6h4.6" stroke="#ffbae1"/>
<path d="M1987.1 445.6h4.6" stroke="#ffb0d8"/>
<path d="M1991.1 445.6h4.6" stroke="#ffa8d0"/>
<path d="M1995.1 445.6h4.6" stroke="#ffa0c8"/>
<path d="M1999.1 445.6h4.6" stroke="#ff98c1"/>
<path d="M2003.1 445.6h4.6" stroke="#ff91ba"/>
<path d="M2007.1 445.6h4.6" stroke="#ff8bb4"/>
<path d="M2011.1 445.6h4.6" stroke="#ff85ae"/>
<path d="M2015.1 445.6h4.6" stroke="#ff7fa8"/>
<path d="M2019.1 445.6h4.6" stroke="#ff79a3"/>
<path d="M2023.1 445.6h4.6" stroke="#ff749e"/>
<path d="M2027.1 445.6h4.6" stroke="#ff6f99"/>
<path d="M2031.1 445.6h4.6" stroke="#ff6a95"/>
<path d="M2035.1 445.6h4.6" stroke="#ff6691"/>
<path d="M2039.1 445.6h4.6" stroke="#ff618d"/>
<path d="M1883.1 449.6h4.6" stroke="#13fcff"/>
<path d="M1887.1 449.6h4.6" stroke="#1cfaff"/>
<path d="M1891.1 449.6h4.6" stroke="#26f8ff"/>
<path d="M1895.1 449.6h4.6" stroke="#2ff6ff"/>
<path d="M1899.1 449.6h4.6" stroke="#39f4ff"/>
<path d="M1903.1 449.6h4.6" stroke="#43f2ff"/>
<path d="M1907.1 449.6h4.6" stroke="#4df0ff"/>
<path d="M1911.1 449.6h4.6" stroke="#57eeff"/>
<path d="M1915.1 449.6h4.6" stroke="#61ecff"/>
<path d="M1919.1 449.6h4.6" stroke="#6beaff"/>
<path d="M1923.1 449.6h4.6" stroke="#75e8ff"/>
<path d="M1927.1 449.6h4.6" stroke="#7fe6ff"/>
<path d="M1931.1 449.6h4.6" stroke="#89e4ff"/>
<path d="M1935.1 449.6h4.6" stroke="#93e2ff"/>
<path d="M1939.1 449.6h4.6" stroke="#9ee0ff"/>
<path d="M1943.1 449.6h4.6" stroke="#a8deff"/>
<path d="M1947.1 449.6h4.6" stroke="#b3dcff"/>
<path d="M1951.1 449.6h4.6" stroke="#bddaff"/>
<path d="M1955.1 449.6h4.6" stroke="#c8d7ff"/>
<path d="M1959.1 449.6h4.6" stroke="#d3d5ff"/>
<path d="M1963.1 449.6h4.6" stroke="#ded3ff"/>
<path d="M1967.1 449.6h4.6" stroke="#e9d1ff"/>
<path d="M1971.1 449.6h4.6" stroke="#f3cfff"/>
<path d="M1975.1 449.6h4.6" stroke="#ffccff"/>
<path d="M1979.1 449.6h4.6" stroke="#ffc2f5"/>
<path d="M1983.1 449.6h4.6" stroke="#ffb8eb"/>
<path d="M1987.1 449.6h4.6" stroke="#ffafe2"/>
<path d="M1991.1 449.6h4.6" stroke="#ffa6d9"/>
<path d="M1995.1 449.6h4.6" stroke="#ff9ed1"/>
<path d="M1999.1 449.6h4.6" stroke="#ff97ca"/>
<path d="M2003.1 449.6h4.6" stroke="#ff90c3"/>
<path d="M2007.1 449.6h4.6" stroke="#ff89bc"/>
<path d="M2011.1 449.6h4.6" stroke="#ff83b6"/>
<path d="M2015.1 449.6h4.6" stroke="#ff7db0"/>
<path d="M2019.1 449.6h4.6" stroke="#ff78ab"/>
<path d="M2023.1 449.6h4.6" stroke="#ff72a5"/>
<path d="M2027.1 449.6h4.6" stroke="#ff6da0"/>
<path d="M2031.1 449.6h4.6" stroke="#ff699c"/>
<path d="M2035.1 449.6h4.6" stroke="#ff6497"/>
<path d="M2039.1 449.6h4.6" stroke="#ff6093"/>
<path d="M1883.1 453.6h4.6" stroke="#10f1ff"/>
<path d="M1887.1 453.6h4.6" stroke="#1aefff"/>
<path d="M1891.1 453.6h4.6" stroke="#23edff"/>
<path d="M1895.1 453.6h4.6" stroke="#2cebff"/>
<path d="M1899.1 453.6h4.6" stroke="#36e9ff"/>
<path d="M1903.1 453.6h4.6" stroke="#3fe7ff"/>
<path d="M1907.1 453.6h4.6" stroke="#49e5ff"/>
<path d="M1911.1 453.6h4.6" stroke="#52e3ff"/>
<path d="M1915.1 453.6h4.6" stroke="#5ce1ff"/>
<path d="M1919.1 453.6h4.6" stroke="#65e0ff"/>
<path d="M1923.1 453.6h4.6" stroke="#6fdeff"/>
<path d="M1927.1 453.6h4.6" stroke="#79dbff"/>
<path d="M1931.1 453.6h4.6" stroke="#83d9ff"/>
<path d="M1935.1 453.6h4.6" stroke="#8dd7ff"/>
<path d="M1939.1 453.6h4.6" stroke="#97d5ff"/>
<path d="M1943.1 453.6h4.6" stroke="#a1d3ff"/>
<path d="M1947.1 453.6h4.6" stroke="#abd1ff"/>
<path d="M1951.1 453.6h4.6" stroke="#b5cfff"/>
<path d="M1955.1 453.6h4.6" stroke="#bfcdff"/>
<path d="M1959.1 453.6h4.6" stroke="#cacbff"/>
<path d="M1963.1 453.6h4.6" stroke="#d4c9ff"/>
<path d="M1967.1 453.6h4.6" stroke="#dfc7ff"/>
<path d="M1971.1 453.6h4.6" stroke="#e9c4ff"/>
<path d="M1975.1 453.6h4.6" stroke="#f4c2ff"/>
<path d="M1979.1 453.6h4.6" stroke="#fec0ff"/>
<path d="M1983.1 453.6h4.6" stroke="#ffb7f5"/>
<path d="M1987.1 453.6h4.6" stroke="#ffadec"/>
<path d="M1991.1 453.6h4.6" stroke="#ffa5e3"/>
<path d="M1995.1 453.6h4.6" stroke="#ff9dda"/>
<path d="M1999.1 453.6h4.6" stroke="#ff95d2"/>
<path d="M2003.1 453.6h4.6" stroke="#ff8ecb"/>
<path d="M2007.1 453.6h4.6" stroke="#ff88c4"/>
<path d="M2011.1 453.6h4.6" stroke="#ff82be"/>
<path d="M2015.1 453.6h4.6" stroke="#ff7cb8"/>
<path d="M2019.1 453.6h4.6" stroke="#ff76b2"/>
<path d="M2023.1 453.6h4.6" stroke="#ff71ad"/>
<path d="M2027.1 453.6h4.6" stroke="#ff6ca7"/>
<path d="M2031.1 453.6h4.6" stroke="#ff67a2"/>
<path d="M2035.1 453.6h4.6" stroke="#ff639e"/>
<path d="M2039.1 453.6h4.6" stroke="#ff5f99"/>
<path d="M1883.1 457.6h4.6" stroke="#0ee7ff"/>
<path d="M1887.1 457.6h4.6" stroke="#17e5ff"/>
<path d="M1891.1 457.6h4.6" stroke="#20e3ff"/>
<path d="M1895.1 457.6h4.6" stroke="#29e1ff"/>
<path d="M1899.1 457.6h4.6" stroke="#32dfff"/>
<path d="M1903.1 457.6h4.6" stroke="#3cddff"/>
<path d="M1907.1 457.6h4.6" stroke="#45dbff"/>
<path d="M1911.1 457.6h4.6" stroke="#4ed9ff"/>
<path d="M1915.1 457.6h4.6" stroke="#57d7ff"/>
<path d="M1919.1 457.6h4.6" stroke="#61d6ff"/>
<path d="M1923.1 457.6h4.6" stroke="#6ad4ff"/>
<path d="M1927.1 457.6h4.6" stroke="#73d2ff"/>
<path d="M1931.1 457.6h4.6" stroke="#7dd0ff"/>
<path d="M1935.1 457.6h4.6" stroke="#87ceff"/>
<path d="M1939.1 457.6h4.6" stroke="#90ccff"/>
<path d="M1943.1 457.6h4.6" stroke="#9acaff"/>
<path d="M1947.1 457.6h4.6" stroke="#a4c8ff"/>
<path d="M1951.1 457.6h4.6" stroke="#aec5ff"/>
<path d="M1955.1 457.6h4.6" stroke="#b7c3ff"/>
<path d="M1959.1 457.6h4.6" stroke="#c1c1ff"/>
<path d="M1963.1 457.6h4.6" stroke="#cbbfff"/>
<path d="M1967.1 457.6h4.6" stroke="#d5bdff"/>
<path d="M1971.1 457.6h4.6" stroke="#e0bbff"/>
<path d="M1975.1 457.6h4.6" stroke="#eab9ff"/>
<path d="M1979.1 457.6h4.6" stroke="#f4b7ff"/>
<path d="M1983.1 457.6h4.6" stroke="#feb5ff"/>
<path d="M1987.1 457.6h4.6" stroke="#ffacf6"/>
<path d="M1991.1 457.6h4.6" stroke="#ffa3ec"/>
<path d="M1995.1 457.6h4.6" stroke="#ff9be3"/>
<path d="M1999.1 457.6h4.6" stroke="#ff94db"/>
<path d="M2003.1 457.6h4.6" stroke="#ff8dd4"/>
<path d="M2007.1 457.6h4.6" stroke="#ff86cc"/>
<path d="M2011.1 457.6h4.6" stroke="#ff80c6"/>
<path d="M2015.1 457.6h4.6" stroke="#ff7abf"/>
<path d="M2019.1 457.6h4.6" stroke="#ff75b9"/>
<path d="M2023.1 457.6h4.6" stroke="#ff6fb4"/>
<path d="M2027.1 457.6h4.6" stroke="#ff6bae"/>
<path d="M2031.1 457.6h4.6" stroke="#ff66a9"/>
<path d="M2035.1 457.6h4.6" stroke="#ff61a4"/>
<path d="M2039.1 457.6h4.6" stroke="#ff5da0"/>
<path d="M1887.1 461.6h4.6" stroke="#15dbff"/>
<path d="M1891.1 461.6h4.6" stroke="#1ed9ff"/>
<path d="M1895.1 461.6h4.6" stroke="#27d8ff"/>
<path d="M1899.1 461.6h4.6" stroke="#2fd6ff"/>
<path d="M1903.1 461.6h4.6" stroke="#38d4ff"/>
<path d="M1907.1 461.6h4.6" stroke="#41d2ff"/>
<path d="M1911.1 461.6h4.6" stroke="#4ad0ff"/>
<path d="M1915.1 461.6h4.6" stroke="#53ceff"/>
<path d="M1919.1 461.6h4.6" stroke="#5cccff"/>
<path d="M1923.1 461.6h4.6" stroke="#65caff"/>
<path d="M1927.1 461.6h4.6" stroke="#6ec8ff"/>
<path d="M1931.1 461.6h4.6" stroke="#78c6ff"/>
<path d="M1935.1 461.6h4.6" stroke="#81c4ff"/>
<path d="M1939.1 461.6h4.6" stroke="#8ac2ff"/>
<path d="M1943.1 461.6h4.6" stroke="#93c0ff"/>
<path d="M1947.1 461.6h4.6" stroke="#9dbeff"/>
<path d="M1951.1 461.6h4.6" stroke="#a6bcff"/>
<path d="M1955.1 461.6h4.6" stroke="#b0baff"/>
<path d="M1959.1 461.6h4.6" stroke="#b9b8ff"/>
<path d="M1963.1 461.6h4.6" stroke="#c3b6ff"/>
<path d="M1967.1 461.6h4.6" stroke="#cdb4ff"/>
<path d="M1971.1 461.6h4.6" stroke="#d7b2ff"/>
<path d="M1975.1 461.6h4.6" stroke="#e1b0ff"/>
<path d="M1979.1 461.6h4.6" stroke="#eaaeff"/>
<path d="M1983.1 461.6h4.6" stroke="#f4acff"/>
<path d="M1987.1 461.6h4.6" stroke="#feaaff"/>
<path d="M1991.1 461.6h4.6" stroke="#ffa2f6"/>
<path d="M1995.1 461.6h4.6" stroke="#ff9aed"/>
<path d="M1999.1 461.6h4.6" stroke="#ff92e4"/>
<path d="M2003.1 461.6h4.6" stroke="#ff8bdc"/>
<path d="M2007.1 461.6h4.6" stroke="#ff85d5"/>
<path d="M2011.1 461.6h4.6" stroke="#ff7ece"/>
<path d="M2015.1 461.6h4.6" stroke="#ff79c7"/>
<path d="M2019.1 461.6h4.6" stroke="#ff73c1"/>
<path d="M2023.1 461.6h4.6" stroke="#ff6ebb"/>
<path d="M2027.1 461.6h4.6" stroke="#ff69b5"/>
<path d="M2031.1 461.6h4.6" stroke="#ff64b0"/>
<path d="M2035.1 461.6h4.6" stroke="#ff60ab"/>
<path d="M1887.1 465.6h4.6" stroke="#13d2ff"/>
<path d="M1891.1 465.6h4.6" stroke="#1cd0ff"/>
<path d="M1895.1 465.6h4.6" stroke="#24cfff"/>
<path d="M1899.1 465.6h4.6" stroke="#2dcdff"/>
<path d="M1903.1 465.6h4.6" stroke="#35cbff"/>
<path d="M1907.1 465.6h4.6" stroke="#3ec9ff"/>
<path d="M1911.1 465.6h4.6" stroke="#46c7ff"/>
<path d="M1915.1 465.6h4.6" stroke="#4fc5ff"/>
<path d="M1919.1 465.6h4.6" stroke="#58c3ff"/>
<path d="M1923.1 465.6h4.6" stroke="#61c2ff"/>
<path d="M1927.1 465.6h4.6" stroke="#69c0ff"/>
<path d="M1931.1 465.6h4.6" stroke="#72beff"/>
<path d="M1935.1 465.6h4.6" stroke="#7bbcff"/>
<path d="M1939.1 465.6h4.6" stroke="#84baff"/>
<path d="M1943.1 465.6h4.6" stroke="#8db8ff"/>
<path d="M1947.1 465.6h4.6" stroke="#96b6ff"/>
<path d="M1951.1 465.6h4.6" stroke="#a0b4ff"/>
<path d="M1955.1 465.6h4.6" stroke="#a9b2ff"/>
<path d="M1959.1 465.6h4.6" stroke="#b2b0ff"/>
<path d="M1963.1 465.6h4.6" stroke="#bbaeff"/>
<path d="M1967.1 465.6h4.6" stroke="#c5acff"/>
<path d="M1971.1 465.6h4.6" stroke="#ceaaff"/>
<path d="M1975.1 465.6h4.6" stroke="#d8a8ff"/>
<path d="M1979.1 465.6h4.6" stroke="#e1a6ff"/>
<path d="M1983.1 465.6h4.6" stroke="#eba4ff"/>
<path d="M1987.1 465.6h4.6" stroke="#f5a2ff"/>
<path d="M1991.1 465.6h4.6" stroke="#fea0ff"/>
<path d="M1995.1 465.6h4.6" stroke="#ff98f6"/>
<path d="M1999.1 465.6h4.6" stroke="#ff91ed"/>
<path d="M2003.1 465.6h4.6" stroke="#ff8ae5"/>
<path d="M2007.1 465.6h4.6" stroke="#ff83dd"/>
<path d="M2011.1 465.6h4.6" stroke="#ff7dd6"/>
<path d="M2015.1 465.6h4.6" stroke="#ff77cf"/>
<path d="M2019.1 465.6h4.6" stroke="#ff72c9"/>
<path d="M2023.1 465.6h4.6" stroke="#ff6dc2"/>
<path d="M2027.1 465.6h4.6" stroke="#ff68bd"/>
<path d="M2031.1 465.6h4.6" stroke="#ff63b7"/>
<path d="M2035.1 465.6h4.6" stroke="#ff5fb2"/>
<path d="M1887.1 469.6h4.6" stroke="#11caff"/>
<path d="M1891.1 469.6h4.6" stroke="#1ac8ff"/>
<path d="M1895.1 469.6h4.6" stroke="#22c6ff"/>
<path d="M1899.1 469.6h4.6" stroke="#2ac4ff"/>
<path d="M1903.1 469.6h4.6" stroke="#32c3ff"/>
<path d="M1907.1 469.6h4.6" stroke="#3bc1ff"/>
<path d="M1911.1 469.6h4.6" stroke="#43bfff"/>
<path d="M1915.1 469.6h4.6" stroke="#4bbdff"/>
<path d="M1919.1 469.6h4.6" stroke="#54bbff"/>
<path d="M1923.1 469.6h4.6" stroke="#5cb9ff"/>
<path d="M1927.1 469.6h4.6" stroke="#65b7ff"/>
<path d="M1931.1 469.6h4.6" stroke="#6eb6ff"/>
<path d="M1935.1 469.6h4.6" stroke="#76b4ff"/>
<path d="M1939.1 469.6h4.6" stroke="#7fb2ff"/>
<path d="M1943.1 469.6h4.6" stroke="#88b0ff"/>
<path d="M1947.1 469.6h4.6" stroke="#90aeff"/>
<path d="M1951.1 469.6h4.6" stroke="#99acff"/>
<path d="M1955.1 469.6h4.6" stroke="#a2aaff"/>
<path d="M1959.1 469.6h4.6" stroke="#aba8ff"/>
<path d="M1963.1 469.6h4.6" stroke="#b4a6ff"/>
<path d="M1967.1 469.6h4.6" stroke="#bda4ff"/>
<path d="M1971.1 469.6h4.6" stroke="#c6a2ff"/>
<path d="M1975.1 469.6h4.6" stroke="#d0a0ff"/>
<path d="M1979.1 469.6h4.6" stroke="#d99eff"/>
<path d="M1983.1 469.6h4.6" stroke="#e29cff"/>
<path d="M1987.1 469.6h4.6" stroke="#eb9aff"/>
<path d="M1991.1 469.6h4.6" stroke="#f598ff"/>
<path d="M1995.1 469.6h4.6" stroke="#fe96ff"/>
<path d="M1999.1 469.6h4.6" stroke="#ff8ff6"/>
<path d="M2003.1 469.6h4.6" stroke="#ff88ee"/>
<path d="M2007.1 469.6h4.6" stroke="#ff81e6"/>
<path d="M2011.1 469.6h4.6" stroke="#ff7bde"/>
<path d="M2015.1 469.6h4.6" stroke="#ff76d7"/>
<path d="M2019.1 469.6h4.6" stroke="#ff70d0"/>
<path d="M2023.1 469.6h4.6" stroke="#ff6bca"/>
<path d="M2027.1 469.6h4.6" stroke="#ff66c4"/>
<path d="M2031.1 469.6h4.6" stroke="#ff62be"/>
<path d="M2035.1 469.6h4.6" stroke="#ff5db9"/>
<path d="M1891.1 473.6h4.6" stroke="#18c0ff"/>
<path d="M1895.1 473.6h4.6" stroke="#1fbeff"/>
<path d="M1899.1 473.6h4.6" stroke="#27bcff"/>
<path d="M1903.1 473.6h4.6" stroke="#30bbff"/>
<path d="M1907.1 473.6h4.6" stroke="#38b9ff"/>
<path d="M1911.1 473.6h4.6" stroke="#40b7ff"/>
<path d="M1915.1 473.6h4.6" stroke="#48b5ff"/>
<path d="M1919.1 473.6h4.6" stroke="#50b3ff"/>
<path d="M1923.1 473.6h4.6" stroke="#58b2ff"/>
<path d="M1927.1 473.6h4.6" stroke="#61b0ff"/>
<path d="M1931.1 473.6h4.6" stroke="#69aeff"/>
<path d="M1935.1 473.6h4.6" stroke="#71acff"/>
<path d="M1939.1 473.6h4.6" stroke="#7aaaff"/>
<path d="M1943.1 473.6h4.6" stroke="#82a8ff"/>
<path d="M1947.1 473.6h4.6" stroke="#8ba6ff"/>
<path d="M1951.1 473.6h4.6" stroke="#93a5ff"/>
<path d="M1955.1 473.6h4.6" stroke="#9ca3ff"/>
<path d="M1959.1 473.6h4.6" stroke="#a5a1ff"/>
<path d="M1963.1 473.6h4.6" stroke="#ad9fff"/>
<path d="M1967.1 473.6h4.6" stroke="#b69dff"/>
<path d="M1971.1 473.6h4.6" stroke="#bf9bff"/>
<path d="M1975.1 473.6h4.6" stroke="#c899ff"/>
<path d="M1979.1 473.6h4.6" stroke="#d197ff"/>
<path d="M1983.1 473.6h4.6" stroke="#da95ff"/>
<path d="M1987.1 473.6h4.6" stroke="#e393ff"/>
<path d="M1991.1 473.6h4.6" stroke="#ec91ff"/>
<path d="M1995.1 473.6h4.6" stroke="#f58fff"/>
<path d="M1999.1 473.6h4.6" stroke="#fe8dff"/>
<path d="M2003.1 473.6h4.6" stroke="#ff86f7"/>
<path d="M2007.1 473.6h4.6" stroke="#ff80ee"/>
<path d="M2011.1 473.6h4.6" stroke="#ff7ae6"/>
<path d="M2015.1 473.6h4.6" stroke="#ff74df"/>
<path d="M2019.1 473.6h4.6" stroke="#ff6fd8"/>
<path d="M2023.1 473.6h4.6" stroke="#ff69d1"/>
<path d="M2027.1 473.6h4.6" stroke="#ff65cb"/>
<path d="M2031.1 473.6h4.6" stroke="#ff60c5"/>
<path d="M1891.1 477.6h4.6" stroke="#16b8ff"/>
<path d="M1895.1 477.6h4.6" stroke="#1db7ff"/>
<path d="M1899.1 477.6h4.6" stroke="#25b5ff"/>
<path d="M1903.1 477.6h4.6" stroke="#2db3ff"/>
<path d="M1907.1 477.6h4.6" stroke="#35b1ff"/>
<path d="M1911.1 477.6h4.6" stroke="#3db0ff"/>
<path d="M1915.1 477.6h4.6" stroke="#45aeff"/>
<path d="M1919.1 477.6h4.6" stroke="#4dacff"/>
<path d="M1923.1 477.6h4.6" stroke="#55aaff"/>
<path d="M1927.1 477.6h4.6" stroke="#5da9ff"/>
<path d="M1931.1 477.6h4.6" stroke="#65a7ff"/>
<path d="M1935.1 477.6h4.6" stroke="#6da5ff"/>
<path d="M1939.1 477.6h4.6" stroke="#75a3ff"/>
<path d="M1943.1 477.6h4.6" stroke="#7da1ff"/>
<path d="M1947.1 477.6h4.6" stroke="#869fff"/>
<path d="M1951.1 477.6h4.6" stroke="#8e9eff"/>
<path d="M1955.1 477.6h4.6" stroke="#969cff"/>
<path d="M1959.1 477.6h4.6" stroke="#9f9aff"/>
<path d="M1963.1 477.6h4.6" stroke="#a798ff"/>
<path d="M1967.1 477.6h4.6" stroke="#b096ff"/>
<path d="M1971.1 477.6h4.6" stroke="#b894ff"/>
<path d="M1975.1 477.6h4.6" stroke="#c192ff"/>
<path d="M1979.1 477.6h4.6" stroke="#c990ff"/>
<path d="M1983.1 477.6h4.6" stroke="#d28eff"/>
<path d="M1987.1 477.6h4.6" stroke="#db8cff"/>
<path d="M1991.1 477.6h4.6" stroke="#e48aff"/>
<path d="M1995.1 477.6h4.6" stroke="#ec88ff"/>
<path d="M1999.1 477.6h4.6" stroke="#f586ff"/>
<path d="M2003.1 477.6h4.6" stroke="#fe84ff"/>
<path d="M2007.1 477.6h4.6" stroke="#ff7ef7"/>
<path d="M2011.1 477.6h4.6" stroke="#ff78ef"/>
<path d="M2015.1 477.6h4.6" stroke="#ff72e7"/>
<path d="M2019.1 477.6h4.6" stroke="#ff6de0"/>
<path d="M2023.1 477.6h4.6" stroke="#ff68d9"/>
<path d="M2027.1 477.6h4.6" stroke="#ff63d2"/>
<path d="M2031.1 477.6h4.6" stroke="#ff5fcc"/>
<path d="M1895.1 481.6h4.6" stroke="#1bb0ff"/>
<path d="M1899.1 481.6h4.6" stroke="#23aeff"/>
<path d="M1903.1 481.6h4.6" stroke="#2aacff"/>
<path d="M1907.1 481.6h4.6" stroke="#32abff"/>
<path d="M1911.1 481.6h4.6" stroke="#3aa9ff"/>
<path d="M1915.1 481.6h4.6" stroke="#41a7ff"/>
<path d="M1919.1 481.6h4.6" stroke="#49a5ff"/>
<path d="M1923.1 481.6h4.6" stroke="#51a4ff"/>
<path d="M1927.1 481.6h4.6" stroke="#59a2ff"/>
<path d="M1931.1 481.6h4.6" stroke="#61a0ff"/>
<path d="M1935.1 481.6h4.6" stroke="#699eff"/>
<path d="M1939.1 481.6h4.6" stroke="#719cff"/>
<path d="M1943.1 481.6h4.6" stroke="#799bff"/>
<path d="M1947.1 481.6h4.6" stroke="#8199ff"/>
<path d="M1951.1 481.6h4.6" stroke="#8997ff"/>
<path d="M1955.1 481.6h4.6" stroke="#9195ff"/>
<path d="M1959.1 481.6h4.6" stroke="#9993ff"/>
<path d="M1963.1 481.6h4.6" stroke="#a191ff"/>
<path d="M1967.1 481.6h4.6" stroke="#a990ff"/>
<path d="M1971.1 481.6h4.6" stroke="#b28eff"/>
<path d="M1975.1 481.6h4.6" stroke="#ba8cff"/>
<path d="M1979.1 481.6h4.6" stroke="#c28aff"/>
<path d="M1983.1 481.6h4.6" stroke="#cb88ff"/>
<path d="M1987.1 481.6h4.6" stroke="#d386ff"/>
<path d="M1991.1 481.6h4.6" stroke="#dc84ff"/>
<path d="M1995.1 481.6h4.6" stroke="#e482ff"/>
<path d="M1999.1 481.6h4.6" stroke="#ed80ff"/>
<path d="M2003.1 481.6h4.6" stroke="#f67eff"/>
<path d="M2007.1 481.6h4.6" stroke="#fe7cff"/>
<path d="M2011.1 481.6h4.6" stroke="#ff77f7"/>
<path d="M2015.1 481.6h4.6" stroke="#ff71ef"/>
<path d="M2019.1 481.6h4.6" stroke="#ff6be8"/>
<path d="M2023.1 481.6h4.6" stroke="#ff66e1"/>
<path d="M2027.1 481.6h4.6" stroke="#ff62da"/>
<path d="M1899.1 485.6h4.6" stroke="#21a7ff"/>
<path d="M1903.1 485.6h4.6" stroke="#28a6ff"/>
<path d="M1907.1 485.6h4.6" stroke="#30a4ff"/>
<path d="M1911.1 485.6h4.6" stroke="#37a2ff"/>
<path d="M1915.1 485.6h4.6" stroke="#3fa0ff"/>
<path d="M1919.1 485.6h4.6" stroke="#469fff"/>
<path d="M1923.1 485.6h4.6" stroke="#4e9dff"/>
<path d="M1927.1 485.6h4.6" stroke="#559bff"/>
<path d="M1931.1 485.6h4.6" stroke="#5d9aff"/>
<path d="M1935.1 485.6h4.6" stroke="#6598ff"/>
<path d="M1939.1 485.6h4.6" stroke="#6c96ff"/>
<path d="M1943.1 485.6h4.6" stroke="#7494ff"/>
<path d="M1947.1 485.6h4.6" stroke="#7c92ff"/>
<path d="M1951.1 485.6h4.6" stroke="#8491ff"/>
<path d="M1955.1 485.6h4.6" stroke="#8c8fff"/>
<path d="M1959.1 485.6h4.6" stroke="#938dff"/>
<path d="M1963.1 485.6h4.6" stroke="#9b8bff"/>
<path d="M1967.1 485.6h4.6" stroke="#a389ff"/>
<path d="M1971.1 485.6h4.6" stroke="#ab88ff"/>
<path d="M1975.1 485.6h4.6" stroke="#b486ff"/>
<path d="M1979.1 485.6h4.6" stroke="#bc84ff"/>
<path d="M1983.1 485.6h4.6" stroke="#c482ff"/>
<path d="M1987.1 485.6h4.6" stroke="#cc80ff"/>
<path d="M1991.1 485.6h4.6" stroke="#d47eff"/>
<path d="M1995.1 485.6h4.6" stroke="#dd7cff"/>
<path d="M1999.1 485.6h4.6" stroke="#e57aff"/>
<path d="M2003.1 485.6h4.6" stroke="#ed78ff"/>
<path d="M2007.1 485.6h4.6" stroke="#f677ff"/>
<path d="M2011.1 485.6h4.6" stroke="#fe75ff"/>
<path d="M2015.1 485.6h4.6" stroke="#ff6ff7"/>
<path d="M2019.1 485.6h4.6" stroke="#ff6af0"/>
<path d="M2023.1 485.6h4.6" stroke="#ff65e8"/>
<path d="M1903.1 489.6h4.6" stroke="#269fff"/>
<path d="M1907.1 489.6h4.6" stroke="#2d9eff"/>
<path d="M1911.1 489.6h4.6" stroke="#349cff"/>
<path d="M1915.1 489.6h4.6" stroke="#3c9aff"/>
<path d="M1919.1 489.6h4.6" stroke="#4399ff"/>
<path d="M1923.1 489.6h4.6" stroke="#4a97ff"/>
<path d="M1927.1 489.6h4.6" stroke="#5295ff"/>
<path d="M1931.1 489.6h4.6" stroke="#5993ff"/>
<path d="M1935.1 489.6h4.6" stroke="#6192ff"/>
<path d="M1939.1 489.6h4.6" stroke="#6890ff"/>
<path d="M1943.1 489.6h4.6" stroke="#708eff"/>
<path d="M1947.1 489.6h4.6" stroke="#778cff"/>
<path d="M1951.1 489.6h4.6" stroke="#7f8bff"/>
<path d="M1955.1 489.6h4.6" stroke="#8789ff"/>
<path d="M1959.1 489.6h4.6" stroke="#8e87ff"/>
<path d="M1963.1 489.6h4.6" stroke="#9685ff"/>
<path d="M1967.1 489.6h4.6" stroke="#9e84ff"/>
<path d="M1971.1 489.6h4.6" stroke="#a682ff"/>
<path d="M1975.1 489.6h4.6" stroke="#ad80ff"/>
<path d="M1979.1 489.6h4.6" stroke="#b57eff"/>
<path d="M1983.1 489.6h4.6" stroke="#bd7cff"/>
<path d="M1987.1 489.6h4.6" stroke="#c57aff"/>
<path d="M1991.1 489.6h4.6" stroke="#cd79ff"/>
<path d="M1995.1 489.6h4.6" stroke="#d577ff"/>
<path d="M1999.1 489.6h4.6" stroke="#dd75ff"/>
<path d="M2003.1 489.6h4.6" stroke="#e673ff"/>
<path d="M2007.1 489.6h4.6" stroke="#ee71ff"/>
<path d="M2011.1 489.6h4.6" stroke="#f66fff"/>
<path d="M2015.1 489.6h4.6" stroke="#fe6dff"/>
<path d="M2019.1 489.6h4.6" stroke="#ff68f8"/>
<path d="M1907.1 493.6h4.6" stroke="#2b98ff"/>
<path d="M1911.1 493.6h4.6" stroke="#3296ff"/>
<path d="M1915.1 493.6h4.6" stroke="#3994ff"/>
<path d="M1919.1 493.6h4.6" stroke="#4093ff"/>
<path d="M1923.1 493.6h4.6" stroke="#4791ff"/>
<path d="M1927.1 493.6h4.6" stroke="#4f8fff"/>
<path d="M1931.1 493.6h4.6" stroke="#568eff"/>
<path d="M1935.1 493.6h4.6" stroke="#5d8cff"/>
<path d="M1939.1 493.6h4.6" stroke="#648aff"/>
<path d="M1943.1 493.6h4.6" stroke="#6c89ff"/>
<path d="M1947.1 493.6h4.6" stroke="#7387ff"/>
<path d="M1951.1 493.6h4.6" stroke="#7a85ff"/>
<path d="M1955.1 493.6h4.6" stroke="#8283ff"/>
<path d="M1959.1 493.6h4.6" stroke="#8982ff"/>
<path d="M1963.1 493.6h4.6" stroke="#9180ff"/>
<path d="M1967.1 493.6h4.6" stroke="#987eff"/>
<path d="M1971.1 493.6h4.6" stroke="#a07cff"/>
<path d="M1975.1 493.6h4.6" stroke="#a87bff"/>
<path d="M1979.1 493.6h4.6" stroke="#af79ff"/>
<path d="M1983.1 493.6h4.6" stroke="#b777ff"/>
<path d="M1987.1 493.6h4.6" stroke="#bf75ff"/>
<path d="M1991.1 493.6h4.6" stroke="#c773ff"/>
<path d="M1995.1 493.6h4.6" stroke="#ce71ff"/>
<path d="M1999.1 493.6h4.6" stroke="#d670ff"/>
<path d="M2003.1 493.6h4.6" stroke="#de6eff"/>
<path d="M2007.1 493.6h4.6" stroke="#e66cff"/>
<path d="M2011.1 493.6h4.6" stroke="#ee6aff"/>
<path d="M2015.1 493.6h4.6" stroke="#f668ff"/>
<path d="M1911.1 497.6h4.6" stroke="#3090ff"/>
<path d="M1915.1 497.6h4.6" stroke="#378fff"/>
<path d="M1919.1 497.6h4.6" stroke="#3e8dff"/>
<path d="M1923.1 497.6h4.6" stroke="#448bff"/>
<path d="M1927.1 497.6h4.6" stroke="#4b8aff"/>
<path d="M1931.1 497.6h4.6" stroke="#5388ff"/>
<path d="M1935.1 497.6h4.6" stroke="#5a86ff"/>
<path d="M1939.1 497.6h4.6" stroke="#6185ff"/>
<path d="M1943.1 497.6h4.6" stroke="#6883ff"/>
<path d="M1947.1 497.6h4.6" stroke="#6f81ff"/>
<path d="M1951.1 497.6h4.6" stroke="#7680ff"/>
<path d="M1955.1 497.6h4.6" stroke="#7d7eff"/>
<path d="M1959.1 497.6h4.6" stroke="#857cff"/>
<path d="M1963.1 497.6h4.6" stroke="#8c7bff"/>
<path d="M1967.1 497.6h4.6" stroke="#9379ff"/>
<path d="M1971.1 497.6h4.6" stroke="#9b77ff"/>
<path d="M1975.1 497.6h4.6" stroke="#a275ff"/>
<path d="M1979.1 497.6h4.6" stroke="#aa74ff"/>
<path d="M1983.1 497.6h4.6" stroke="#b172ff"/>
<path d="M1987.1 497.6h4.6" stroke="#b970ff"/>
<path d="M1991.1 497.6h4.6" stroke="#c06eff"/>
<path d="M1995.1 497.6h4.6" stroke="#c86dff"/>
<path d="M1999.1 497.6h4.6" stroke="#d06bff"/>
<path d="M2003.1 497.6h4.6" stroke="#d769ff"/>
<path d="M2007.1 497.6h4.6" stroke="#df67ff"/>
<path d="M2011.1 497.6h4.6" stroke="#e765ff"/>
<path d="M1915.1 501.6h4.6" stroke="#3489ff"/>
<path d="M1919.1 501.6h4.6" stroke="#3b88ff"/>
<path d="M1923.1 501.6h4.6" stroke="#4286ff"/>
<path d="M1927.1 501.6h4.6" stroke="#4985ff"/>
<path d="M1931.1 501.6h4.6" stroke="#4f83ff"/>
<path d="M1935.1 501.6h4.6" stroke="#5681ff"/>
<path d="M1939.1 501.6h4.6" stroke="#5d80ff"/>
<path d="M1943.1 501.6h4.6" stroke="#647eff"/>
<path d="M1947.1 501.6h4.6" stroke="#6b7cff"/>
<path d="M1951.1 501.6h4.6" stroke="#727bff"/>
<path d="M1955.1 501.6h4.6" stroke="#7979ff"/>
<path d="M1959.1 501.6h4.6" stroke="#8077ff"/>
<path d="M1963.1 501.6h4.6" stroke="#8776ff"/>
<path d="M1967.1 501.6h4.6" stroke="#8f74ff"/>
<path d="M1971.1 501.6h4.6" stroke="#9672ff"/>
<path d="M1975.1 501.6h4.6" stroke="#9d70ff"/>
<path d="M1979.1 501.6h4.6" stroke="#a46fff"/>
<path d="M1983.1 501.6h4.6" stroke="#ac6dff"/>
<path d="M1987.1 501.6h4.6" stroke="#b36bff"/>
<path d="M1991.1 501.6h4.6" stroke="#ba6aff"/>
<path d="M1995.1 501.6h4.6" stroke="#c268ff"/>
<path d="M1999.1 501.6h4.6" stroke="#c966ff"/>
<path d="M2003.1 501.6h4.6" stroke="#d164ff"/>
<path d="M2007.1 501.6h4.6" stroke="#d862ff"/>
<path d="M1919.1 505.6h4.6" stroke="#3883ff"/>
<path d="M1923.1 505.6h4.6" stroke="#3f81ff"/>
<path d="M1927.1 505.6h4.6" stroke="#4680ff"/>
<path d="M1931.1 505.6h4.6" stroke="#4c7eff"/>
<path d="M1935.1 505.6h4.6" stroke="#537cff"/>
<path d="M1939.1 505.6h4.6" stroke="#5a7bff"/>
<path d="M1943.1 505.6h4.6" stroke="#6179ff"/>
<path d="M1947.1 505.6h4.6" stroke="#6877ff"/>
<path d="M1951.1 505.6h4.6" stroke="#6e76ff"/>
<path d="M1955.1 505.6h4.6" stroke="#7574ff"/>
<path d="M1959.1 505.6h4.6" stroke="#7c73ff"/>
<path d="M1963.1 505.6h4.6" stroke="#8371ff"/>
<path d="M1967.1 505.6h4.6" stroke="#8a6fff"/>
<path d="M1971.1 505.6h4.6" stroke="#916eff"/>
<path d="M1975.1 505.6h4.6" stroke="#986cff"/>
<path d="M1979.1 505.6h4.6" stroke="#9f6aff"/>
<path d="M1983.1 505.6h4.6" stroke="#a668ff"/>
<path d="M1987.1 505.6h4.6" stroke="#ad67ff"/>
<path d="M1991.1 505.6h4.6" stroke="#b565ff"/>
<path d="M1995.1 505.6h4.6" stroke="#bc63ff"/>
<path d="M1999.1 505.6h4.6" stroke="#c362ff"/>
<path d="M2003.1 505.6h4.6" stroke="#ca60ff"/>
<path d="M1927.1 509.6h4.6" stroke="#437bff"/>
<path d="M1931.1 509.6h4.6" stroke="#4a79ff"/>
<path d="M1935.1 509.6h4.6" stroke="#5078ff"/>
<path d="M1939.1 509.6h4.6" stroke="#5776ff"/>
<path d="M1943.1 509.6h4.6" stroke="#5d74ff"/>
<path d="M1947.1 509.6h4.6" stroke="#6473ff"/>
<path d="M1951.1 509.6h4.6" stroke="#6b71ff"/>
<path d="M1955.1 509.6h4.6" stroke="#7170ff"/>
<path d="M1959.1 509.6h4.6" stroke="#786eff"/>
<path d="M1963.1 509.6h4.6" stroke="#7f6cff"/>
<path d="M1967.1 509.6h4.6" stroke="#866bff"/>
<path d="M1971.1 509.6h4.6" stroke="#8d69ff"/>
<path d="M1975.1 509.6h4.6" stroke="#9367ff"/>
<path d="M1979.1 509.6h4.6" stroke="#9a66ff"/>
<path d="M1983.1 509.6h4.6" stroke="#a164ff"/>
<path d="M1987.1 509.6h4.6" stroke="#a862ff"/>
<path d="M1991.1 509.6h4.6" stroke="#af61ff"/>
<path d="M1995.1 509.6h4.6" stroke="#b65fff"/>
<path d="M1939.1 513.6h4.6" stroke="#5472ff"/>
<path d="M1943.1 513.6h4.6" stroke="#5a70ff"/>
<path d="M1947.1 513.6h4.6" stroke="#616eff"/>
<path d="M1951.1 513.6h4.6" stroke="#676dff"/>
<path d="M1955.1 513.6h4.6" stroke="#6e6bff"/>
<path d="M1959.1 513.6h4.6" stroke="#746aff"/>
<path d="M1963.1 513.6h4.6" stroke="#7b68ff"/>
<path d="M1967.1 513.6h4.6" stroke="#8266ff"/>
<path d="M1971.1 513.6h4.6" stroke="#8865ff"/>
<path d="M1975.1 513.6h4.6" stroke="#8f63ff"/>
<path d="M1979.1 513.6h4.6" stroke="#9662ff"/>
<path d="M1983.1 513.6h4.6" stroke="#9c60ff"/>
</g></g>
<path d="M2048.3 937.3 L2047.9 937.5 L2047.3 937.8 L2046.7 938.0 L2046.2 938.1 L2045.7 938.1 L2045.0 938.0 L2044.0 937.8 L2042.8 937.4 L2041.6 936.9 L2040.5 936.3 L2039.3 935.4 L2037.9 934.5 L2036.4 933.3 L2034.7 932.1 L2032.8 930.6 L2030.7 928.8 L2028.2 926.8 L2025.6 924.7 L2022.7 922.3 L2019.7 919.6 L2016.4 916.8 L2012.8 913.8 L2009.0 910.7 L2004.7 907.2 L2000.0 903.3 L1994.9 899.2 L1989.5 894.7 L1983.7 889.9 L1977.6 884.9 L1971.1 879.3 L1964.1 873.2 L1956.6 866.5 L1948.6 858.9 L1940.2 850.9 L1931.3 842.0 L1921.5 831.4 L1910.4 818.7 L1898.3 804.2 L1885.6 788.0 L1872.0 770.0 L1857.8 750.1 L1843.1 728.7 L1828.0 705.4 L1812.5 680.5 L1797.1 654.9 L1781.9 628.6 L1766.8 601.7 L1752.9 575.1 L1740.2 548.9 L1728.6 523.0 L1718.2 498.4 L1709.2 475.4 L1701.3 453.7 L1694.8 433.8 L1689.5 416.1 L1685.6 400.1 L1682.6 385.8 L1680.7 373.2 L1679.8 362.2 L1679.7 352.4 L1680.4 343.7 L1682.0 336.1 L1684.3 329.4 L1687.3 323.7 L1691.1 318.9 L1695.3 314.9 L1700.1 311.7 L1705.4 309.3 L1711.0 307.4 L1716.9 306.1 L1723.1 305.3 L1729.6 304.7 L1736.2 304.3 L1743.0 304.1 L1749.9 304.0 L1756.7 304.0 L1763.5 304.1 L1770.5 304.2 L1777.5 304.5 L1784.6 304.8 L1792.0 305.3 L1799.5 305.7 L1807.2 306.3 L1815.1 306.9 L1823.3 307.6 L1831.6 308.4 L1840.3 309.2 L1849.2 310.1 L1858.4 311.0 L1867.9 312.0 L1877.8 313.0 L1888.0 314.1 L1898.6 315.3 L1909.5 316.5 L1920.8 317.8 L1932.5 319.1 L1944.6 320.4 L1957.1 321.8 L1970.0 323.3 L1983.4 324.8 L1997.1 326.4 L2011.3 328.0 L2025.9 329.7 L2040.9 331.4 L2056.3 333.2 L2072.1 335.0 L2088.3 336.9 L2104.8 338.8 L2121.6 340.7 L2138.8 342.7 L2156.1 344.7 L2173.7 346.7 L2191.3 348.8 L2208.9 350.8 L2226.1 352.8 L2243.1 354.7 L2260.0 356.7 L2276.8 358.6 L2293.5 360.5 L2309.7 362.4 L2325.3 364.2 L2340.3 365.9 L2354.8 367.5 L2368.7 369.1 L2382.0 370.7 L2394.6 372.1 L2406.6 373.5 L2417.9 374.8 L2428.5 376.0 L2438.6 377.2 L2448.0 378.3 L2456.9 379.3 L2464.7 380.2 L2472.0 381.0 L2480.9 382.0 L2493.0 383.4 L2506.8 385.0 L2519.2 386.5 L2528.9 387.6 L2537.2 388.5 L2544.4 389.3 L2550.2 390.0 L2554.9 390.5 L2559.3 391.1 L2564.1 391.6 L2568.7 392.1 L2572.4 392.6 L2574.8 392.8 L2576.4 393.0 L2577.4 393.1 Z M2328.1 374.9 L1858.0 330.9 L1930.8 780.3 Z" fill-rule="evenodd" fill="#000" fill-opacity="0.40"/>
</g>
<path d="M2048.3 937.3 L2047.9 937.5 L2047.3 937.8 L2046.7 938.0 L2046.2 938.1 L2045.7 938.1 L2045.0 938.0 L2044.0 937.8 L2042.8 937.4 L2041.6 936.9 L2040.5 936.3 L2039.3 935.4 L2037.9 934.5 L2036.4 933.3 L2034.7 932.1 L2032.8 930.6 L2030.7 928.8 L2028.2 926.8 L2025.6 924.7 L2022.7 922.3 L2019.7 919.6 L2016.4 916.8 L2012.8 913.8 L2009.0 910.7 L2004.7 907.2 L2000.0 903.3 L1994.9 899.2 L1989.5 894.7 L1983.7 889.9 L1977.6 884.9 L1971.1 879.3 L1964.1 873.2 L1956.6 866.5 L1948.6 858.9 L1940.2 850.9 L1931.3 842.0 L1921.5 831.4 L1910.4 818.7 L1898.3 804.2 L1885.6 788.0 L1872.0 770.0 L1857.8 750.1 L1843.1 728.7 L1828.0 705.4 L1812.5 680.5 L1797.1 654.9 L1781.9 628.6 L1766.8 601.7 L1752.9 575.1 L1740.2 548.9 L1728.6 523.0 L1718.2 498.4 L1709.2 475.4 L1701.3 453.7 L1694.8 433.8 L1689.5 416.1 L1685.6 400.1 L1682.6 385.8 L1680.7 373.2 L1679.8 362.2 L1679.7 352.4 L1680.4 343.7 L1682.0 336.1 L1684.3 329.4 L1687.3 323.7 L1691.1 318.9 L1695.3 314.9 L1700.1 311.7 L1705.4 309.3 L1711.0 307.4 L1716.9 306.1 L1723.1 305.3 L1729.6 304.7 L1736.2 304.3 L1743.0 304.1 L1749.9 304.0 L1756.7 304.0 L1763.5 304.1 L1770.5 304.2 L1777.5 304.5 L1784.6 304.8 L1792.0 305.3 L1799.5 305.7 L1807.2 306.3 L1815.1 306.9 L1823.3 307.6 L1831.6 308.4 L1840.3 309.2 L1849.2 310.1 L1858.4 311.0 L1867.9 312.0 L1877.8 313.0 L1888.0 314.1 L1898.6 315.3 L1909.5 316.5 L1920.8 317.8 L1932.5 319.1 L1944.6 320.4 L1957.1 321.8 L1970.0 323.3 L1983.4 324.8 L1997.1 326.4 L2011.3 328.0 L2025.9 329.7 L2040.9 331.4 L2056.3 333.2 L2072.1 335.0 L2088.3 336.9 L2104.8 338.8 L2121.6 340.7 L2138.8 342.7 L2156.1 344.7 L2173.7 346.7 L2191.3 348.8 L2208.9 350.8 L2226.1 352.8 L2243.1 354.7 L2260.0 356.7 L2276.8 358.6 L2293.5 360.5 L2309.7 362.4 L2325.3 364.2 L2340.3 365.9 L2354.8 367.5 L2368.7 369.1 L2382.0 370.7 L2394.6 372.1 L2406.6 373.5 L2417.9 374.8 L2428.5 376.0 L2438.6 377.2 L2448.0 378.3 L2456.9 379.3 L2464.7 380.2 L2472.0 381.0 L2480.9 382.0 L2493.0 383.4 L2506.8 385.0 L2519.2 386.5 L2528.9 387.6 L2537.2 388.5 L2544.4 389.3 L2550.2 390.0 L2554.9 390.5 L2559.3 391.1 L2564.1 391.6 L2568.7 392.1 L2572.4 392.6 L2574.8 392.8 L2576.4 393.0 L2577.4 393.1" fill="none" stroke="#222" stroke-width="5.2" stroke-linejoin="round" stroke-linecap="butt"/>
<path d="M2575.1 390.9 L2046.0 935.0" stroke="#222" stroke-opacity="0.55" stroke-width="1" fill="none"/>
<g fill="none" stroke="#fff" stroke-width="2">
<rect x="1849.0" y="322.0" width="18" height="18"/>
<rect x="1882.1" y="355.0" width="18" height="18"/>
<rect x="1935.6" y="343.9" width="18" height="18"/>
<rect x="1963.1" y="333.0" width="18" height="18"/>
<rect x="2000.0" y="338.4" width="18" height="18"/>
<rect x="2042.6" y="348.0" width="18" height="18"/>
<rect x="2101.4" y="353.8" width="18" height="18"/>
<rect x="1932.0" y="373.5" width="18" height="18"/>
<rect x="2020.0" y="392.0" width="18" height="18"/>
<rect x="2005.5" y="401.0" width="18" height="18"/>
<rect x="1891.0" y="416.0" width="18" height="18"/>
<rect x="1869.1" y="442.0" width="18" height="18"/>
<rect x="2319.3" y="366.0" width="18" height="18"/>
<rect x="2210.2" y="394.1" width="18" height="18"/>
<rect x="2127.2" y="410.5" width="18" height="18"/>
<rect x="2083.1" y="473.0" width="18" height="18"/>
<rect x="1876.5" y="483.9" width="18" height="18"/>
<rect x="1923.1" y="480.5" width="18" height="18"/>
<rect x="1950.1" y="488.0" width="18" height="18"/>
<rect x="1998.1" y="512.1" width="18" height="18"/>
<rect x="1926.0" y="552.0" width="18" height="18"/>
<rect x="2109.1" y="580.0" width="18" height="18"/>
<rect x="1926.1" y="620.1" width="18" height="18"/>
<rect x="1923.1" y="771.3" width="18" height="18"/>
</g>
<g stroke="#0c0c0c" stroke-width="1.6">
<circle cx="1959.9" cy="438.3" r="5.3" fill="#8c8c8c"/>
<circle cx="1963.1" cy="436.8" r="5.3" fill="#a2a2a2"/>
<circle cx="1858.0" cy="332.7" r="5.3" fill="#00ff00"/>
<circle cx="1891.6" cy="364.4" r="5.3" fill="#4a964a"/>
<circle cx="1942.7" cy="354.9" r="5.3" fill="#a4b848"/>
<circle cx="1970.6" cy="342.4" r="5.3" fill="#ffff00"/>
<circle cx="2003.5" cy="349.5" r="5.3" fill="#e8c428"/>
<circle cx="2047.5" cy="358.5" r="5.3" fill="#e8a030"/>
<circle cx="2095.5" cy="364.4" r="5.3" fill="#d88030"/>
<circle cx="1940.5" cy="382.5" r="5.3" fill="#5c6c44"/>
<circle cx="2029.6" cy="402.5" r="5.3" fill="#745444"/>
<circle cx="2007.6" cy="410.4" r="5.3" fill="#c49884"/>
<circle cx="1902.6" cy="426.2" r="5.3" fill="#68b8a4"/>
<circle cx="1878.5" cy="452.5" r="5.3" fill="#00ffff"/>
<circle cx="2316.4" cy="375.6" r="5.3" fill="#ff0000"/>
<circle cx="2215.7" cy="402.5" r="5.3" fill="#b03040"/>
<circle cx="2125.6" cy="421.4" r="5.3" fill="#c45868"/>
<circle cx="2084.6" cy="483.9" r="5.3" fill="#b85898"/>
<circle cx="1883.6" cy="493.5" r="5.3" fill="#0088a0"/>
<circle cx="1933.6" cy="489.3" r="5.3" fill="#6480a8"/>
<circle cx="1961.6" cy="495.1" r="5.3" fill="#8884b8"/>
<circle cx="1986.6" cy="533.4" r="5.3" fill="#5c3c70"/>
<circle cx="1935.7" cy="565.0" r="5.3" fill="#4c5cac"/>
<circle cx="2115.3" cy="592.3" r="5.3" fill="#ff00ff"/>
<circle cx="1937.5" cy="636.0" r="5.3" fill="#343c9c"/>
<circle cx="1933.5" cy="799.2" r="5.3" fill="#0000ff"/>
</g>
<rect x="1954.1" y="426.9" width="18" height="18" fill="none" stroke="#000" stroke-width="2"/>
<circle cx="1981.6" cy="430.6" r="6.2" fill="#000"/>
</svg>
<svg style="left:0;top:0" width="2560" height="1528" viewBox="0 0 2560 1528">
<rect x="1679.0" y="291.2" width="866.4" height="665.4" fill="none" stroke="#9c9c9c" stroke-width="1.6"/>
<g stroke="#d8d8d8" stroke-width="1.4"><path d="M1678.8 956.5 V964.5"/><path d="M1671 956.4 H1679"/><path d="M1750.9 956.5 V964.5"/><path d="M1671 901.9 H1679"/><path d="M1823.0 956.5 V964.5"/><path d="M1671 846.9 H1679"/><path d="M1895.1 956.5 V964.5"/><path d="M1671 791.6 H1679"/><path d="M1967.2 956.5 V964.5"/><path d="M1671 736.0 H1679"/><path d="M2039.3 956.5 V964.5"/><path d="M1671 681.0 H1679"/><path d="M2111.4 956.5 V964.5"/><path d="M1671 625.8 H1679"/><path d="M2183.5 956.5 V964.5"/><path d="M1671 570.2 H1679"/><path d="M2255.6 956.5 V964.5"/><path d="M1671 514.0 H1679"/><path d="M2327.7 956.5 V964.5"/><path d="M1671 458.4 H1679"/><path d="M2399.8 956.5 V964.5"/><path d="M1671 402.9 H1679"/><path d="M2471.9 956.5 V964.5"/><path d="M1671 347.9 H1679"/></g>
</svg>
<div class="t" style="left:1678.8px;top:969.7px;font-size:19.2px;line-height:19.2px;color:#d0d0d0;transform:translateX(-50%) scaleX(1.05);transform-origin:center;">0</div>
<div class="t" style="left:1669.8px;top:947.7px;font-size:19.2px;line-height:19.2px;color:#d0d0d0;transform:translateX(-100%) scaleX(1.05);transform-origin:right center;">0</div>
<div class="t" style="left:1750.9px;top:969.7px;font-size:19.2px;line-height:19.2px;color:#d0d0d0;transform:translateX(-50%) scaleX(1.05);transform-origin:center;">0.05</div>
<div class="t" style="left:1669.8px;top:893.2px;font-size:19.2px;line-height:19.2px;color:#d0d0d0;transform:translateX(-100%) scaleX(1.05);transform-origin:right center;">0.05</div>
<div class="t" style="left:1823.0px;top:969.7px;font-size:19.2px;line-height:19.2px;color:#d0d0d0;transform:translateX(-50%) scaleX(1.05);transform-origin:center;">0.1</div>
<div class="t" style="left:1669.8px;top:838.2px;font-size:19.2px;line-height:19.2px;color:#d0d0d0;transform:translateX(-100%) scaleX(1.05);transform-origin:right center;">0.1</div>
<div class="t" style="left:1895.1px;top:969.7px;font-size:19.2px;line-height:19.2px;color:#d0d0d0;transform:translateX(-50%) scaleX(1.05);transform-origin:center;">0.15</div>
<div class="t" style="left:1669.8px;top:782.9px;font-size:19.2px;line-height:19.2px;color:#d0d0d0;transform:translateX(-100%) scaleX(1.05);transform-origin:right center;">0.15</div>
<div class="t" style="left:1967.2px;top:969.7px;font-size:19.2px;line-height:19.2px;color:#d0d0d0;transform:translateX(-50%) scaleX(1.05);transform-origin:center;">0.2</div>
<div class="t" style="left:1669.8px;top:727.3px;font-size:19.2px;line-height:19.2px;color:#d0d0d0;transform:translateX(-100%) scaleX(1.05);transform-origin:right center;">0.2</div>
<div class="t" style="left:2039.3px;top:969.7px;font-size:19.2px;line-height:19.2px;color:#d0d0d0;transform:translateX(-50%) scaleX(1.05);transform-origin:center;">0.25</div>
<div class="t" style="left:1669.8px;top:672.3px;font-size:19.2px;line-height:19.2px;color:#d0d0d0;transform:translateX(-100%) scaleX(1.05);transform-origin:right center;">0.25</div>
<div class="t" style="left:2111.4px;top:969.7px;font-size:19.2px;line-height:19.2px;color:#d0d0d0;transform:translateX(-50%) scaleX(1.05);transform-origin:center;">0.3</div>
<div class="t" style="left:1669.8px;top:617.1px;font-size:19.2px;line-height:19.2px;color:#d0d0d0;transform:translateX(-100%) scaleX(1.05);transform-origin:right center;">0.3</div>
<div class="t" style="left:2183.5px;top:969.7px;font-size:19.2px;line-height:19.2px;color:#d0d0d0;transform:translateX(-50%) scaleX(1.05);transform-origin:center;">0.35</div>
<div class="t" style="left:1669.8px;top:561.5px;font-size:19.2px;line-height:19.2px;color:#d0d0d0;transform:translateX(-100%) scaleX(1.05);transform-origin:right center;">0.35</div>
<div class="t" style="left:2255.6px;top:969.7px;font-size:19.2px;line-height:19.2px;color:#d0d0d0;transform:translateX(-50%) scaleX(1.05);transform-origin:center;">0.4</div>
<div class="t" style="left:1669.8px;top:505.3px;font-size:19.2px;line-height:19.2px;color:#d0d0d0;transform:translateX(-100%) scaleX(1.05);transform-origin:right center;">0.4</div>
<div class="t" style="left:2327.7px;top:969.7px;font-size:19.2px;line-height:19.2px;color:#d0d0d0;transform:translateX(-50%) scaleX(1.05);transform-origin:center;">0.45</div>
<div class="t" style="left:1669.8px;top:449.7px;font-size:19.2px;line-height:19.2px;color:#d0d0d0;transform:translateX(-100%) scaleX(1.05);transform-origin:right center;">0.45</div>
<div class="t" style="left:2399.8px;top:969.7px;font-size:19.2px;line-height:19.2px;color:#d0d0d0;transform:translateX(-50%) scaleX(1.05);transform-origin:center;">0.5</div>
<div class="t" style="left:1669.8px;top:394.2px;font-size:19.2px;line-height:19.2px;color:#d0d0d0;transform:translateX(-100%) scaleX(1.05);transform-origin:right center;">0.5</div>
<div class="t" style="left:2471.9px;top:969.7px;font-size:19.2px;line-height:19.2px;color:#d0d0d0;transform:translateX(-50%) scaleX(1.05);transform-origin:center;">0.55</div>
<div class="t" style="left:1669.8px;top:339.2px;font-size:19.2px;line-height:19.2px;color:#d0d0d0;transform:translateX(-100%) scaleX(1.05);transform-origin:right center;">0.55</div>
<div class="t" style="left:2088.5px;top:267.2px;font-size:19.8px;line-height:19.8px;color:#d0d0d0;transform:translateX(-50%) scaleX(0.9783);transform-origin:center;">CIE 1976 u'v'</div>
<div style="left:2264.6px;top:720.3px;width:275.7px;height:182.7px;background:#2c2c2c;"></div>
<svg style="left:2267.0px;top:723.0px;overflow:hidden" width="269.0" height="177.0" viewBox="0 0 269.0 177.0">
<defs><filter id="iblur" color-interpolation-filters="sRGB" x="-10%" y="-10%" width="120%" height="120%"><feGaussianBlur stdDeviation="5"/></filter></defs>
<g filter="url(#iblur)" shape-rendering="crispEdges">
<path d="M-18 -18h10v10h-10z" fill="#a0ff00"/>
<path d="M-9 -18h10v10h-10z" fill="#a3ff00"/>
<path d="M0 -18h10v10h-10z" fill="#a7ff00"/>
<path d="M9 -18h10v10h-10z" fill="#aaff00"/>
<path d="M18 -18h10v10h-10z" fill="#adff00"/>
<path d="M27 -18h10v10h-10z" fill="#b1ff00"/>
<path d="M36 -18h10v10h-10z" fill="#b4ff00"/>
<path d="M45 -18h10v10h-10z" fill="#b7ff00"/>
<path d="M54 -18h10v10h-10z" fill="#bbff00"/>
<path d="M63 -18h10v10h-10z" fill="#beff00"/>
<path d="M72 -18h10v10h-10z" fill="#c2ff00"/>
<path d="M81 -18h10v10h-10z" fill="#c5ff00"/>
<path d="M90 -18h10v10h-10z" fill="#c9ff00"/>
<path d="M99 -18h10v10h-10z" fill="#ccff00"/>
<path d="M108 -18h10v10h-10z" fill="#d0ff00"/>
<path d="M117 -18h10v10h-10z" fill="#d3ff00"/>
<path d="M126 -18h10v10h-10z" fill="#d7ff00"/>
<path d="M135 -18h10v10h-10z" fill="#daff00"/>
<path d="M144 -18h10v10h-10z" fill="#deff00"/>
<path d="M153 -18h10v10h-10z" fill="#e1ff00"/>
<path d="M162 -18h10v10h-10z" fill="#e5ff00"/>
<path d="M171 -18h10v10h-10z" fill="#e9ff00"/>
<path d="M180 -18h10v10h-10z" fill="#edff00"/>
<path d="M189 -18h10v10h-10z" fill="#f0ff00"/>
<path d="M198 -18h10v10h-10z" fill="#f4ff00"/>
<path d="M207 -18h10v10h-10z" fill="#f8ff00"/>
<path d="M216 -18h10v10h-10z" fill="#fcff00"/>
<path d="M225 -18h10v10h-10z" fill="#ffff00"/>
<path d="M234 -18h10v10h-10z" fill="#fffb00"/>
<path d="M243 -18h10v10h-10z" fill="#fff700"/>
<path d="M252 -18h10v10h-10z" fill="#fff400"/>
<path d="M261 -18h10v10h-10z" fill="#fff000"/>
<path d="M270 -18h10v10h-10z" fill="#ffed00"/>
<path d="M279 -18h10v10h-10z" fill="#ffe900"/>
<path d="M-18 -9h10v10h-10z" fill="#a3ff00"/>
<path d="M-9 -9h10v10h-10z" fill="#a6ff00"/>
<path d="M0 -9h10v10h-10z" fill="#a9ff00"/>
<path d="M9 -9h10v10h-10z" fill="#adff00"/>
<path d="M18 -9h10v10h-10z" fill="#b0ff00"/>
<path d="M27 -9h10v10h-10z" fill="#b3ff00"/>
<path d="M36 -9h10v10h-10z" fill="#b7ff00"/>
<path d="M45 -9h10v10h-10z" fill="#baff00"/>
<path d="M54 -9h10v10h-10z" fill="#bdff00"/>
<path d="M63 -9h10v10h-10z" fill="#c1ff00"/>
<path d="M72 -9h10v10h-10z" fill="#c4ff00"/>
<path d="M81 -9h10v10h-10z" fill="#c8ff00"/>
<path d="M90 -9h10v10h-10z" fill="#cbff00"/>
<path d="M99 -9h10v10h-10z" fill="#cfff00"/>
<path d="M108 -9h10v10h-10z" fill="#d3ff00"/>
<path d="M117 -9h10v10h-10z" fill="#d6ff00"/>
<path d="M126 -9h10v10h-10z" fill="#daff00"/>
<path d="M135 -9h10v10h-10z" fill="#ddff00"/>
<path d="M144 -9h10v10h-10z" fill="#e1ff00"/>
<path d="M153 -9h10v10h-10z" fill="#e5ff00"/>
<path d="M162 -9h10v10h-10z" fill="#e8ff00"/>
<path d="M171 -9h10v10h-10z" fill="#ecff00"/>
<path d="M180 -9h10v10h-10z" fill="#f0ff00"/>
<path d="M189 -9h10v10h-10z" fill="#f4ff00"/>
<path d="M198 -9h10v10h-10z" fill="#f7ff00"/>
<path d="M207 -9h10v10h-10z" fill="#fbff00"/>
<path d="M216 -9h10v10h-10z" fill="#ffff00"/>
<path d="M225 -9h10v10h-10z" fill="#fffb00"/>
<path d="M234 -9h10v10h-10z" fill="#fff700"/>
<path d="M243 -9h10v10h-10z" fill="#fff400"/>
<path d="M252 -9h10v10h-10z" fill="#fff000"/>
<path d="M261 -9h10v10h-10z" fill="#ffed00"/>
<path d="M270 -9h10v10h-10z" fill="#ffe900"/>
<path d="M279 -9h10v10h-10z" fill="#ffe600"/>
<path d="M-18 0h10v10h-10z" fill="#a5ff00"/>
<path d="M-9 0h10v10h-10z" fill="#a8ff00"/>
<path d="M0 0h10v10h-10z" fill="#acff00"/>
<path d="M9 0h10v10h-10z" fill="#afff00"/>
<path d="M18 0h10v10h-10z" fill="#b3ff00"/>
<path d="M27 0h10v10h-10z" fill="#b6ff00"/>
<path d="M36 0h10v10h-10z" fill="#b9ff00"/>
<path d="M45 0h10v10h-10z" fill="#bdff00"/>
<path d="M54 0h10v10h-10z" fill="#c0ff00"/>
<path d="M63 0h10v10h-10z" fill="#c4ff00"/>
<path d="M72 0h10v10h-10z" fill="#c7ff00"/>
<path d="M81 0h10v10h-10z" fill="#cbff00"/>
<path d="M90 0h10v10h-10z" fill="#ceff00"/>
<path d="M99 0h10v10h-10z" fill="#d2ff00"/>
<path d="M108 0h10v10h-10z" fill="#d6ff00"/>
<path d="M117 0h10v10h-10z" fill="#d9ff00"/>
<path d="M126 0h10v10h-10z" fill="#ddff00"/>
<path d="M135 0h10v10h-10z" fill="#e1ff00"/>
<path d="M144 0h10v10h-10z" fill="#e4ff00"/>
<path d="M153 0h10v10h-10z" fill="#e8ff00"/>
<path d="M162 0h10v10h-10z" fill="#ecff00"/>
<path d="M171 0h10v10h-10z" fill="#efff00"/>
<path d="M180 0h10v10h-10z" fill="#f3ff00"/>
<path d="M189 0h10v10h-10z" fill="#f7ff00"/>
<path d="M198 0h10v10h-10z" fill="#fbff00"/>
<path d="M207 0h10v10h-10z" fill="#ffff00"/>
<path d="M216 0h10v10h-10z" fill="#fffb00"/>
<path d="M225 0h10v10h-10z" fill="#fff800"/>
<path d="M234 0h10v10h-10z" fill="#fff400"/>
<path d="M243 0h10v10h-10z" fill="#fff000"/>
<path d="M252 0h10v10h-10z" fill="#ffed00"/>
<path d="M261 0h10v10h-10z" fill="#ffe900"/>
<path d="M270 0h10v10h-10z" fill="#ffe600"/>
<path d="M279 0h10v10h-10z" fill="#ffe300"/>
<path d="M-18 9h10v10h-10z" fill="#a8ff00"/>
<path d="M-9 9h10v10h-10z" fill="#abff00"/>
<path d="M0 9h10v10h-10z" fill="#aeff00"/>
<path d="M9 9h10v10h-10z" fill="#b2ff00"/>
<path d="M18 9h10v10h-10z" fill="#b5ff00"/>
<path d="M27 9h10v10h-10z" fill="#b9ff00"/>
<path d="M36 9h10v10h-10z" fill="#bcff00"/>
<path d="M45 9h10v10h-10z" fill="#c0ff00"/>
<path d="M54 9h10v10h-10z" fill="#c3ff00"/>
<path d="M63 9h10v10h-10z" fill="#c7ff00"/>
<path d="M72 9h10v10h-10z" fill="#caff00"/>
<path d="M81 9h10v10h-10z" fill="#ceff00"/>
<path d="M90 9h10v10h-10z" fill="#d1ff00"/>
<path d="M99 9h10v10h-10z" fill="#d5ff00"/>
<path d="M108 9h10v10h-10z" fill="#d9ff00"/>
<path d="M117 9h10v10h-10z" fill="#dcff00"/>
<path d="M126 9h10v10h-10z" fill="#e0ff00"/>
<path d="M135 9h10v10h-10z" fill="#e4ff00"/>
<path d="M144 9h10v10h-10z" fill="#e8ff00"/>
<path d="M153 9h10v10h-10z" fill="#ebff00"/>
<path d="M162 9h10v10h-10z" fill="#efff00"/>
<path d="M171 9h10v10h-10z" fill="#f3ff00"/>
<path d="M180 9h10v10h-10z" fill="#f7ff00"/>
<path d="M189 9h10v10h-10z" fill="#fbff00"/>
<path d="M198 9h10v10h-10z" fill="#feff00"/>
<path d="M207 9h10v10h-10z" fill="#fffc00"/>
<path d="M216 9h10v10h-10z" fill="#fff800"/>
<path d="M225 9h10v10h-10z" fill="#fff400"/>
<path d="M234 9h10v10h-10z" fill="#fff100"/>
<path d="M243 9h10v10h-10z" fill="#ffed00"/>
<path d="M252 9h10v10h-10z" fill="#ffea00"/>
<path d="M261 9h10v10h-10z" fill="#ffe600"/>
<path d="M270 9h10v10h-10z" fill="#ffe300"/>
<path d="M279 9h10v10h-10z" fill="#ffe000"/>
<path d="M-18 18h10v10h-10z" fill="#aaff02"/>
<path d="M-9 18h10v10h-10z" fill="#aeff01"/>
<path d="M0 18h10v10h-10z" fill="#b1ff00"/>
<path d="M9 18h10v10h-10z" fill="#b5ff00"/>
<path d="M18 18h10v10h-10z" fill="#b8ff00"/>
<path d="M27 18h10v10h-10z" fill="#bcff00"/>
<path d="M36 18h10v10h-10z" fill="#bfff00"/>
<path d="M45 18h10v10h-10z" fill="#c3ff00"/>
<path d="M54 18h10v10h-10z" fill="#c6ff00"/>
<path d="M63 18h10v10h-10z" fill="#caff00"/>
<path d="M72 18h10v10h-10z" fill="#cdff00"/>
<path d="M81 18h10v10h-10z" fill="#d1ff00"/>
<path d="M90 18h10v10h-10z" fill="#d5ff00"/>
<path d="M99 18h10v10h-10z" fill="#d8ff00"/>
<path d="M108 18h10v10h-10z" fill="#dcff00"/>
<path d="M117 18h10v10h-10z" fill="#e0ff00"/>
<path d="M126 18h10v10h-10z" fill="#e3ff00"/>
<path d="M135 18h10v10h-10z" fill="#e7ff00"/>
<path d="M144 18h10v10h-10z" fill="#ebff00"/>
<path d="M153 18h10v10h-10z" fill="#efff00"/>
<path d="M162 18h10v10h-10z" fill="#f3ff00"/>
<path d="M171 18h10v10h-10z" fill="#f6ff00"/>
<path d="M180 18h10v10h-10z" fill="#faff00"/>
<path d="M189 18h10v10h-10z" fill="#feff00"/>
<path d="M198 18h10v10h-10z" fill="#fffc00"/>
<path d="M207 18h10v10h-10z" fill="#fff800"/>
<path d="M216 18h10v10h-10z" fill="#fff400"/>
<path d="M225 18h10v10h-10z" fill="#fff100"/>
<path d="M234 18h10v10h-10z" fill="#ffed00"/>
<path d="M243 18h10v10h-10z" fill="#ffea00"/>
<path d="M252 18h10v10h-10z" fill="#ffe600"/>
<path d="M261 18h10v10h-10z" fill="#ffe300"/>
<path d="M270 18h10v10h-10z" fill="#ffe000"/>
<path d="M279 18h10v10h-10z" fill="#ffdd00"/>
<path d="M-18 27h10v10h-10z" fill="#adff03"/>
<path d="M-9 27h10v10h-10z" fill="#b0ff03"/>
<path d="M0 27h10v10h-10z" fill="#b4ff02"/>
<path d="M9 27h10v10h-10z" fill="#b7ff01"/>
<path d="M18 27h10v10h-10z" fill="#bbff00"/>
<path d="M27 27h10v10h-10z" fill="#beff00"/>
<path d="M36 27h10v10h-10z" fill="#c2ff00"/>
<path d="M45 27h10v10h-10z" fill="#c5ff00"/>
<path d="M54 27h10v10h-10z" fill="#c9ff00"/>
<path d="M63 27h10v10h-10z" fill="#cdff00"/>
<path d="M72 27h10v10h-10z" fill="#d0ff00"/>
<path d="M81 27h10v10h-10z" fill="#d4ff00"/>
<path d="M90 27h10v10h-10z" fill="#d8ff00"/>
<path d="M99 27h10v10h-10z" fill="#dbff00"/>
<path d="M108 27h10v10h-10z" fill="#dfff00"/>
<path d="M117 27h10v10h-10z" fill="#e3ff00"/>
<path d="M126 27h10v10h-10z" fill="#e7ff00"/>
<path d="M135 27h10v10h-10z" fill="#eaff00"/>
<path d="M144 27h10v10h-10z" fill="#eeff00"/>
<path d="M153 27h10v10h-10z" fill="#f2ff00"/>
<path d="M162 27h10v10h-10z" fill="#f6ff00"/>
<path d="M171 27h10v10h-10z" fill="#faff00"/>
<path d="M180 27h10v10h-10z" fill="#feff00"/>
<path d="M189 27h10v10h-10z" fill="#fffc00"/>
<path d="M198 27h10v10h-10z" fill="#fff800"/>
<path d="M207 27h10v10h-10z" fill="#fff500"/>
<path d="M216 27h10v10h-10z" fill="#fff100"/>
<path d="M225 27h10v10h-10z" fill="#ffed00"/>
<path d="M234 27h10v10h-10z" fill="#ffea00"/>
<path d="M243 27h10v10h-10z" fill="#ffe700"/>
<path d="M252 27h10v10h-10z" fill="#ffe300"/>
<path d="M261 27h10v10h-10z" fill="#ffe000"/>
<path d="M270 27h10v10h-10z" fill="#ffdd00"/>
<path d="M279 27h10v10h-10z" fill="#ffda00"/>
<path d="M-18 36h10v10h-10z" fill="#b0ff05"/>
<path d="M-9 36h10v10h-10z" fill="#b3ff04"/>
<path d="M0 36h10v10h-10z" fill="#b7ff03"/>
<path d="M9 36h10v10h-10z" fill="#baff03"/>
<path d="M18 36h10v10h-10z" fill="#beff02"/>
<path d="M27 36h10v10h-10z" fill="#c1ff01"/>
<path d="M36 36h10v10h-10z" fill="#c5ff00"/>
<path d="M45 36h10v10h-10z" fill="#c8ff00"/>
<path d="M54 36h10v10h-10z" fill="#ccff00"/>
<path d="M63 36h10v10h-10z" fill="#d0ff00"/>
<path d="M72 36h10v10h-10z" fill="#d3ff00"/>
<path d="M81 36h10v10h-10z" fill="#d7ff00"/>
<path d="M90 36h10v10h-10z" fill="#dbff00"/>
<path d="M99 36h10v10h-10z" fill="#dfff00"/>
<path d="M108 36h10v10h-10z" fill="#e2ff00"/>
<path d="M117 36h10v10h-10z" fill="#e6ff00"/>
<path d="M126 36h10v10h-10z" fill="#eaff00"/>
<path d="M135 36h10v10h-10z" fill="#eeff00"/>
<path d="M144 36h10v10h-10z" fill="#f2ff00"/>
<path d="M153 36h10v10h-10z" fill="#f6ff00"/>
<path d="M162 36h10v10h-10z" fill="#faff00"/>
<path d="M171 36h10v10h-10z" fill="#feff00"/>
<path d="M180 36h10v10h-10z" fill="#fffd00"/>
<path d="M189 36h10v10h-10z" fill="#fff900"/>
<path d="M198 36h10v10h-10z" fill="#fff500"/>
<path d="M207 36h10v10h-10z" fill="#fff100"/>
<path d="M216 36h10v10h-10z" fill="#ffee00"/>
<path d="M225 36h10v10h-10z" fill="#ffea00"/>
<path d="M234 36h10v10h-10z" fill="#ffe700"/>
<path d="M243 36h10v10h-10z" fill="#ffe300"/>
<path d="M252 36h10v10h-10z" fill="#ffe000"/>
<path d="M261 36h10v10h-10z" fill="#ffdd00"/>
<path d="M270 36h10v10h-10z" fill="#ffda00"/>
<path d="M279 36h10v10h-10z" fill="#ffd700"/>
<path d="M-18 45h10v10h-10z" fill="#b2ff06"/>
<path d="M-9 45h10v10h-10z" fill="#b6ff06"/>
<path d="M0 45h10v10h-10z" fill="#b9ff05"/>
<path d="M9 45h10v10h-10z" fill="#bdff04"/>
<path d="M18 45h10v10h-10z" fill="#c1ff03"/>
<path d="M27 45h10v10h-10z" fill="#c4ff03"/>
<path d="M36 45h10v10h-10z" fill="#c8ff02"/>
<path d="M45 45h10v10h-10z" fill="#ccff01"/>
<path d="M54 45h10v10h-10z" fill="#cfff00"/>
<path d="M63 45h10v10h-10z" fill="#d3ff00"/>
<path d="M72 45h10v10h-10z" fill="#d7ff00"/>
<path d="M81 45h10v10h-10z" fill="#daff00"/>
<path d="M90 45h10v10h-10z" fill="#deff00"/>
<path d="M99 45h10v10h-10z" fill="#e2ff00"/>
<path d="M108 45h10v10h-10z" fill="#e6ff00"/>
<path d="M117 45h10v10h-10z" fill="#eaff00"/>
<path d="M126 45h10v10h-10z" fill="#edff00"/>
<path d="M135 45h10v10h-10z" fill="#f1ff00"/>
<path d="M144 45h10v10h-10z" fill="#f5ff00"/>
<path d="M153 45h10v10h-10z" fill="#f9ff00"/>
<path d="M162 45h10v10h-10z" fill="#fdff00"/>
<path d="M171 45h10v10h-10z" fill="#fffd00"/>
<path d="M180 45h10v10h-10z" fill="#fff900"/>
<path d="M189 45h10v10h-10z" fill="#fff500"/>
<path d="M198 45h10v10h-10z" fill="#fff100"/>
<path d="M207 45h10v10h-10z" fill="#ffee00"/>
<path d="M216 45h10v10h-10z" fill="#ffea00"/>
<path d="M225 45h10v10h-10z" fill="#ffe700"/>
<path d="M234 45h10v10h-10z" fill="#ffe300"/>
<path d="M243 45h10v10h-10z" fill="#ffe000"/>
<path d="M252 45h10v10h-10z" fill="#ffdd00"/>
<path d="M261 45h10v10h-10z" fill="#ffda00"/>
<path d="M270 45h10v10h-10z" fill="#ffd700"/>
<path d="M279 45h10v10h-10z" fill="#ffd400"/>
<path d="M-18 54h10v10h-10z" fill="#b5ff08"/>
<path d="M-9 54h10v10h-10z" fill="#b9ff07"/>
<path d="M0 54h10v10h-10z" fill="#bcff06"/>
<path d="M9 54h10v10h-10z" fill="#c0ff06"/>
<path d="M18 54h10v10h-10z" fill="#c4ff05"/>
<path d="M27 54h10v10h-10z" fill="#c7ff04"/>
<path d="M36 54h10v10h-10z" fill="#cbff03"/>
<path d="M45 54h10v10h-10z" fill="#cfff02"/>
<path d="M54 54h10v10h-10z" fill="#d2ff02"/>
<path d="M63 54h10v10h-10z" fill="#d6ff01"/>
<path d="M72 54h10v10h-10z" fill="#daff00"/>
<path d="M81 54h10v10h-10z" fill="#deff00"/>
<path d="M90 54h10v10h-10z" fill="#e1ff00"/>
<path d="M99 54h10v10h-10z" fill="#e5ff00"/>
<path d="M108 54h10v10h-10z" fill="#e9ff00"/>
<path d="M117 54h10v10h-10z" fill="#edff00"/>
<path d="M126 54h10v10h-10z" fill="#f1ff00"/>
<path d="M135 54h10v10h-10z" fill="#f5ff00"/>
<path d="M144 54h10v10h-10z" fill="#f9ff00"/>
<path d="M153 54h10v10h-10z" fill="#fdff00"/>
<path d="M162 54h10v10h-10z" fill="#fffd00"/>
<path d="M171 54h10v10h-10z" fill="#fff900"/>
<path d="M180 54h10v10h-10z" fill="#fff500"/>
<path d="M189 54h10v10h-10z" fill="#fff200"/>
<path d="M198 54h10v10h-10z" fill="#ffee00"/>
<path d="M207 54h10v10h-10z" fill="#ffea00"/>
<path d="M216 54h10v10h-10z" fill="#ffe700"/>
<path d="M225 54h10v10h-10z" fill="#ffe400"/>
<path d="M234 54h10v10h-10z" fill="#ffe000"/>
<path d="M243 54h10v10h-10z" fill="#ffdd00"/>
<path d="M252 54h10v10h-10z" fill="#ffda00"/>
<path d="M261 54h10v10h-10z" fill="#ffd700"/>
<path d="M270 54h10v10h-10z" fill="#ffd400"/>
<path d="M279 54h10v10h-10z" fill="#ffd100"/>
<path d="M-18 63h10v10h-10z" fill="#b8ff0a"/>
<path d="M-9 63h10v10h-10z" fill="#bcff09"/>
<path d="M0 63h10v10h-10z" fill="#bfff08"/>
<path d="M9 63h10v10h-10z" fill="#c3ff07"/>
<path d="M18 63h10v10h-10z" fill="#c7ff06"/>
<path d="M27 63h10v10h-10z" fill="#caff06"/>
<path d="M36 63h10v10h-10z" fill="#ceff05"/>
<path d="M45 63h10v10h-10z" fill="#d2ff04"/>
<path d="M54 63h10v10h-10z" fill="#d6ff03"/>
<path d="M63 63h10v10h-10z" fill="#d9ff02"/>
<path d="M72 63h10v10h-10z" fill="#ddff02"/>
<path d="M81 63h10v10h-10z" fill="#e1ff01"/>
<path d="M90 63h10v10h-10z" fill="#e5ff00"/>
<path d="M99 63h10v10h-10z" fill="#e9ff00"/>
<path d="M108 63h10v10h-10z" fill="#edff00"/>
<path d="M117 63h10v10h-10z" fill="#f1ff00"/>
<path d="M126 63h10v10h-10z" fill="#f4ff00"/>
<path d="M135 63h10v10h-10z" fill="#f8ff00"/>
<path d="M144 63h10v10h-10z" fill="#fdff00"/>
<path d="M153 63h10v10h-10z" fill="#fffd00"/>
<path d="M162 63h10v10h-10z" fill="#fffa00"/>
<path d="M171 63h10v10h-10z" fill="#fff600"/>
<path d="M180 63h10v10h-10z" fill="#fff200"/>
<path d="M189 63h10v10h-10z" fill="#ffee00"/>
<path d="M198 63h10v10h-10z" fill="#ffeb00"/>
<path d="M207 63h10v10h-10z" fill="#ffe700"/>
<path d="M216 63h10v10h-10z" fill="#ffe400"/>
<path d="M225 63h10v10h-10z" fill="#ffe000"/>
<path d="M234 63h10v10h-10z" fill="#ffdd00"/>
<path d="M243 63h10v10h-10z" fill="#ffda00"/>
<path d="M252 63h10v10h-10z" fill="#ffd700"/>
<path d="M261 63h10v10h-10z" fill="#ffd400"/>
<path d="M270 63h10v10h-10z" fill="#ffd100"/>
<path d="M279 63h10v10h-10z" fill="#ffce00"/>
<path d="M-18 72h10v10h-10z" fill="#bbff0b"/>
<path d="M-9 72h10v10h-10z" fill="#bfff0a"/>
<path d="M0 72h10v10h-10z" fill="#c2ff0a"/>
<path d="M9 72h10v10h-10z" fill="#c6ff09"/>
<path d="M18 72h10v10h-10z" fill="#caff08"/>
<path d="M27 72h10v10h-10z" fill="#cdff07"/>
<path d="M36 72h10v10h-10z" fill="#d1ff06"/>
<path d="M45 72h10v10h-10z" fill="#d5ff06"/>
<path d="M54 72h10v10h-10z" fill="#d9ff05"/>
<path d="M63 72h10v10h-10z" fill="#ddff04"/>
<path d="M72 72h10v10h-10z" fill="#e0ff03"/>
<path d="M81 72h10v10h-10z" fill="#e4ff02"/>
<path d="M90 72h10v10h-10z" fill="#e8ff02"/>
<path d="M99 72h10v10h-10z" fill="#ecff01"/>
<path d="M108 72h10v10h-10z" fill="#f0ff00"/>
<path d="M117 72h10v10h-10z" fill="#f4ff00"/>
<path d="M126 72h10v10h-10z" fill="#f8ff00"/>
<path d="M135 72h10v10h-10z" fill="#fcff00"/>
<path d="M144 72h10v10h-10z" fill="#fffe00"/>
<path d="M153 72h10v10h-10z" fill="#fffa00"/>
<path d="M162 72h10v10h-10z" fill="#fff600"/>
<path d="M171 72h10v10h-10z" fill="#fff200"/>
<path d="M180 72h10v10h-10z" fill="#ffee00"/>
<path d="M189 72h10v10h-10z" fill="#ffeb00"/>
<path d="M198 72h10v10h-10z" fill="#ffe700"/>
<path d="M207 72h10v10h-10z" fill="#ffe400"/>
<path d="M216 72h10v10h-10z" fill="#ffe000"/>
<path d="M225 72h10v10h-10z" fill="#ffdd00"/>
<path d="M234 72h10v10h-10z" fill="#ffda00"/>
<path d="M243 72h10v10h-10z" fill="#ffd700"/>
<path d="M252 72h10v10h-10z" fill="#ffd400"/>
<path d="M261 72h10v10h-10z" fill="#ffd100"/>
<path d="M270 72h10v10h-10z" fill="#ffce00"/>
<path d="M279 72h10v10h-10z" fill="#ffcb00"/>
<path d="M-18 81h10v10h-10z" fill="#beff0d"/>
<path d="M-9 81h10v10h-10z" fill="#c2ff0c"/>
<path d="M0 81h10v10h-10z" fill="#c5ff0b"/>
<path d="M9 81h10v10h-10z" fill="#c9ff0b"/>
<path d="M18 81h10v10h-10z" fill="#cdff0a"/>
<path d="M27 81h10v10h-10z" fill="#d1ff09"/>
<path d="M36 81h10v10h-10z" fill="#d4ff08"/>
<path d="M45 81h10v10h-10z" fill="#d8ff07"/>
<path d="M54 81h10v10h-10z" fill="#dcff07"/>
<path d="M63 81h10v10h-10z" fill="#e0ff06"/>
<path d="M72 81h10v10h-10z" fill="#e4ff05"/>
<path d="M81 81h10v10h-10z" fill="#e8ff04"/>
<path d="M90 81h10v10h-10z" fill="#ecff03"/>
<path d="M99 81h10v10h-10z" fill="#f0ff02"/>
<path d="M108 81h10v10h-10z" fill="#f4ff02"/>
<path d="M117 81h10v10h-10z" fill="#f8ff01"/>
<path d="M126 81h10v10h-10z" fill="#fcff00"/>
<path d="M135 81h10v10h-10z" fill="#fffe00"/>
<path d="M144 81h10v10h-10z" fill="#fffa00"/>
<path d="M153 81h10v10h-10z" fill="#fff600"/>
<path d="M162 81h10v10h-10z" fill="#fff200"/>
<path d="M171 81h10v10h-10z" fill="#ffef00"/>
<path d="M180 81h10v10h-10z" fill="#ffeb00"/>
<path d="M189 81h10v10h-10z" fill="#ffe700"/>
<path d="M198 81h10v10h-10z" fill="#ffe400"/>
<path d="M207 81h10v10h-10z" fill="#ffe000"/>
<path d="M216 81h10v10h-10z" fill="#ffdd00"/>
<path d="M225 81h10v10h-10z" fill="#ffda00"/>
<path d="M234 81h10v10h-10z" fill="#ffd700"/>
<path d="M243 81h10v10h-10z" fill="#ffd400"/>
<path d="M252 81h10v10h-10z" fill="#ffd100"/>
<path d="M261 81h10v10h-10z" fill="#ffce00"/>
<path d="M270 81h10v10h-10z" fill="#ffcb00"/>
<path d="M279 81h10v10h-10z" fill="#ffc800"/>
<path d="M-18 90h10v10h-10z" fill="#c1ff0f"/>
<path d="M-9 90h10v10h-10z" fill="#c5ff0e"/>
<path d="M0 90h10v10h-10z" fill="#c8ff0d"/>
<path d="M9 90h10v10h-10z" fill="#ccff0c"/>
<path d="M18 90h10v10h-10z" fill="#d0ff0b"/>
<path d="M27 90h10v10h-10z" fill="#d4ff0b"/>
<path d="M36 90h10v10h-10z" fill="#d8ff0a"/>
<path d="M45 90h10v10h-10z" fill="#dcff09"/>
<path d="M54 90h10v10h-10z" fill="#dfff08"/>
<path d="M63 90h10v10h-10z" fill="#e3ff07"/>
<path d="M72 90h10v10h-10z" fill="#e7ff07"/>
<path d="M81 90h10v10h-10z" fill="#ebff06"/>
<path d="M90 90h10v10h-10z" fill="#efff05"/>
<path d="M99 90h10v10h-10z" fill="#f3ff04"/>
<path d="M108 90h10v10h-10z" fill="#f7ff03"/>
<path d="M117 90h10v10h-10z" fill="#fbff02"/>
<path d="M126 90h10v10h-10z" fill="#fffe01"/>
<path d="M135 90h10v10h-10z" fill="#fffa01"/>
<path d="M144 90h10v10h-10z" fill="#fff600"/>
<path d="M153 90h10v10h-10z" fill="#fff300"/>
<path d="M162 90h10v10h-10z" fill="#ffef00"/>
<path d="M171 90h10v10h-10z" fill="#ffeb00"/>
<path d="M180 90h10v10h-10z" fill="#ffe800"/>
<path d="M189 90h10v10h-10z" fill="#ffe400"/>
<path d="M198 90h10v10h-10z" fill="#ffe100"/>
<path d="M207 90h10v10h-10z" fill="#ffdd00"/>
<path d="M216 90h10v10h-10z" fill="#ffda00"/>
<path d="M225 90h10v10h-10z" fill="#ffd700"/>
<path d="M234 90h10v10h-10z" fill="#ffd400"/>
<path d="M243 90h10v10h-10z" fill="#ffd100"/>
<path d="M252 90h10v10h-10z" fill="#ffce00"/>
<path d="M261 90h10v10h-10z" fill="#ffcb00"/>
<path d="M270 90h10v10h-10z" fill="#ffc800"/>
<path d="M279 90h10v10h-10z" fill="#ffc500"/>
<path d="M-18 99h10v10h-10z" fill="#c4ff10"/>
<path d="M-9 99h10v10h-10z" fill="#c8ff10"/>
<path d="M0 99h10v10h-10z" fill="#ccff0f"/>
<path d="M9 99h10v10h-10z" fill="#cfff0e"/>
<path d="M18 99h10v10h-10z" fill="#d3ff0d"/>
<path d="M27 99h10v10h-10z" fill="#d7ff0c"/>
<path d="M36 99h10v10h-10z" fill="#dbff0c"/>
<path d="M45 99h10v10h-10z" fill="#dfff0b"/>
<path d="M54 99h10v10h-10z" fill="#e3ff0a"/>
<path d="M63 99h10v10h-10z" fill="#e7ff09"/>
<path d="M72 99h10v10h-10z" fill="#ebff08"/>
<path d="M81 99h10v10h-10z" fill="#efff07"/>
<path d="M90 99h10v10h-10z" fill="#f3ff07"/>
<path d="M99 99h10v10h-10z" fill="#f7ff06"/>
<path d="M108 99h10v10h-10z" fill="#fbff05"/>
<path d="M117 99h10v10h-10z" fill="#ffff04"/>
<path d="M126 99h10v10h-10z" fill="#fffb03"/>
<path d="M135 99h10v10h-10z" fill="#fff702"/>
<path d="M144 99h10v10h-10z" fill="#fff301"/>
<path d="M153 99h10v10h-10z" fill="#ffef01"/>
<path d="M162 99h10v10h-10z" fill="#ffeb00"/>
<path d="M171 99h10v10h-10z" fill="#ffe800"/>
<path d="M180 99h10v10h-10z" fill="#ffe400"/>
<path d="M189 99h10v10h-10z" fill="#ffe100"/>
<path d="M198 99h10v10h-10z" fill="#ffdd00"/>
<path d="M207 99h10v10h-10z" fill="#ffda00"/>
<path d="M216 99h10v10h-10z" fill="#ffd700"/>
<path d="M225 99h10v10h-10z" fill="#ffd400"/>
<path d="M234 99h10v10h-10z" fill="#ffd100"/>
<path d="M243 99h10v10h-10z" fill="#ffce00"/>
<path d="M252 99h10v10h-10z" fill="#ffcb00"/>
<path d="M261 99h10v10h-10z" fill="#ffc800"/>
<path d="M270 99h10v10h-10z" fill="#ffc500"/>
<path d="M279 99h10v10h-10z" fill="#ffc200"/>
<path d="M-18 108h10v10h-10z" fill="#c7ff12"/>
<path d="M-9 108h10v10h-10z" fill="#cbff11"/>
<path d="M0 108h10v10h-10z" fill="#cfff11"/>
<path d="M9 108h10v10h-10z" fill="#d3ff10"/>
<path d="M18 108h10v10h-10z" fill="#d7ff0f"/>
<path d="M27 108h10v10h-10z" fill="#daff0e"/>
<path d="M36 108h10v10h-10z" fill="#deff0d"/>
<path d="M45 108h10v10h-10z" fill="#e2ff0c"/>
<path d="M54 108h10v10h-10z" fill="#e6ff0c"/>
<path d="M63 108h10v10h-10z" fill="#eaff0b"/>
<path d="M72 108h10v10h-10z" fill="#eeff0a"/>
<path d="M81 108h10v10h-10z" fill="#f3ff09"/>
<path d="M90 108h10v10h-10z" fill="#f7ff08"/>
<path d="M99 108h10v10h-10z" fill="#fbff07"/>
<path d="M108 108h10v10h-10z" fill="#ffff07"/>
<path d="M117 108h10v10h-10z" fill="#fffb06"/>
<path d="M126 108h10v10h-10z" fill="#fff705"/>
<path d="M135 108h10v10h-10z" fill="#fff304"/>
<path d="M144 108h10v10h-10z" fill="#ffef03"/>
<path d="M153 108h10v10h-10z" fill="#ffeb02"/>
<path d="M162 108h10v10h-10z" fill="#ffe801"/>
<path d="M171 108h10v10h-10z" fill="#ffe400"/>
<path d="M180 108h10v10h-10z" fill="#ffe100"/>
<path d="M189 108h10v10h-10z" fill="#ffdd00"/>
<path d="M198 108h10v10h-10z" fill="#ffda00"/>
<path d="M207 108h10v10h-10z" fill="#ffd700"/>
<path d="M216 108h10v10h-10z" fill="#ffd400"/>
<path d="M225 108h10v10h-10z" fill="#ffd100"/>
<path d="M234 108h10v10h-10z" fill="#ffce00"/>
<path d="M243 108h10v10h-10z" fill="#ffcb00"/>
<path d="M252 108h10v10h-10z" fill="#ffc800"/>
<path d="M261 108h10v10h-10z" fill="#ffc500"/>
<path d="M270 108h10v10h-10z" fill="#ffc200"/>
<path d="M279 108h10v10h-10z" fill="#ffbf00"/>
<path d="M-18 117h10v10h-10z" fill="#caff14"/>
<path d="M-9 117h10v10h-10z" fill="#ceff13"/>
<path d="M0 117h10v10h-10z" fill="#d2ff12"/>
<path d="M9 117h10v10h-10z" fill="#d6ff11"/>
<path d="M18 117h10v10h-10z" fill="#daff11"/>
<path d="M27 117h10v10h-10z" fill="#deff10"/>
<path d="M36 117h10v10h-10z" fill="#e2ff0f"/>
<path d="M45 117h10v10h-10z" fill="#e6ff0e"/>
<path d="M54 117h10v10h-10z" fill="#eaff0d"/>
<path d="M63 117h10v10h-10z" fill="#eeff0d"/>
<path d="M72 117h10v10h-10z" fill="#f2ff0c"/>
<path d="M81 117h10v10h-10z" fill="#f6ff0b"/>
<path d="M90 117h10v10h-10z" fill="#faff0a"/>
<path d="M99 117h10v10h-10z" fill="#ffff09"/>
<path d="M108 117h10v10h-10z" fill="#fffb08"/>
<path d="M117 117h10v10h-10z" fill="#fff707"/>
<path d="M126 117h10v10h-10z" fill="#fff306"/>
<path d="M135 117h10v10h-10z" fill="#ffef05"/>
<path d="M144 117h10v10h-10z" fill="#ffec05"/>
<path d="M153 117h10v10h-10z" fill="#ffe804"/>
<path d="M162 117h10v10h-10z" fill="#ffe403"/>
<path d="M171 117h10v10h-10z" fill="#ffe102"/>
<path d="M180 117h10v10h-10z" fill="#ffdd01"/>
<path d="M189 117h10v10h-10z" fill="#ffda00"/>
<path d="M198 117h10v10h-10z" fill="#ffd700"/>
<path d="M207 117h10v10h-10z" fill="#ffd400"/>
<path d="M216 117h10v10h-10z" fill="#ffd100"/>
<path d="M225 117h10v10h-10z" fill="#ffcd00"/>
<path d="M234 117h10v10h-10z" fill="#ffcb00"/>
<path d="M243 117h10v10h-10z" fill="#ffc800"/>
<path d="M252 117h10v10h-10z" fill="#ffc500"/>
<path d="M261 117h10v10h-10z" fill="#ffc200"/>
<path d="M270 117h10v10h-10z" fill="#ffbf00"/>
<path d="M279 117h10v10h-10z" fill="#ffbd00"/>
<path d="M-18 126h10v10h-10z" fill="#ceff16"/>
<path d="M-9 126h10v10h-10z" fill="#d1ff15"/>
<path d="M0 126h10v10h-10z" fill="#d5ff14"/>
<path d="M9 126h10v10h-10z" fill="#d9ff13"/>
<path d="M18 126h10v10h-10z" fill="#ddff13"/>
<path d="M27 126h10v10h-10z" fill="#e1ff12"/>
<path d="M36 126h10v10h-10z" fill="#e5ff11"/>
<path d="M45 126h10v10h-10z" fill="#e9ff10"/>
<path d="M54 126h10v10h-10z" fill="#eeff0f"/>
<path d="M63 126h10v10h-10z" fill="#f2ff0e"/>
<path d="M72 126h10v10h-10z" fill="#f6ff0e"/>
<path d="M81 126h10v10h-10z" fill="#faff0d"/>
<path d="M90 126h10v10h-10z" fill="#feff0c"/>
<path d="M99 126h10v10h-10z" fill="#fffc0b"/>
<path d="M108 126h10v10h-10z" fill="#fff70a"/>
<path d="M117 126h10v10h-10z" fill="#fff409"/>
<path d="M126 126h10v10h-10z" fill="#fff008"/>
<path d="M135 126h10v10h-10z" fill="#ffec07"/>
<path d="M144 126h10v10h-10z" fill="#ffe806"/>
<path d="M153 126h10v10h-10z" fill="#ffe505"/>
<path d="M162 126h10v10h-10z" fill="#ffe104"/>
<path d="M171 126h10v10h-10z" fill="#ffde03"/>
<path d="M180 126h10v10h-10z" fill="#ffda03"/>
<path d="M189 126h10v10h-10z" fill="#ffd702"/>
<path d="M198 126h10v10h-10z" fill="#ffd401"/>
<path d="M207 126h10v10h-10z" fill="#ffd100"/>
<path d="M216 126h10v10h-10z" fill="#ffcd00"/>
<path d="M225 126h10v10h-10z" fill="#ffca00"/>
<path d="M234 126h10v10h-10z" fill="#ffc800"/>
<path d="M243 126h10v10h-10z" fill="#ffc500"/>
<path d="M252 126h10v10h-10z" fill="#ffc200"/>
<path d="M261 126h10v10h-10z" fill="#ffbf00"/>
<path d="M270 126h10v10h-10z" fill="#ffbc00"/>
<path d="M279 126h10v10h-10z" fill="#ffba00"/>
<path d="M-18 135h10v10h-10z" fill="#d1ff18"/>
<path d="M-9 135h10v10h-10z" fill="#d5ff17"/>
<path d="M0 135h10v10h-10z" fill="#d9ff16"/>
<path d="M9 135h10v10h-10z" fill="#ddff15"/>
<path d="M18 135h10v10h-10z" fill="#e1ff14"/>
<path d="M27 135h10v10h-10z" fill="#e5ff14"/>
<path d="M36 135h10v10h-10z" fill="#e9ff13"/>
<path d="M45 135h10v10h-10z" fill="#edff12"/>
<path d="M54 135h10v10h-10z" fill="#f1ff11"/>
<path d="M63 135h10v10h-10z" fill="#f5ff10"/>
<path d="M72 135h10v10h-10z" fill="#faff0f"/>
<path d="M81 135h10v10h-10z" fill="#feff0f"/>
<path d="M90 135h10v10h-10z" fill="#fffc0e"/>
<path d="M99 135h10v10h-10z" fill="#fff80d"/>
<path d="M108 135h10v10h-10z" fill="#fff40b"/>
<path d="M117 135h10v10h-10z" fill="#fff00a"/>
<path d="M126 135h10v10h-10z" fill="#ffec0a"/>
<path d="M135 135h10v10h-10z" fill="#ffe809"/>
<path d="M144 135h10v10h-10z" fill="#ffe508"/>
<path d="M153 135h10v10h-10z" fill="#ffe107"/>
<path d="M162 135h10v10h-10z" fill="#ffde06"/>
<path d="M171 135h10v10h-10z" fill="#ffda05"/>
<path d="M180 135h10v10h-10z" fill="#ffd704"/>
<path d="M189 135h10v10h-10z" fill="#ffd403"/>
<path d="M198 135h10v10h-10z" fill="#ffd103"/>
<path d="M207 135h10v10h-10z" fill="#ffcd02"/>
<path d="M216 135h10v10h-10z" fill="#ffca01"/>
<path d="M225 135h10v10h-10z" fill="#ffc700"/>
<path d="M234 135h10v10h-10z" fill="#ffc500"/>
<path d="M243 135h10v10h-10z" fill="#ffc200"/>
<path d="M252 135h10v10h-10z" fill="#ffbf00"/>
<path d="M261 135h10v10h-10z" fill="#ffbc00"/>
<path d="M270 135h10v10h-10z" fill="#ffba00"/>
<path d="M279 135h10v10h-10z" fill="#ffb700"/>
<path d="M-18 144h10v10h-10z" fill="#d4ff19"/>
<path d="M-9 144h10v10h-10z" fill="#d8ff19"/>
<path d="M0 144h10v10h-10z" fill="#dcff18"/>
<path d="M9 144h10v10h-10z" fill="#e0ff17"/>
<path d="M18 144h10v10h-10z" fill="#e4ff16"/>
<path d="M27 144h10v10h-10z" fill="#e9ff15"/>
<path d="M36 144h10v10h-10z" fill="#edff15"/>
<path d="M45 144h10v10h-10z" fill="#f1ff14"/>
<path d="M54 144h10v10h-10z" fill="#f5ff13"/>
<path d="M63 144h10v10h-10z" fill="#f9ff12"/>
<path d="M72 144h10v10h-10z" fill="#feff11"/>
<path d="M81 144h10v10h-10z" fill="#fffc10"/>
<path d="M90 144h10v10h-10z" fill="#fff80f"/>
<path d="M99 144h10v10h-10z" fill="#fff40e"/>
<path d="M108 144h10v10h-10z" fill="#fff00d"/>
<path d="M117 144h10v10h-10z" fill="#ffec0c"/>
<path d="M126 144h10v10h-10z" fill="#ffe80b"/>
<path d="M135 144h10v10h-10z" fill="#ffe50a"/>
<path d="M144 144h10v10h-10z" fill="#ffe109"/>
<path d="M153 144h10v10h-10z" fill="#ffde08"/>
<path d="M162 144h10v10h-10z" fill="#ffda07"/>
<path d="M171 144h10v10h-10z" fill="#ffd706"/>
<path d="M180 144h10v10h-10z" fill="#ffd406"/>
<path d="M189 144h10v10h-10z" fill="#ffd105"/>
<path d="M198 144h10v10h-10z" fill="#ffcd04"/>
<path d="M207 144h10v10h-10z" fill="#ffca03"/>
<path d="M216 144h10v10h-10z" fill="#ffc702"/>
<path d="M225 144h10v10h-10z" fill="#ffc402"/>
<path d="M234 144h10v10h-10z" fill="#ffc201"/>
<path d="M243 144h10v10h-10z" fill="#ffbf00"/>
<path d="M252 144h10v10h-10z" fill="#ffbc00"/>
<path d="M261 144h10v10h-10z" fill="#ffb900"/>
<path d="M270 144h10v10h-10z" fill="#ffb700"/>
<path d="M279 144h10v10h-10z" fill="#ffb400"/>
<path d="M-18 153h10v10h-10z" fill="#d8ff1b"/>
<path d="M-9 153h10v10h-10z" fill="#dcff1b"/>
<path d="M0 153h10v10h-10z" fill="#e0ff1a"/>
<path d="M9 153h10v10h-10z" fill="#e4ff19"/>
<path d="M18 153h10v10h-10z" fill="#e8ff18"/>
<path d="M27 153h10v10h-10z" fill="#ecff17"/>
<path d="M36 153h10v10h-10z" fill="#f0ff17"/>
<path d="M45 153h10v10h-10z" fill="#f5ff16"/>
<path d="M54 153h10v10h-10z" fill="#f9ff15"/>
<path d="M63 153h10v10h-10z" fill="#fdff14"/>
<path d="M72 153h10v10h-10z" fill="#fffd13"/>
<path d="M81 153h10v10h-10z" fill="#fff812"/>
<path d="M90 153h10v10h-10z" fill="#fff411"/>
<path d="M99 153h10v10h-10z" fill="#fff010"/>
<path d="M108 153h10v10h-10z" fill="#ffec0f"/>
<path d="M117 153h10v10h-10z" fill="#ffe90e"/>
<path d="M126 153h10v10h-10z" fill="#ffe50d"/>
<path d="M135 153h10v10h-10z" fill="#ffe10c"/>
<path d="M144 153h10v10h-10z" fill="#ffde0b"/>
<path d="M153 153h10v10h-10z" fill="#ffda0a"/>
<path d="M162 153h10v10h-10z" fill="#ffd709"/>
<path d="M171 153h10v10h-10z" fill="#ffd408"/>
<path d="M180 153h10v10h-10z" fill="#ffd107"/>
<path d="M189 153h10v10h-10z" fill="#ffcd06"/>
<path d="M198 153h10v10h-10z" fill="#ffca05"/>
<path d="M207 153h10v10h-10z" fill="#ffc705"/>
<path d="M216 153h10v10h-10z" fill="#ffc404"/>
<path d="M225 153h10v10h-10z" fill="#ffc203"/>
<path d="M234 153h10v10h-10z" fill="#ffbf02"/>
<path d="M243 153h10v10h-10z" fill="#ffbc02"/>
<path d="M252 153h10v10h-10z" fill="#ffb901"/>
<path d="M261 153h10v10h-10z" fill="#ffb700"/>
<path d="M270 153h10v10h-10z" fill="#ffb400"/>
<path d="M279 153h10v10h-10z" fill="#ffb200"/>
<path d="M-18 162h10v10h-10z" fill="#dbff1d"/>
<path d="M-9 162h10v10h-10z" fill="#dfff1d"/>
<path d="M0 162h10v10h-10z" fill="#e3ff1c"/>
<path d="M9 162h10v10h-10z" fill="#e8ff1b"/>
<path d="M18 162h10v10h-10z" fill="#ecff1a"/>
<path d="M27 162h10v10h-10z" fill="#f0ff19"/>
<path d="M36 162h10v10h-10z" fill="#f4ff19"/>
<path d="M45 162h10v10h-10z" fill="#f8ff18"/>
<path d="M54 162h10v10h-10z" fill="#fdff17"/>
<path d="M63 162h10v10h-10z" fill="#fffd16"/>
<path d="M72 162h10v10h-10z" fill="#fff915"/>
<path d="M81 162h10v10h-10z" fill="#fff514"/>
<path d="M90 162h10v10h-10z" fill="#fff012"/>
<path d="M99 162h10v10h-10z" fill="#ffed11"/>
<path d="M108 162h10v10h-10z" fill="#ffe910"/>
<path d="M117 162h10v10h-10z" fill="#ffe50f"/>
<path d="M126 162h10v10h-10z" fill="#ffe10e"/>
<path d="M135 162h10v10h-10z" fill="#ffde0d"/>
<path d="M144 162h10v10h-10z" fill="#ffda0c"/>
<path d="M153 162h10v10h-10z" fill="#ffd70b"/>
<path d="M162 162h10v10h-10z" fill="#ffd40a"/>
<path d="M171 162h10v10h-10z" fill="#ffd109"/>
<path d="M180 162h10v10h-10z" fill="#ffcd09"/>
<path d="M189 162h10v10h-10z" fill="#ffca08"/>
<path d="M198 162h10v10h-10z" fill="#ffc707"/>
<path d="M207 162h10v10h-10z" fill="#ffc406"/>
<path d="M216 162h10v10h-10z" fill="#ffc105"/>
<path d="M225 162h10v10h-10z" fill="#ffbf04"/>
<path d="M234 162h10v10h-10z" fill="#ffbc04"/>
<path d="M243 162h10v10h-10z" fill="#ffb903"/>
<path d="M252 162h10v10h-10z" fill="#ffb702"/>
<path d="M261 162h10v10h-10z" fill="#ffb401"/>
<path d="M270 162h10v10h-10z" fill="#ffb101"/>
<path d="M279 162h10v10h-10z" fill="#ffaf00"/>
<path d="M-18 171h10v10h-10z" fill="#dfff1f"/>
<path d="M-9 171h10v10h-10z" fill="#e3ff1f"/>
<path d="M0 171h10v10h-10z" fill="#e7ff1e"/>
<path d="M9 171h10v10h-10z" fill="#ebff1d"/>
<path d="M18 171h10v10h-10z" fill="#f0ff1c"/>
<path d="M27 171h10v10h-10z" fill="#f4ff1b"/>
<path d="M36 171h10v10h-10z" fill="#f8ff1b"/>
<path d="M45 171h10v10h-10z" fill="#fcff1a"/>
<path d="M54 171h10v10h-10z" fill="#fffd19"/>
<path d="M63 171h10v10h-10z" fill="#fff917"/>
<path d="M72 171h10v10h-10z" fill="#fff516"/>
<path d="M81 171h10v10h-10z" fill="#fff115"/>
<path d="M90 171h10v10h-10z" fill="#ffed14"/>
<path d="M99 171h10v10h-10z" fill="#ffe913"/>
<path d="M108 171h10v10h-10z" fill="#ffe512"/>
<path d="M117 171h10v10h-10z" fill="#ffe211"/>
<path d="M126 171h10v10h-10z" fill="#ffde10"/>
<path d="M135 171h10v10h-10z" fill="#ffda0f"/>
<path d="M144 171h10v10h-10z" fill="#ffd70e"/>
<path d="M153 171h10v10h-10z" fill="#ffd40d"/>
<path d="M162 171h10v10h-10z" fill="#ffd10c"/>
<path d="M171 171h10v10h-10z" fill="#ffcd0b"/>
<path d="M180 171h10v10h-10z" fill="#ffca0a"/>
<path d="M189 171h10v10h-10z" fill="#ffc709"/>
<path d="M198 171h10v10h-10z" fill="#ffc408"/>
<path d="M207 171h10v10h-10z" fill="#ffc107"/>
<path d="M216 171h10v10h-10z" fill="#ffbe07"/>
<path d="M225 171h10v10h-10z" fill="#ffbc06"/>
<path d="M234 171h10v10h-10z" fill="#ffb905"/>
<path d="M243 171h10v10h-10z" fill="#ffb604"/>
<path d="M252 171h10v10h-10z" fill="#ffb403"/>
<path d="M261 171h10v10h-10z" fill="#ffb103"/>
<path d="M270 171h10v10h-10z" fill="#ffaf02"/>
<path d="M279 171h10v10h-10z" fill="#ffac01"/>
<path d="M-18 180h10v10h-10z" fill="#e2ff21"/>
<path d="M-9 180h10v10h-10z" fill="#e7ff21"/>
<path d="M0 180h10v10h-10z" fill="#ebff20"/>
<path d="M9 180h10v10h-10z" fill="#efff1f"/>
<path d="M18 180h10v10h-10z" fill="#f3ff1e"/>
<path d="M27 180h10v10h-10z" fill="#f8ff1d"/>
<path d="M36 180h10v10h-10z" fill="#fcff1d"/>
<path d="M45 180h10v10h-10z" fill="#fffe1c"/>
<path d="M54 180h10v10h-10z" fill="#fff91a"/>
<path d="M63 180h10v10h-10z" fill="#fff519"/>
<path d="M72 180h10v10h-10z" fill="#fff118"/>
<path d="M81 180h10v10h-10z" fill="#ffed17"/>
<path d="M90 180h10v10h-10z" fill="#ffe915"/>
<path d="M99 180h10v10h-10z" fill="#ffe514"/>
<path d="M108 180h10v10h-10z" fill="#ffe213"/>
<path d="M117 180h10v10h-10z" fill="#ffde12"/>
<path d="M126 180h10v10h-10z" fill="#ffdb11"/>
<path d="M135 180h10v10h-10z" fill="#ffd710"/>
<path d="M144 180h10v10h-10z" fill="#ffd40f"/>
<path d="M153 180h10v10h-10z" fill="#ffd00e"/>
<path d="M162 180h10v10h-10z" fill="#ffcd0d"/>
<path d="M171 180h10v10h-10z" fill="#ffca0c"/>
<path d="M180 180h10v10h-10z" fill="#ffc70b"/>
<path d="M189 180h10v10h-10z" fill="#ffc40b"/>
<path d="M198 180h10v10h-10z" fill="#ffc10a"/>
<path d="M207 180h10v10h-10z" fill="#ffbe09"/>
<path d="M216 180h10v10h-10z" fill="#ffbc08"/>
<path d="M225 180h10v10h-10z" fill="#ffb907"/>
<path d="M234 180h10v10h-10z" fill="#ffb606"/>
<path d="M243 180h10v10h-10z" fill="#ffb406"/>
<path d="M252 180h10v10h-10z" fill="#ffb105"/>
<path d="M261 180h10v10h-10z" fill="#ffae04"/>
<path d="M270 180h10v10h-10z" fill="#ffac03"/>
<path d="M279 180h10v10h-10z" fill="#ffaa03"/>
<path d="M-18 189h10v10h-10z" fill="#e6ff23"/>
<path d="M-9 189h10v10h-10z" fill="#eaff23"/>
<path d="M0 189h10v10h-10z" fill="#efff22"/>
<path d="M9 189h10v10h-10z" fill="#f3ff21"/>
<path d="M18 189h10v10h-10z" fill="#f7ff20"/>
<path d="M27 189h10v10h-10z" fill="#fcff1f"/>
<path d="M36 189h10v10h-10z" fill="#fffe1f"/>
<path d="M45 189h10v10h-10z" fill="#fffa1d"/>
<path d="M54 189h10v10h-10z" fill="#fff51c"/>
<path d="M63 189h10v10h-10z" fill="#fff11b"/>
<path d="M72 189h10v10h-10z" fill="#ffed19"/>
<path d="M81 189h10v10h-10z" fill="#ffe918"/>
<path d="M90 189h10v10h-10z" fill="#ffe517"/>
<path d="M99 189h10v10h-10z" fill="#ffe216"/>
<path d="M108 189h10v10h-10z" fill="#ffde15"/>
<path d="M117 189h10v10h-10z" fill="#ffdb14"/>
<path d="M126 189h10v10h-10z" fill="#ffd713"/>
<path d="M135 189h10v10h-10z" fill="#ffd412"/>
<path d="M144 189h10v10h-10z" fill="#ffd011"/>
<path d="M153 189h10v10h-10z" fill="#ffcd10"/>
<path d="M162 189h10v10h-10z" fill="#ffca0f"/>
<path d="M171 189h10v10h-10z" fill="#ffc70e"/>
<path d="M180 189h10v10h-10z" fill="#ffc40d"/>
<path d="M189 189h10v10h-10z" fill="#ffc10c"/>
<path d="M198 189h10v10h-10z" fill="#ffbe0b"/>
<path d="M207 189h10v10h-10z" fill="#ffbb0a"/>
<path d="M216 189h10v10h-10z" fill="#ffb909"/>
<path d="M225 189h10v10h-10z" fill="#ffb609"/>
<path d="M234 189h10v10h-10z" fill="#ffb308"/>
<path d="M243 189h10v10h-10z" fill="#ffb107"/>
<path d="M252 189h10v10h-10z" fill="#ffae06"/>
<path d="M261 189h10v10h-10z" fill="#ffac05"/>
<path d="M270 189h10v10h-10z" fill="#ffa905"/>
<path d="M279 189h10v10h-10z" fill="#ffa704"/>
</g>
<path d="M-134.5 -51.9 L403.5 229.2 L403.5 -300 L-134.5 -300 Z" fill="#000" fill-opacity="0.40"/>
<rect x="125.2" y="79.1" width="18" height="18" fill="none" stroke="#fff" stroke-width="2"/>
<circle cx="121.5" cy="85.6" r="5.3" fill="#ecec00" stroke="#0c0c0c" stroke-width="1.6"/>
<rect x="1" y="1" width="267.0" height="175.0" fill="none" stroke="#7c7c7c" stroke-width="2.4"/>
</svg>
<div style="left:2199.0px;top:912.5px;width:341.0px;height:36.5px;background:#323232;"></div>
<div class="t" style="left:2199.6px;top:918.7px;font-size:27.9px;line-height:27.9px;color:#f2f2f2;transform:scaleX(0.9572);transform-origin:left center;">RGB Triplet: 255, 255, 0</div>
<!-- data table -->
<div style="left:735.5px;top:1024.5px;width:1822.0px;height:306.0px;background:#404040;overflow:hidden;"><div style="left:0.0px;top:0.0px;width:1822.0px;height:34.5px;background:linear-gradient(#2e2e2e 0%,#2a2a2a 48%,#151515 52%,#111 100%);"></div>
<div class="t" style="left:232.4px;top:8.7px;font-size:19.8px;line-height:19.8px;color:#f2f2f2;transform:scaleX(1.2566);transform-origin:left center;">White</div>
<div class="t" style="left:316.4px;top:8.7px;font-size:19.8px;line-height:19.8px;color:#f2f2f2;transform:scaleX(1.185);transform-origin:left center;">Gray 80</div>
<div class="t" style="left:412.5px;top:8.7px;font-size:19.8px;line-height:19.8px;color:#f2f2f2;transform:scaleX(1.185);transform-origin:left center;">Gray 65</div>
<div class="t" style="left:508.0px;top:8.7px;font-size:19.8px;line-height:19.8px;color:#f2f2f2;transform:scaleX(1.185);transform-origin:left center;">Gray 50</div>
<div class="t" style="left:604.2px;top:8.7px;font-size:19.8px;line-height:19.8px;color:#f2f2f2;transform:scaleX(1.185);transform-origin:left center;">Gray 35</div>
<div class="t" style="left:700.0px;top:8.7px;font-size:19.8px;line-height:19.8px;color:#f2f2f2;transform:scaleX(1.185);transform-origin:left center;">Black</div>
<div class="t" style="left:769.9px;top:8.7px;font-size:19.8px;line-height:19.8px;color:#f2f2f2;transform:scaleX(1.185);transform-origin:left center;">Dark Skin</div>
<div class="t" style="left:883.5px;top:8.7px;font-size:19.8px;line-height:19.8px;color:#f2f2f2;transform:scaleX(1.185);transform-origin:left center;">Light Skin</div>
<div class="t" style="left:999.8px;top:8.7px;font-size:19.8px;line-height:19.8px;color:#f2f2f2;transform:scaleX(1.185);transform-origin:left center;">Blue Sky</div>
<div class="t" style="left:1102.9px;top:8.7px;font-size:19.8px;line-height:19.8px;color:#f2f2f2;transform:scaleX(1.185);transform-origin:left center;">Foliage</div>
<div class="t" style="left:1192.6px;top:8.7px;font-size:19.8px;line-height:19.8px;color:#f2f2f2;transform:scaleX(1.185);transform-origin:left center;">Blue Flower</div>
<div class="t" style="left:1332.7px;top:8.7px;font-size:19.8px;line-height:19.8px;color:#f2f2f2;transform:scaleX(1.185);transform-origin:left center;">Bluish Green</div>
<div class="t" style="left:1482.7px;top:8.7px;font-size:19.8px;line-height:19.8px;color:#f2f2f2;transform:scaleX(1.185);transform-origin:left center;">Orange</div>
<div class="t" style="left:1574.6px;top:8.7px;font-size:19.8px;line-height:19.8px;color:#f2f2f2;transform:scaleX(1.185);transform-origin:left center;">Purplish Blue</div>
<div class="t" style="left:1729.0px;top:8.7px;font-size:19.8px;line-height:19.8px;color:#f2f2f2;transform:scaleX(1.185);transform-origin:left center;">Moderate Red</div>
<div style="left:0.0px;top:34.5px;width:1822.0px;height:31.7px;background:#404040;"></div>
<div class="t" style="left:21.5px;top:42.3px;font-size:19.8px;line-height:19.8px;color:#f4f4f4;font-weight:bold;transform:scaleX(1.28);transform-origin:left center;">x: CIE31</div>
<div class="t" style="left:226.1px;top:42.3px;font-size:19.8px;line-height:19.8px;color:#f0f0f0;transform:scaleX(1.235);transform-origin:left center;">0.31</div>
<div class="t" style="left:316.4px;top:42.3px;font-size:19.8px;line-height:19.8px;color:#f0f0f0;transform:scaleX(1.235);transform-origin:left center;">0.31</div>
<div class="t" style="left:412.5px;top:42.3px;font-size:19.8px;line-height:19.8px;color:#f0f0f0;transform:scaleX(1.235);transform-origin:left center;">0.31</div>
<div class="t" style="left:508.0px;top:42.3px;font-size:19.8px;line-height:19.8px;color:#f0f0f0;transform:scaleX(1.235);transform-origin:left center;">0.31</div>
<div class="t" style="left:604.2px;top:42.3px;font-size:19.8px;line-height:19.8px;color:#f0f0f0;transform:scaleX(1.235);transform-origin:left center;">0.31</div>
<div class="t" style="left:700.0px;top:42.3px;font-size:19.8px;line-height:19.8px;color:#f0f0f0;transform:scaleX(1.235);transform-origin:left center;">0.33</div>
<div class="t" style="left:769.9px;top:42.3px;font-size:19.8px;line-height:19.8px;color:#f0f0f0;transform:scaleX(1.235);transform-origin:left center;">0.40</div>
<div class="t" style="left:883.5px;top:42.3px;font-size:19.8px;line-height:19.8px;color:#f0f0f0;transform:scaleX(1.235);transform-origin:left center;">0.37</div>
<div class="t" style="left:999.5px;top:42.3px;font-size:19.8px;line-height:19.8px;color:#f0f0f0;transform:scaleX(1.235);transform-origin:left center;">0.25</div>
<div class="t" style="left:1102.5px;top:42.3px;font-size:19.8px;line-height:19.8px;color:#f0f0f0;transform:scaleX(1.235);transform-origin:left center;">0.34</div>
<div class="t" style="left:1192.5px;top:42.3px;font-size:19.8px;line-height:19.8px;color:#f0f0f0;transform:scaleX(1.235);transform-origin:left center;">0.27</div>
<div class="t" style="left:1332.5px;top:42.3px;font-size:19.8px;line-height:19.8px;color:#f0f0f0;transform:scaleX(1.235);transform-origin:left center;">0.26</div>
<div class="t" style="left:1482.5px;top:42.3px;font-size:19.8px;line-height:19.8px;color:#f0f0f0;transform:scaleX(1.235);transform-origin:left center;">0.50</div>
<div class="t" style="left:1574.5px;top:42.3px;font-size:19.8px;line-height:19.8px;color:#f0f0f0;transform:scaleX(1.235);transform-origin:left center;">0.22</div>
<div class="t" style="left:1728.5px;top:42.3px;font-size:19.8px;line-height:19.8px;color:#f0f0f0;transform:scaleX(1.235);transform-origin:left center;">0.45</div>
<div style="left:0.0px;top:65.9px;width:1822.0px;height:31.7px;background:#808080;"></div>
<div class="t" style="left:21.5px;top:73.8px;font-size:19.8px;line-height:19.8px;color:#f4f4f4;font-weight:bold;transform:scaleX(1.28);transform-origin:left center;">y: CIE31</div>
<div class="t" style="left:226.1px;top:73.8px;font-size:19.8px;line-height:19.8px;color:#f0f0f0;transform:scaleX(1.235);transform-origin:left center;">0.33</div>
<div class="t" style="left:316.4px;top:73.8px;font-size:19.8px;line-height:19.8px;color:#f0f0f0;transform:scaleX(1.235);transform-origin:left center;">0.33</div>
<div class="t" style="left:412.5px;top:73.8px;font-size:19.8px;line-height:19.8px;color:#f0f0f0;transform:scaleX(1.235);transform-origin:left center;">0.33</div>
<div class="t" style="left:508.0px;top:73.8px;font-size:19.8px;line-height:19.8px;color:#f0f0f0;transform:scaleX(1.235);transform-origin:left center;">0.33</div>
<div class="t" style="left:604.2px;top:73.8px;font-size:19.8px;line-height:19.8px;color:#f0f0f0;transform:scaleX(1.235);transform-origin:left center;">0.33</div>
<div class="t" style="left:700.0px;top:73.8px;font-size:19.8px;line-height:19.8px;color:#f0f0f0;transform:scaleX(1.235);transform-origin:left center;">0.33</div>
<div class="t" style="left:769.9px;top:73.8px;font-size:19.8px;line-height:19.8px;color:#f0f0f0;transform:scaleX(1.235);transform-origin:left center;">0.36</div>
<div class="t" style="left:883.5px;top:73.8px;font-size:19.8px;line-height:19.8px;color:#f0f0f0;transform:scaleX(1.235);transform-origin:left center;">0.36</div>
<div class="t" style="left:999.5px;top:73.8px;font-size:19.8px;line-height:19.8px;color:#f0f0f0;transform:scaleX(1.235);transform-origin:left center;">0.26</div>
<div class="t" style="left:1102.5px;top:73.8px;font-size:19.8px;line-height:19.8px;color:#f0f0f0;transform:scaleX(1.235);transform-origin:left center;">0.43</div>
<div class="t" style="left:1192.5px;top:73.8px;font-size:19.8px;line-height:19.8px;color:#f0f0f0;transform:scaleX(1.235);transform-origin:left center;">0.25</div>
<div class="t" style="left:1332.5px;top:73.8px;font-size:19.8px;line-height:19.8px;color:#f0f0f0;transform:scaleX(1.235);transform-origin:left center;">0.36</div>
<div class="t" style="left:1482.5px;top:73.8px;font-size:19.8px;line-height:19.8px;color:#f0f0f0;transform:scaleX(1.235);transform-origin:left center;">0.41</div>
<div class="t" style="left:1574.5px;top:73.8px;font-size:19.8px;line-height:19.8px;color:#f0f0f0;transform:scaleX(1.235);transform-origin:left center;">0.19</div>
<div class="t" style="left:1728.5px;top:73.8px;font-size:19.8px;line-height:19.8px;color:#f0f0f0;transform:scaleX(1.235);transform-origin:left center;">0.31</div>
<div style="left:0.0px;top:97.4px;width:1822.0px;height:31.7px;background:#404040;"></div>
<div class="t" style="left:21.5px;top:105.2px;font-size:19.8px;line-height:19.8px;color:#f4f4f4;font-weight:bold;transform:scaleX(1.28);transform-origin:left center;">Y</div>
<div class="t" style="left:226.1px;top:105.2px;font-size:19.8px;line-height:19.8px;color:#f0f0f0;transform:scaleX(1.235);transform-origin:left center;">601.91</div>
<div class="t" style="left:316.4px;top:105.2px;font-size:19.8px;line-height:19.8px;color:#f0f0f0;transform:scaleX(1.235);transform-origin:left center;">463.32</div>
<div class="t" style="left:412.5px;top:105.2px;font-size:19.8px;line-height:19.8px;color:#f0f0f0;transform:scaleX(1.235);transform-origin:left center;">374.29</div>
<div class="t" style="left:508.0px;top:105.2px;font-size:19.8px;line-height:19.8px;color:#f0f0f0;transform:scaleX(1.235);transform-origin:left center;">283.36</div>
<div class="t" style="left:604.2px;top:105.2px;font-size:19.8px;line-height:19.8px;color:#f0f0f0;transform:scaleX(1.235);transform-origin:left center;">200.63</div>
<div class="t" style="left:700.0px;top:105.2px;font-size:19.8px;line-height:19.8px;color:#f0f0f0;transform:scaleX(1.235);transform-origin:left center;">0.00</div>
<div class="t" style="left:769.9px;top:105.2px;font-size:19.8px;line-height:19.8px;color:#f0f0f0;transform:scaleX(1.235);transform-origin:left center;">58.67</div>
<div class="t" style="left:883.5px;top:105.2px;font-size:19.8px;line-height:19.8px;color:#f0f0f0;transform:scaleX(1.235);transform-origin:left center;">206.16</div>
<div class="t" style="left:999.5px;top:105.2px;font-size:19.8px;line-height:19.8px;color:#f0f0f0;transform:scaleX(1.235);transform-origin:left center;">108.67</div>
<div class="t" style="left:1102.5px;top:105.2px;font-size:19.8px;line-height:19.8px;color:#f0f0f0;transform:scaleX(1.235);transform-origin:left center;">75.87</div>
<div class="t" style="left:1192.5px;top:105.2px;font-size:19.8px;line-height:19.8px;color:#f0f0f0;transform:scaleX(1.235);transform-origin:left center;">137.76</div>
<div class="t" style="left:1332.5px;top:105.2px;font-size:19.8px;line-height:19.8px;color:#f0f0f0;transform:scaleX(1.235);transform-origin:left center;">241.67</div>
<div class="t" style="left:1482.5px;top:105.2px;font-size:19.8px;line-height:19.8px;color:#f0f0f0;transform:scaleX(1.235);transform-origin:left center;">167.40</div>
<div class="t" style="left:1574.5px;top:105.2px;font-size:19.8px;line-height:19.8px;color:#f0f0f0;transform:scaleX(1.235);transform-origin:left center;">66.82</div>
<div class="t" style="left:1728.5px;top:105.2px;font-size:19.8px;line-height:19.8px;color:#f0f0f0;transform:scaleX(1.235);transform-origin:left center;">109.98</div>
<div style="left:0.0px;top:128.8px;width:1822.0px;height:31.7px;background:#808080;"></div>
<div class="t" style="left:21.5px;top:136.6px;font-size:19.8px;line-height:19.8px;color:#f4f4f4;font-weight:bold;transform:scaleX(1.28);transform-origin:left center;">Target x:CIE31</div>
<div class="t" style="left:226.1px;top:136.6px;font-size:19.8px;line-height:19.8px;color:#f0f0f0;transform:scaleX(1.235);transform-origin:left center;">0.31</div>
<div class="t" style="left:316.4px;top:136.6px;font-size:19.8px;line-height:19.8px;color:#f0f0f0;transform:scaleX(1.235);transform-origin:left center;">0.31</div>
<div class="t" style="left:412.5px;top:136.6px;font-size:19.8px;line-height:19.8px;color:#f0f0f0;transform:scaleX(1.235);transform-origin:left center;">0.31</div>
<div class="t" style="left:508.0px;top:136.6px;font-size:19.8px;line-height:19.8px;color:#f0f0f0;transform:scaleX(1.235);transform-origin:left center;">0.31</div>
<div class="t" style="left:604.2px;top:136.6px;font-size:19.8px;line-height:19.8px;color:#f0f0f0;transform:scaleX(1.235);transform-origin:left center;">0.31</div>
<div class="t" style="left:700.0px;top:136.6px;font-size:19.8px;line-height:19.8px;color:#f0f0f0;transform:scaleX(1.235);transform-origin:left center;">0.31</div>
<div class="t" style="left:769.9px;top:136.6px;font-size:19.8px;line-height:19.8px;color:#f0f0f0;transform:scaleX(1.235);transform-origin:left center;">0.40</div>
<div class="t" style="left:883.5px;top:136.6px;font-size:19.8px;line-height:19.8px;color:#f0f0f0;transform:scaleX(1.235);transform-origin:left center;">0.38</div>
<div class="t" style="left:999.5px;top:136.6px;font-size:19.8px;line-height:19.8px;color:#f0f0f0;transform:scaleX(1.235);transform-origin:left center;">0.25</div>
<div class="t" style="left:1102.5px;top:136.6px;font-size:19.8px;line-height:19.8px;color:#f0f0f0;transform:scaleX(1.235);transform-origin:left center;">0.34</div>
<div class="t" style="left:1192.5px;top:136.6px;font-size:19.8px;line-height:19.8px;color:#f0f0f0;transform:scaleX(1.235);transform-origin:left center;">0.27</div>
<div class="t" style="left:1332.5px;top:136.6px;font-size:19.8px;line-height:19.8px;color:#f0f0f0;transform:scaleX(1.235);transform-origin:left center;">0.26</div>
<div class="t" style="left:1482.5px;top:136.6px;font-size:19.8px;line-height:19.8px;color:#f0f0f0;transform:scaleX(1.235);transform-origin:left center;">0.51</div>
<div class="t" style="left:1574.5px;top:136.6px;font-size:19.8px;line-height:19.8px;color:#f0f0f0;transform:scaleX(1.235);transform-origin:left center;">0.22</div>
<div class="t" style="left:1728.5px;top:136.6px;font-size:19.8px;line-height:19.8px;color:#f0f0f0;transform:scaleX(1.235);transform-origin:left center;">0.46</div>
<div style="left:0.0px;top:160.2px;width:1822.0px;height:31.7px;background:#404040;"></div>
<div class="t" style="left:21.5px;top:168.1px;font-size:19.8px;line-height:19.8px;color:#f4f4f4;font-weight:bold;transform:scaleX(1.28);transform-origin:left center;">Target y:CIE31</div>
<div class="t" style="left:226.1px;top:168.1px;font-size:19.8px;line-height:19.8px;color:#f0f0f0;transform:scaleX(1.235);transform-origin:left center;">0.33</div>
<div class="t" style="left:316.4px;top:168.1px;font-size:19.8px;line-height:19.8px;color:#f0f0f0;transform:scaleX(1.235);transform-origin:left center;">0.33</div>
<div class="t" style="left:412.5px;top:168.1px;font-size:19.8px;line-height:19.8px;color:#f0f0f0;transform:scaleX(1.235);transform-origin:left center;">0.33</div>
<div class="t" style="left:508.0px;top:168.1px;font-size:19.8px;line-height:19.8px;color:#f0f0f0;transform:scaleX(1.235);transform-origin:left center;">0.33</div>
<div class="t" style="left:604.2px;top:168.1px;font-size:19.8px;line-height:19.8px;color:#f0f0f0;transform:scaleX(1.235);transform-origin:left center;">0.33</div>
<div class="t" style="left:700.0px;top:168.1px;font-size:19.8px;line-height:19.8px;color:#f0f0f0;transform:scaleX(1.235);transform-origin:left center;">0.33</div>
<div class="t" style="left:769.9px;top:168.1px;font-size:19.8px;line-height:19.8px;color:#f0f0f0;transform:scaleX(1.235);transform-origin:left center;">0.36</div>
<div class="t" style="left:883.5px;top:168.1px;font-size:19.8px;line-height:19.8px;color:#f0f0f0;transform:scaleX(1.235);transform-origin:left center;">0.36</div>
<div class="t" style="left:999.5px;top:168.1px;font-size:19.8px;line-height:19.8px;color:#f0f0f0;transform:scaleX(1.235);transform-origin:left center;">0.27</div>
<div class="t" style="left:1102.5px;top:168.1px;font-size:19.8px;line-height:19.8px;color:#f0f0f0;transform:scaleX(1.235);transform-origin:left center;">0.43</div>
<div class="t" style="left:1192.5px;top:168.1px;font-size:19.8px;line-height:19.8px;color:#f0f0f0;transform:scaleX(1.235);transform-origin:left center;">0.25</div>
<div class="t" style="left:1332.5px;top:168.1px;font-size:19.8px;line-height:19.8px;color:#f0f0f0;transform:scaleX(1.235);transform-origin:left center;">0.36</div>
<div class="t" style="left:1482.5px;top:168.1px;font-size:19.8px;line-height:19.8px;color:#f0f0f0;transform:scaleX(1.235);transform-origin:left center;">0.41</div>
<div class="t" style="left:1574.5px;top:168.1px;font-size:19.8px;line-height:19.8px;color:#f0f0f0;transform:scaleX(1.235);transform-origin:left center;">0.19</div>
<div class="t" style="left:1728.5px;top:168.1px;font-size:19.8px;line-height:19.8px;color:#f0f0f0;transform:scaleX(1.235);transform-origin:left center;">0.31</div>
<div style="left:0.0px;top:191.7px;width:1822.0px;height:31.7px;background:#808080;"></div>
<div class="t" style="left:21.5px;top:199.5px;font-size:19.8px;line-height:19.8px;color:#f4f4f4;font-weight:bold;transform:scaleX(1.28);transform-origin:left center;">Target Y</div>
<div class="t" style="left:226.1px;top:199.5px;font-size:19.8px;line-height:19.8px;color:#f0f0f0;transform:scaleX(1.235);transform-origin:left center;">601.91</div>
<div class="t" style="left:316.4px;top:199.5px;font-size:19.8px;line-height:19.8px;color:#f0f0f0;transform:scaleX(1.235);transform-origin:left center;">476.29</div>
<div class="t" style="left:412.5px;top:199.5px;font-size:19.8px;line-height:19.8px;color:#f0f0f0;transform:scaleX(1.235);transform-origin:left center;">383.78</div>
<div class="t" style="left:508.0px;top:199.5px;font-size:19.8px;line-height:19.8px;color:#f0f0f0;transform:scaleX(1.235);transform-origin:left center;">295.55</div>
<div class="t" style="left:604.2px;top:199.5px;font-size:19.8px;line-height:19.8px;color:#f0f0f0;transform:scaleX(1.235);transform-origin:left center;">205.80</div>
<div class="t" style="left:700.0px;top:199.5px;font-size:19.8px;line-height:19.8px;color:#f0f0f0;transform:scaleX(1.235);transform-origin:left center;">0.00</div>
<div class="t" style="left:769.9px;top:199.5px;font-size:19.8px;line-height:19.8px;color:#f0f0f0;transform:scaleX(1.235);transform-origin:left center;">60.63</div>
<div class="t" style="left:883.5px;top:199.5px;font-size:19.8px;line-height:19.8px;color:#f0f0f0;transform:scaleX(1.235);transform-origin:left center;">210.04</div>
<div class="t" style="left:999.5px;top:199.5px;font-size:19.8px;line-height:19.8px;color:#f0f0f0;transform:scaleX(1.235);transform-origin:left center;">112.55</div>
<div class="t" style="left:1102.5px;top:199.5px;font-size:19.8px;line-height:19.8px;color:#f0f0f0;transform:scaleX(1.235);transform-origin:left center;">78.44</div>
<div class="t" style="left:1192.5px;top:199.5px;font-size:19.8px;line-height:19.8px;color:#f0f0f0;transform:scaleX(1.235);transform-origin:left center;">140.36</div>
<div class="t" style="left:1332.5px;top:199.5px;font-size:19.8px;line-height:19.8px;color:#f0f0f0;transform:scaleX(1.235);transform-origin:left center;">252.04</div>
<div class="t" style="left:1482.5px;top:199.5px;font-size:19.8px;line-height:19.8px;color:#f0f0f0;transform:scaleX(1.235);transform-origin:left center;">170.63</div>
<div class="t" style="left:1574.5px;top:199.5px;font-size:19.8px;line-height:19.8px;color:#f0f0f0;transform:scaleX(1.235);transform-origin:left center;">70.75</div>
<div class="t" style="left:1728.5px;top:199.5px;font-size:19.8px;line-height:19.8px;color:#f0f0f0;transform:scaleX(1.235);transform-origin:left center;">112.41</div>
<div style="left:0.0px;top:223.1px;width:1822.0px;height:31.7px;background:#404040;"></div>
<div class="t" style="left:21.5px;top:230.9px;font-size:19.8px;line-height:19.8px;color:#f4f4f4;font-weight:bold;transform:scaleX(1.28);transform-origin:left center;">ΔE 2000</div>
<div class="t" style="left:226.1px;top:230.9px;font-size:19.8px;line-height:19.8px;color:#f0f0f0;transform:scaleX(1.235);transform-origin:left center;">1.64</div>
<div class="t" style="left:316.4px;top:230.9px;font-size:19.8px;line-height:19.8px;color:#f0f0f0;transform:scaleX(1.235);transform-origin:left center;">0.83</div>
<div class="t" style="left:412.5px;top:230.9px;font-size:19.8px;line-height:19.8px;color:#f0f0f0;transform:scaleX(1.235);transform-origin:left center;">1.04</div>
<div class="t" style="left:508.0px;top:230.9px;font-size:19.8px;line-height:19.8px;color:#f0f0f0;transform:scaleX(1.235);transform-origin:left center;">1.21</div>
<div class="t" style="left:604.2px;top:230.9px;font-size:19.8px;line-height:19.8px;color:#f0f0f0;transform:scaleX(1.235);transform-origin:left center;">0.58</div>
<div class="t" style="left:700.0px;top:230.9px;font-size:19.8px;line-height:19.8px;color:#f0f0f0;transform:scaleX(1.235);transform-origin:left center;">0.00</div>
<div class="t" style="left:769.9px;top:230.9px;font-size:19.8px;line-height:19.8px;color:#f0f0f0;transform:scaleX(1.235);transform-origin:left center;">0.71</div>
<div class="t" style="left:883.5px;top:230.9px;font-size:19.8px;line-height:19.8px;color:#f0f0f0;transform:scaleX(1.235);transform-origin:left center;">1.74</div>
<div class="t" style="left:999.5px;top:230.9px;font-size:19.8px;line-height:19.8px;color:#f0f0f0;transform:scaleX(1.235);transform-origin:left center;">1.22</div>
<div class="t" style="left:1102.5px;top:230.9px;font-size:19.8px;line-height:19.8px;color:#f0f0f0;transform:scaleX(1.235);transform-origin:left center;">0.63</div>
<div class="t" style="left:1192.5px;top:230.9px;font-size:19.8px;line-height:19.8px;color:#f0f0f0;transform:scaleX(1.235);transform-origin:left center;">0.74</div>
<div class="t" style="left:1332.5px;top:230.9px;font-size:19.8px;line-height:19.8px;color:#f0f0f0;transform:scaleX(1.235);transform-origin:left center;">1.14</div>
<div class="t" style="left:1482.5px;top:230.9px;font-size:19.8px;line-height:19.8px;color:#f0f0f0;transform:scaleX(1.235);transform-origin:left center;">1.80</div>
<div class="t" style="left:1574.5px;top:230.9px;font-size:19.8px;line-height:19.8px;color:#f0f0f0;transform:scaleX(1.235);transform-origin:left center;">0.96</div>
<div class="t" style="left:1728.5px;top:230.9px;font-size:19.8px;line-height:19.8px;color:#f0f0f0;transform:scaleX(1.235);transform-origin:left center;">1.07</div>
<div style="left:0.0px;top:254.5px;width:1822.0px;height:31.7px;background:#808080;"></div>
<div class="t" style="left:21.5px;top:262.3px;font-size:19.8px;line-height:19.8px;color:#f4f4f4;font-weight:bold;transform:scaleX(1.28);transform-origin:left center;">ΔE ITP</div>
<div class="t" style="left:226.1px;top:262.3px;font-size:19.8px;line-height:19.8px;color:#f0f0f0;transform:scaleX(1.235);transform-origin:left center;">1.90</div>
<div class="t" style="left:316.4px;top:262.3px;font-size:19.8px;line-height:19.8px;color:#f0f0f0;transform:scaleX(1.235);transform-origin:left center;">2.25</div>
<div class="t" style="left:412.5px;top:262.3px;font-size:19.8px;line-height:19.8px;color:#f0f0f0;transform:scaleX(1.235);transform-origin:left center;">2.12</div>
<div class="t" style="left:508.0px;top:262.3px;font-size:19.8px;line-height:19.8px;color:#f0f0f0;transform:scaleX(1.235);transform-origin:left center;">3.28</div>
<div class="t" style="left:604.2px;top:262.3px;font-size:19.8px;line-height:19.8px;color:#f0f0f0;transform:scaleX(1.235);transform-origin:left center;">1.93</div>
<div class="t" style="left:700.0px;top:262.3px;font-size:19.8px;line-height:19.8px;color:#f0f0f0;transform:scaleX(1.235);transform-origin:left center;">0.01</div>
<div class="t" style="left:769.9px;top:262.3px;font-size:19.8px;line-height:19.8px;color:#f0f0f0;transform:scaleX(1.235);transform-origin:left center;">2.61</div>
<div class="t" style="left:883.5px;top:262.3px;font-size:19.8px;line-height:19.8px;color:#f0f0f0;transform:scaleX(1.235);transform-origin:left center;">4.69</div>
<div class="t" style="left:999.5px;top:262.3px;font-size:19.8px;line-height:19.8px;color:#f0f0f0;transform:scaleX(1.235);transform-origin:left center;">2.95</div>
<div class="t" style="left:1102.5px;top:262.3px;font-size:19.8px;line-height:19.8px;color:#f0f0f0;transform:scaleX(1.235);transform-origin:left center;">2.43</div>
<div class="t" style="left:1192.5px;top:262.3px;font-size:19.8px;line-height:19.8px;color:#f0f0f0;transform:scaleX(1.235);transform-origin:left center;">2.04</div>
<div class="t" style="left:1332.5px;top:262.3px;font-size:19.8px;line-height:19.8px;color:#f0f0f0;transform:scaleX(1.235);transform-origin:left center;">3.39</div>
<div class="t" style="left:1482.5px;top:262.3px;font-size:19.8px;line-height:19.8px;color:#f0f0f0;transform:scaleX(1.235);transform-origin:left center;">8.18</div>
<div class="t" style="left:1574.5px;top:262.3px;font-size:19.8px;line-height:19.8px;color:#f0f0f0;transform:scaleX(1.235);transform-origin:left center;">4.03</div>
<div class="t" style="left:1728.5px;top:262.3px;font-size:19.8px;line-height:19.8px;color:#f0f0f0;transform:scaleX(1.235);transform-origin:left center;">6.45</div></div>
<div style="left:734.0px;top:1023.0px;width:1823.5px;height:1.5px;background:#0c0c0c;"></div>
<div style="left:734.0px;top:1023.0px;width:1.5px;height:308.0px;background:#0c0c0c;"></div>
<div style="left:736.5px;top:1311.5px;width:1821.0px;height:19.0px;background:#616161;border-radius:4px;"></div>
<div style="left:765.0px;top:1312.5px;width:872.0px;height:17.0px;background:#444;border-radius:8.5px;"></div>
<div style="left:738.5px;top:1313.2px;width:16.5px;height:15.5px;background:#7c7c7c;border-radius:4px;"></div>
<svg style="left:742.2px;top:1315.5px" width="9" height="11"><path d="M7.5 0.5 V10.5 L0.5 5.5 Z" fill="#333"/></svg>
<div style="left:2539.0px;top:1313.2px;width:16.5px;height:15.5px;background:#7c7c7c;border-radius:4px;"></div>
<svg style="left:2543.8px;top:1315.5px" width="9" height="11"><path d="M0.5 0.5 V10.5 L7.5 5.5 Z" fill="#333"/></svg>
<!-- bottom strip -->
<div style="left:301.0px;top:1435.0px;width:1774.0px;height:75.0px;overflow:hidden;background:#464646;"><div style="left:-17.7px;top:0.5px;width:74.3px;height:72.5px;background:linear-gradient(#a4a4a4 0%,#989898 30%,#7c7c7c 70%,#6c6c6c 100%);border-radius:7px;border-top:1px solid #b0b0b0;"></div>
<div style="left:-11.0px;top:7.2px;width:60.9px;height:36.5px;background:#c89880;border-radius:5px;box-shadow:inset 0 1.5px 2px rgba(0,0,0,0.45),inset 0 -1px 1px rgba(255,255,255,0.12);"></div>
<div class="t" style="left:-16.3px;top:53.2px;font-size:17.0px;line-height:17.0px;color:#262626;font-weight:bold;transform:scaleX(0.8702);transform-origin:left center;">Light Skin</div>
<div style="left:60.3px;top:0.5px;width:74.3px;height:72.5px;background:linear-gradient(#a4a4a4 0%,#989898 30%,#7c7c7c 70%,#6c6c6c 100%);border-radius:7px;border-top:1px solid #b0b0b0;"></div>
<div style="left:67.0px;top:7.2px;width:60.9px;height:36.5px;background:#5c7aa0;border-radius:5px;box-shadow:inset 0 1.5px 2px rgba(0,0,0,0.45),inset 0 -1px 1px rgba(255,255,255,0.12);"></div>
<div class="t" style="left:66.4px;top:53.2px;font-size:17.0px;line-height:17.0px;color:#262626;font-weight:bold;transform:scaleX(0.8662);transform-origin:left center;">Blue Sky</div>
<div style="left:138.4px;top:0.5px;width:74.3px;height:72.5px;background:linear-gradient(#a4a4a4 0%,#989898 30%,#7c7c7c 70%,#6c6c6c 100%);border-radius:7px;border-top:1px solid #b0b0b0;"></div>
<div style="left:145.1px;top:7.2px;width:60.9px;height:36.5px;background:#5a6c42;border-radius:5px;box-shadow:inset 0 1.5px 2px rgba(0,0,0,0.45),inset 0 -1px 1px rgba(255,255,255,0.12);"></div>
<div class="t" style="left:149.4px;top:53.2px;font-size:17.0px;line-height:17.0px;color:#262626;font-weight:bold;transform:scaleX(0.8789);transform-origin:left center;">Foliage</div>
<div style="left:216.4px;top:0.5px;width:74.3px;height:72.5px;background:linear-gradient(#a4a4a4 0%,#989898 30%,#7c7c7c 70%,#6c6c6c 100%);border-radius:7px;border-top:1px solid #b0b0b0;"></div>
<div style="left:223.1px;top:7.2px;width:60.9px;height:18.4px;background:#8480b8;border-radius:5px;box-shadow:inset 0 1.5px 2px rgba(0,0,0,0.45),inset 0 -1px 1px rgba(255,255,255,0.12);"></div>
<div class="t" style="left:228.1px;top:35.6px;font-size:17.0px;line-height:17.0px;color:#262626;font-weight:bold;transform:scaleX(0.8713);transform-origin:left center;">Blue</div>
<div class="t" style="left:228.1px;top:53.2px;font-size:17.0px;line-height:17.0px;color:#262626;font-weight:bold;transform:scaleX(0.9291);transform-origin:left center;">Flower</div>
<div style="left:294.5px;top:0.5px;width:74.3px;height:72.5px;background:linear-gradient(#a4a4a4 0%,#989898 30%,#7c7c7c 70%,#6c6c6c 100%);border-radius:7px;border-top:1px solid #b0b0b0;"></div>
<div style="left:301.2px;top:7.2px;width:60.9px;height:18.4px;background:#60beaa;border-radius:5px;box-shadow:inset 0 1.5px 2px rgba(0,0,0,0.45),inset 0 -1px 1px rgba(255,255,255,0.12);"></div>
<div class="t" style="left:309.3px;top:35.6px;font-size:17.0px;line-height:17.0px;color:#262626;font-weight:bold;transform:scaleX(0.8586);transform-origin:left center;">Bluish</div>
<div class="t" style="left:309.3px;top:53.2px;font-size:17.0px;line-height:17.0px;color:#262626;font-weight:bold;transform:scaleX(0.9057);transform-origin:left center;">Green</div>
<div style="left:372.5px;top:0.5px;width:74.3px;height:72.5px;background:linear-gradient(#a4a4a4 0%,#989898 30%,#7c7c7c 70%,#6c6c6c 100%);border-radius:7px;border-top:1px solid #b0b0b0;"></div>
<div style="left:379.2px;top:7.2px;width:60.9px;height:36.5px;background:#dc7828;border-radius:5px;box-shadow:inset 0 1.5px 2px rgba(0,0,0,0.45),inset 0 -1px 1px rgba(255,255,255,0.12);"></div>
<div class="t" style="left:383.0px;top:53.2px;font-size:17.0px;line-height:17.0px;color:#262626;font-weight:bold;transform:scaleX(0.8939);transform-origin:left center;">Orange</div>
<div style="left:450.5px;top:0.5px;width:74.3px;height:72.5px;background:linear-gradient(#a4a4a4 0%,#989898 30%,#7c7c7c 70%,#6c6c6c 100%);border-radius:7px;border-top:1px solid #b0b0b0;"></div>
<div style="left:457.2px;top:7.2px;width:60.9px;height:18.4px;background:#4858a8;border-radius:5px;box-shadow:inset 0 1.5px 2px rgba(0,0,0,0.45),inset 0 -1px 1px rgba(255,255,255,0.12);"></div>
<div class="t" style="left:457.7px;top:35.6px;font-size:17.0px;line-height:17.0px;color:#262626;font-weight:bold;transform:scaleX(0.8822);transform-origin:left center;">Purplish</div>
<div class="t" style="left:457.7px;top:53.2px;font-size:17.0px;line-height:17.0px;color:#262626;font-weight:bold;transform:scaleX(0.8713);transform-origin:left center;">Blue</div>
<div style="left:528.6px;top:0.5px;width:74.3px;height:72.5px;background:linear-gradient(#a4a4a4 0%,#989898 30%,#7c7c7c 70%,#6c6c6c 100%);border-radius:7px;border-top:1px solid #b0b0b0;"></div>
<div style="left:535.3px;top:7.2px;width:60.9px;height:18.4px;background:#c4505e;border-radius:5px;box-shadow:inset 0 1.5px 2px rgba(0,0,0,0.45),inset 0 -1px 1px rgba(255,255,255,0.12);"></div>
<div class="t" style="left:529.8px;top:35.6px;font-size:17.0px;line-height:17.0px;color:#262626;font-weight:bold;transform:scaleX(0.958);transform-origin:left center;">Moderate</div>
<div class="t" style="left:529.8px;top:53.2px;font-size:17.0px;line-height:17.0px;color:#262626;font-weight:bold;transform:scaleX(0.8531);transform-origin:left center;">Red</div>
<div style="left:606.6px;top:0.5px;width:74.3px;height:72.5px;background:linear-gradient(#a4a4a4 0%,#989898 30%,#7c7c7c 70%,#6c6c6c 100%);border-radius:7px;border-top:1px solid #b0b0b0;"></div>
<div style="left:613.3px;top:7.2px;width:60.9px;height:36.5px;background:#5c3c70;border-radius:5px;box-shadow:inset 0 1.5px 2px rgba(0,0,0,0.45),inset 0 -1px 1px rgba(255,255,255,0.12);"></div>
<div class="t" style="left:619.8px;top:53.2px;font-size:17.0px;line-height:17.0px;color:#262626;font-weight:bold;transform:scaleX(0.9054);transform-origin:left center;">Purple</div>
<div style="left:684.7px;top:0.5px;width:74.3px;height:72.5px;background:linear-gradient(#a4a4a4 0%,#989898 30%,#7c7c7c 70%,#6c6c6c 100%);border-radius:7px;border-top:1px solid #b0b0b0;"></div>
<div style="left:691.4px;top:7.2px;width:60.9px;height:18.4px;background:#a0c040;border-radius:5px;box-shadow:inset 0 1.5px 2px rgba(0,0,0,0.45),inset 0 -1px 1px rgba(255,255,255,0.12);"></div>
<div class="t" style="left:697.8px;top:35.6px;font-size:17.0px;line-height:17.0px;color:#262626;font-weight:bold;transform:scaleX(0.9072);transform-origin:left center;">Yellow</div>
<div class="t" style="left:697.8px;top:53.2px;font-size:17.0px;line-height:17.0px;color:#262626;font-weight:bold;transform:scaleX(0.9057);transform-origin:left center;">Green</div>
<div style="left:762.7px;top:0.5px;width:74.3px;height:72.5px;background:linear-gradient(#a4a4a4 0%,#989898 30%,#7c7c7c 70%,#6c6c6c 100%);border-radius:7px;border-top:1px solid #b0b0b0;"></div>
<div style="left:769.4px;top:7.2px;width:60.9px;height:18.4px;background:#eca030;border-radius:5px;box-shadow:inset 0 1.5px 2px rgba(0,0,0,0.45),inset 0 -1px 1px rgba(255,255,255,0.12);"></div>
<div class="t" style="left:773.2px;top:35.6px;font-size:17.0px;line-height:17.0px;color:#262626;font-weight:bold;transform:scaleX(0.8939);transform-origin:left center;">Orange</div>
<div class="t" style="left:773.2px;top:53.2px;font-size:17.0px;line-height:17.0px;color:#262626;font-weight:bold;transform:scaleX(0.9072);transform-origin:left center;">Yellow</div>
<div style="left:840.7px;top:0.5px;width:74.3px;height:72.5px;background:linear-gradient(#a4a4a4 0%,#989898 30%,#7c7c7c 70%,#6c6c6c 100%);border-radius:7px;border-top:1px solid #b0b0b0;"></div>
<div style="left:847.4px;top:7.2px;width:60.9px;height:36.5px;background:#343c9c;border-radius:5px;box-shadow:inset 0 1.5px 2px rgba(0,0,0,0.45),inset 0 -1px 1px rgba(255,255,255,0.12);"></div>
<div class="t" style="left:861.8px;top:53.2px;font-size:17.0px;line-height:17.0px;color:#262626;font-weight:bold;transform:scaleX(0.8713);transform-origin:left center;">Blue</div>
<div style="left:918.8px;top:0.5px;width:74.3px;height:72.5px;background:linear-gradient(#a4a4a4 0%,#989898 30%,#7c7c7c 70%,#6c6c6c 100%);border-radius:7px;border-top:1px solid #b0b0b0;"></div>
<div style="left:925.5px;top:7.2px;width:60.9px;height:36.5px;background:#46964a;border-radius:5px;box-shadow:inset 0 1.5px 2px rgba(0,0,0,0.45),inset 0 -1px 1px rgba(255,255,255,0.12);"></div>
<div class="t" style="left:933.7px;top:53.2px;font-size:17.0px;line-height:17.0px;color:#262626;font-weight:bold;transform:scaleX(0.9057);transform-origin:left center;">Green</div>
<div style="left:996.8px;top:0.5px;width:74.3px;height:72.5px;background:linear-gradient(#a4a4a4 0%,#989898 30%,#7c7c7c 70%,#6c6c6c 100%);border-radius:7px;border-top:1px solid #b0b0b0;"></div>
<div style="left:1003.5px;top:7.2px;width:60.9px;height:36.5px;background:#b03038;border-radius:5px;box-shadow:inset 0 1.5px 2px rgba(0,0,0,0.45),inset 0 -1px 1px rgba(255,255,255,0.12);"></div>
<div class="t" style="left:1020.3px;top:53.2px;font-size:17.0px;line-height:17.0px;color:#262626;font-weight:bold;transform:scaleX(0.8531);transform-origin:left center;">Red</div>
<div style="left:1074.9px;top:0.5px;width:74.3px;height:72.5px;background:linear-gradient(#a4a4a4 0%,#989898 30%,#7c7c7c 70%,#6c6c6c 100%);border-radius:7px;border-top:1px solid #b0b0b0;"></div>
<div style="left:1081.6px;top:7.2px;width:60.9px;height:36.5px;background:#eec820;border-radius:5px;box-shadow:inset 0 1.5px 2px rgba(0,0,0,0.45),inset 0 -1px 1px rgba(255,255,255,0.12);"></div>
<div class="t" style="left:1088.0px;top:53.2px;font-size:17.0px;line-height:17.0px;color:#262626;font-weight:bold;transform:scaleX(0.9072);transform-origin:left center;">Yellow</div>
<div style="left:1152.9px;top:0.5px;width:74.3px;height:72.5px;background:linear-gradient(#a4a4a4 0%,#989898 30%,#7c7c7c 70%,#6c6c6c 100%);border-radius:7px;border-top:1px solid #b0b0b0;"></div>
<div style="left:1159.6px;top:7.2px;width:60.9px;height:36.5px;background:#bc5898;border-radius:5px;box-shadow:inset 0 1.5px 2px rgba(0,0,0,0.45),inset 0 -1px 1px rgba(255,255,255,0.12);"></div>
<div class="t" style="left:1157.3px;top:53.2px;font-size:17.0px;line-height:17.0px;color:#262626;font-weight:bold;transform:scaleX(0.9499);transform-origin:left center;">Magenta</div>
<div style="left:1230.9px;top:0.5px;width:74.3px;height:72.5px;background:linear-gradient(#a4a4a4 0%,#989898 30%,#7c7c7c 70%,#6c6c6c 100%);border-radius:7px;border-top:1px solid #b0b0b0;"></div>
<div style="left:1237.6px;top:7.2px;width:60.9px;height:36.5px;background:#0088a8;border-radius:5px;box-shadow:inset 0 1.5px 2px rgba(0,0,0,0.45),inset 0 -1px 1px rgba(255,255,255,0.12);"></div>
<div class="t" style="left:1250.3px;top:53.2px;font-size:17.0px;line-height:17.0px;color:#262626;font-weight:bold;transform:scaleX(0.8539);transform-origin:left center;">Cyan</div>
<div style="left:1309.0px;top:0.5px;width:74.3px;height:72.5px;background:linear-gradient(#a4a4a4 0%,#989898 30%,#7c7c7c 70%,#6c6c6c 100%);border-radius:7px;border-top:1px solid #b0b0b0;"></div>
<div style="left:1315.7px;top:7.2px;width:60.9px;height:36.5px;background:#ff0000;border-radius:5px;box-shadow:inset 0 1.5px 2px rgba(0,0,0,0.45),inset 0 -1px 1px rgba(255,255,255,0.12);"></div>
<div class="t" style="left:1310.1px;top:53.2px;font-size:17.0px;line-height:17.0px;color:#262626;font-weight:bold;transform:scaleX(0.8977);transform-origin:left center;">100% Red</div>
<div style="left:1387.0px;top:0.5px;width:74.3px;height:72.5px;background:linear-gradient(#a4a4a4 0%,#989898 30%,#7c7c7c 70%,#6c6c6c 100%);border-radius:7px;border-top:1px solid #b0b0b0;"></div>
<div style="left:1393.7px;top:7.2px;width:60.9px;height:18.4px;background:#00ff00;border-radius:5px;box-shadow:inset 0 1.5px 2px rgba(0,0,0,0.45),inset 0 -1px 1px rgba(255,255,255,0.12);"></div>
<div class="t" style="left:1401.9px;top:35.6px;font-size:17.0px;line-height:17.0px;color:#262626;font-weight:bold;transform:scaleX(0.9154);transform-origin:left center;">100%</div>
<div class="t" style="left:1401.9px;top:53.2px;font-size:17.0px;line-height:17.0px;color:#262626;font-weight:bold;transform:scaleX(0.9057);transform-origin:left center;">Green</div>
<div style="left:1465.1px;top:0.5px;width:74.3px;height:72.5px;background:linear-gradient(#a4a4a4 0%,#989898 30%,#7c7c7c 70%,#6c6c6c 100%);border-radius:7px;border-top:1px solid #b0b0b0;"></div>
<div style="left:1471.8px;top:7.2px;width:60.9px;height:18.4px;background:#0000ff;border-radius:5px;box-shadow:inset 0 1.5px 2px rgba(0,0,0,0.45),inset 0 -1px 1px rgba(255,255,255,0.12);"></div>
<div class="t" style="left:1482.3px;top:35.6px;font-size:17.0px;line-height:17.0px;color:#262626;font-weight:bold;transform:scaleX(0.9154);transform-origin:left center;">100%</div>
<div class="t" style="left:1482.3px;top:53.2px;font-size:17.0px;line-height:17.0px;color:#262626;font-weight:bold;transform:scaleX(0.8713);transform-origin:left center;">Blue</div>
<div style="left:1543.1px;top:0.5px;width:74.3px;height:72.5px;background:linear-gradient(#a4a4a4 0%,#989898 30%,#7c7c7c 70%,#6c6c6c 100%);border-radius:7px;border-top:1px solid #b0b0b0;"></div>
<div style="left:1549.8px;top:7.2px;width:60.9px;height:18.4px;background:#00ffff;border-radius:5px;box-shadow:inset 0 1.5px 2px rgba(0,0,0,0.45),inset 0 -1px 1px rgba(255,255,255,0.12);"></div>
<div class="t" style="left:1560.4px;top:35.6px;font-size:17.0px;line-height:17.0px;color:#262626;font-weight:bold;transform:scaleX(0.9154);transform-origin:left center;">100%</div>
<div class="t" style="left:1560.4px;top:53.2px;font-size:17.0px;line-height:17.0px;color:#262626;font-weight:bold;transform:scaleX(0.8539);transform-origin:left center;">Cyan</div>
<div style="left:1621.1px;top:0.5px;width:74.3px;height:72.5px;background:linear-gradient(#a4a4a4 0%,#989898 30%,#7c7c7c 70%,#6c6c6c 100%);border-radius:7px;border-top:1px solid #b0b0b0;"></div>
<div style="left:1627.8px;top:7.2px;width:60.9px;height:18.4px;background:#ff00ff;border-radius:5px;box-shadow:inset 0 1.5px 2px rgba(0,0,0,0.45),inset 0 -1px 1px rgba(255,255,255,0.12);"></div>
<div class="t" style="left:1625.5px;top:35.6px;font-size:17.0px;line-height:17.0px;color:#262626;font-weight:bold;transform:scaleX(0.9154);transform-origin:left center;">100%</div>
<div class="t" style="left:1625.5px;top:53.2px;font-size:17.0px;line-height:17.0px;color:#262626;font-weight:bold;transform:scaleX(0.9499);transform-origin:left center;">Magenta</div>
<div style="left:1699.2px;top:0.5px;width:74.3px;height:72.5px;background:linear-gradient(#1a1a1a 0%,#232323 18%,#343434 50%,#2c2c2c 78%,#202020 100%);border-radius:7px;border-top:1px solid #1a1a1a;"></div>
<div style="left:1705.9px;top:7.2px;width:60.9px;height:18.4px;background:#ffff00;border-radius:5px;box-shadow:inset 0 1.5px 2px rgba(0,0,0,0.45),inset 0 -1px 1px rgba(255,255,255,0.12);"></div>
<div class="t" style="left:1712.3px;top:35.6px;font-size:17.0px;line-height:17.0px;color:#fff;font-weight:bold;transform:scaleX(0.9154);transform-origin:left center;">100%</div>
<div class="t" style="left:1712.3px;top:53.2px;font-size:17.0px;line-height:17.0px;color:#fff;font-weight:bold;transform:scaleX(0.9072);transform-origin:left center;">Yellow</div></div>
<div style="left:301.0px;top:1509.5px;width:1774.0px;height:18.5px;background:#616161;border-radius:4px;"></div>
<div style="left:740.0px;top:1510.5px;width:1313.0px;height:16.5px;background:#444;border-radius:8.2px;"></div>
<div style="left:303.0px;top:1511.2px;width:16.0px;height:15.0px;background:#7c7c7c;border-radius:4px;"></div>
<svg style="left:306.5px;top:1513.2px" width="9" height="11"><path d="M7.5 0.5 V10.5 L0.5 5.5 Z" fill="#333"/></svg>
<div style="left:2057.0px;top:1511.2px;width:16.0px;height:15.0px;background:#7c7c7c;border-radius:4px;"></div>
<svg style="left:2061.5px;top:1513.2px" width="9" height="11"><path d="M0.5 0.5 V10.5 L7.5 5.5 Z" fill="#333"/></svg>
<!-- stop panel -->
<div style="left:2076.0px;top:1435.0px;width:71.7px;height:27.5px;background:linear-gradient(#8e8e8e,#7a7a7a);border-radius:7px 7px 0 0;border-top:1px solid #a0a0a0;"></div>
<div style="left:2076.0px;top:1462.5px;width:71.7px;height:63.5px;background:linear-gradient(#6c6c6c,#8a8a8a);border-top:1px solid #585858;border-radius:0 0 7px 7px;"></div>
<div style="left:2100.0px;top:1437.5px;width:24.0px;height:24.0px;border-radius:50%;background:linear-gradient(#707070,#8c8c8c);"></div>
<svg style="left:2105.5px;top:1444.5px" width="13" height="8"><path d="M0.3 7.5 H12.7 L6.5 0.5 Z" fill="#2a2a2a"/></svg>
<div style="left:2088.8px;top:1471.6px;width:46.0px;height:46.6px;background:linear-gradient(#b4b4b4 0%,#aaa 48%,#8c8c8c 52%,#888 100%);border:3.2px solid #1c1c1c;border-radius:7px;"></div>
<div style="left:2101.0px;top:1484.7px;width:21.0px;height:20.5px;background:linear-gradient(#222 0%,#111 50%,#000 52%);"></div>
<!-- nav buttons -->
<div style="left:2149.0px;top:1435.0px;width:69.3px;height:44.8px;background:linear-gradient(#acacac 0%,#9a9a9a 40%,#747474 100%);border-radius:7px 0 0 0;border-left:1px solid #555;border-top:1px solid #b8b8b8;"></div>
<div style="left:2170.7px;top:1441.5px;width:26.0px;height:26.0px;border-radius:50%;background:linear-gradient(#7a7a7a,#989898);"></div>
<div style="left:2218.3px;top:1435.0px;width:68.4px;height:44.8px;background:linear-gradient(#acacac 0%,#9a9a9a 40%,#747474 100%);border-radius:0;border-left:1px solid #555;border-top:1px solid #b8b8b8;"></div>
<div style="left:2239.5px;top:1441.5px;width:26.0px;height:26.0px;border-radius:50%;background:linear-gradient(#7a7a7a,#989898);"></div>
<div style="left:2286.7px;top:1435.0px;width:66.5px;height:44.8px;background:linear-gradient(#acacac 0%,#9a9a9a 40%,#747474 100%);border-radius:0;border-left:1px solid #555;border-top:1px solid #b8b8b8;"></div>
<div style="left:2306.9px;top:1441.5px;width:26.0px;height:26.0px;border-radius:50%;background:linear-gradient(#7a7a7a,#989898);"></div>
<div style="left:2353.2px;top:1435.0px;width:68.4px;height:44.8px;background:linear-gradient(#acacac 0%,#9a9a9a 40%,#747474 100%);border-radius:0;border-left:1px solid #555;border-top:1px solid #b8b8b8;"></div>
<div style="left:2374.4px;top:1441.5px;width:26.0px;height:26.0px;border-radius:50%;background:linear-gradient(#7a7a7a,#989898);"></div>
<div style="left:2421.6px;top:1435.0px;width:66.9px;height:44.8px;background:linear-gradient(#4c4c4c,#2e2e2e);border-radius:0;border-left:1px solid #555;border-top:1px solid #b8b8b8;"></div>
<div style="left:2442.1px;top:1441.5px;width:26.0px;height:26.0px;border-radius:50%;background:linear-gradient(#3a3a3a,#555);"></div>
<div style="left:2488.5px;top:1435.0px;width:67.9px;height:44.8px;background:linear-gradient(#acacac 0%,#9a9a9a 40%,#747474 100%);border-radius:0 7px 0 0;border-left:1px solid #555;border-top:1px solid #b8b8b8;"></div>
<div style="left:2509.4px;top:1441.5px;width:26.0px;height:26.0px;border-radius:50%;background:linear-gradient(#7a7a7a,#989898);"></div>
<svg style="left:0;top:0" width="2560" height="1528" viewBox="0 0 2560 1528"><g fill="#2a2a2a" stroke="none"><rect x="2178" y="1449" width="11" height="11"/><path d="M2248 1447.5 V1461.5 L2260 1454.5 Z"/></g><g fill="none" stroke="#2a2a2a" stroke-width="2"><path d="M2316 1449 H2313.5 V1460 H2316 M2324 1449 H2326.5 V1460 H2324"/><path d="M2387.5 1454.5 c-2.5 -4.5 -8 -4.5 -8 0 c0 4.5 5.5 4.5 8 0 c2.5 -4.5 8 -4.5 8 0 c0 4.5 -5.5 4.5 -8 0"/><path d="M2460.5 1450.5 a6 6 0 1 0 1.5 6" stroke="#111"/><path d="M2462.5 1446 V1452 H2456.5" stroke="#111"/></g></svg>
<div style="left:2149.0px;top:1479.8px;width:204.2px;height:48.7px;background:linear-gradient(#b2b2b2 0%,#a0a0a0 35%,#7e7e7e 100%);border-top:1px solid #4a4a4a;border-left:1px solid #555;border-radius:0;"></div>
<div style="left:2353.2px;top:1479.8px;width:203.2px;height:48.7px;background:linear-gradient(#b2b2b2 0%,#a0a0a0 35%,#7e7e7e 100%);border-top:1px solid #4a4a4a;border-left:1px solid #4a4a4a;"></div>
<div style="left:2180.5px;top:1490.0px;width:28.0px;height:28.0px;border-radius:50%;background:linear-gradient(#7e7e7e,#9c9c9c);"></div>
<div style="left:2500.5px;top:1490.0px;width:28.0px;height:28.0px;border-radius:50%;background:linear-gradient(#7e7e7e,#9c9c9c);"></div>
<svg style="left:2186px;top:1496px" width="18" height="16"><path d="M8 1.5 L2 8 L8 14.5 M15 1.5 L9 8 L15 14.5" fill="none" stroke="#2a2a2a" stroke-width="2.2"/></svg>
<svg style="left:2505.5px;top:1496px" width="18" height="16"><path d="M3 1.5 L9 8 L3 14.5 M10 1.5 L16 8 L10 14.5" fill="none" stroke="#2a2a2a" stroke-width="2.2"/></svg>
<div class="t" style="left:2235.8px;top:1488.8px;font-size:31px;line-height:31px;color:#262626;transform:scaleX(1.094);transform-origin:left center;">Back</div>
<div class="t" style="left:2396.5px;top:1488.8px;font-size:31px;line-height:31px;color:#262626;transform:scaleX(1.197);transform-origin:left center;">Next</div>
<!-- watermark -->
<svg style="left:0;top:0" width="2560" height="1528" viewBox="0 0 2560 1528"><defs><filter id="wmsh" x="-5%" y="-20%" width="110%" height="150%"><feGaussianBlur stdDeviation="1.6"/></filter></defs><g filter="url(#wmsh)" opacity="0.45" fill="none" stroke="#000" stroke-linejoin="round"><path d="M2227.2 1486.7 L2225.4 1455.9 L2174.7 1446.9 L2177.1 1497 L2206.7 1512 L2263.4 1492.7 L2233.2 1487.9 M2227.2 1486.7 L2188 1489.7" stroke-width="4" transform="translate(1.5 2)"/><text x="2234.5" y="1485.3" font-family='"Liberation Sans", sans-serif' font-weight="bold" font-size="31.4" textLength="197" lengthAdjust="spacingAndGlyphs" fill="#000" stroke-width="2.5">NOTEBOOK</text><text x="2433.5" y="1485.3" font-family='"Liberation Sans", sans-serif' font-size="31.4" textLength="117" lengthAdjust="spacingAndGlyphs" fill="#000" stroke-width="2.5">CHECK</text></g><g fill="none" stroke-linejoin="round" stroke-linecap="round"><path d="M2227.2 1486.7 L2225.4 1455.9 L2174.7 1446.9 L2177.1 1497 L2206.7 1512 L2263.4 1492.7 L2233.2 1487.9 M2227.2 1486.7 L2188 1489.7" stroke="rgba(236,236,236,0.55)" stroke-width="5.6"/><path d="M2227.2 1486.7 L2225.4 1455.9 L2174.7 1446.9 L2177.1 1497 L2206.7 1512 L2263.4 1492.7 L2233.2 1487.9 M2227.2 1486.7 L2188 1489.7" stroke="rgba(142,38,48,0.80)" stroke-width="3.3"/><path d="M2189.8 1462.5 L2204.3 1480.7 L2232 1445.1" stroke="rgba(236,236,236,0.6)" stroke-width="7.4"/><path d="M2189.8 1462.5 L2204.3 1480.7 L2232 1445.1" stroke="rgba(56,56,60,0.88)" stroke-width="4.8"/></g><text x="2233.5" y="1483.3" font-family='"Liberation Sans", sans-serif' font-weight="bold" font-size="31.4" textLength="197" lengthAdjust="spacingAndGlyphs" fill="rgba(142,38,48,0.80)" stroke="rgba(236,236,236,0.62)" stroke-width="2.6" paint-order="stroke" stroke-linejoin="round">NOTEBOOK</text><text x="2233.5" y="1483.3" font-family='"Liberation Sans", sans-serif' font-weight="bold" font-size="31.4" textLength="197" lengthAdjust="spacingAndGlyphs" fill="none" stroke="rgba(142,38,48,0.80)" stroke-width="0.9">NOTEBOOK</text><text x="2432.5" y="1483.3" font-family='"Liberation Sans", sans-serif' font-size="31.4" textLength="117" lengthAdjust="spacingAndGlyphs" fill="rgba(44,44,46,0.80)" stroke="rgba(236,236,236,0.66)" stroke-width="2.4" paint-order="stroke" stroke-linejoin="round">CHECK</text><text x="2432.5" y="1483.3" font-family='"Liberation Sans", sans-serif' font-size="31.4" textLength="117" lengthAdjust="spacingAndGlyphs" fill="none" stroke="rgba(44,44,46,0.80)" stroke-width="1.1">CHECK</text></svg>
</body></html>
